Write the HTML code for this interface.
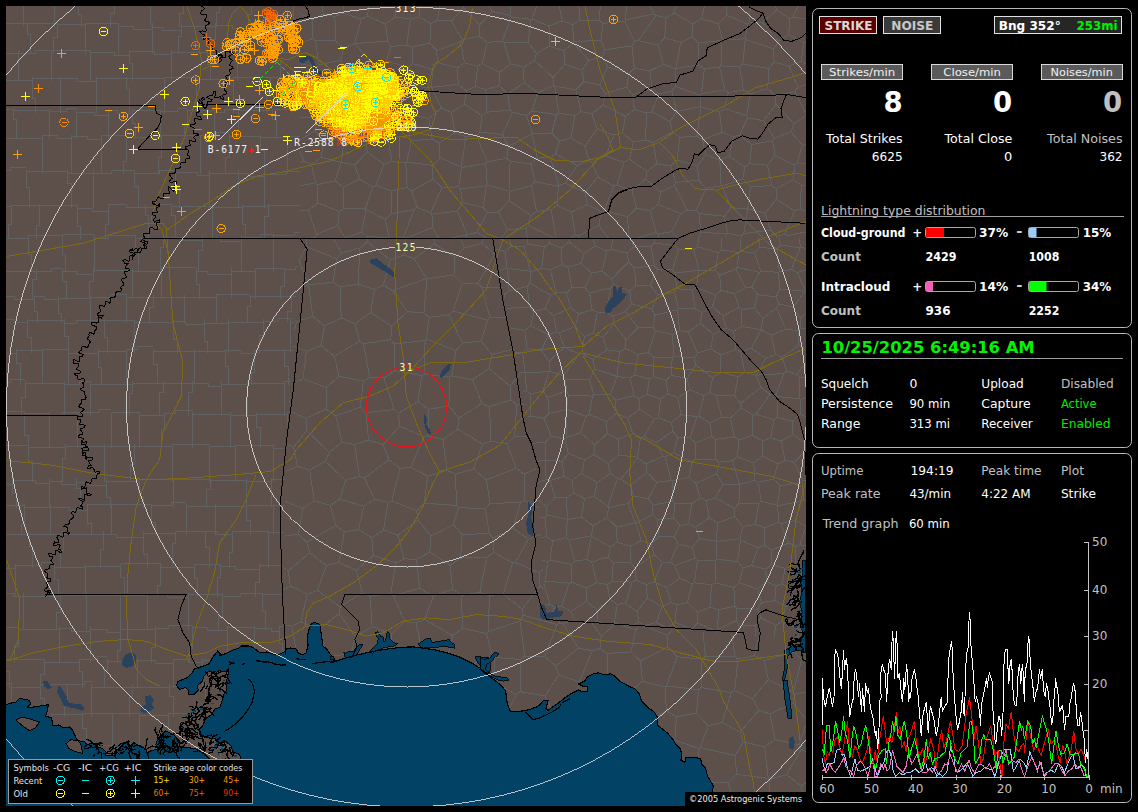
<!DOCTYPE html>
<html><head><meta charset="utf-8"><title>Lightning Detector</title>
<style>
html,body{margin:0;padding:0;background:#000;}
body{width:1138px;height:812px;position:relative;overflow:hidden;}
svg{position:absolute;left:0;top:0;display:block;}
text{font-family:"DejaVu Sans","Liberation Sans",sans-serif;}
</style></head><body>
<svg width="1138" height="812" viewBox="0 0 1138 812">
<rect width="1138" height="812" fill="#000"/>
<svg x="6" y="6" width="800" height="800" viewBox="6 6 800 800" overflow="hidden" shape-rendering="crispEdges">
<rect x="6" y="6" width="800" height="800" fill="#5d4f4a"/>
<path d="M806.0,479.9L802.5,481.0M806.0,451.8L804.8,451.3M804.8,451.3L794.4,462.4M794.4,462.4L802.5,481.0M795.2,564.7L785.2,568.4M795.2,564.7L795.9,546.7M785.2,568.4L771.7,564.7M788.9,543.1L795.9,546.7M788.9,543.1L771.5,550.0M771.7,564.7L771.5,550.0M778.5,522.0L765.0,527.8M778.5,522.0L780.7,523.6M765.0,527.8L764.9,545.5M780.7,523.6L788.9,543.1M764.9,545.5L771.5,550.0M795.2,564.7L798.7,567.7M799.8,544.8L795.9,546.7M799.8,544.8L806.0,545.6M798.7,567.7L802.4,566.6M805.9,565.5L806.0,565.5M798.7,567.7L802.3,576.4M806.0,581.1L805.9,581.1M799.2,238.0L800.6,247.6M800.6,247.6L806.0,248.3M536.1,461.3L545.2,460.5M545.4,442.1L545.6,460.0M545.4,442.1L532.8,443.3M545.2,460.5L545.6,460.0M545.2,460.5L546.2,479.5M537.4,482.6L546.2,479.5M545.6,460.0L562.1,461.2M546.2,479.5L550.0,480.7M550.0,480.7L563.9,476.3M563.9,476.3L562.1,461.2M563.9,476.3L572.0,480.5M568.4,453.5L562.1,461.2M568.4,453.5L584.5,460.0M584.5,460.0L581.6,473.5M572.0,480.5L581.6,473.5M564.6,439.0L551.0,436.1M564.6,439.0L566.8,437.4M566.8,437.4L566.1,409.6M551.0,436.1L544.2,418.3M566.1,409.6L549.0,413.3M544.2,418.3L549.0,413.3M545.4,442.1L551.0,436.1M568.4,453.5L564.6,439.0M594.3,454.5L584.5,460.0M594.3,454.5L594.5,444.8M580.5,432.6L594.5,444.8M580.5,432.6L566.8,437.4M592.6,396.1L568.4,395.1M592.6,396.1L589.3,414.5M589.3,414.5L585.9,416.4M585.9,416.4L566.6,409.2M568.4,395.1L566.6,409.2M580.5,432.6L585.9,416.4M566.1,409.6L566.6,409.2M575.1,326.6L559.0,332.7M575.1,326.6L578.7,313.9M553.7,315.7L570.7,307.7M553.7,315.7L556.7,331.8M556.7,331.8L559.0,332.7M570.7,307.7L578.7,313.9M570.7,307.7L566.5,293.1M591.9,309.7L578.7,313.9M591.9,309.7L589.7,293.2M571.9,287.9L566.5,293.1M571.9,287.9L585.1,287.3M589.7,293.2L585.1,287.3M591.9,309.7L597.4,312.1M589.7,293.2L611.1,287.7M597.4,312.1L605.7,312.0M605.7,312.0L611.1,287.7M699.4,538.6L716.4,541.3M699.4,538.6L695.7,527.4M695.7,527.4L709.2,517.8M716.4,541.3L717.6,523.0M709.2,517.8L717.6,523.0M716.6,541.5L716.4,541.3M716.6,541.5L739.8,538.7M734.7,516.5L742.8,526.7M734.7,516.5L717.6,523.0M739.8,538.7L742.8,526.7M692.5,547.5L699.4,538.6M692.5,547.5L678.3,544.2M688.6,523.9L695.7,527.4M688.6,523.9L679.9,525.6M679.9,525.6L674.1,536.9M678.3,544.2L674.1,536.9M695.1,558.3L692.5,547.5M695.1,558.3L674.6,565.4M674.6,565.4L670.0,562.1M678.3,544.2L670.0,562.1M780.7,523.6L795.2,520.6M799.8,544.8L806.0,526.1M806.0,526.1L795.2,520.6M806.0,526.1L806.0,526.0M806.0,629.5L805.9,629.5M806.0,606.6L805.9,606.7M792.8,590.4L792.1,602.9M792.8,590.4L782.1,583.7M782.1,583.7L776.1,585.8M776.1,585.8L774.8,600.6M774.8,600.6L785.6,606.5M785.6,606.5L792.1,602.9M800.4,583.5L792.8,590.4M800.4,605.8L792.1,602.9M785.2,568.4L782.1,583.7M781.6,621.7L800.2,630.0M781.6,621.7L785.6,606.5M801.9,629.3L800.2,630.0M761.5,602.6L757.8,589.2M761.5,602.6L774.8,600.6M776.1,585.8L766.4,581.3M757.8,589.2L766.4,581.3M771.7,564.7L765.8,569.2M765.8,569.2L766.4,581.3M797.3,272.5L806.0,269.6M797.3,272.5L791.4,269.5M800.6,247.6L800.2,247.8M800.2,247.8L791.4,269.5M797.3,272.5L805.5,290.9M805.5,290.9L804.9,291.2M778.6,272.3L779.6,288.9M778.6,272.3L779.3,271.6M779.3,271.6L791.4,269.5M804.9,291.2L779.6,288.9M805.5,290.9L806.0,291.0M544.2,418.3L530.4,416.0M527.7,417.0L530.4,416.0M522.8,353.0L524.8,372.3M522.8,353.0L515.1,352.2M519.2,373.2L524.8,372.3M550.1,604.3L543.7,583.5M550.1,604.3L554.4,607.5M543.7,582.7L545.3,581.0M554.4,607.5L561.7,606.3M561.7,606.3L569.2,583.2M545.3,581.0L569.2,583.2M545.3,581.0L547.7,561.8M542.3,560.3L547.7,561.8M571.5,564.3L550.0,560.2M571.5,564.3L571.2,581.9M569.2,583.2L571.2,581.9M547.7,561.8L550.0,560.2M555.1,497.7L550.0,480.7M555.1,497.7L546.5,506.6M546.5,506.6L538.5,500.2M594.1,496.1L597.2,482.6M594.1,496.1L584.6,498.6M597.2,482.6L581.6,473.5M572.0,480.5L573.7,492.8M584.6,498.6L573.7,492.8M555.1,497.7L566.9,497.8M546.5,506.6L547.1,515.0M547.1,515.0L567.1,519.2M567.1,519.2L566.9,497.8M566.9,497.8L573.7,492.8M547.8,397.4L542.9,391.0M547.8,397.4L566.3,391.0M542.9,391.0L549.2,371.7M566.3,391.0L565.7,379.0M549.2,371.7L549.8,371.4M549.8,371.4L563.3,375.8M565.7,379.0L563.3,375.8M549.0,413.3L547.8,397.4M530.4,416.0L530.6,394.2M530.6,394.2L542.9,391.0M568.4,395.1L566.3,391.0M530.6,394.2L526.3,390.7M526.3,390.7L525.5,372.8M525.5,372.8L549.2,371.7M589.5,379.7L593.7,394.5M589.5,379.7L565.7,379.0M593.7,394.5L592.6,396.1M579.3,354.1L564.4,347.2M579.3,354.1L563.3,375.8M564.4,347.2L549.1,361.2M549.1,361.2L549.8,371.4M594.5,444.8L607.3,433.6M589.3,414.5L606.2,421.4M606.2,421.4L607.3,433.6M593.7,394.5L610.6,394.2M616.2,413.5L606.2,421.4M616.2,413.5L615.6,400.4M610.6,394.2L615.6,400.4M706.1,500.6L715.4,498.1M706.1,500.6L709.2,517.8M734.7,516.5L734.7,508.3M715.4,498.1L734.7,508.3M755.3,524.3L758.8,503.0M755.3,524.3L742.8,526.7M758.8,503.0L738.9,503.3M738.9,503.3L734.7,508.3M672.0,481.1L689.2,477.1M672.0,481.1L672.9,501.1M674.9,503.0L672.9,501.1M674.9,503.0L691.8,503.5M691.8,503.5L700.2,497.8M700.2,497.8L695.9,483.5M695.9,483.5L689.2,477.1M688.6,523.9L691.8,503.5M679.9,525.6L673.6,518.0M673.6,518.0L674.9,503.0M706.1,500.6L700.2,497.8M715.4,498.1L722.9,484.2M716.7,473.9L722.9,484.2M716.7,473.9L695.9,483.5M567.8,267.1L571.9,287.9M567.8,267.1L562.2,264.6M556.2,292.0L550.2,269.8M556.2,292.0L566.5,293.1M562.2,264.6L550.2,269.8M550.7,295.3L529.7,283.1M550.7,295.3L545.0,308.6M545.0,308.6L534.0,311.4M529.7,283.1L527.4,286.4M527.4,286.4L529.1,307.0M534.0,311.4L529.1,307.0M553.7,315.7L545.0,308.6M556.2,292.0L550.7,295.3M585.1,287.3L591.8,273.0M611.6,279.2L613.5,284.7M611.6,279.2L602.1,271.1M611.1,287.7L613.5,284.7M591.8,273.0L602.1,271.1M567.8,267.1L581.1,263.4M591.8,273.0L581.1,263.4M569.1,241.9L570.3,238.0M569.1,241.9L583.9,253.6M583.9,253.6L595.3,245.9M595.3,245.9L592.7,238.0M561.2,247.9L562.2,264.6M561.2,247.9L569.1,241.9M581.1,263.4L583.9,253.6M602.1,271.1L606.8,251.1M606.8,251.1L595.3,245.9M611.6,279.2L628.6,261.9M635.8,285.7L634.6,268.0M635.8,285.7L629.8,291.0M629.8,291.0L613.5,284.7M628.6,261.9L634.6,268.0M606.8,251.1L611.2,249.4M611.2,249.4L627.0,253.1M628.6,261.9L627.0,253.1M713.4,334.2L700.3,323.3M713.4,334.2L710.6,348.7M710.6,348.7L697.5,353.2M697.5,353.2L688.2,332.0M688.2,332.0L700.3,323.3M677.5,309.8L678.4,308.3M677.5,309.8L679.6,330.7M688.2,332.0L679.6,330.7M700.3,323.3L702.0,312.8M702.0,312.8L695.0,308.7M678.4,308.3L695.0,308.7M631.3,303.7L625.6,311.6M631.3,303.7L652.0,309.1M625.6,311.6L638.0,327.6M638.0,327.6L653.4,327.6M653.4,327.6L654.7,315.2M652.0,309.1L654.7,315.2M629.8,291.0L631.3,303.7M605.7,312.0L613.5,316.3M613.5,316.3L625.6,311.6M650.2,285.3L635.8,285.7M650.2,285.3L657.5,294.8M657.5,294.8L652.0,309.1M613.5,316.3L613.9,324.0M613.9,324.0L626.0,339.8M626.0,339.8L638.0,327.6M657.5,294.8L674.5,292.3M677.5,309.8L654.7,315.2M674.5,292.3L678.4,308.3M550.1,604.3L545.1,604.8M554.4,607.5L549.6,620.3M800.2,630.0L796.3,639.3M780.2,485.7L777.4,505.4M780.2,485.7L801.9,482.4M801.9,482.4L803.9,499.6M777.7,505.8L777.4,505.4M777.7,505.8L801.3,501.3M803.9,499.6L801.3,501.3M761.2,501.3L777.4,505.4M761.2,501.3L758.3,482.2M758.3,482.2L773.4,479.2M773.4,479.2L780.2,485.7M794.4,462.4L785.1,460.5M785.1,460.5L777.9,464.0M802.5,481.0L801.9,482.4M777.9,464.0L773.4,479.2M806.0,500.9L803.9,499.6M778.5,522.0L777.7,505.8M765.0,527.8L755.3,524.3M758.8,503.0L761.2,501.3M795.2,520.6L801.3,501.3M737.6,561.5L742.7,567.9M737.6,561.5L740.5,540.3M740.5,540.3L758.1,547.7M758.1,547.7L751.5,565.5M751.5,565.5L742.7,567.9M716.6,541.5L716.8,559.2M739.8,538.7L740.5,540.3M716.8,559.2L737.6,561.5M764.9,545.5L758.1,547.7M765.8,569.2L751.5,565.5M757.8,589.2L739.4,582.8M739.4,582.8L742.7,567.9M761.5,602.6L757.6,609.2M733.9,587.6L739.4,582.8M733.9,587.6L734.7,606.2M734.7,606.2L736.5,608.2M736.5,608.2L757.6,609.2M781.6,621.7L775.8,625.3M775.8,625.3L761.1,617.8M757.6,609.2L761.1,617.8M779.6,238.0L780.2,245.1M780.2,245.1L776.9,248.8M776.9,248.8L759.4,247.4M759.4,247.4L758.9,238.0M800.2,247.8L780.2,245.1M779.3,271.6L776.9,248.8M778.6,272.3L760.8,271.2M760.8,271.2L754.6,252.6M754.6,252.6L759.4,247.4M740.1,238.0L740.3,251.7M754.6,252.6L740.3,251.7M804.9,291.2L793.2,307.2M806.0,313.4L800.3,318.1M793.2,307.2L800.3,318.1M806.0,328.3L800.3,328.3M800.3,318.1L800.3,328.3M776.4,297.1L778.6,303.8M776.4,297.1L757.8,294.5M757.8,294.5L754.1,307.8M776.6,307.8L778.6,303.8M776.6,307.8L763.1,318.5M763.1,318.5L754.1,307.8M779.6,288.9L776.4,297.1M793.2,307.2L778.6,303.8M759.6,272.3L737.2,267.4M759.6,272.3L751.7,287.0M745.2,287.7L751.7,287.0M745.2,287.7L736.1,268.9M736.1,268.9L737.2,267.4M760.8,271.2L759.6,272.3M740.3,251.7L738.9,252.6M738.9,252.6L737.2,267.4M757.8,294.5L751.7,287.0M734.7,293.8L745.2,287.7M734.7,293.8L721.1,290.4M719.7,275.3L721.1,290.4M719.7,275.3L736.1,268.9M509.2,238.0L511.2,246.4M511.2,246.4L505.3,251.4M505.3,251.4L495.2,249.2M505.3,251.4L506.9,267.8M499.3,270.6L506.9,267.8M541.1,350.4L527.1,348.8M541.1,350.4L548.8,334.6M527.1,348.8L524.8,330.4M548.8,334.6L530.8,325.8M530.8,325.8L524.8,330.4M522.8,353.0L527.1,348.8M524.8,372.3L525.5,372.8M549.1,361.2L541.1,350.4M556.7,331.8L548.8,334.6M559.0,332.7L564.4,347.2M510.4,327.9L524.8,330.4M534.0,311.4L530.8,325.8M506.6,308.4L529.1,307.0M799.1,377.2L797.1,374.6M799.1,377.2L799.5,398.7M797.1,374.6L786.5,370.9M799.5,398.7L777.7,396.6M783.9,373.4L786.5,370.9M783.9,373.4L775.8,395.0M775.8,395.0L777.7,396.6M806.0,361.7L797.1,374.6M806.0,377.3L799.1,377.2M800.2,399.4L806.0,398.3M800.2,399.4L799.5,398.7M762.8,440.9L752.3,435.2M762.8,440.9L770.5,437.8M770.5,437.8L774.1,419.5M752.3,435.2L753.0,415.2M774.1,419.5L755.8,414.3M753.0,415.2L755.8,414.3M785.1,460.5L781.2,441.0M762.3,456.2L777.9,464.0M762.3,456.2L762.8,440.9M781.2,441.0L770.5,437.8M777.6,417.4L774.1,419.5M777.6,417.4L777.7,396.6M775.8,395.0L770.0,394.3M770.0,394.3L755.8,414.3M792.2,421.4L792.6,434.6M792.2,421.4L800.3,414.0M800.3,414.0L806.0,417.0M792.6,434.6L804.4,442.4M804.4,442.4L806.0,441.1M781.2,441.0L792.6,434.6M777.6,417.4L792.2,421.4M800.2,399.4L800.3,414.0M804.8,451.3L804.4,442.4M526.3,390.7L522.8,391.8M596.7,582.6L586.2,588.0M596.7,582.6L591.8,562.0M591.8,562.0L587.0,559.5M586.2,588.0L571.2,581.9M571.5,564.3L574.5,561.2M587.0,559.5L574.5,561.2M611.9,581.4L632.1,582.1M611.9,581.4L613.2,563.1M635.1,568.0L630.3,562.3M635.1,568.0L636.2,580.2M636.2,580.2L632.1,582.1M630.3,562.3L613.2,563.1M591.8,562.0L608.4,556.8M591.4,536.0L587.0,559.5M591.4,536.0L610.5,547.2M610.5,547.2L608.4,556.8M596.7,582.6L607.3,584.7M607.3,584.7L611.9,581.4M608.4,556.8L613.2,563.1M608.7,507.6L606.7,517.7M608.7,507.6L628.1,503.6M606.7,517.7L616.8,527.1M628.1,503.6L635.2,522.8M635.2,522.8L616.8,527.1M630.3,562.3L630.8,546.3M610.5,547.2L617.1,542.4M630.8,546.3L617.1,542.4M546.4,536.6L552.8,541.2M546.4,536.6L540.9,538.0M552.8,541.2L550.0,560.2M546.4,536.6L545.4,517.1M545.4,517.1L539.6,518.0M545.4,517.1L547.1,515.0M697.3,246.8L699.1,238.0M697.3,246.8L718.2,252.7M721.2,238.0L721.6,249.9M721.6,249.9L718.2,252.7M693.8,249.7L697.3,246.8M693.8,249.7L698.9,270.2M698.9,270.2L715.6,270.5M715.6,270.5L718.2,252.7M738.9,252.6L721.6,249.9M719.7,275.3L715.6,270.5M733.6,331.2L726.3,328.2M733.6,331.2L741.8,326.4M726.3,328.2L722.9,316.0M722.9,316.0L738.9,307.3M741.8,326.4L741.6,309.8M738.9,307.3L741.6,309.8M713.4,334.2L726.3,328.2M712.4,306.4L702.0,312.8M712.4,306.4L722.9,316.0M712.4,306.4L716.0,295.1M734.7,293.8L738.9,307.3M721.1,290.4L716.0,295.1M761.0,329.7L763.1,318.5M761.0,329.7L741.8,326.4M754.1,307.8L741.6,309.8M679.6,330.7L672.4,334.5M653.4,327.6L655.4,330.7M655.4,330.7L672.4,334.5M697.5,353.2L694.5,357.8M694.5,357.8L673.8,356.5M672.4,334.5L673.8,356.5M695.8,365.1L694.5,357.8M695.8,365.1L687.0,378.6M672.1,357.9L673.8,356.5M672.1,357.9L671.6,375.3M687.0,378.6L671.6,375.3M610.6,394.2L617.0,376.5M615.6,400.4L634.1,395.8M617.0,376.5L629.9,378.1M629.9,378.1L634.1,395.8M607.9,506.4L594.1,496.1M607.9,506.4L617.4,478.5M597.2,482.6L610.3,473.4M617.4,478.5L610.3,473.4M607.9,506.4L608.7,507.6M633.8,496.2L629.9,485.4M633.8,496.2L628.1,503.6M629.9,485.4L620.8,479.2M617.4,478.5L620.8,479.2M594.3,454.5L608.3,463.7M610.3,473.4L608.3,463.7M633.8,496.2L648.4,498.6M648.4,498.6L656.9,482.2M629.9,485.4L646.8,472.6M646.8,472.6L656.9,482.2M648.4,498.6L653.0,505.2M653.0,505.2L672.9,501.1M672.0,481.1L671.1,480.6M656.9,482.2L671.1,480.6M762.3,456.2L753.8,462.9M758.3,482.2L755.0,480.2M753.8,462.9L755.0,480.2M738.9,503.3L739.7,484.6M755.0,480.2L739.7,484.6M722.9,484.2L739.2,484.2M739.7,484.6L739.2,484.2M716.7,473.9L719.0,462.2M739.2,484.2L732.4,460.8M719.0,462.2L732.4,460.8M753.8,462.9L737.4,456.9M737.4,456.9L732.4,460.8M752.3,435.2L738.9,440.1M737.4,456.9L738.9,440.1M550.2,269.8L541.8,268.3M529.7,283.1L531.1,271.7M541.8,268.3L531.1,271.7M527.4,286.4L509.0,290.9M507.7,268.3L509.0,290.9M507.7,268.3L530.5,271.2M531.1,271.7L530.5,271.2M511.2,246.4L524.1,246.8M507.7,268.3L506.9,267.8M530.5,271.2L524.1,246.8M611.2,249.4L612.7,238.0M627.0,253.1L633.3,247.1M631.8,238.0L633.3,247.1M657.7,269.3L654.2,265.5M657.7,269.3L672.4,269.8M654.2,265.5L651.1,246.6M672.4,269.8L678.5,249.9M678.5,249.9L674.9,245.6M674.9,245.6L654.5,243.1M654.5,243.1L651.1,246.6M650.2,285.3L657.7,269.3M634.6,268.0L654.2,265.5M633.3,247.1L651.1,246.6M693.8,249.7L678.5,249.9M676.2,238.0L674.9,245.6M654.2,238.0L654.5,243.1M696.4,287.5L698.7,270.4M696.4,287.5L692.4,289.8M692.4,289.8L676.8,288.8M698.7,270.4L674.9,273.0M674.9,273.0L676.8,288.8M698.9,270.2L698.7,270.4M716.0,295.1L696.4,287.5M695.0,308.7L692.4,289.8M674.5,292.3L676.8,288.8M672.4,269.8L674.9,273.0M589.5,379.7L594.9,369.0M617.0,376.5L617.0,376.5M617.0,376.5L594.9,369.0M607.3,584.7L610.1,599.3M625.6,603.5L632.1,582.1M625.6,603.5L617.3,604.2M610.1,599.3L617.3,604.2M586.2,588.0L586.1,601.4M561.7,606.3L571.1,611.4M571.1,611.4L586.1,601.4M610.1,599.3L596.9,609.7M586.1,601.4L596.9,609.7M630.6,626.1L630.4,626.5M630.6,626.1L614.2,623.4M614.2,623.4L611.0,625.0M638.9,622.3L637.1,611.5M638.9,622.3L630.6,626.1M637.1,611.5L625.6,603.5M617.3,604.2L614.2,623.4M596.9,609.7L597.5,620.5M597.5,620.5L604.1,624.5M644.7,625.6L638.9,622.3M644.7,625.6L645.0,627.6M644.7,625.6L656.2,622.4M656.2,622.4L667.0,627.7M667.4,629.3L667.0,627.7M715.5,582.9L715.9,560.1M715.5,582.9L711.6,584.8M711.6,584.8L694.4,582.8M694.4,582.8L697.4,560.5M697.4,560.5L715.9,560.1M733.9,587.6L715.5,582.9M716.8,559.2L715.9,560.1M734.7,606.2L718.3,609.8M718.3,609.8L709.9,607.0M709.9,607.0L711.6,584.8M695.1,558.3L697.4,560.5M736.5,608.2L736.1,620.7M761.1,617.8L755.5,625.2M755.5,625.2L739.3,626.4M739.3,626.4L736.1,620.7M718.3,609.8L717.7,629.7M736.1,620.7L717.7,629.7M755.5,625.2L755.5,636.1M739.3,626.4L739.3,634.9M785.9,329.3L798.2,330.7M785.9,329.3L771.1,335.1M771.1,335.1L775.6,354.3M799.0,345.2L782.3,357.4M799.0,345.2L798.2,330.7M775.6,354.3L782.3,357.4M800.3,328.3L798.2,330.7M776.6,307.8L785.9,329.3M761.1,329.8L771.1,335.1M761.1,329.8L761.0,329.7M806.0,350.7L799.0,345.2M786.5,370.9L782.3,357.4M504.7,298.2L505.0,294.4M505.0,294.4L503.7,293.4M509.0,290.9L505.0,294.4M656.2,622.4L662.1,606.6M637.1,611.5L647.2,598.2M662.1,606.6L647.2,598.2M636.2,580.2L646.4,584.8M647.2,598.2L646.4,584.8M662.4,562.3L654.1,554.5M662.4,562.3L653.7,581.9M654.1,554.5L635.1,568.0M653.7,581.9L646.4,584.8M565.9,537.7L567.3,519.4M565.9,537.7L569.3,540.1M569.3,540.1L591.3,535.7M567.3,519.4L581.2,517.1M581.2,517.1L593.0,525.9M593.0,525.9L591.3,535.7M552.8,541.2L565.9,537.7M567.1,519.2L567.3,519.4M574.5,561.2L569.3,540.1M591.4,536.0L591.3,535.7M584.6,498.6L581.2,517.1M606.7,517.7L593.0,525.9M616.8,527.1L617.1,542.4M636.0,523.2L641.2,540.6M636.0,523.2L652.5,514.6M652.5,514.6L657.3,519.5M657.3,519.5L658.9,537.0M641.2,540.6L651.1,543.9M658.9,537.0L651.1,543.9M635.2,522.8L636.0,523.2M630.8,546.3L641.2,540.6M653.0,505.2L652.5,514.6M673.6,518.0L657.3,519.5M674.1,536.9L658.9,537.0M654.1,554.5L651.1,543.9M662.4,562.3L670.0,562.1M783.9,373.4L756.4,375.2M770.0,394.3L760.8,387.4M756.4,375.2L760.8,387.4M753.0,415.2L741.5,408.0M741.5,408.0L740.6,403.4M760.8,387.4L740.6,403.4M695.8,365.1L712.7,377.7M710.6,348.7L721.0,354.8M712.7,377.7L720.9,372.1M721.0,354.8L720.9,372.1M733.6,331.2L736.0,349.3M721.0,354.8L736.0,349.3M709.8,392.5L716.0,395.4M709.8,392.5L712.7,377.7M716.0,395.4L734.7,395.9M734.7,395.9L738.0,376.9M720.9,372.1L738.0,376.9M709.8,392.5L704.0,395.6M687.0,378.6L690.2,390.0M704.0,395.6L690.2,390.0M625.4,348.6L619.6,351.6M625.4,348.6L638.1,354.4M629.9,378.1L634.7,375.1M617.0,376.5L619.6,351.6M634.7,375.1L638.1,354.4M625.4,348.6L626.0,339.8M655.4,330.7L648.1,352.6M638.1,354.4L648.1,352.6M672.1,357.9L653.2,356.9M653.2,356.9L648.1,352.6M671.6,375.3L666.1,380.3M690.2,390.0L677.8,397.7M677.8,397.7L667.9,393.8M667.9,393.8L666.1,380.3M653.2,356.9L653.6,376.6M666.1,380.3L653.6,376.6M634.7,375.1L649.3,379.1M653.6,376.6L649.3,379.1M616.2,413.5L627.6,418.1M607.3,433.6L618.0,439.2M627.6,418.1L632.7,433.6M618.0,439.2L632.7,433.6M608.3,463.7L618.3,454.9M618.0,439.2L618.3,454.9M689.2,477.1L692.0,462.2M692.0,462.2L695.2,459.4M719.0,462.2L715.8,459.4M695.2,459.4L715.8,459.4M704.0,395.6L698.8,416.0M677.8,397.7L680.9,414.8M698.8,416.0L697.1,416.6M680.9,414.8L697.1,416.6M709.9,423.1L712.1,436.5M709.9,423.1L721.8,417.3M734.2,436.9L715.3,439.4M734.2,436.9L730.4,418.0M712.1,436.5L715.3,439.4M730.4,418.0L721.8,417.3M698.8,416.0L709.9,423.1M695.7,443.0L712.1,436.5M695.7,443.0L690.0,438.0M690.0,438.0L697.1,416.6M716.0,395.4L721.8,417.3M738.9,440.1L734.2,436.9M715.8,459.4L715.3,439.4M741.5,408.0L730.4,418.0M695.2,459.4L695.7,443.0M740.6,403.4L734.7,395.9M527.2,243.7L544.3,246.8M527.2,243.7L528.0,238.0M548.9,238.0L549.5,243.4M549.5,243.4L544.3,246.8M541.8,268.3L544.3,246.8M524.1,246.8L527.2,243.7M561.2,247.9L549.5,243.4M602.9,337.3L606.9,349.9M602.9,337.3L593.4,333.2M606.9,349.9L592.8,359.5M584.4,336.6L581.9,353.5M584.4,336.6L593.4,333.2M581.9,353.5L592.8,359.5M613.9,324.0L602.9,337.3M619.6,351.6L606.9,349.9M597.4,312.1L593.4,333.2M594.9,369.0L592.8,359.5M575.1,326.6L584.4,336.6M579.3,354.1L581.9,353.5M575.0,622.0L575.5,622.3M575.0,622.0L574.8,622.2M571.1,611.4L575.0,622.0M597.5,620.5L591.3,623.5M716.7,631.2L717.1,633.2M716.7,631.2L697.3,622.9M691.9,631.2L692.3,628.8M697.3,622.9L692.3,628.8M717.7,629.7L716.7,631.2M709.9,607.0L697.9,612.4M697.9,612.4L697.3,622.9M667.0,627.7L674.9,622.5M674.9,622.5L692.3,628.8M775.8,625.3L773.7,637.5M676.9,604.8L671.0,602.7M676.9,604.8L687.3,602.7M671.0,602.7L666.6,587.5M687.3,602.7L692.3,583.9M666.6,587.5L680.0,578.4M680.0,578.4L692.3,583.9M674.9,622.5L676.9,604.8M662.1,606.6L671.0,602.7M697.9,612.4L687.3,602.7M653.7,581.9L666.6,587.5M694.4,582.8L692.3,583.9M674.6,565.4L680.0,578.4M751.5,348.2L765.6,358.4M751.5,348.2L740.8,352.1M740.8,352.1L744.8,372.6M765.6,358.4L756.4,375.2M756.4,375.2L744.8,372.6M761.1,329.8L751.5,348.2M775.6,354.3L765.6,358.4M736.0,349.3L740.8,352.1M738.0,376.9L744.8,372.6M756.4,375.2L756.4,375.2M638.9,398.6L647.0,394.3M638.9,398.6L639.5,409.2M647.0,394.3L660.4,399.1M639.5,409.2L654.5,419.1M660.4,399.1L658.5,417.8M658.5,417.8L654.5,419.1M634.1,395.8L638.9,398.6M649.3,379.1L647.0,394.3M627.6,418.1L639.5,409.2M667.9,393.8L660.4,399.1M671.2,422.4L680.9,414.8M671.2,422.4L658.5,417.8M620.8,479.2L637.7,457.9M646.8,472.6L645.9,464.2M645.9,464.2L637.7,457.9M618.3,454.9L637.3,457.2M637.7,457.9L637.3,457.2M632.7,433.6L640.6,437.4M637.3,457.2L640.6,437.4M654.5,419.1L643.9,436.2M643.9,436.2L640.6,437.4M673.0,431.2L677.8,437.7M673.0,431.2L656.1,442.6M677.8,437.7L673.9,452.6M656.1,442.6L663.0,456.0M673.9,452.6L665.3,456.6M665.3,456.6L663.0,456.0M690.0,438.0L677.8,437.7M671.2,422.4L673.0,431.2M643.9,436.2L656.1,442.6M692.0,462.2L673.9,452.6M645.9,464.2L663.0,456.0M671.1,480.6L665.3,456.6M527.2,238.0L526.1,228.0M503.2,238.0L502.5,236.9M526.1,228.0L507.3,229.9M502.5,236.9L507.3,229.9M528.2,225.5L526.1,228.0M528.2,225.5L554.0,238.0M806.0,231.9L788.6,235.4M801.4,185.1L800.0,209.2M801.4,185.1L806.0,185.2M806.0,211.0L800.0,209.2M801.4,185.1L793.4,179.8M793.4,179.8L794.5,165.1M794.5,165.1L797.1,162.8M806.0,164.0L797.1,162.8M343.0,6.0L343.0,12.9M334.9,16.7L343.0,12.9M334.9,16.7L323.2,14.0M322.2,6.0L323.2,14.0M388.3,87.2L364.1,91.5M388.3,87.2L381.6,66.9M374.9,66.4L381.6,66.9M374.9,66.4L358.9,74.9M358.9,74.9L357.9,85.1M357.9,85.1L364.1,91.5M341.2,95.2L333.1,88.4M341.2,95.2L357.9,85.1M333.1,88.4L343.5,66.5M343.5,66.5L358.9,74.9M300.0,90.9L312.4,93.0M312.4,93.0L315.6,117.0M315.6,117.0L300.0,117.5M300.0,63.7L316.6,67.3M316.6,67.3L318.4,87.8M318.4,87.8L312.4,93.0M502.5,236.9L499.6,238.0M598.8,225.6L601.5,212.0M598.8,225.6L578.2,235.9M601.5,212.0L587.3,204.6M587.3,204.6L571.5,212.0M571.5,212.0L575.3,235.3M578.2,235.9L575.3,235.3M579.6,238.0L578.2,235.9M608.3,238.0L598.8,225.6M556.2,238.0L551.1,209.6M569.7,238.0L575.3,235.3M551.1,209.6L557.0,205.3M557.0,205.3L571.5,212.0M310.6,238.0L315.0,237.9M300.0,210.8L308.4,210.0M308.4,210.0L316.6,234.4M316.6,234.4L315.0,237.9M467.0,238.0L466.9,234.9M466.9,234.9L450.8,238.0M788.6,235.4L784.9,234.2M800.0,209.2L794.4,210.8M794.4,210.8L784.9,234.2M741.7,238.0L741.1,236.1M776.4,238.0L776.9,236.5M741.1,236.1L743.7,233.7M743.7,233.7L770.5,230.0M770.5,230.0L776.9,236.5M784.9,234.2L776.9,236.5M747.7,208.7L750.6,186.6M747.7,208.7L747.8,208.9M747.8,208.9L765.2,213.0M765.2,213.0L776.3,199.3M750.6,186.6L771.8,185.7M776.3,199.3L776.0,188.7M771.8,185.7L776.0,188.7M743.7,233.7L747.8,208.9M770.5,230.0L765.2,213.0M794.4,210.8L776.3,199.3M793.4,179.8L776.0,188.7M790.8,131.8L802.3,145.1M790.8,131.8L794.0,123.9M794.0,123.9L806.0,115.5M802.3,145.1L806.0,144.8M775.9,104.3L794.0,123.9M775.9,104.3L763.6,120.7M763.6,120.7L774.2,138.2M774.2,138.2L790.8,131.8M797.1,162.8L802.3,145.1M300.0,13.4L312.9,19.8M312.9,19.8L312.4,38.7M312.4,38.7L300.0,43.2M323.2,14.0L312.9,19.8M315.7,40.8L318.7,65.0M315.7,40.8L335.4,41.0M318.7,65.0L340.7,60.3M335.4,41.0L343.9,47.9M343.9,47.9L340.7,60.3M316.6,67.3L318.7,65.0M312.4,38.7L315.7,40.8M334.9,16.7L335.4,41.0M318.4,87.8L333.1,88.4M343.5,66.5L340.7,60.3M363.7,111.2L388.4,108.8M363.7,111.2L355.7,116.7M366.5,140.4L386.1,133.8M366.5,140.4L360.6,135.3M388.4,108.8L386.1,133.8M360.6,135.3L355.7,116.7M354.6,165.1L367.1,151.8M354.6,165.1L341.3,162.2M367.1,151.8L366.5,140.4M341.3,162.2L343.9,142.6M360.6,135.3L343.9,142.6M341.2,95.2L345.2,112.8M363.7,111.2L364.1,91.5M345.2,112.8L355.7,116.7M300.0,162.8L303.7,161.3M303.7,161.3L300.0,151.1M486.3,238.0L476.8,232.5M466.9,234.9L467.2,234.6M467.2,234.6L476.8,232.5M507.3,229.9L498.6,212.0M498.6,212.0L487.5,212.4M476.8,232.5L487.5,212.4M531.5,185.7L536.6,211.5M531.5,185.7L509.3,191.6M509.2,200.7L509.3,191.6M509.2,200.7L530.9,215.6M530.9,215.6L536.6,211.5M534.9,181.6L531.5,185.7M534.9,181.6L558.4,186.4M558.4,186.4L557.0,205.3M551.1,209.6L536.6,211.5M528.2,225.5L530.9,215.6M498.6,212.0L509.2,200.7M534.9,181.6L530.9,164.0M509.0,191.1L510.1,161.3M509.0,191.1L509.3,191.6M530.9,164.0L510.1,161.3M461.5,167.5L461.1,167.1M461.5,167.5L485.7,163.5M461.1,167.1L465.9,136.6M485.7,163.5L487.2,161.7M487.2,161.7L476.4,135.5M465.9,136.6L476.4,135.5M458.8,186.9L442.1,187.4M458.8,186.9L461.5,167.5M442.1,187.4L433.0,179.2M440.1,157.6L461.1,167.1M440.1,157.6L432.7,165.4M432.7,165.4L433.0,179.2M439.2,143.0L454.7,132.8M439.2,143.0L440.1,157.6M454.7,132.8L465.9,136.6M487.2,184.9L509.0,191.1M487.2,184.9L485.7,163.5M510.1,161.3L506.7,158.3M506.7,158.3L487.2,161.7M636.9,238.0L656.3,232.5M656.3,232.5L658.7,233.8M658.7,238.0L658.7,233.8M658.7,233.8L671.5,231.7M678.0,238.0L671.5,231.7M656.3,232.5L649.9,210.8M649.9,210.8L658.5,204.4M658.5,204.4L680.6,213.6M671.5,231.7L680.6,213.6M724.9,89.9L719.5,66.9M724.9,89.9L701.4,93.5M719.5,66.9L704.4,68.8M701.4,93.5L704.4,68.8M604.2,210.6L627.6,216.6M604.2,210.6L613.9,186.0M631.9,190.5L636.6,208.0M631.9,190.5L616.8,185.3M627.6,216.6L636.6,208.0M613.9,186.0L616.8,185.3M628.8,238.0L627.6,216.6M601.5,212.0L604.2,210.6M587.3,204.6L585.3,192.7M585.3,192.7L597.7,177.0M597.7,177.0L613.9,186.0M649.9,210.8L636.6,208.0M658.5,204.4L660.6,192.1M660.6,192.1L645.9,178.9M645.9,178.9L631.9,190.5M629.6,159.4L623.8,162.3M629.6,159.4L647.0,171.6M623.8,162.3L616.8,185.3M647.0,171.6L645.9,178.9M559.0,185.6L565.4,183.1M559.0,185.6L550.2,157.6M565.4,183.1L577.2,165.5M577.2,165.5L555.6,153.9M550.2,157.6L555.6,153.9M558.4,186.4L559.0,185.6M585.3,192.7L565.4,183.1M537.2,158.1L530.9,164.0M537.2,158.1L550.2,157.6M391.8,161.6L405.7,163.0M391.8,161.6L387.3,134.7M387.3,134.7L409.3,138.2M406.7,162.1L405.7,163.0M406.7,162.1L411.4,140.8M409.3,138.2L411.4,140.8M367.1,151.8L383.9,164.4M386.1,133.8L387.3,134.7M383.9,164.4L391.8,161.6M439.2,143.0L432.2,139.1M432.7,165.4L406.7,162.1M432.2,139.1L411.4,140.8M315.0,237.9L315.0,238.0M432.2,139.1L428.7,118.4M409.3,138.2L410.8,114.8M428.7,118.4L410.8,114.8M454.7,132.8L451.5,112.3M451.5,112.3L441.2,107.9M428.7,118.4L441.2,107.9M438.3,238.0L432.8,227.5M406.6,238.0L406.5,237.9M432.8,227.5L406.5,237.9M467.2,234.6L457.5,211.1M457.5,211.1L431.9,214.3M432.8,227.5L431.9,214.3M706.1,188.2L696.2,210.1M706.1,188.2L698.7,180.1M698.7,180.1L675.9,182.5M687.3,210.1L696.2,210.1M687.3,210.1L674.4,185.5M674.4,185.5L675.9,182.5M697.6,165.8L677.0,159.9M697.6,165.8L698.7,180.1M677.0,159.9L670.6,165.8M670.6,165.8L675.9,182.5M660.6,192.1L674.4,185.5M680.6,213.6L687.3,210.1M647.0,171.6L656.9,163.9M656.9,163.9L670.6,165.8M697.6,165.8L705.8,154.6M705.8,154.6L719.8,160.3M706.1,188.2L721.1,185.8M719.8,160.3L721.1,185.8M731.0,207.8L722.1,186.2M731.0,207.8L747.7,208.7M750.6,186.6L742.6,178.9M742.6,178.9L722.1,186.2M696.9,136.3L702.4,139.8M696.9,136.3L701.0,107.0M702.4,139.8L722.0,132.3M722.0,132.3L719.5,112.0M701.0,107.0L719.5,112.0M705.8,154.6L702.4,139.8M680.1,137.3L677.0,159.9M680.1,137.3L696.9,136.3M719.8,160.3L729.2,155.9M722.0,132.3L733.4,136.9M733.4,136.9L729.2,155.9M747.7,118.0L739.4,135.0M747.7,118.0L746.6,115.4M724.4,108.7L746.6,115.4M724.4,108.7L719.5,112.0M733.4,136.9L739.4,135.0M742.6,178.9L745.0,167.2M721.1,185.8L722.1,186.2M729.2,155.9L745.0,167.2M775.1,155.7L767.3,165.1M775.1,155.7L772.7,140.9M772.7,140.9L751.7,144.5M767.3,165.1L749.5,163.7M749.5,163.7L751.7,144.5M794.5,165.1L775.1,155.7M771.8,185.7L767.3,165.1M774.2,138.2L772.7,140.9M763.6,120.7L747.7,118.0M739.4,135.0L751.7,144.5M745.0,167.2L749.5,163.7M806.0,41.9L803.6,42.4M806.0,63.9L801.3,60.9M801.3,60.9L803.6,42.4M775.9,104.3L775.7,95.6M806.0,113.5L794.5,91.6M775.7,95.6L794.5,91.6M806.0,84.7L797.9,87.3M801.3,60.9L789.0,66.2M789.0,66.2L797.9,87.3M797.9,87.3L794.5,91.6M511.2,17.1L531.0,19.4M511.2,17.1L502.3,41.2M531.0,19.4L528.3,42.9M528.3,42.9L503.8,42.6M502.3,41.2L503.8,42.6M510.0,15.5L510.9,6.0M510.0,15.5L492.3,11.3M489.4,6.0L492.3,11.3M511.2,17.1L510.0,15.5M531.0,19.4L532.1,18.9M532.1,18.9L536.7,6.0M806.0,19.0L792.4,17.1M788.6,34.7L803.6,42.4M788.6,34.7L790.0,18.8M790.0,18.8L792.4,17.1M451.5,21.0L463.4,7.9M451.5,21.0L462.2,39.7M463.4,7.9L479.7,25.1M462.2,39.7L479.3,36.3M479.3,36.3L479.7,25.1M463.7,6.0L463.4,7.9M492.3,11.3L479.7,25.1M502.3,41.2L487.1,42.3M487.1,42.3L479.3,36.3M311.5,164.3L321.3,157.3M311.5,164.3L315.6,182.7M321.3,157.3L341.2,162.3M341.2,162.3L335.1,180.9M335.1,180.9L317.2,184.7M315.6,182.7L317.2,184.7M300.0,185.7L315.6,182.7M303.7,161.3L311.5,164.3M308.4,210.0L317.9,203.0M317.9,203.0L317.2,184.7M335.6,138.9L338.2,116.2M335.6,138.9L323.6,141.9M323.6,141.9L315.1,130.5M315.1,130.5L316.1,117.5M316.1,117.5L338.2,116.2M343.9,142.6L335.6,138.9M345.2,112.8L338.2,116.2M341.3,162.2L341.2,162.3M321.3,157.3L323.6,141.9M300.0,140.1L315.1,130.5M315.6,117.0L316.1,117.5M460.6,189.2L462.5,202.5M460.6,189.2L486.4,185.7M462.5,202.5L483.3,207.5M486.4,185.7L483.3,207.5M458.8,186.9L460.6,189.2M442.1,187.4L430.6,212.9M457.5,211.1L462.5,202.5M431.9,214.3L430.6,212.9M487.2,184.9L486.4,185.7M487.5,212.4L483.3,207.5M559.5,141.2L551.8,133.3M559.5,141.2L555.6,153.9M551.8,133.3L532.4,133.3M537.2,158.1L532.2,133.7M532.4,133.3L532.2,133.7M506.7,158.3L508.5,146.5M532.2,133.7L508.5,146.5M701.0,232.3L699.0,213.4M701.0,232.3L727.0,233.8M699.0,213.4L724.3,216.3M724.3,216.3L727.7,233.3M727.7,233.3L727.0,233.8M698.6,238.0L701.0,232.3M696.2,210.1L699.0,213.4M725.2,238.0L727.0,233.8M731.0,207.8L724.3,216.3M741.1,236.1L727.7,233.3M354.6,165.1L359.7,178.9M335.1,180.9L343.7,187.3M343.7,187.3L359.7,178.9M457.4,67.7L458.3,84.5M457.4,67.7L437.4,62.5M458.3,84.5L431.5,87.3M437.4,62.5L433.1,69.8M433.1,69.8L431.0,86.9M431.5,87.3L431.0,86.9M436.7,50.4L437.4,62.5M436.7,50.4L460.4,42.3M460.4,42.3L464.5,62.8M464.5,62.8L457.4,67.7M464.2,104.1L451.5,112.3M464.2,104.1L466.7,90.8M466.7,90.8L458.3,84.5M441.2,107.9L431.5,87.3M409.4,112.7L426.6,88.0M409.4,112.7L390.7,106.5M390.7,106.5L390.4,89.7M390.4,89.7L409.8,83.1M409.8,83.1L426.6,88.0M410.8,114.8L409.4,112.7M431.0,86.9L426.6,88.0M388.4,108.8L390.7,106.5M388.3,87.2L390.4,89.7M433.0,179.2L411.6,191.0M430.6,212.9L417.1,207.4M417.1,207.4L411.6,191.0M405.7,163.0L407.2,187.6M411.6,191.0L407.2,187.6M788.6,34.7L778.7,41.4M789.0,66.2L774.1,62.1M774.1,62.1L773.6,49.0M778.7,41.4L773.6,49.0M776.7,10.0L790.0,18.8M776.7,10.0L762.4,22.7M778.7,41.4L762.4,22.7M750.4,6.0L749.2,22.9M775.0,6.0L776.7,10.0M762.4,22.7L749.2,22.9M767.7,88.7L768.9,68.5M767.7,88.7L750.3,94.0M768.9,68.5L742.8,64.0M750.3,94.0L743.4,89.9M743.4,89.9L739.6,66.5M739.6,66.5L742.8,64.0M775.7,95.6L767.7,88.7M774.1,62.1L768.9,68.5M746.6,115.4L750.3,94.0M773.6,49.0L745.3,39.3M745.3,39.3L742.8,64.0M724.4,108.7L728.3,92.8M728.3,92.8L743.4,89.9M724.9,89.9L728.3,92.8M719.5,66.9L720.9,65.9M720.9,65.9L739.6,66.5M722.4,40.0L745.0,38.8M722.4,40.0L718.4,23.7M726.5,15.3L718.4,23.7M726.5,15.3L748.0,24.2M748.0,24.2L745.0,38.8M720.9,65.9L722.0,40.5M722.0,40.5L722.4,40.0M745.3,39.3L745.0,38.8M701.7,18.6L718.4,23.7M701.7,18.6L704.4,6.0M726.3,6.0L726.5,15.3M749.2,22.9L748.0,24.2M466.7,90.8L475.1,86.4M464.5,62.8L477.8,66.1M475.1,86.4L477.8,66.1M460.4,42.3L462.2,39.7M487.1,42.3L482.2,63.4M477.8,66.1L482.2,63.4M792.4,17.1L798.3,6.0M451.5,21.0L437.5,20.5M437.5,20.5L439.7,6.0M381.6,66.9L386.5,61.0M409.8,83.1L408.1,67.4M386.5,61.0L408.1,67.4M433.1,69.8L412.8,63.5M408.1,67.4L412.8,63.5M387.8,41.0L385.6,23.9M387.8,41.0L354.9,43.6M385.6,23.9L367.5,16.1M354.7,43.5L361.2,19.2M354.7,43.5L354.9,43.6M361.2,19.2L367.5,16.1M374.9,66.4L354.9,43.6M386.5,61.0L390.8,46.6M390.8,46.6L387.8,41.0M368.7,6.0L367.5,16.1M395.4,6.0L395.5,17.0M395.5,17.0L385.6,23.9M343.0,12.9L361.2,19.2M343.9,47.9L354.7,43.5M429.9,43.0L412.7,47.1M429.9,43.0L430.7,23.8M430.7,23.8L419.4,16.8M412.7,47.1L406.7,45.1M406.7,45.1L410.4,19.1M410.4,19.1L419.4,16.8M436.7,50.4L429.9,43.0M412.8,63.5L412.7,47.1M437.5,20.5L430.7,23.8M419.3,6.0L419.4,16.8M390.8,46.6L406.7,45.1M395.5,17.0L410.4,19.1M510.1,110.2L487.0,112.2M510.1,110.2L512.3,112.4M512.3,112.4L502.6,134.6M502.6,134.6L479.7,132.0M479.7,132.0L482.0,115.6M487.0,112.2L482.0,115.6M532.4,133.3L526.5,115.3M526.5,115.3L512.3,112.4M508.5,146.5L502.6,134.6M476.4,135.5L479.7,132.0M464.2,104.1L482.0,115.6M485.9,89.7L475.1,86.4M485.9,89.7L487.0,112.2M656.9,163.9L653.0,142.5M680.1,137.3L672.5,132.1M672.5,132.1L653.0,142.5M629.6,159.4L633.2,142.0M633.2,142.0L645.4,140.0M653.0,142.5L645.4,140.0M551.8,133.3L556.5,114.6M526.5,115.3L531.9,111.0M531.9,111.0L556.5,114.6M510.5,63.8L499.7,72.5M510.5,63.8L523.6,67.2M523.6,67.2L524.1,82.8M524.1,82.8L507.8,93.9M499.7,72.5L498.9,85.8M507.8,93.9L498.9,85.8M503.8,42.6L510.5,63.8M482.2,63.4L499.7,72.5M510.1,110.2L507.8,93.9M531.9,111.0L537.9,92.8M537.9,92.8L524.1,82.8M485.9,89.7L498.9,85.8M528.3,42.9L536.5,53.4M532.1,18.9L549.0,26.2M549.0,26.2L549.0,46.2M549.0,46.2L536.5,53.4M523.6,67.2L534.6,60.6M536.5,53.4L534.6,60.6M633.2,142.0L622.4,132.6M622.4,132.6L625.6,116.5M625.6,116.5L634.4,109.5M645.4,140.0L646.7,113.0M634.4,109.5L646.7,113.0M317.9,203.0L339.2,211.4M343.7,187.3L343.8,208.6M339.2,211.4L343.8,208.6M316.6,234.4L337.8,225.3M339.2,211.4L337.8,225.3M337.8,225.3L345.1,238.0M383.9,164.4L376.0,185.8M407.2,187.6L391.5,190.7M391.5,190.7L376.0,185.8M359.7,178.9L372.7,187.2M376.0,185.8L372.7,187.2M343.8,208.6L365.3,208.5M372.7,187.2L365.3,208.5M614.0,135.1L597.2,128.8M614.0,135.1L605.9,156.0M597.2,128.8L585.0,146.3M585.0,146.3L588.9,160.6M605.9,156.0L591.6,162.0M588.9,160.6L591.6,162.0M623.8,162.3L605.9,156.0M622.4,132.6L614.0,135.1M559.5,141.2L571.0,137.8M577.2,165.5L588.9,160.6M571.0,137.8L585.0,146.3M597.7,177.0L591.6,162.0M625.6,116.5L603.0,105.1M597.2,128.8L591.8,113.8M591.8,113.8L603.0,105.1M549.0,26.2L562.1,20.9M562.1,20.9L559.1,6.0M562.1,20.9L572.5,24.8M578.9,6.0L579.7,20.1M572.5,24.8L579.7,20.1M701.7,18.6L692.9,23.9M675.6,6.0L674.4,13.0M692.9,23.9L674.4,13.0M626.8,87.1L629.0,73.3M626.8,87.1L632.5,94.8M632.5,94.8L652.2,88.6M629.0,73.3L634.3,68.2M634.3,68.2L649.8,70.9M649.8,70.9L652.2,88.6M607.4,66.8L599.6,84.9M607.4,66.8L629.0,73.3M605.4,93.5L599.6,84.9M605.4,93.5L626.8,87.1M634.4,109.5L632.5,94.8M603.0,105.1L605.4,93.5M672.5,132.1L670.1,121.5M646.7,113.0L652.0,111.9M670.1,121.5L652.0,111.9M652.2,88.6L658.7,94.0M652.0,111.9L658.7,94.0M345.4,238.0L361.6,232.1M365.3,208.5L366.1,209.5M366.1,209.5L361.6,232.1M367.0,238.0L367.3,236.8M367.3,236.8L361.6,232.1M571.0,137.8L574.7,115.4M591.8,113.8L581.2,111.7M574.7,115.4L581.2,111.7M556.5,114.6L558.7,113.2M574.7,115.4L558.7,113.2M581.8,70.2L584.0,81.7M581.8,70.2L564.8,64.2M584.0,81.7L575.8,89.9M575.8,89.9L554.7,86.2M564.8,64.2L553.1,77.4M553.1,77.4L553.6,85.2M553.6,85.2L554.7,86.2M599.6,84.9L584.0,81.7M581.2,111.7L575.8,89.9M558.7,113.2L554.7,86.2M563.9,50.6L549.0,46.2M563.9,50.6L564.8,64.2M534.6,60.6L553.1,77.4M537.9,92.8L553.6,85.2M563.9,50.6L573.3,43.3M572.5,24.8L574.0,41.5M573.3,43.3L574.0,41.5M581.8,70.2L589.0,60.5M573.3,43.3L589.0,60.5M607.4,66.8L602.3,56.8M589.0,60.5L602.3,56.8M650.2,6.0L654.1,14.0M654.1,14.0L625.5,19.9M625.5,19.9L626.6,6.0M579.7,20.1L599.6,20.3M599.6,20.3L600.2,6.0M654.1,14.0L656.1,15.5M674.4,13.0L666.1,17.6M656.1,15.5L666.1,17.6M704.4,68.8L698.4,64.9M722.0,40.5L698.1,43.0M698.4,64.9L698.1,43.0M692.9,23.9L692.9,36.9M698.1,43.0L692.9,36.9M676.7,111.5L671.8,91.1M676.7,111.5L700.6,106.5M700.6,106.5L700.1,95.5M700.1,95.5L675.6,86.2M675.6,86.2L671.8,91.1M670.1,121.5L676.7,111.5M658.7,94.0L671.8,91.1M701.0,107.0L700.6,106.5M701.4,93.5L700.1,95.5M391.3,213.8L385.1,219.4M391.3,213.8L414.2,209.6M385.1,219.4L389.4,237.4M414.2,209.6L403.7,237.0M403.7,237.0L397.9,238.0M389.9,238.0L389.4,237.4M391.5,190.7L391.3,213.8M366.1,209.5L385.1,219.4M417.1,207.4L414.2,209.6M367.3,236.8L389.4,237.4M406.5,237.9L403.7,237.0M602.9,23.4L624.8,21.2M602.9,23.4L601.0,40.4M604.8,49.8L601.0,40.4M604.8,49.8L631.9,45.9M624.8,21.2L634.7,41.2M631.9,45.9L634.7,41.2M625.5,19.9L624.8,21.2M599.6,20.3L602.9,23.4M574.0,41.5L601.0,40.4M602.3,56.8L604.8,49.8M634.3,68.2L631.9,45.9M638.2,40.7L656.1,15.5M638.2,40.7L634.7,41.2M658.0,45.0L664.7,37.7M658.0,45.0L663.3,64.2M664.7,37.7L680.8,42.3M680.8,42.3L675.7,68.6M663.3,64.2L675.4,68.8M675.4,68.8L675.7,68.6M638.2,40.7L658.0,45.0M666.1,17.6L664.7,37.7M649.8,70.9L663.3,64.2M692.9,36.9L680.8,42.3M698.4,64.9L675.7,68.6M675.6,86.2L675.4,68.8M794.3,694.3L806.0,692.1M794.3,694.3L793.6,692.0M806.0,660.0L801.5,659.7M793.6,692.0L801.5,659.7M793.9,639.1L793.9,645.1M794.0,651.3L794.0,652.0M801.5,659.7L794.0,652.0M289.0,412.4L290.5,411.6M289.8,399.9L290.5,411.6M520.2,691.6L516.1,694.6M520.2,691.6L520.8,659.4M495.0,657.5L520.8,659.4M495.0,657.5L493.8,675.2M493.6,678.0L493.5,679.4M516.1,694.6L502.3,686.8M523.2,615.3L557.0,624.5M523.2,615.3L519.9,621.2M519.9,621.2L524.8,656.0M524.8,656.0L544.8,656.6M544.8,656.6L557.0,624.5M433.5,596.2L452.5,589.0M433.5,596.2L419.7,588.2M419.7,588.2L416.4,559.4M452.5,589.0L450.1,565.3M450.1,565.3L429.8,552.2M429.8,552.2L416.4,559.4M424.6,619.4L433.5,596.2M424.6,619.4L416.3,622.8M393.3,595.7L419.7,588.2M393.3,595.7L404.5,621.5M404.5,621.5L416.3,622.8M332.2,656.3L344.2,654.4M424.6,619.4L452.8,635.7M416.3,622.8L420.0,642.8M420.8,646.8L421.0,647.9M452.8,635.7L451.2,642.4M450.0,647.3L448.5,653.3M404.5,621.5L391.8,634.1M391.8,634.1L391.9,641.2M391.9,646.4L392.0,648.4M392.0,648.4L392.0,648.4M392.0,648.4L391.7,648.5M794.3,694.3L793.2,703.3M806.0,719.3L793.2,703.3M776.8,806.0L768.8,800.8M768.8,800.8L761.8,806.0M786.4,774.7L801.3,749.4M786.4,774.7L801.0,785.8M801.0,785.8L806.0,782.7M801.3,749.4L806.0,751.6M806.0,805.8L801.0,785.8M769.5,779.4L768.8,800.8M769.5,779.4L786.4,774.7M799.2,744.6L806.0,724.7M799.2,744.6L801.3,749.4M578.3,690.1L578.6,684.0M578.6,684.0L578.7,681.7M550.9,708.3L547.7,701.6M547.2,700.5L545.1,696.1M545.1,696.1L558.6,674.8M558.6,674.8L578.7,681.7M520.2,691.6L545.1,696.1M509.3,708.7L516.1,694.6M520.8,659.4L524.8,656.0M544.8,656.6L555.8,666.1M555.8,666.1L558.6,674.8M677.1,656.7L667.9,646.8M677.1,656.7L666.6,686.0M666.6,686.0L665.0,687.0M642.4,681.2L665.0,687.0M642.4,681.2L640.5,661.0M667.9,646.8L640.5,661.0M793.6,692.0L788.4,689.5M783.7,687.2L768.4,679.7M794.0,652.0L791.1,652.8M784.0,654.8L764.0,660.6M764.0,660.6L768.4,679.7M758.9,636.4L754.4,655.7M764.0,660.6L754.4,655.7M731.9,634.3L735.0,657.0M703.0,632.1L705.3,656.4M705.3,656.4L735.0,657.0M754.4,655.7L738.0,658.9M738.0,658.9L735.0,657.0M702.1,659.2L705.3,656.4M702.1,659.2L677.1,656.7M672.2,629.7L667.6,635.4M667.6,635.4L667.9,646.8M287.0,443.7L293.5,447.5M305.9,418.4L290.5,411.6M305.9,418.4L306.6,430.5M306.6,430.5L293.5,447.5M452.8,635.7L462.2,628.2M452.5,589.0L461.8,595.5M461.8,595.5L462.2,628.2M491.8,654.5L486.6,633.6M490.5,656.3L488.0,657.4M477.3,662.2L473.3,664.0M462.2,628.2L486.6,633.6M519.9,621.2L488.9,631.4M495.0,657.5L494.8,657.4M488.9,631.4L486.6,633.6M523.2,615.3L522.1,609.0M522.1,609.0L503.4,594.2M488.9,631.4L489.1,595.5M503.4,594.2L489.1,595.5M461.8,595.5L479.9,592.1M489.1,595.5L479.9,592.1M522.1,609.0L540.1,586.3M559.9,623.3L557.0,624.5M559.9,623.3L559.9,621.1M540.1,586.3L544.0,588.4M555.8,666.1L578.6,648.2M559.9,623.3L562.9,624.0M578.6,648.2L562.9,624.0M579.3,681.5L592.4,650.7M579.3,681.5L578.7,681.7M578.6,648.2L592.4,650.7M569.1,621.8L562.9,624.0M322.0,639.8L324.0,646.8M310.5,625.7L300.9,621.8M300.9,621.8L291.7,626.1M291.7,626.1L295.9,648.9M282.6,624.8L291.7,626.1M372.2,626.7L355.3,636.6M372.2,626.7L370.0,596.2M355.3,636.6L339.2,613.6M370.0,596.2L362.3,592.6M362.3,592.6L340.2,606.9M339.2,613.6L340.2,606.9M391.8,634.1L389.1,633.1M387.0,632.3L372.2,626.7M351.8,651.2L355.3,636.6M393.3,595.7L390.7,594.0M390.7,594.0L370.0,596.2M320.5,628.1L339.2,613.6M656.8,716.2L666.4,710.7M642.4,681.2L633.8,688.5M666.4,710.7L665.0,687.0M582.5,682.0L579.3,681.5M607.9,674.4L607.0,653.5M640.5,661.0L630.9,651.9M630.9,651.9L607.0,653.5M592.4,650.7L600.3,648.5M592.3,623.6L601.1,636.4M601.1,636.4L600.3,648.5M607.0,653.5L600.3,648.5M799.2,744.6L774.8,739.6M793.2,703.3L790.5,704.5M786.1,706.5L770.1,713.8M774.8,739.6L770.1,713.8M666.4,710.7L676.4,716.8M673.7,740.7L674.8,740.2M676.4,716.8L674.8,740.2M674.8,740.2L699.4,748.7M697.9,758.1L699.4,748.7M711.9,783.4L712.7,782.2M708.8,778.3L712.7,782.2M735.2,806.0L728.0,782.9M712.7,782.2L728.0,782.9M308.5,285.1L296.7,290.2M308.5,285.1L312.7,316.5M312.7,316.5L296.7,321.5M296.7,321.5L294.8,320.1M294.2,330.3L296.7,321.5M342.1,442.4L329.4,452.4M342.1,442.4L335.8,415.9M305.9,418.4L326.0,409.0M329.4,452.4L306.6,430.5M335.8,415.9L326.0,409.0M492.9,538.3L489.3,533.3M492.9,538.3L493.9,552.3M489.3,533.3L462.2,534.9M493.9,552.3L486.8,557.2M486.8,557.2L460.5,558.1M460.5,558.1L462.2,534.9M485.3,508.7L489.3,533.3M485.3,508.7L458.5,507.7M453.4,524.7L458.5,507.7M453.4,524.7L462.2,534.9M512.5,562.9L503.4,594.2M512.5,562.9L493.9,552.3M479.9,592.1L486.8,557.2M450.1,565.3L460.5,558.1M429.8,552.2L430.8,536.1M430.8,536.1L453.4,524.7M490.0,503.5L485.3,508.7M490.0,503.5L520.6,502.4M492.9,538.3L513.0,528.4M513.0,528.4L520.6,502.4M427.7,476.2L447.1,470.3M427.7,476.2L424.1,503.2M456.9,505.5L424.1,503.2M456.9,505.5L455.1,474.2M455.1,474.2L447.1,470.3M490.0,503.5L486.4,479.8M473.5,469.0L486.4,479.8M473.5,469.0L455.1,474.2M458.5,507.7L456.9,505.5M516.2,468.3L507.1,443.7M516.2,468.3L486.4,479.8M473.5,469.0L482.6,444.3M507.1,443.7L490.8,441.2M482.6,444.3L490.8,441.2M638.8,627.1L635.8,629.8M635.8,629.8L622.3,625.9M667.6,635.4L649.0,627.9M630.9,651.9L635.8,629.8M601.1,636.4L614.2,625.2M764.6,746.9L743.2,741.8M764.6,746.9L768.3,778.4M743.2,741.8L735.2,755.6M735.2,755.6L736.5,774.3M768.3,778.4L736.5,774.3M769.5,779.4L768.3,778.4M774.8,739.6L764.6,746.9M699.4,748.7L700.4,747.7M700.4,747.7L735.2,755.6M728.0,782.9L736.5,774.3M738.0,658.9L734.6,690.8M768.4,679.7L752.5,698.5M734.6,690.8L752.5,698.5M770.1,713.8L758.9,710.3M743.2,741.8L740.1,732.2M740.1,732.2L758.9,710.3M752.5,698.5L758.9,710.3M400.2,468.4L410.9,467.3M400.2,468.4L391.8,500.7M410.9,467.3L427.7,476.2M424.1,503.2L416.6,510.8M391.8,500.7L416.6,510.8M430.8,536.1L418.2,520.2M418.2,520.2L416.6,510.8M290.8,384.5L303.1,378.8M293.2,346.0L306.4,351.3M306.4,351.3L303.1,378.8M326.0,409.0L326.3,387.5M303.1,378.8L326.3,387.5M312.7,316.5L324.5,325.8M306.4,351.3L321.0,345.6M324.5,325.8L321.0,345.6M326.3,387.5L339.1,376.1M339.1,376.1L334.3,356.4M334.3,356.4L321.0,345.6M308.5,285.1L308.7,284.9M308.7,284.9L299.0,261.1M298.5,261.1L299.0,261.1M335.8,415.9L360.4,407.1M339.1,376.1L363.3,381.1M363.3,381.1L360.4,407.1M342.1,442.4L354.7,444.4M354.7,444.4L368.5,440.1M368.5,440.1L366.0,412.8M366.0,412.8L360.4,407.1M308.7,284.9L333.1,282.3M324.5,325.8L341.2,318.0M333.1,282.3L340.1,286.8M340.1,286.8L341.2,318.0M359.8,341.0L355.1,323.7M359.8,341.0L334.3,356.4M341.2,318.0L355.1,323.7M359.8,341.0L363.6,343.7M363.3,381.1L369.7,377.6M363.6,343.7L369.7,377.6M539.0,507.9L524.2,500.5M524.2,500.5L524.0,474.1M524.0,474.1L536.5,468.6M516.2,468.3L524.0,474.1M520.6,502.4L524.2,500.5M481.8,403.6L489.6,406.5M481.8,403.6L472.5,379.7M489.6,406.5L510.8,400.1M472.5,379.7L488.9,368.6M488.9,368.6L510.0,385.9M510.8,400.1L510.0,385.9M514.5,349.0L491.9,354.4M491.9,354.4L488.9,368.6M519.6,375.5L510.0,385.9M515.4,562.5L539.2,572.6M515.4,562.5L528.4,539.1M528.4,539.1L540.6,534.2M539.2,572.6L542.9,569.7M512.5,562.9L515.4,562.5M540.1,586.3L539.2,572.6M513.0,528.4L528.4,539.1M731.1,692.8L722.2,722.5M731.1,692.8L701.1,687.4M701.1,687.4L698.7,689.8M698.7,689.8L696.4,713.1M696.4,713.1L708.1,725.8M708.1,725.8L722.2,722.5M734.6,690.8L731.1,692.8M740.1,732.2L722.2,722.5M702.1,659.2L701.1,687.4M666.6,686.0L698.7,689.8M676.4,716.8L696.4,713.1M700.4,747.7L708.1,725.8M345.5,480.4L339.6,499.2M345.5,480.4L359.3,476.3M339.6,499.2L363.6,506.3M364.3,478.0L359.3,476.3M364.3,478.0L374.7,499.4M374.7,499.4L363.6,506.3M354.7,444.4L359.3,476.3M329.4,452.4L325.4,461.2M325.4,461.2L345.5,480.4M388.9,459.9L383.1,444.7M388.9,459.9L364.3,478.0M368.5,440.1L383.1,444.7M400.2,468.4L388.9,459.9M391.8,500.7L388.2,502.2M388.2,502.2L374.7,499.4M293.5,447.5L297.6,466.4M285.6,471.3L297.6,466.4M325.4,461.2L309.8,470.2M297.6,466.4L309.8,470.2M371.9,537.8L373.3,555.4M371.9,537.8L383.6,529.9M383.6,529.9L397.9,535.1M397.9,535.1L404.1,558.8M373.3,555.4L395.8,563.0M404.1,558.8L395.8,563.0M356.4,570.4L338.8,562.6M356.4,570.4L373.3,555.4M358.7,529.6L371.9,537.8M358.7,529.6L344.3,531.9M338.8,562.6L344.3,531.9M358.7,529.6L363.6,506.3M388.2,502.2L383.6,529.9M418.2,520.2L397.9,535.1M416.4,559.4L404.1,558.8M390.7,594.0L395.8,563.0M362.3,592.6L356.4,570.4M306.8,238.0L306.4,246.6M306.4,246.6L336.6,258.7M333.0,238.0L341.6,253.1M336.6,258.7L341.6,253.1M299.0,261.1L306.4,246.6M333.1,282.3L336.6,258.7M358.3,284.2L340.1,286.8M358.3,284.2L359.7,248.1M359.7,248.1L341.6,253.1M366.0,412.8L394.2,409.5M369.7,377.6L384.1,378.0M384.1,378.0L394.2,409.5M363.6,343.7L390.8,339.5M395.0,370.7L384.1,378.0M395.0,370.7L394.2,344.0M394.2,344.0L390.8,339.5M424.1,374.4L421.9,375.5M424.1,374.4L425.1,340.5M395.0,370.7L421.9,375.5M394.2,344.0L425.1,340.5M508.3,316.8L490.0,318.0M502.5,287.3L481.9,287.3M490.0,318.0L481.9,287.3M496.2,254.4L494.9,254.3M494.9,254.3L477.9,283.9M481.9,287.3L477.9,283.9M405.6,238.0L403.9,255.1M367.2,241.7L367.1,238.0M367.2,241.7L390.3,259.9M390.3,259.9L403.9,255.1M434.9,243.8L414.1,258.6M434.9,243.8L434.7,238.0M403.9,255.1L414.1,258.6M525.3,404.6L516.8,404.8M516.8,404.8L514.6,436.6M514.6,436.6L531.5,436.9M510.8,400.1L516.8,404.8M507.1,443.7L514.6,436.6M490.8,441.2L489.6,406.5M464.3,247.6L482.2,243.3M464.3,247.6L460.1,238.0M482.2,243.3L482.7,238.0M434.9,243.8L454.8,257.4M454.8,257.4L464.3,247.6M494.9,254.3L482.2,243.3M326.2,565.4L309.8,552.7M326.2,565.4L317.5,590.3M309.8,552.7L288.4,570.7M307.4,594.2L290.3,585.9M307.4,594.2L317.5,590.3M290.3,585.9L288.4,570.7M340.2,606.9L317.5,590.3M338.8,562.6L326.2,565.4M282.1,590.5L290.3,585.9M300.9,621.8L307.4,594.2M282.4,566.8L288.4,570.7M314.2,500.7L302.8,508.4M314.2,500.7L330.3,505.5M330.3,505.5L335.9,525.5M335.9,525.5L306.7,542.2M302.8,508.4L298.3,534.3M298.3,534.3L306.7,542.2M284.6,501.3L302.8,508.4M309.8,470.2L314.2,500.7M339.6,499.2L330.3,505.5M344.3,531.9L335.9,525.5M309.8,552.7L306.7,542.2M283.5,536.2L298.3,534.3M367.2,241.7L359.7,248.1M383.1,444.7L399.6,426.3M394.2,409.5L398.5,413.2M399.6,426.3L398.5,413.2M410.9,467.3L423.9,436.8M399.6,426.3L423.9,436.8M421.9,375.5L417.9,401.5M398.5,413.2L417.9,401.5M391.6,326.1L407.4,311.7M391.6,326.1L370.7,312.5M407.4,311.7L392.6,290.6M370.7,312.5L374.4,289.4M392.6,290.6L383.3,285.1M374.4,289.4L383.3,285.1M355.1,323.7L370.7,312.5M390.8,339.5L391.6,326.1M358.3,284.2L374.4,289.4M390.3,259.9L383.3,285.1M426.5,278.6L392.6,290.6M426.5,278.6L414.1,258.6M491.9,354.4L481.2,341.1M490.0,318.0L487.6,320.2M481.2,341.1L487.6,320.2M448.9,405.6L428.8,409.5M448.9,405.6L458.6,418.3M428.8,409.5L427.9,435.7M457.8,429.0L458.6,418.3M457.8,429.0L442.9,439.4M442.9,439.4L427.9,435.7M449.9,377.1L424.1,374.4M449.9,377.1L448.9,405.6M417.9,401.5L428.8,409.5M451.9,375.9L449.9,377.1M451.9,375.9L472.5,379.7M481.8,403.6L458.6,418.3M423.9,436.8L427.9,435.7M482.6,444.3L457.8,429.0M447.1,470.3L442.9,439.4M477.9,283.9L462.1,283.4M487.6,320.2L453.0,311.0M453.0,311.0L462.1,283.4M426.5,278.6L427.0,278.9M407.4,311.7L423.9,312.9M427.0,278.9L423.9,312.9M454.8,257.4L454.0,274.8M427.0,278.9L454.0,274.8M454.0,274.8L462.1,283.4M448.9,314.8L429.2,317.4M448.9,314.8L462.6,343.2M456.0,350.7L426.4,338.8M456.0,350.7L462.6,343.2M426.4,338.8L429.2,317.4M453.0,311.0L448.9,314.8M423.9,312.9L429.2,317.4M481.2,341.1L462.6,343.2M451.9,375.9L456.0,350.7M425.1,340.5L426.4,338.8M23.9,6.0L23.9,23.4M23.9,23.4L23.9,27.1M54.1,6.0L54.1,23.3M54.1,23.3L54.1,27.1M78.8,6.0L78.8,14.9L81.8,14.9L81.8,24.5M81.8,24.5L81.8,27.1M114.8,6.0L114.8,13.3L110.8,13.3L110.8,23.3M110.8,23.3L110.8,27.1M150.3,6.0L150.3,27.1M183.1,6.0L183.1,13.8L179.1,13.8L179.1,27.1M219.2,6.0L219.2,12.4L216.2,12.4L216.2,25.7M216.2,25.7L216.2,27.1M251.5,6.0L251.5,14.5L248.5,14.5L248.5,27.1M293.2,6.0L293.2,23.6M293.2,23.6L293.2,27.1M6.0,23.4L23.9,23.4M23.9,23.4L27.0,23.4M27.0,23.3L54.1,23.3M54.1,23.3L57.4,23.3M27.0,23.1L27.0,23.3M27.0,23.3L27.0,23.4M27.0,23.4L27.0,34.0L30.0,34.0L30.0,53.6M30.0,53.6L30.0,54.0M57.4,24.5L81.8,24.5M81.8,24.5L85.0,24.5M57.4,23.1L57.4,23.3M57.4,23.3L57.4,24.5M57.4,24.5L57.4,37.6L53.4,37.6L53.4,50.3M53.4,50.3L53.4,54.0M85.0,23.3L110.8,23.3M110.8,23.3L118.8,23.3M85.0,23.1L85.0,23.3M85.0,23.3L85.0,24.5M85.0,24.5L85.0,50.3M85.0,50.3L85.0,54.0M118.8,26.5L133.3,26.5L133.3,29.5L152.2,29.5M118.8,23.1L118.8,23.3M118.8,23.3L118.8,26.5M118.8,26.5L118.8,54.0M152.2,27.0L162.7,27.0L162.7,30.0L181.6,30.0M152.2,23.1L152.2,27.0M152.2,27.0L152.2,29.5M152.2,29.5L152.2,51.2M152.2,51.2L152.2,54.0M181.6,26.3L215.9,26.3M181.6,23.1L181.6,26.3M181.6,26.3L181.6,30.0M181.6,30.0L181.6,36.2L178.6,36.2L178.6,52.7M178.6,52.7L178.6,54.0M215.9,25.7L216.2,25.7M216.2,25.7L232.3,25.7L232.3,28.7L248.7,28.7M215.9,23.1L215.9,25.7M215.9,25.7L215.9,26.3M215.9,26.3L215.9,39.6L211.9,39.6L211.9,53.3M211.9,53.3L211.9,54.0M248.7,23.5L277.4,23.5M248.7,23.1L248.7,23.5M248.7,23.5L248.7,28.7M248.7,28.7L248.7,50.3M248.7,50.3L248.7,54.0M277.4,23.6L293.2,23.6M293.2,23.6L300.0,23.6M277.4,23.1L277.4,23.5M277.4,23.5L277.4,23.6M277.4,23.6L277.4,52.7M277.4,52.7L277.4,54.0M6.0,53.2L18.4,53.2M18.4,53.6L30.0,53.6M30.0,53.6L35.3,53.6L35.3,50.6L51.7,50.6M18.4,50.0L18.4,53.2M18.4,53.2L18.4,53.6M18.4,53.6L18.4,80.5M18.4,80.5L18.4,81.1M51.7,50.3L53.4,50.3M53.4,50.3L85.0,50.3M85.0,50.3L90.9,50.3M51.7,50.0L51.7,50.3M51.7,50.3L51.7,50.6M51.7,50.6L51.7,78.0M51.7,78.0L51.7,81.1M90.9,52.9L114.8,52.9L114.8,55.9L129.6,55.9M90.9,50.0L90.9,50.3M90.9,50.3L90.9,52.9M90.9,52.9L90.9,81.1M129.6,51.2L152.2,51.2M152.2,51.2L154.1,51.2L154.1,54.2L171.0,54.2M129.6,50.0L129.6,51.2M129.6,51.2L129.6,55.9M129.6,55.9L129.6,63.4L132.6,63.4L132.6,78.5M132.6,78.5L132.6,81.1M171.0,52.7L178.6,52.7M178.6,52.7L207.9,52.7M171.0,50.0L171.0,52.7M171.0,52.7L171.0,54.2M171.0,54.2L171.0,77.7M171.0,77.7L171.0,81.1M207.9,53.3L211.9,53.3M211.9,53.3L225.0,53.3L225.0,50.3L237.3,50.3M207.9,50.0L207.9,52.7M207.9,52.7L207.9,53.3M207.9,53.3L207.9,64.6L210.9,64.6L210.9,79.8M210.9,79.8L210.9,81.1M237.3,50.3L248.7,50.3M248.7,50.3L277.3,50.3M237.3,50.0L237.3,50.3M237.3,50.3L237.3,50.3M237.3,50.3L237.3,77.7M237.3,77.7L237.3,81.1M277.3,52.7L277.4,52.7M277.4,52.7L298.1,52.7L298.1,55.7L300.0,55.7M277.3,50.0L277.3,50.3M277.3,50.3L277.3,52.7M277.3,52.7L277.3,60.2L280.3,60.2L280.3,77.9M280.3,77.9L280.3,81.1M6.0,80.5L18.4,80.5M18.4,80.5L32.9,80.5M32.9,78.0L51.7,78.0M51.7,78.0L60.5,78.0M32.9,77.1L32.9,78.0M32.9,78.0L32.9,80.5M32.9,80.5L32.9,98.2L35.9,98.2L35.9,110.0M35.9,110.0L35.9,113.2M60.5,78.7L77.4,78.7L77.4,81.7L96.8,81.7M60.5,77.1L60.5,78.0M60.5,78.0L60.5,78.7M60.5,78.7L60.5,111.0M60.5,111.0L60.5,113.2M96.8,78.9L126.6,78.9M96.8,77.1L96.8,78.9M96.8,78.9L96.8,81.7M96.8,81.7L96.8,113.2M126.6,78.5L132.6,78.5M132.6,78.5L164.7,78.5M126.6,77.1L126.6,78.5M126.6,78.5L126.6,78.9M126.6,78.9L126.6,89.3L129.6,89.3L129.6,113.2M164.7,77.7L171.0,77.7M171.0,77.7L196.7,77.7M164.7,77.1L164.7,77.7M164.7,77.7L164.7,78.5M164.7,78.5L164.7,111.4M164.7,111.4L164.7,113.2M196.7,79.8L210.9,79.8M210.9,79.8L233.2,79.8M196.7,77.1L196.7,77.7M196.7,77.7L196.7,79.8M196.7,79.8L196.7,110.1M196.7,110.1L196.7,113.2M233.2,77.7L237.3,77.7M237.3,77.7L270.0,77.7M233.2,77.1L233.2,77.7M233.2,77.7L233.2,79.8M233.2,79.8L233.2,109.9M233.2,109.9L233.2,113.2M270.0,77.9L280.3,77.9M280.3,77.9L294.6,77.9M270.0,77.1L270.0,77.7M270.0,77.7L270.0,77.9M270.0,77.9L270.0,92.3L266.0,92.3L266.0,110.3M266.0,110.3L266.0,113.2M294.6,80.6L300.0,80.6M294.6,77.1L294.6,77.9M294.6,77.9L294.6,80.6M294.6,80.6L294.6,99.2L291.6,99.2L291.6,109.7M291.6,109.7L291.6,113.2M6.0,109.3L13.1,109.3M13.1,110.0L35.9,110.0M35.9,110.0L49.8,110.0M13.1,109.2L13.1,109.3M13.1,109.3L13.1,110.0M13.1,110.0L13.1,119.8L16.1,119.8L16.1,138.9M16.1,138.9L16.1,139.3M49.8,111.0L60.5,111.0M60.5,111.0L66.4,111.0L66.4,108.0L76.3,108.0M49.8,109.2L49.8,110.0M49.8,110.0L49.8,111.0M49.8,111.0L49.8,135.4M49.8,135.4L49.8,139.3M76.3,112.9L94.1,112.9L94.1,115.9L108.1,115.9M76.3,109.2L76.3,112.9M76.3,112.9L76.3,136.1M76.3,136.1L76.3,139.3M108.1,110.3L117.2,110.3L117.2,113.3L132.2,113.3M108.1,109.2L108.1,110.3M108.1,110.3L108.1,115.9M108.1,115.9L108.1,135.5M108.1,135.5L108.1,139.3M132.2,110.6L160.9,110.6M132.2,109.2L132.2,110.6M132.2,110.6L132.2,113.3M132.2,113.3L132.2,123.3L135.2,123.3L135.2,137.1M135.2,137.1L135.2,139.3M160.9,111.4L164.7,111.4M164.7,111.4L177.3,111.4L177.3,108.4L187.3,108.4M160.9,109.2L160.9,110.6M160.9,110.6L160.9,111.4M160.9,111.4L160.9,137.1M160.9,137.1L160.9,139.3M187.3,110.1L196.7,110.1M196.7,110.1L214.5,110.1M187.3,109.2L187.3,110.1M187.3,110.1L187.3,126.3L184.3,126.3L184.3,135.4M184.3,135.4L184.3,139.3M214.5,112.9L224.5,112.9L224.5,109.9L233.2,109.9M233.2,109.9L238.5,109.9M214.5,109.2L214.5,110.1M214.5,110.1L214.5,112.9M214.5,112.9L214.5,135.7M214.5,135.7L214.5,139.3M238.5,110.3L266.0,110.3M266.0,110.3L272.0,110.3M238.5,109.2L238.5,109.9M238.5,109.9L238.5,110.3M238.5,110.3L238.5,136.5M238.5,136.5L238.5,139.3M272.0,109.7L291.6,109.7M291.6,109.7L295.9,109.7L295.9,106.7L300.0,106.7M272.0,109.2L272.0,109.7M272.0,109.7L272.0,110.3M272.0,110.3L272.0,119.3L276.0,119.3L276.0,137.7M276.0,137.7L276.0,139.3M6.0,138.9L16.1,138.9M16.1,138.9L42.1,138.9M42.1,135.4L49.8,135.4M49.8,135.4L57.5,135.4L57.5,138.4L71.7,138.4M42.1,135.3L42.1,135.4M42.1,135.4L42.1,138.9M42.1,138.9L42.1,171.2M42.1,171.2L42.1,174.3M71.7,136.1L76.3,136.1M76.3,136.1L87.1,136.1L87.1,139.1L101.9,139.1M71.7,135.3L71.7,136.1M71.7,136.1L71.7,138.4M71.7,138.4L71.7,173.2M71.7,173.2L71.7,174.3M101.9,135.5L108.1,135.5M108.1,135.5L126.5,135.5M101.9,135.3L101.9,135.5M101.9,135.5L101.9,139.1M101.9,139.1L101.9,173.7M101.9,173.7L101.9,174.3M126.5,137.1L135.2,137.1M135.2,137.1L160.9,137.1M160.9,137.1L161.1,137.1M126.5,135.3L126.5,135.5M126.5,135.5L126.5,137.1M126.5,137.1L126.5,161.0L123.5,161.0L123.5,170.7M123.5,170.7L123.5,174.3M161.1,135.4L184.3,135.4M184.3,135.4L200.0,135.4M161.1,135.3L161.1,135.4M161.1,135.4L161.1,137.1M161.1,137.1L161.1,157.4L158.1,157.4L158.1,173.8M158.1,173.8L158.1,174.3M200.0,135.7L214.5,135.7M214.5,135.7L216.1,135.7L216.1,132.7L229.2,132.7M200.0,135.3L200.0,135.4M200.0,135.4L200.0,135.7M200.0,135.7L200.0,174.3M229.2,136.5L238.5,136.5M238.5,136.5L260.5,136.5M229.2,135.3L229.2,136.5M229.2,136.5L229.2,157.7L225.2,157.7L225.2,173.6M225.2,173.6L225.2,174.3M260.5,137.7L276.0,137.7M276.0,137.7L287.0,137.7M260.5,135.3L260.5,136.5M260.5,136.5L260.5,137.7M260.5,137.7L260.5,150.1L264.5,150.1L264.5,174.3M287.0,136.5L300.0,136.5M287.0,135.3L287.0,136.5M287.0,136.5L287.0,137.7M287.0,137.7L287.0,171.0M287.0,171.0L287.0,174.3M6.0,170.7L10.3,170.7L10.3,167.7L26.0,167.7M26.0,171.2L42.1,171.2M42.1,171.2L67.5,171.2M26.0,170.3L26.0,171.2M26.0,171.2L26.0,187.1L29.0,187.1L29.0,205.7M29.0,205.7L29.0,208.4M67.5,173.2L71.7,173.2M71.7,173.2L93.7,173.2M67.5,170.3L67.5,171.2M67.5,171.2L67.5,173.2M67.5,173.2L67.5,183.1L71.5,183.1L71.5,205.8M71.5,205.8L71.5,208.4M93.7,173.7L101.9,173.7M101.9,173.7L111.8,173.7L111.8,170.7L123.5,170.7M123.5,170.7L134.1,170.7M93.7,170.3L93.7,173.2M93.7,173.2L93.7,173.7M93.7,173.7L93.7,208.4M134.1,173.8L158.1,173.8M158.1,173.8L159.9,173.8L159.9,170.8L175.1,170.8M134.1,170.3L134.1,170.7M134.1,170.7L134.1,173.8M134.1,173.8L134.1,186.4L138.1,186.4L138.1,207.8M138.1,207.8L138.1,208.4M175.1,172.9L197.1,172.9L197.1,175.9L209.1,175.9M175.1,170.3L175.1,170.8M175.1,170.8L175.1,172.9M175.1,172.9L175.1,185.7L179.1,185.7L179.1,206.0M179.1,206.0L179.1,208.4M209.1,173.6L225.2,173.6M225.2,173.6L238.2,173.6M209.1,170.3L209.1,173.6M209.1,173.6L209.1,175.9M209.1,175.9L209.1,206.0M209.1,206.0L209.1,208.4M238.2,173.3L248.2,173.3L248.2,176.3L264.9,176.3M238.2,170.3L238.2,173.3M238.2,173.3L238.2,173.6M238.2,173.6L238.2,207.0M238.2,207.0L238.2,208.4M264.9,174.0L285.3,174.0L285.3,171.0L287.0,171.0M287.0,171.0L300.0,171.0M264.9,170.3L264.9,174.0M264.9,174.0L264.9,176.3M264.9,176.3L264.9,206.4M264.9,206.4L264.9,208.4M6.0,206.8L11.4,206.8M11.4,205.7L29.0,205.7M29.0,205.7L39.0,205.7M11.4,204.4L11.4,205.7M11.4,205.7L11.4,206.8M11.4,206.8L11.4,224.0L8.4,224.0L8.4,238.3M8.4,238.3L8.4,238.7M39.0,205.8L71.5,205.8M71.5,205.8L77.3,205.8M39.0,204.4L39.0,205.7M39.0,205.7L39.0,205.8M39.0,205.8L39.0,225.0L36.0,225.0L36.0,235.2M36.0,235.2L36.0,238.7M77.3,208.0L92.3,208.0L92.3,211.0L108.4,211.0M77.3,204.4L77.3,205.8M77.3,205.8L77.3,208.0M77.3,208.0L77.3,226.2L80.3,226.2L80.3,234.8M80.3,234.8L80.3,238.7M108.4,204.8L126.7,204.8L126.7,207.8L138.1,207.8M138.1,207.8L145.7,207.8M108.4,204.4L108.4,204.8M108.4,204.8L108.4,211.0M108.4,211.0L108.4,224.3L105.4,224.3L105.4,238.3M105.4,238.3L105.4,238.7M145.7,207.9L157.6,207.9L157.6,204.9L171.5,204.9M145.7,204.4L145.7,207.8M145.7,207.8L145.7,207.9M145.7,207.9L145.7,215.7L148.7,215.7L148.7,238.7M148.7,238.7L148.7,238.7M171.5,206.0L179.1,206.0M179.1,206.0L209.1,206.0M209.1,206.0L212.4,206.0M171.5,204.4L171.5,204.9M171.5,204.9L171.5,206.0M171.5,206.0L171.5,215.9L175.5,215.9L175.5,237.7M175.5,237.7L175.5,238.7M212.4,207.0L238.2,207.0M238.2,207.0L242.3,207.0M212.4,204.4L212.4,206.0M212.4,206.0L212.4,207.0M212.4,207.0L212.4,238.5M212.4,238.5L212.4,238.7M242.3,206.4L264.9,206.4M264.9,206.4L268.5,206.4M242.3,204.4L242.3,206.4M242.3,206.4L242.3,207.0M242.3,207.0L242.3,224.1L245.3,224.1L245.3,237.9M245.3,237.9L245.3,238.7M268.5,205.7L300.0,205.7M268.5,204.4L268.5,205.7M268.5,205.7L268.5,206.4M268.5,206.4L268.5,216.1L264.5,216.1L264.5,234.9M264.5,234.9L264.5,238.7M6.0,238.3L8.4,238.3M8.4,238.3L28.9,238.3M28.9,235.2L36.0,235.2M36.0,235.2L62.8,235.2M28.9,234.7L28.9,235.2M28.9,235.2L28.9,238.3M28.9,238.3L28.9,254.3L31.9,254.3L31.9,271.5M31.9,271.5L31.9,271.5M62.8,234.8L80.3,234.8M80.3,234.8L94.3,234.8M62.8,234.7L62.8,234.8M62.8,234.8L62.8,235.2M62.8,235.2L62.8,254.1L65.8,254.1L65.8,271.3M65.8,271.3L65.8,271.5M94.3,238.3L105.4,238.3M105.4,238.3L108.5,238.3L108.5,235.3L135.3,235.3M94.3,234.7L94.3,234.8M94.3,234.8L94.3,238.3M94.3,238.3L94.3,270.7M94.3,270.7L94.3,271.5M135.3,238.7L148.7,238.7M148.7,238.7L163.8,238.7M135.3,234.7L135.3,235.3M135.3,235.3L135.3,238.7M135.3,238.7L135.3,249.2L138.3,249.2L138.3,271.2M138.3,271.2L138.3,271.5M163.8,237.7L175.5,237.7M175.5,237.7L181.3,237.7L181.3,240.7L202.5,240.7M163.8,234.7L163.8,237.7M163.8,237.7L163.8,238.7M163.8,238.7L163.8,247.9L160.8,247.9L160.8,271.2M160.8,271.2L160.8,271.5M202.5,238.5L212.4,238.5M212.4,238.5L220.1,238.5L220.1,241.5L241.8,241.5M202.5,234.7L202.5,238.5M202.5,238.5L202.5,240.7M202.5,240.7L202.5,250.0L198.5,250.0L198.5,271.2M198.5,271.2L198.5,271.5M241.8,237.9L245.3,237.9M245.3,237.9L260.9,237.9L260.9,234.9L264.5,234.9M264.5,234.9L273.5,234.9M241.8,234.7L241.8,237.9M241.8,237.9L241.8,241.5M241.8,241.5L241.8,271.5M241.8,271.5L241.8,271.5M273.5,235.4L294.4,235.4L294.4,232.4L300.0,232.4M273.5,234.7L273.5,234.9M273.5,234.9L273.5,235.4M273.5,235.4L273.5,268.9M273.5,268.9L273.5,271.5M6.0,271.5L31.9,271.5M31.9,271.5L36.3,271.5M36.3,271.3L51.4,271.3L51.4,268.3L62.6,268.3M36.3,267.5L36.3,271.3M36.3,271.3L36.3,271.5M36.3,271.5L36.3,279.1L32.3,279.1L32.3,298.8M62.6,271.3L65.8,271.3M65.8,271.3L76.4,271.3L76.4,274.3L93.6,274.3M62.6,267.5L62.6,268.3M62.6,268.3L62.6,271.3M62.6,271.3L62.6,281.0L66.6,281.0L66.6,298.1M66.6,298.1L66.6,298.8M93.6,270.7L94.3,270.7M94.3,270.7L132.7,270.7M93.6,267.5L93.6,270.7M93.6,270.7L93.6,274.3M93.6,274.3L93.6,281.0L89.6,281.0L89.6,298.1M89.6,298.1L89.6,298.8M132.7,271.2L138.3,271.2M138.3,271.2L160.8,271.2M160.8,271.2L161.0,271.2M132.7,267.5L132.7,270.7M132.7,270.7L132.7,271.2M132.7,271.2L132.7,297.2M132.7,297.2L132.7,298.8M161.0,267.6L196.1,267.6M161.0,267.5L161.0,267.6M161.0,267.6L161.0,271.2M161.0,271.2L161.0,297.8M161.0,297.8L161.0,298.8M196.1,271.2L198.5,271.2M198.5,271.2L207.3,271.2L207.3,274.2L231.4,274.2M196.1,267.5L196.1,267.6M196.1,267.6L196.1,271.2M196.1,271.2L196.1,284.5L199.1,284.5L199.1,297.3M199.1,297.3L199.1,298.8M231.4,271.5L241.8,271.5M241.8,271.5L255.5,271.5M231.4,267.5L231.4,271.5M231.4,271.5L231.4,274.2M231.4,274.2L231.4,294.8M231.4,294.8L231.4,298.8M255.5,268.9L273.5,268.9M273.5,268.9L284.8,268.9M255.5,267.5L255.5,268.9M255.5,268.9L255.5,271.5M255.5,271.5L255.5,296.7M255.5,296.7L255.5,298.8M284.8,269.9L295.6,269.9L295.6,266.9L298.2,266.9M284.8,267.5L284.8,268.9M284.8,268.9L284.8,269.9M284.8,269.9L284.8,286.5L280.8,286.5L280.8,296.7M280.8,296.7L280.8,298.8M6.0,296.3L14.8,296.3L14.8,299.3L34.6,299.3M34.6,296.7L44.3,296.7L44.3,299.7L58.7,299.7M34.6,294.8L34.6,296.7M34.6,296.7L34.6,299.3M34.6,299.3L34.6,311.4L37.6,311.4L37.6,320.4M37.6,320.4L37.6,323.3M58.7,298.1L66.6,298.1M66.6,298.1L89.6,298.1M89.6,298.1L90.5,298.1M58.7,294.8L58.7,298.1M58.7,298.1L58.7,299.7M58.7,299.7L58.7,313.9L61.7,313.9L61.7,320.4M61.7,320.4L61.7,323.3M90.5,297.9L110.5,297.9L110.5,294.9L126.5,294.9M90.5,294.8L90.5,297.9M90.5,297.9L90.5,298.1M90.5,298.1L90.5,320.3M90.5,320.3L90.5,323.3M126.5,297.2L132.7,297.2M132.7,297.2L153.8,297.2M126.5,294.8L126.5,294.9M126.5,294.9L126.5,297.2M126.5,297.2L126.5,320.6M126.5,320.6L126.5,323.3M153.8,297.8L161.0,297.8M161.0,297.8L184.7,297.8M153.8,294.8L153.8,297.2M153.8,297.2L153.8,297.8M153.8,297.8L153.8,307.7L149.8,307.7L149.8,322.7M149.8,322.7L149.8,323.3M184.7,297.3L199.1,297.3M199.1,297.3L216.4,297.3M184.7,294.8L184.7,297.3M184.7,297.3L184.7,297.8M184.7,297.8L184.7,321.4M184.7,321.4L184.7,323.3M216.4,294.8L231.4,294.8M231.4,294.8L250.1,294.8M216.4,294.8L216.4,294.8M216.4,294.8L216.4,297.3M216.4,297.3L216.4,323.0M216.4,323.0L216.4,323.3M250.1,296.7L255.5,296.7M255.5,296.7L280.8,296.7M280.8,296.7L291.9,296.7M250.1,294.8L250.1,294.8M250.1,294.8L250.1,296.7M250.1,296.7L250.1,306.2L247.1,306.2L247.1,322.7M247.1,322.7L247.1,323.3M291.9,296.8L296.3,296.8M291.9,294.8L291.9,296.7M291.9,296.7L291.9,296.8M291.9,296.8L291.9,311.8L287.9,311.8L287.9,318.0M287.9,318.0L287.9,323.3M6.0,319.6L14.1,319.6L14.1,322.6L27.2,322.6M27.2,320.4L37.6,320.4M37.6,320.4L61.7,320.4M61.7,320.4L64.0,320.4M27.2,319.3L27.2,320.4M27.2,320.4L27.2,322.6M27.2,322.6L27.2,337.5L31.2,337.5L31.2,350.3M31.2,350.3L31.2,353.2M64.0,323.3L76.1,323.3L76.1,320.3L90.5,320.3M90.5,320.3L104.1,320.3M64.0,319.3L64.0,320.4M64.0,320.4L64.0,323.3M64.0,323.3L64.0,336.3L68.0,336.3L68.0,349.5M68.0,349.5L68.0,353.2M104.1,320.6L126.5,320.6M126.5,320.6L134.4,320.6M104.1,319.3L104.1,320.3M104.1,320.3L104.1,320.6M104.1,320.6L104.1,337.0L107.1,337.0L107.1,351.2M107.1,351.2L107.1,353.2M134.4,322.7L149.8,322.7M149.8,322.7L173.2,322.7M134.4,319.3L134.4,320.6M134.4,320.6L134.4,322.7M134.4,322.7L134.4,349.5M134.4,349.5L134.4,353.2M173.2,321.4L184.7,321.4M184.7,321.4L185.9,321.4L185.9,324.4L204.6,324.4M173.2,319.3L173.2,321.4M173.2,321.4L173.2,322.7M173.2,322.7L173.2,339.3L177.2,339.3L177.2,351.5M177.2,351.5L177.2,353.2M204.6,323.0L216.4,323.0M216.4,323.0L228.9,323.0M204.6,319.3L204.6,323.0M204.6,323.0L204.6,324.4M204.6,324.4L204.6,341.5L207.6,341.5L207.6,351.9M207.6,351.9L207.6,353.2M228.9,322.7L247.1,322.7M247.1,322.7L263.3,322.7M228.9,319.3L228.9,322.7M228.9,322.7L228.9,323.0M228.9,323.0L228.9,350.5M228.9,350.5L228.9,353.2M263.3,321.0L277.4,321.0L277.4,318.0L287.9,318.0M287.9,318.0L290.7,318.0M263.3,319.3L263.3,321.0M263.3,321.0L263.3,322.7M263.3,322.7L263.3,335.2L259.3,335.2L259.3,350.6M259.3,350.6L259.3,353.2M290.7,322.1L294.7,322.1M290.7,319.3L290.7,322.1M290.7,322.1L290.7,350.6M290.7,350.6L290.7,353.2M6.0,353.0L16.9,353.0M16.9,350.3L31.2,350.3M31.2,350.3L42.5,350.3M16.9,349.2L16.9,350.3M16.9,350.3L16.9,353.0M16.9,353.0L16.9,363.2L20.9,363.2L20.9,379.6M20.9,379.6L20.9,384.9M42.5,349.5L68.0,349.5M68.0,349.5L68.2,349.5M42.5,349.2L42.5,349.5M42.5,349.5L42.5,350.3M42.5,350.3L42.5,383.7M42.5,383.7L42.5,384.9M68.2,353.1L98.5,353.1M68.2,349.2L68.2,349.5M68.2,349.5L68.2,353.1M68.2,353.1L68.2,384.2M68.2,384.2L68.2,384.9M98.5,351.2L107.1,351.2M107.1,351.2L126.8,351.2M98.5,349.2L98.5,351.2M98.5,351.2L98.5,353.1M98.5,353.1L98.5,367.6L101.5,367.6L101.5,384.1M101.5,384.1L101.5,384.9M126.8,349.5L134.4,349.5M134.4,349.5L137.9,349.5L137.9,346.5L153.1,346.5M126.8,349.2L126.8,349.5M126.8,349.5L126.8,351.2M126.8,351.2L126.8,384.1M126.8,384.1L126.8,384.9M153.1,351.5L177.2,351.5M177.2,351.5L194.1,351.5M153.1,349.2L153.1,351.5M153.1,351.5L153.1,364.0L157.1,364.0L157.1,383.7M157.1,383.7L157.1,384.9M194.1,351.9L207.6,351.9M207.6,351.9L225.2,351.9M194.1,349.2L194.1,351.5M194.1,351.5L194.1,351.9M194.1,351.9L194.1,383.5M194.1,383.5L194.1,384.9M225.2,350.5L228.9,350.5M228.9,350.5L241.3,350.5L241.3,353.5L254.8,353.5M225.2,349.2L225.2,350.5M225.2,350.5L225.2,351.9M225.2,351.9L225.2,366.0L228.2,366.0L228.2,384.3M228.2,384.3L228.2,384.9M254.8,350.6L259.3,350.6M259.3,350.6L284.3,350.6M254.8,349.2L254.8,350.6M254.8,350.6L254.8,353.5M254.8,353.5L254.8,372.7L251.8,372.7L251.8,383.2M251.8,383.2L251.8,384.9M284.3,350.6L290.7,350.6M290.7,350.6L292.9,350.6M284.3,349.2L284.3,350.6M284.3,350.6L284.3,350.6M284.3,350.6L284.3,366.5L288.3,366.5L288.3,381.9M288.3,381.9L288.3,384.9M6.0,382.6L10.4,382.6L10.4,379.6L20.9,379.6M20.9,379.6L25.1,379.6M25.1,383.7L42.5,383.7M42.5,383.7L64.3,383.7M25.1,380.9L25.1,383.7M25.1,383.7L25.1,397.3L21.1,397.3L21.1,411.8M21.1,411.8L21.1,415.7M64.3,384.2L68.2,384.2M68.2,384.2L79.7,384.2L79.7,381.2L90.7,381.2M64.3,380.9L64.3,383.7M64.3,383.7L64.3,384.2M64.3,384.2L64.3,412.4M64.3,412.4L64.3,415.7M90.7,384.1L101.5,384.1M101.5,384.1L126.8,384.1M126.8,384.1L132.7,384.1M90.7,380.9L90.7,381.2M90.7,381.2L90.7,384.1M90.7,384.1L90.7,412.9M90.7,412.9L90.7,415.7M132.7,383.7L157.1,383.7M157.1,383.7L163.6,383.7M132.7,380.9L132.7,383.7M132.7,383.7L132.7,384.1M132.7,384.1L132.7,393.2L129.7,393.2L129.7,412.9M129.7,412.9L129.7,415.7M163.6,383.1L192.0,383.1M163.6,380.9L163.6,383.1M163.6,383.1L163.6,383.7M163.6,383.7L163.6,392.4L159.6,392.4L159.6,415.2M159.6,415.2L159.6,415.7M192.0,383.5L194.1,383.5M194.1,383.5L208.2,383.5L208.2,386.5L221.1,386.5M192.0,380.9L192.0,383.1M192.0,383.1L192.0,383.5M192.0,383.5L192.0,392.2L188.0,392.2L188.0,410.0M188.0,410.0L188.0,415.7M221.1,384.3L228.2,384.3M228.2,384.3L247.7,384.3M221.1,380.9L221.1,384.3M221.1,384.3L221.1,386.5M221.1,386.5L221.1,414.4M221.1,414.4L221.1,415.7M247.7,383.2L251.8,383.2M251.8,383.2L284.0,383.2M247.7,380.9L247.7,383.2M247.7,383.2L247.7,384.3M247.7,384.3L247.7,415.2M247.7,415.2L247.7,415.7M284.0,381.9L288.3,381.9M288.3,381.9L290.9,381.9M284.0,380.9L284.0,381.9M284.0,381.9L284.0,383.2M284.0,383.2L284.0,414.1M284.0,414.1L284.0,415.7M6.0,411.8L21.1,411.8M21.1,411.8L24.6,411.8M24.6,413.8L49.2,413.8M24.6,411.7L24.6,411.8M24.6,411.8L24.6,413.8M24.6,413.8L24.6,435.0L28.6,435.0L28.6,445.4M28.6,445.4L28.6,448.0M49.2,415.4L62.3,415.4L62.3,412.4L64.3,412.4M64.3,412.4L77.1,412.4M49.2,411.7L49.2,413.8M49.2,413.8L49.2,415.4M49.2,415.4L49.2,447.4M49.2,447.4L49.2,448.0M77.1,412.9L90.7,412.9M90.7,412.9L99.5,412.9L99.5,409.9L111.0,409.9M77.1,411.7L77.1,412.4M77.1,412.4L77.1,412.9M77.1,412.9L77.1,446.6M77.1,446.6L77.1,448.0M111.0,412.9L129.7,412.9M129.7,412.9L139.0,412.9M111.0,411.7L111.0,412.9M111.0,412.9L111.0,446.1M111.0,446.1L111.0,448.0M139.0,415.2L159.6,415.2M159.6,415.2L164.9,415.2M139.0,411.7L139.0,412.9M139.0,412.9L139.0,415.2M139.0,415.2L139.0,446.8M139.0,446.8L139.0,448.0M164.9,413.0L175.0,413.0L175.0,410.0L188.0,410.0M188.0,410.0L192.8,410.0M164.9,411.7L164.9,413.0M164.9,413.0L164.9,415.2M164.9,415.2L164.9,429.0L161.9,429.0L161.9,446.8M161.9,446.8L161.9,448.0M192.8,414.4L221.1,414.4M221.1,414.4L230.3,414.4M192.8,411.7L192.8,414.4M192.8,414.4L192.8,444.9M192.8,444.9L192.8,448.0M230.3,415.2L247.7,415.2M247.7,415.2L256.4,415.2M230.3,411.7L230.3,414.4M230.3,414.4L230.3,415.2M230.3,415.2L230.3,446.3M230.3,446.3L230.3,448.0M256.4,414.1L284.0,414.1M284.0,414.1L287.4,414.1M256.4,411.7L256.4,414.1M256.4,414.1L256.4,415.2M256.4,415.2L256.4,427.0L260.4,427.0L260.4,445.7M260.4,445.7L260.4,448.0M287.4,415.4L288.8,415.4M287.4,411.7L287.4,414.1M287.4,414.1L287.4,415.4M287.4,415.4L287.4,425.3L288.2,425.3M6.0,445.4L28.6,445.4M28.6,445.4L28.8,445.4M28.8,447.4L49.2,447.4M49.2,447.4L65.4,447.4M28.8,444.0L28.8,445.4M28.8,445.4L28.8,447.4M28.8,447.4L28.8,461.7L32.8,461.7L32.8,480.7M32.8,480.7L32.8,482.3M65.4,446.6L77.1,446.6M77.1,446.6L104.0,446.6M65.4,444.0L65.4,446.6M65.4,446.6L65.4,447.4M65.4,447.4L65.4,458.1L62.4,458.1L62.4,482.3M104.0,446.1L111.0,446.1M111.0,446.1L134.9,446.1M104.0,444.0L104.0,446.1M104.0,446.1L104.0,446.6M104.0,446.6L104.0,482.3M134.9,446.8L139.0,446.8M139.0,446.8L161.9,446.8M161.9,446.8L172.6,446.8M134.9,444.0L134.9,446.1M134.9,446.1L134.9,446.8M134.9,446.8L134.9,464.3L130.9,464.3L130.9,481.0M130.9,481.0L130.9,482.3M172.6,444.9L192.8,444.9M192.8,444.9L209.1,444.9M172.6,444.0L172.6,444.9M172.6,444.9L172.6,446.8M172.6,446.8L172.6,479.4M172.6,479.4L172.6,482.3M209.1,446.3L230.3,446.3M230.3,446.3L235.5,446.3M209.1,444.0L209.1,444.9M209.1,444.9L209.1,446.3M209.1,446.3L209.1,479.4M209.1,479.4L209.1,482.3M235.5,445.7L260.4,445.7M260.4,445.7L273.2,445.7M235.5,444.0L235.5,445.7M235.5,445.7L235.5,446.3M235.5,446.3L235.5,480.2M235.5,480.2L235.5,482.3M273.2,448.0L286.8,448.0M273.2,444.0L273.2,445.7M273.2,445.7L273.2,448.0M273.2,448.0L273.2,479.3M273.2,479.3L273.2,482.3M6.0,484.5L12.5,484.5M12.5,480.7L32.8,480.7M32.8,480.7L35.3,480.7L35.3,483.7L49.9,483.7M12.5,478.3L12.5,480.7M12.5,480.7L12.5,484.5M12.5,484.5L12.5,493.6L16.5,493.6L16.5,505.5M16.5,505.5L16.5,508.1M49.9,481.2L61.6,481.2L61.6,484.2L76.6,484.2M49.9,478.3L49.9,481.2M49.9,481.2L49.9,483.7M49.9,483.7L49.9,507.4M49.9,507.4L49.9,508.1M76.6,482.0L88.3,482.0L88.3,485.0L106.0,485.0M76.6,478.3L76.6,482.0M76.6,482.0L76.6,484.2M76.6,484.2L76.6,488.9L80.6,488.9L80.6,508.1M106.0,481.0L130.9,481.0M130.9,481.0L139.4,481.0M106.0,478.3L106.0,481.0M106.0,481.0L106.0,485.0M106.0,485.0L106.0,497.4L110.0,497.4L110.0,504.1M110.0,504.1L110.0,508.1M139.4,479.4L172.6,479.4M172.6,479.4L173.6,479.4M139.4,478.3L139.4,479.4M139.4,479.4L139.4,481.0M139.4,481.0L139.4,497.3L143.4,497.3L143.4,504.1M143.4,504.1L143.4,508.1M173.6,479.4L209.1,479.4M209.1,479.4L210.3,479.4M173.6,478.3L173.6,479.4M173.6,479.4L173.6,479.4M173.6,479.4L173.6,502.0M173.6,502.0L173.6,508.1M210.3,480.2L235.5,480.2M235.5,480.2L246.7,480.2M210.3,478.3L210.3,479.4M210.3,479.4L210.3,480.2M210.3,480.2L210.3,489.8L206.3,489.8L206.3,506.0M206.3,506.0L206.3,508.1M246.7,481.2L271.0,481.2M246.7,478.3L246.7,480.2M246.7,480.2L246.7,481.2M246.7,481.2L246.7,505.9M246.7,505.9L246.7,508.1M271.0,479.3L273.2,479.3M273.2,479.3L285.4,479.3M271.0,478.3L271.0,479.3M271.0,479.3L271.0,481.2M271.0,481.2L271.0,505.9M271.0,505.9L271.0,508.1M6.0,505.5L16.5,505.5M16.5,505.5L24.5,505.5M24.5,507.4L49.9,507.4M49.9,507.4L50.8,507.4M24.5,504.1L24.5,505.5M24.5,505.5L24.5,507.4M24.5,507.4L24.5,524.7L21.5,524.7L21.5,534.7M21.5,534.7L21.5,535.3M50.8,507.6L69.8,507.6L69.8,510.6L87.2,510.6M50.8,504.1L50.8,507.4M50.8,507.4L50.8,507.6M50.8,507.6L50.8,534.4M50.8,534.4L50.8,535.3M87.2,504.1L110.0,504.1M110.0,504.1L111.5,504.1M87.2,504.1L87.2,504.1M87.2,504.1L87.2,510.6M87.2,510.6L87.2,523.7L91.2,523.7L91.2,534.4M91.2,534.4L91.2,535.3M111.5,504.1L143.4,504.1M143.4,504.1L151.2,504.1M111.5,504.1L111.5,504.1M111.5,504.1L111.5,504.1M111.5,504.1L111.5,534.2M111.5,534.2L111.5,535.3M151.2,505.0L171.9,505.0L171.9,502.0L173.6,502.0M173.6,502.0L186.1,502.0M151.2,504.1L151.2,504.1M151.2,504.1L151.2,505.0M151.2,505.0L151.2,522.8L155.2,522.8L155.2,533.1M155.2,533.1L155.2,535.3M186.1,506.0L206.3,506.0M206.3,506.0L215.5,506.0M186.1,504.1L186.1,506.0M186.1,506.0L186.1,531.6M186.1,531.6L186.1,535.3M215.5,506.9L246.4,506.9M215.5,504.1L215.5,506.0M215.5,506.0L215.5,506.9M215.5,506.9L215.5,531.5M215.5,531.5L215.5,535.3M246.4,505.9L246.7,505.9M246.7,505.9L271.0,505.9M271.0,505.9L273.5,505.9M246.4,504.1L246.4,505.9M246.4,505.9L246.4,506.9M246.4,506.9L246.4,520.6L250.4,520.6L250.4,531.8M250.4,531.8L250.4,535.3M273.5,505.7L284.5,505.7M273.5,504.1L273.5,505.7M273.5,505.7L273.5,505.9M273.5,505.9L273.5,532.5M273.5,532.5L273.5,535.3M6.0,534.7L21.5,534.7M21.5,534.7L29.4,534.7M29.4,534.4L50.8,534.4M50.8,534.4L63.7,534.4M29.4,531.3L29.4,534.4M29.4,534.4L29.4,534.7M29.4,534.7L29.4,546.1L32.4,546.1L32.4,565.2M32.4,565.2L32.4,567.6M63.7,534.4L91.2,534.4M91.2,534.4L103.9,534.4M63.7,531.3L63.7,534.4M63.7,534.4L63.7,534.4M63.7,534.4L63.7,550.7L60.7,550.7L60.7,567.2M60.7,567.2L60.7,567.6M103.9,534.2L111.5,534.2M111.5,534.2L116.3,534.2L116.3,537.2L143.1,537.2M103.9,531.3L103.9,534.2M103.9,534.2L103.9,534.4M103.9,534.4L103.9,549.8L100.9,549.8L100.9,566.9M100.9,566.9L100.9,567.6M143.1,533.1L155.2,533.1M155.2,533.1L175.6,533.1M143.1,531.3L143.1,533.1M143.1,533.1L143.1,537.2M143.1,537.2L143.1,554.5L147.1,554.5L147.1,563.9M147.1,563.9L147.1,567.6M175.6,531.6L186.1,531.6M186.1,531.6L205.6,531.6M175.6,531.3L175.6,531.6M175.6,531.6L175.6,533.1M175.6,533.1L175.6,543.4L172.6,543.4L172.6,567.0M172.6,567.0L172.6,567.6M205.6,531.5L215.5,531.5M215.5,531.5L217.8,531.5L217.8,534.5L232.9,534.5M205.6,531.3L205.6,531.5M205.6,531.5L205.6,531.6M205.6,531.6L205.6,547.1L209.6,547.1L209.6,564.8M209.6,564.8L209.6,567.6M232.9,531.8L250.4,531.8M250.4,531.8L268.1,531.8M232.9,531.3L232.9,531.8M232.9,531.8L232.9,534.5M232.9,534.5L232.9,552.4L229.9,552.4L229.9,566.8M229.9,566.8L229.9,567.6M268.1,532.5L273.5,532.5M273.5,532.5L283.6,532.5M268.1,531.3L268.1,531.8M268.1,531.8L268.1,532.5M268.1,532.5L268.1,565.0M268.1,565.0L268.1,567.6M6.0,568.9L15.3,568.9M15.3,565.2L32.4,565.2M32.4,565.2L41.8,565.2L41.8,562.2L54.0,562.2M15.3,563.6L15.3,565.2M15.3,565.2L15.3,568.9M15.3,568.9L15.3,596.4M15.3,596.4L15.3,597.2M54.0,567.2L60.7,567.2M60.7,567.2L85.5,567.2M54.0,563.6L54.0,567.2M54.0,567.2L54.0,579.0L58.0,579.0L58.0,596.6M58.0,596.6L58.0,597.2M85.5,566.9L100.9,566.9M100.9,566.9L120.6,566.9M85.5,563.6L85.5,566.9M85.5,566.9L85.5,567.2M85.5,567.2L85.5,595.2M85.5,595.2L85.5,597.2M120.6,563.9L147.1,563.9M147.1,563.9L160.7,563.9M120.6,563.6L120.6,563.9M120.6,563.9L120.6,566.9M120.6,566.9L120.6,577.5L124.6,577.5L124.6,595.0M124.6,595.0L124.6,597.2M160.7,567.0L172.6,567.0M172.6,567.0L194.4,567.0M160.7,563.6L160.7,563.9M160.7,563.9L160.7,567.0M160.7,567.0L160.7,585.9L157.7,585.9L157.7,594.6M157.7,594.6L157.7,597.2M194.4,564.8L209.6,564.8M209.6,564.8L220.9,564.8M194.4,563.6L194.4,564.8M194.4,564.8L194.4,567.0M194.4,567.0L194.4,578.7L197.4,578.7L197.4,594.7M197.4,594.7L197.4,597.2M220.9,566.8L229.9,566.8M229.9,566.8L235.6,566.8L235.6,569.8L259.9,569.8M220.9,563.6L220.9,564.8M220.9,564.8L220.9,566.8M220.9,566.8L220.9,577.6L217.9,577.6L217.9,594.7M217.9,594.7L217.9,597.2M259.9,565.0L268.1,565.0M268.1,565.0L282.5,565.0M259.9,563.6L259.9,565.0M259.9,565.0L259.9,569.8M259.9,569.8L259.9,582.4L255.9,582.4L255.9,593.6M255.9,593.6L255.9,597.2M6.0,593.4L13.7,593.4L13.7,596.4L15.3,596.4M15.3,596.4L23.4,596.4M23.4,596.6L58.0,596.6M58.0,596.6L60.1,596.6M23.4,593.2L23.4,596.4M23.4,596.4L23.4,596.6M23.4,596.6L23.4,629.9M23.4,629.9L23.4,630.3M60.1,595.2L85.5,595.2M85.5,595.2L86.4,595.2M60.1,593.2L60.1,595.2M60.1,595.2L60.1,596.6M60.1,596.6L60.1,612.0L56.1,612.0L56.1,629.9M56.1,629.9L56.1,630.3M86.4,595.3L120.4,595.3M86.4,593.2L86.4,595.2M86.4,595.2L86.4,595.3M86.4,595.3L86.4,630.3M120.4,595.0L124.6,595.0M124.6,595.0L147.5,595.0M120.4,593.2L120.4,595.0M120.4,595.0L120.4,595.3M120.4,595.3L120.4,629.2M120.4,629.2L120.4,630.3M147.5,594.6L157.7,594.6M157.7,594.6L167.4,594.6L167.4,597.6L188.9,597.6M147.5,593.2L147.5,594.6M147.5,594.6L147.5,595.0M147.5,595.0L147.5,629.2M147.5,629.2L147.5,630.3M188.9,594.7L197.4,594.7M197.4,594.7L217.9,594.7M217.9,594.7L222.1,594.7M188.9,593.2L188.9,594.7M188.9,594.7L188.9,597.6M188.9,597.6L188.9,625.2M188.9,625.2L188.9,630.3M222.1,596.6L240.7,596.6L240.7,593.6L255.9,593.6M255.9,593.6L262.3,593.6M222.1,593.2L222.1,594.7M222.1,594.7L222.1,596.6M222.1,596.6L222.1,616.4L218.1,616.4L218.1,630.3M262.3,594.4L282.2,594.4M262.3,593.2L262.3,593.6M262.3,593.6L262.3,594.4M262.3,594.4L262.3,611.5L265.3,611.5L265.3,628.3M265.3,628.3L265.3,630.3M6.0,627.6L18.3,627.6M18.3,629.9L23.4,629.9M23.4,629.9L56.1,629.9M56.1,629.9L59.8,629.9M18.3,626.3L18.3,627.6M18.3,627.6L18.3,629.9M18.3,629.9L18.3,646.7L14.3,646.7L14.3,659.8M14.3,659.8L14.3,662.8M59.8,628.6L71.0,628.6L71.0,631.6L90.0,631.6M59.8,626.3L59.8,628.6M59.8,628.6L59.8,629.9M59.8,629.9L59.8,662.1M59.8,662.1L59.8,662.8M90.0,629.3L107.8,629.3L107.8,632.3L120.2,632.3M90.0,626.3L90.0,629.3M90.0,629.3L90.0,631.6M90.0,631.6L90.0,659.2M90.0,659.2L90.0,662.8M120.2,629.2L120.4,629.2M120.4,629.2L147.5,629.2M147.5,629.2L155.6,629.2M120.2,626.3L120.2,629.2M120.2,629.2L120.2,632.3M120.2,632.3L120.2,650.0L117.2,650.0L117.2,661.9M117.2,661.9L117.2,662.8M155.6,628.2L168.0,628.2L168.0,625.2L188.9,625.2M188.9,625.2L192.4,625.2M155.6,626.3L155.6,628.2M155.6,628.2L155.6,629.2M155.6,629.2L155.6,647.2L151.6,647.2L151.6,660.5M151.6,660.5L151.6,662.8M192.4,627.3L207.5,627.3L207.5,630.3L227.3,630.3M192.4,626.3L192.4,627.3M192.4,627.3L192.4,648.8L189.4,648.8L189.4,662.6M189.4,662.6L189.4,662.8M227.3,627.1L254.7,627.1M227.3,626.3L227.3,627.1M227.3,627.1L227.3,630.3M227.3,630.3L227.3,652.9M254.7,628.3L265.3,628.3M265.3,628.3L271.4,628.3L271.4,631.3L279.0,631.3M254.7,626.3L254.7,627.1M254.7,627.1L254.7,628.3M254.7,628.3L254.7,648.7M279.0,626.5L282.6,626.5M279.0,626.3L279.0,626.5M279.0,626.5L279.0,631.3M279.0,631.3L279.0,643.9L282.0,643.9L282.0,653.1M6.0,659.8L14.3,659.8M14.3,659.8L44.3,659.8M6.0,671.3L9.4,671.3L9.4,683.8M9.4,683.8L9.4,687.6M44.3,662.1L59.8,662.1M59.8,662.1L79.2,662.1M44.3,658.8L44.3,659.8M44.3,659.8L44.3,662.1M44.3,662.1L44.3,674.6L40.3,674.6L40.3,684.8M40.3,684.8L40.3,687.6M79.2,659.2L90.0,659.2M90.0,659.2L97.6,659.2L97.6,656.2L107.4,656.2M79.2,658.8L79.2,659.2M79.2,659.2L79.2,662.1M79.2,662.1L79.2,671.5L82.2,671.5L82.2,684.1M82.2,684.1L82.2,687.6M107.4,661.9L117.2,661.9M117.2,661.9L137.2,661.9M107.4,658.8L107.4,661.9M107.4,661.9L107.4,670.4L104.4,670.4L104.4,687.5M104.4,687.5L104.4,687.6M137.2,660.5L151.6,660.5M151.6,660.5L155.6,660.5L155.6,663.5L173.0,663.5M137.2,658.8L137.2,660.5M137.2,660.5L137.2,661.9M137.2,661.9L137.2,687.4M137.2,687.4L137.2,687.6M173.0,659.6L188.2,659.6L188.2,662.6L189.4,662.6M189.4,662.6L202.8,662.6M173.0,658.8L173.0,659.6M173.0,659.6L173.0,663.5M173.0,663.5L173.0,686.5M173.0,686.5L173.0,687.6M202.8,660.8L210.8,660.8M202.8,658.8L202.8,660.8M202.8,660.8L202.8,662.6M202.8,662.6L202.8,666.2M202.8,679.9L202.8,687.6M6.0,683.8L9.4,683.8M9.4,683.8L11.8,683.8M11.8,687.0L40.0,687.0M11.8,683.6L11.8,683.8M11.8,683.8L11.8,687.0M11.8,687.0L11.8,703.0M40.0,684.8L40.3,684.8M40.3,684.8L67.7,684.8M40.0,683.6L40.0,684.8M40.0,684.8L40.0,687.0M40.0,687.0L40.0,698.2L44.0,698.2L44.0,705.4M67.7,684.1L82.2,684.1M82.2,684.1L84.2,684.1L84.2,681.1L91.7,681.1M67.7,683.6L67.7,684.1M67.7,684.1L67.7,684.8M67.7,684.8L67.7,700.2L64.7,700.2L64.7,714.9M64.7,714.9L64.7,716.9M91.7,687.5L104.4,687.5M104.4,687.5L132.0,687.5M91.7,683.6L91.7,687.5M91.7,687.5L91.7,713.7M91.7,713.7L91.7,716.9M132.0,687.4L137.2,687.4M137.2,687.4L169.3,687.4M132.0,683.6L132.0,687.4M132.0,687.4L132.0,687.5M132.0,687.5L132.0,696.6L129.0,696.6L129.0,713.8M129.0,713.8L129.0,716.9M169.3,686.5L173.0,686.5M173.0,686.5L177.3,686.5M183.5,688.1L183.5,689.5L187.5,689.5M198.1,689.5L205.4,689.5M169.3,683.6L169.3,686.5M169.3,686.5L169.3,687.4M169.3,687.4L169.3,696.6L173.3,696.6L173.3,713.9M173.3,713.9L173.3,716.9M205.4,685.3L226.2,685.3M205.4,683.6L205.4,685.3M205.4,685.3L205.4,689.5M205.4,689.5L205.4,713.9M205.4,713.9L205.4,716.9M51.7,714.9L64.7,714.9M64.7,714.9L82.8,714.9M51.7,712.9L51.7,714.9M51.7,714.9L51.7,718.4M82.8,713.7L91.7,713.7M91.7,713.7L112.4,713.7M82.8,712.9L82.8,713.7M82.8,713.7L82.8,714.9M82.8,714.9L82.8,728.5L86.8,728.5L86.8,744.6M112.4,713.8L129.0,713.8M129.0,713.8L139.1,713.8M112.4,712.9L112.4,713.7M112.4,713.7L112.4,713.8M112.4,713.8L112.4,745.1M112.4,745.1L112.4,748.3M139.1,715.1L168.3,715.1M139.1,712.9L139.1,713.8M139.1,713.8L139.1,715.1M139.1,715.1L139.1,746.1M168.3,713.9L173.3,713.9M173.3,713.9L205.4,713.9M205.4,713.9L209.5,713.9M168.3,712.9L168.3,713.9M168.3,713.9L168.3,715.1M168.3,715.1L168.3,732.1M168.8,732.3L171.3,732.3L171.3,733.6M209.5,713.9L211.9,713.9M209.5,712.9L209.5,713.9M209.5,713.9L209.5,713.9M209.5,713.9L209.5,716.2M213.5,738.5L213.5,744.2M213.5,744.2L213.5,748.3M94.9,745.1L112.4,745.1M112.4,745.1L114.0,745.1M114.0,748.0L120.5,748.0M146.4,751.0L150.5,751.0M114.0,744.3L114.0,745.1M114.0,745.1L114.0,748.0M114.0,748.0L114.0,755.4M154.2,745.4L156.2,745.4M154.2,744.3L154.2,745.4M154.2,745.4L154.2,749.9M187.4,747.2L204.3,747.2L204.3,744.2L213.5,744.2M213.5,744.2L220.0,744.2M187.4,744.3L187.4,747.2M187.4,747.2L187.4,747.6M220.0,746.7L231.2,746.7M220.0,744.3L220.0,746.7M220.0,746.7L220.0,761.8L217.0,761.8L217.0,774.2M217.0,774.2L217.0,774.2M213.8,774.2L217.0,774.2M217.0,774.2L227.3,774.2L227.3,771.2L240.6,771.2M213.8,770.8L213.8,774.2M213.8,774.2L213.8,774.2" fill="none" stroke="#606262" stroke-width="1"/>
<polygon points="0.0,705.2 5.9,705.2 8.9,703.6 15.8,702.2 19.7,698.3 24.6,699.3 29.6,700.3 30.5,704.2 27.6,707.2 32.5,707.2 45.3,705.2 48.3,704.8 47.3,711.1 45.7,716.0 51.6,718.0 52.8,725.9 59.1,724.9 63.1,727.9 70.0,726.9 72.9,730.8 75.9,737.7 77.8,740.7 84.7,741.7 86.7,744.6 92.6,743.0 96.6,746.6 102.5,748.6 106.4,752.5 105.4,755.4 114.3,755.4 115.3,749.5 120.2,748.6 122.2,744.6 128.1,741.7 130.0,746.6 134.0,742.6 137.9,745.6 145.8,748.6 146.8,752.5 151.7,750.5 160.0,748.6 157.9,750.5 161.8,740.7 157.9,738.7 165.8,730.8 173.6,734.8 179.6,740.7 175.6,746.6 179.6,746.6 195.3,748.6 205.2,754.5 209.1,758.4 209.1,774.2 240.6,774.2 240.6,758.4 239.7,754.5 232.8,751.5 230.8,745.6 225.9,741.7 219.0,742.6 215.0,738.7 207.1,737.7 201.2,734.8 199.3,729.8 203.2,724.9 205.2,719.0 211.1,715.1 215.0,709.1 220.0,707.2 221.9,701.3 223.9,694.4 226.8,689.4 225.9,683.5 227.8,675.6 228.8,668.7 224.9,671.7 219.0,670.7 215.0,673.7 209.1,670.7 204.2,675.6 202.2,681.6 197.3,685.5 198.3,690.4 194.3,694.4 188.4,694.4 188.4,690.4 185.5,687.5 179.6,689.4 176.6,685.5 177.6,681.6 182.5,679.6 187.4,677.6 192.4,672.7 194.3,668.7 201.2,666.8 209.1,663.8 213.1,656.9 217.0,652.0 217.4,650.9 220.4,653.9 219.4,655.9 227.3,652.9 233.2,650.0 239.1,648.0 241.1,646.0 249.0,646.0 253.9,648.0 258.8,651.9 262.8,652.9 266.7,651.9 272.6,653.9 278.5,654.9 284.4,651.9 286.4,649.0 290.3,648.0 296.3,649.0 298.2,652.9 302.2,654.9 306.1,652.9 308.1,645.0 307.1,637.1 309.1,629.3 311.0,624.3 314.0,622.4 319.9,624.3 320.9,631.2 321.9,639.1 322.9,646.0 326.8,649.0 329.8,653.9 333.7,657.8 335.7,660.8 340.0,659.8 330.0,663.1 341.8,659.1 355.6,655.2 369.4,652.2 385.2,649.3 400.9,647.3 412.8,646.9 424.6,648.3 436.4,650.2 448.2,653.2 460.0,657.1 471.9,663.1 479.8,668.0 485.7,672.9 490.0,674.9 480.0,669.3 487.9,675.2 495.8,681.1 501.7,686.0 505.6,690.9 506.6,698.8 507.6,704.7 510.5,711.6 513.5,711.6 522.4,711.0 529.3,709.7 537.1,706.7 540.1,704.7 543.1,700.8 548.0,700.4 547.0,704.7 546.0,708.7 548.0,710.6 552.9,706.7 558.8,702.8 564.7,697.8 570.6,693.9 578.5,690.0 582.5,691.9 587.4,691.9 587.4,687.0 582.5,686.0 578.5,684.0 584.4,681.1 587.4,677.1 592.3,674.2 598.2,672.8 604.1,674.8 610.0,674.2 610.0,673.6 613.9,675.6 619.9,681.5 627.7,685.5 635.6,689.4 639.6,694.3 641.5,701.2 647.4,707.1 654.3,712.1 657.3,717.0 657.3,724.9 662.2,728.8 668.1,733.7 673.1,739.7 676.0,744.6 680.0,748.5 681.9,754.4 680.9,760.3 684.9,762.3 685.9,757.4 692.8,757.4 700.6,758.4 701.6,764.3 705.6,768.2 707.5,776.1 710.5,781.0 713.4,786.0 712.5,790.9 713.4,799.8 714.4,807.6 715,830 -20,830 -20,705" fill="#024365" stroke="none" stroke-width="1"/>
<polygon points="330.0,657.1 333.0,656.2 334.9,659.1 331.0,660.1" fill="#024365" stroke="#000" stroke-width="0.8"/>
<polygon points="343.8,652.2 345.8,653.2 349.7,651.2 353.6,651.2 356.6,647.3 359.6,644.3 362.5,644.3 361.5,647.3 359.6,649.3 357.6,654.2 351.7,657.1 344.8,657.1" fill="#024365" stroke="#000" stroke-width="0.8"/>
<polygon points="369.4,652.2 372.4,648.3 377.3,644.3 378.3,638.4 375.3,632.5 378.3,631.5 381.2,636.5 383.2,636.5 384.2,642.4 386.2,636.5 387.1,631.5 389.1,632.5 389.1,638.4 393.1,642.4 398.0,643.7 393.1,646.3 385.2,647.3 377.3,650.2 372.4,653.2" fill="#024365" stroke="#000" stroke-width="0.8"/>
<polygon points="417.7,644.3 420.6,642.4 426.6,638.4 430.5,638.4 431.5,642.4 438.4,641.4 446.3,640.4 449.2,639.4 451.2,642.4 454.1,644.3 455.1,648.3 450.2,647.3 444.3,646.3 436.4,647.3 428.5,647.3 422.6,648.3" fill="#024365" stroke="#000" stroke-width="0.8"/>
<polygon points="474.8,657.1 479.8,656.2 482.7,658.1 487.6,657.1 490.0,659.1 490.0,670.9 485.7,671.9 482.7,667.0 477.8,663.1" fill="#024365" stroke="#000" stroke-width="0.8"/>
<polygon points="480.0,655.5 483.9,659.4 488.9,658.4 491.8,654.5 494.8,652.5 498.7,653.5 494.8,657.4 491.8,661.4 486.9,664.3 484.9,669.3 489.9,673.2 495.8,676.2 501.7,677.1 507.6,678.1 508.6,680.1 503.6,681.1 497.7,680.1 491.8,677.1 485.9,674.2 480.0,669.3" fill="#024365" stroke="#000" stroke-width="0.8"/>
<polygon points="157.9,738.7 165.8,730.8 173.6,734.8 179.6,740.7 175.6,746.6 168.7,748.6 161.8,754.5 157.9,750.5 155.9,744.6" fill="#024365" stroke="#000" stroke-width="0.8"/>
<polygon points="802.1,560.7 805.9,560.7 805.9,652.1 802.9,652.1 800.3,643.4 802.9,633.1 800.3,622.8 802.1,612.4 799.5,602.1 802.1,591.7 800.3,583.1 802.9,574.5" fill="#024365" stroke="#000" stroke-width="0.8"/>
<polygon points="784.0,650.3 789.1,647.8 793.4,645.2 800.3,644.3 803.8,650.3 796.9,650.3 791.7,652.1 787.4,657.2 787.9,664.1 786.6,671.0 784.5,680.0 782.2,680.0 784.0,671.0 784.8,664.1 784.0,658.1" fill="#024365" stroke="#000" stroke-width="0.8"/>
<polygon points="783,680 787,680 790,700 792,718 788,718 785,700" fill="#024365" stroke="#000" stroke-width="0.8"/>
<polygon points="15.8,720.0 21.7,717.0 29.6,719.0 39.4,722.0 35.5,727.9 29.6,730.8 22.7,725.9" fill="#5d4f4a" stroke="#000" stroke-width="1"/>
<polygon points="66.0,743.6 70.9,739.7 77.8,740.7 80.8,743.6 81.8,748.6 82.8,753.5 74.9,751.5 69.0,748.6" fill="#5d4f4a" stroke="#000" stroke-width="1"/>
<path d="M210.8,677.5L212.2,678.9L214.7,678.6M191.4,709.7L194.2,711.0L195.6,711.9M207.7,675.9L207.6,674.1L205.9,672.6L205.5,670.7M197.6,709.5L199.5,707.4L202.1,706.8L203.9,708.3M216.9,678.1L214.8,678.8L213.5,677.6L210.6,675.8L207.9,676.3M181.9,717.6L184.2,717.7L187.7,717.7L188.8,716.3L189.2,713.1M183.1,721.9L182.1,724.1L181.0,725.3L179.8,726.7L180.1,728.4L179.3,730.0M221.2,678.0L217.7,677.7L216.3,675.9L214.5,674.4L214.5,670.5M202.9,712.3L202.1,714.6L200.4,718.0L198.2,719.8M182.6,733.2L182.3,735.7L182.1,738.2L184.4,741.4L185.6,742.7L186.5,744.2M206.8,708.8L203.8,708.5L202.1,709.8M185.8,729.8L185.8,731.6L186.5,733.6L185.9,735.4L188.3,738.4M205.0,682.5L204.3,686.1L203.0,687.8L202.4,689.6L200.1,691.3M216.8,694.8L220.4,695.1L222.1,696.3L224.0,697.8M189.7,714.7L189.7,717.0L188.7,720.5L190.0,722.6L190.2,724.6L188.4,726.4M210.1,678.4L209.3,680.0L210.5,683.8L213.3,684.5L216.4,685.0L219.2,686.2M181.0,726.5L180.9,730.2L179.5,731.6L179.1,733.8M191.4,712.1L192.0,715.4L190.0,717.9L187.3,718.4M216.7,682.7L218.6,681.4L221.1,679.8M217.1,679.8L219.9,677.7L222.2,676.0L226.0,675.9M201.0,713.9L202.7,715.8L204.4,717.9L203.4,721.0M192.3,710.3L194.4,709.0L196.3,706.4L197.2,704.6M210.4,697.3L208.6,700.7L207.9,703.3L204.4,704.1L202.9,706.2L201.5,708.1M214.2,673.9L217.0,673.9L220.5,672.2M185.3,734.5L186.2,732.5L188.1,732.0M205.4,707.3L203.3,710.1L203.5,713.8M208.8,687.6L208.7,691.6L209.3,695.3L209.1,696.9L207.1,700.2L204.9,700.1M188.6,735.4L190.2,737.7L192.5,738.2L193.9,736.6M180.7,722.0L183.3,722.6L185.9,724.3L187.7,726.5L186.9,730.4L187.4,732.4M186.6,739.3L186.8,735.9L185.9,734.2M184.0,729.3L186.5,731.4L188.4,730.7L189.4,729.6L190.4,727.6M181.6,732.1L182.2,730.5L181.9,727.4M191.7,724.9L190.7,722.1L189.5,720.3M209.8,678.3L211.6,681.1L210.9,683.5L211.4,687.4M187.1,721.4L186.4,724.9L188.0,727.2L190.0,730.2L189.8,733.7L188.8,737.3M185.0,728.9L188.1,729.3L189.6,729.5M203.8,708.7L204.6,710.2L207.4,711.9L210.7,711.7L212.3,713.9L214.3,715.7M192.0,722.7L192.4,724.3L194.5,726.7L195.5,729.7M193.8,707.4L191.1,706.3L189.4,706.3M224.0,677.6L225.8,677.2L228.3,678.3L229.2,681.5L232.0,683.9M195.0,729.2L196.7,728.6L199.3,730.5L199.5,732.7L200.4,735.1M197.1,701.5L196.3,705.0L197.3,708.7L198.9,710.1L200.3,711.5M214.0,675.9L213.5,678.1L216.0,680.9L218.7,681.0M192.3,716.8L192.7,719.9L195.1,721.2L196.1,723.9L197.2,726.0L197.0,728.6M205.9,689.1L206.7,686.7L208.3,685.7M180.9,731.3L179.7,733.3L180.5,735.3L179.4,736.7M203.8,715.0L204.5,712.0L204.6,709.7L207.3,706.8M183.5,735.3L185.2,735.5L187.4,733.8L191.2,732.8L194.2,733.5L196.0,735.4M217.0,688.3L220.0,689.1L222.4,689.9L223.5,691.3L226.9,693.0M219.7,688.9L221.1,686.8L222.4,685.8L223.2,682.2M210.6,678.1L211.3,676.6L211.5,674.1L212.4,672.3L215.4,670.9M218.8,688.2L218.1,685.2L218.2,681.4L218.1,677.7L215.6,676.0M223.6,676.3L226.3,674.4L227.0,671.8L228.5,670.1M210.9,708.0L207.2,709.4L205.6,710.2L205.3,711.9L205.4,715.6L205.0,719.0M198.0,724.4L197.5,727.6L198.9,730.1L200.3,732.0L200.7,734.6L200.3,736.7M209.6,699.9L208.1,700.6L207.3,702.1M208.6,697.1L206.6,699.7L206.1,701.8M180.2,723.5L181.3,725.3L183.6,728.4M188.7,726.7L188.5,729.0L189.3,731.3L188.8,732.9M189.3,723.3L191.3,721.2L191.2,718.7M209.5,686.6L209.2,688.4L208.7,692.1L210.0,694.7L209.5,698.0L208.0,699.7M222.9,685.3L224.1,683.6L227.1,682.6L228.3,683.8M192.3,725.0L191.5,722.7L189.7,721.9L186.7,722.2L184.7,721.7M212.1,685.1L209.7,686.7L209.7,688.5M198.7,709.7L199.0,711.8L196.5,713.8L195.5,715.0M210.5,698.9L209.6,700.6L210.2,702.2M207.3,697.2L209.1,694.6L210.8,694.6M209.4,697.6L211.9,696.2L213.5,697.0L216.7,698.4L217.0,700.4M186.0,736.2L186.5,739.4L185.6,743.0L183.7,746.1L181.5,748.2L181.1,750.8M224.4,683.1L220.9,683.8L218.5,686.6L215.3,686.9M211.6,694.5L209.4,694.9L207.6,696.6L206.2,699.1L206.5,700.5M201.1,714.3L199.7,715.1L198.1,716.9L195.4,717.4L193.8,717.1L190.7,719.4M194.8,721.2L196.7,718.2L195.9,716.7L195.2,713.6L193.5,712.8L193.0,710.6M190.5,728.7L193.5,729.3L194.7,731.6L198.1,733.5M202.7,712.5L204.7,712.5L207.7,712.0L209.6,710.5L211.6,707.7M192.5,724.4L195.0,725.1L198.1,726.0L198.9,728.0L200.0,731.5M214.9,697.6L211.8,699.1L210.2,700.2L208.6,700.3" fill="none" stroke="#000" stroke-width="1.3" stroke-linejoin="miter"/>
<path d="M219,690h2v2h-2zM187,714h3v1h-3zM191,712h2v1h-2zM197,728h2v1h-2zM181,727h2v1h-2zM185,716h2v1h-2zM183,728h2v2h-2zM211,703h3v1h-3zM223,680h2v1h-2zM200,708h3v2h-3zM193,710h3v2h-3zM193,716h2v1h-2zM215,695h3v1h-3z" fill="#024365"/>
<path d="M99.1,747.5L98.1,750.1L99.1,751.3L98.4,753.3L95.3,754.7L92.9,756.5M98.4,744.8L99.3,743.1L102.5,742.9M87.3,744.4L86.3,745.7L84.4,747.2M103.6,753.1L105.5,753.7L106.9,752.9L110.3,753.6L113.5,755.3L115.0,756.9M88.8,743.9L90.0,745.6L93.1,747.8L96.3,746.6L99.3,748.3M99.2,748.7L97.6,748.8L95.8,748.9M98.4,751.7L98.4,750.2L96.4,747.5L97.0,746.1L98.1,743.6M103.2,745.0L101.4,745.7L97.8,744.5L95.9,745.0L93.3,742.8M98.3,743.9L94.6,744.1L92.3,742.9L90.7,741.1L88.3,740.1L86.6,739.3M99.0,751.4L101.3,753.1L101.6,755.7L101.7,758.0L102.0,761.2M92.0,745.6L90.6,747.2L87.2,748.3L83.9,748.4M106.9,751.9L110.6,750.9L113.4,748.1L115.2,748.7" fill="none" stroke="#000" stroke-width="1.3" stroke-linejoin="miter"/>
<path d="M100,745h2v1h-2zM103,752h3v1h-3zM91,751h1v1h-1zM91,748h1v1h-1zM95,753h2v2h-2z" fill="#024365"/>
<path d="M115.1,744.7L113.2,746.5L110.3,748.3L108.8,749.7M139.2,754.5L137.4,757.0L136.3,759.0L135.0,760.2M128.8,753.0L129.6,755.4L130.8,758.2L132.6,760.8M136.9,752.9L136.2,755.7L137.8,758.7M146.8,748.9L149.7,747.4L152.5,746.1L155.2,746.9L159.0,747.2L161.8,745.6M127.8,752.7L129.8,751.9L131.2,750.9L131.2,747.1L132.1,744.1M124.8,747.0L126.2,748.2L126.1,749.9L124.8,751.4L122.0,753.1L120.2,752.8M137.3,753.7L134.2,754.1L131.8,752.7L131.0,750.9L131.0,747.6M148.2,751.4L147.8,754.5L148.6,757.1L148.6,758.8L147.1,760.0M124.8,746.7L126.6,746.8L128.8,749.0L130.3,748.6L132.6,750.6M122.9,742.3L125.2,742.9L128.5,741.1L130.4,741.4M145.0,750.3L145.6,747.1L146.4,743.8L146.8,740.1L147.3,738.0M122.4,742.9L120.9,744.0L118.8,745.7L115.7,747.8L116.1,751.4L116.6,754.2M137.3,753.9L137.4,756.3L136.9,757.8M115.9,752.3L113.5,753.6L112.0,753.0M139.1,750.5L139.2,754.0L138.8,757.7L139.7,759.9L141.0,760.9M124.3,746.3L121.9,746.1L119.6,747.6L119.3,749.5L118.2,751.0M133.4,747.1L134.3,745.7L136.8,744.9L138.4,745.4L141.2,746.2M127.3,743.0L128.5,745.9L130.2,748.9M115.6,752.9L115.1,755.7L115.9,757.8L117.0,759.8M129.2,750.8L132.5,750.1L135.6,749.0M128.3,741.8L128.6,744.3L131.2,745.9L133.1,745.8M114.9,752.0L117.3,752.4L119.7,754.6L123.1,754.4M124.4,749.5L122.8,749.1L121.7,750.3L118.5,750.1L116.1,749.4" fill="none" stroke="#000" stroke-width="1.3" stroke-linejoin="miter"/>
<path d="M125,750h3v2h-3zM116,746h3v1h-3zM142,746h2v2h-2zM142,748h3v1h-3zM141,750h2v1h-2zM116,756h2v2h-2zM120,754h3v1h-3zM127,751h2v1h-2zM123,747h1v1h-1z" fill="#024365"/>
<path d="M178.1,745.4L176.8,746.5L173.9,748.5L172.8,751.7L170.8,752.3L167.6,752.5M167.8,736.1L165.2,736.4L163.3,739.4M175.7,736.8L176.8,739.3L178.1,742.0L179.9,742.8L183.0,742.0M165.2,745.2L162.9,748.3L160.7,751.2L159.8,753.7M158.0,738.9L157.3,737.0L158.5,734.4M170.9,736.3L167.6,737.4L165.9,736.0L164.0,736.7L163.1,738.1L164.4,740.8M178.2,742.5L181.2,743.8L183.2,742.7L184.0,741.1L186.7,740.7L189.1,737.9M165.4,736.8L162.8,739.7L163.6,742.5M162.5,743.9L163.8,745.2L164.8,749.0L164.4,751.2L163.3,754.4L164.4,756.4M162.5,734.0L162.0,735.8L161.2,737.0L159.4,737.9L159.1,741.7L161.0,745.0M159.5,742.2L162.4,743.1L164.7,743.5L166.5,745.6L167.2,747.3L168.6,748.2M174.2,745.0L174.9,742.5L173.9,740.6L174.6,738.4M160.2,743.4L160.8,747.3L164.2,748.8L165.6,750.3L167.3,751.8L169.2,752.2M158.4,738.2L157.3,735.3L156.0,732.8L154.9,730.5L155.6,726.7M163.2,740.0L164.3,738.4L167.1,737.8L168.4,736.4M171.3,752.0L173.1,751.7L176.1,752.3L178.1,751.2L178.1,748.0M169.2,752.3L170.4,748.9L172.8,747.7L173.1,744.0L173.1,740.3M162.7,735.6L161.2,738.9L160.8,742.7L159.2,743.4L157.7,744.8M163.4,733.6L163.1,736.4L166.3,738.6M161.6,735.5L159.6,732.3L159.4,730.1M177.3,747.1L177.0,750.8L176.2,752.1L176.9,754.8L177.5,756.9L179.8,758.0M159.4,746.0L161.1,745.0L164.8,745.8L167.4,745.7L169.5,747.5L172.9,749.3M175.8,739.5L178.5,740.6L178.7,742.9L179.7,745.6L180.9,747.0L181.6,749.3M178.2,747.8L177.1,745.4L176.5,744.0L172.9,742.5M172.1,751.5L174.9,750.2L178.3,749.6L179.0,748.0L178.3,746.6M162.0,731.8L160.9,729.0L162.6,726.8L162.9,724.1M169.6,734.6L172.5,734.7L175.5,733.2L177.7,733.3L180.9,733.1M161.6,740.7L162.0,742.9L162.9,746.4L165.1,747.0L167.8,745.9L169.8,747.4" fill="none" stroke="#000" stroke-width="1.3" stroke-linejoin="miter"/>
<path d="M164,738h2v1h-2zM157,731h1v2h-1zM178,742h1v2h-1zM166,742h1v2h-1zM162,755h2v1h-2zM165,740h2v2h-2zM172,738h1v2h-1zM172,747h2v1h-2zM176,746h3v1h-3z" fill="#024365"/>
<path d="M205.7,743.3L205.1,745.7L204.1,748.0L204.2,751.4L202.3,753.4M216.1,746.9L218.2,743.9L222.0,743.0L223.6,741.1L225.1,741.1M213.0,749.7L210.9,750.8L208.1,749.2M205.4,741.9L205.4,745.8L205.5,748.4L204.6,752.3M203.8,745.4L203.8,743.7L203.1,741.9L203.1,739.7L201.7,736.1M219.1,745.3L220.7,745.0L222.5,744.9L225.5,745.2M224.0,749.9L226.8,749.5L228.6,751.2L230.1,751.0L230.9,749.3M226.4,746.4L225.0,748.6L225.5,750.4L224.9,752.1M190.8,735.5L193.8,737.3L195.2,736.7L197.5,737.1L199.4,738.5L201.6,738.3M216.5,740.4L216.2,744.1L215.2,747.9M208.9,747.9L212.5,747.8L215.9,746.2L218.1,746.8M198.4,741.6L199.5,745.1L200.7,748.4L202.2,749.6L204.1,750.2L204.5,752.4M213.9,741.4L210.9,743.8L208.8,745.0M210.3,740.3L210.1,742.2L209.2,743.6M230.0,753.0L232.3,752.2L233.9,753.4L233.6,756.2M197.6,743.3L200.2,743.2L201.6,745.6L203.5,747.6L206.9,747.6M230.8,751.1L230.7,753.6L232.2,754.8L232.4,757.1M215.4,740.8L217.5,739.9L218.5,738.4L220.4,737.3M226.7,755.2L227.6,752.1L229.0,750.2L230.3,747.3M224.6,750.5L225.9,747.4L224.8,744.2L224.2,741.2M197.6,744.5L200.3,745.8L200.6,747.5L199.4,750.4L195.9,751.5L192.6,751.8M225.1,758.3L226.9,759.9L226.6,762.4L227.3,765.1L226.7,768.7M218.8,744.8L216.7,747.8L214.2,748.7L212.2,752.1L209.4,753.0L208.5,754.6M194.4,740.4L193.1,737.5L191.9,735.0L191.9,733.5L192.7,731.8M219.6,750.1L221.7,749.8L223.5,750.1L227.3,750.1M191.4,739.3L192.0,737.0L191.3,735.5L187.3,735.4L185.8,734.5L183.9,731.0M211.5,742.8L211.8,739.0L213.0,736.2L216.0,735.5L217.5,734.0M226.7,754.0L227.6,757.1L229.6,759.5L232.1,761.3M204.5,737.2L206.6,737.4L207.7,736.0L211.4,735.2L213.0,737.1M197.6,734.6L194.0,734.7L191.9,734.8M218.0,753.8L219.2,752.7L222.8,751.8L223.4,750.4L225.3,750.0" fill="none" stroke="#000" stroke-width="1.3" stroke-linejoin="miter"/>
<path d="M221,746h3v1h-3zM214,745h3v2h-3zM234,755h3v2h-3zM218,753h1v2h-1zM221,748h2v2h-2zM211,749h2v1h-2zM214,748h2v1h-2zM222,743h1v1h-1zM216,742h2v2h-2zM209,738h2v1h-2z" fill="#024365"/>
<path d="M799.5,581.3L797.8,582.5L795.5,584.3L794.5,587.1M796.7,568.2L795.9,570.8L794.8,574.2L791.8,575.0L789.8,573.1L787.2,571.2M796.0,650.8L796.4,647.4L794.9,646.0M796.8,580.5L796.1,584.2L794.5,587.5L792.4,590.7M801.6,576.3L800.0,577.2L797.6,579.5M802.9,627.9L803.2,625.0L804.5,623.8L807.6,624.2L809.4,623.4M794.3,638.7L795.9,639.1L797.7,638.5M802.6,642.0L802.4,644.2L799.2,645.4L797.6,647.4M795.0,605.8L795.1,602.7L796.1,599.9M801.1,650.8L802.0,654.6L802.4,656.9L802.7,659.2L805.1,661.0L808.7,661.0M799.1,591.6L798.2,593.7L797.4,595.6L798.1,599.3L797.9,602.3M799.1,574.1L798.0,576.8L797.0,578.3L793.8,580.4L792.1,579.8M796.4,569.9L792.7,568.9L791.0,567.5L789.9,564.3M795.4,619.8L793.2,622.3L789.8,623.9L787.1,623.4L785.3,620.4L786.3,618.8M790.1,643.4L791.0,646.8L789.1,649.0L789.3,652.3L791.1,654.7L792.2,658.5M802.5,615.2L800.9,618.2L799.7,621.6L801.2,623.9L800.6,626.0L801.1,627.5M798.7,581.0L795.6,580.7L792.8,582.5L790.1,581.1L786.9,582.7M801.7,592.5L803.3,589.2L805.9,586.4L806.2,584.1L808.2,581.7M793.6,623.9L792.1,624.8L788.8,625.7L787.0,623.9L787.8,620.3L786.1,618.7M797.9,589.9L797.4,591.4L798.4,594.0L797.4,596.2L797.2,598.6M798.3,641.3L799.6,638.6L802.0,637.4L802.3,634.3L803.5,631.7M798.7,612.8L798.8,614.3L799.2,617.4L798.0,619.5L796.0,619.5M799.6,569.1L799.1,566.4L799.0,564.4M799.3,646.5L801.4,646.4L802.9,648.7L803.5,651.0L802.5,653.4M792.2,644.8L791.8,641.7L790.6,638.3M793.7,646.3L794.8,647.3L795.7,649.2L797.2,650.9M793.9,586.6L791.8,589.8L788.2,591.3L787.3,593.4M801.6,584.0L801.2,585.5L798.3,587.8L796.7,588.0L794.4,586.9L792.6,586.3M802.7,624.5L801.7,622.5L800.6,620.4M799.5,603.9L797.2,606.1L795.9,608.0L792.9,608.3L790.7,610.4M796.8,614.2L800.5,615.0L801.8,613.8M797.5,611.5L799.2,611.7L800.6,615.1L799.4,616.7L800.3,619.8L802.5,620.3M794.4,587.0L792.9,588.7L791.0,592.1L790.3,594.5L790.2,596.4M797.1,646.9L793.8,645.4L792.6,644.2L791.8,642.8L791.7,640.3L792.0,637.1M794.2,622.9L791.2,623.6L788.9,624.3M796.0,596.1L796.0,597.7L794.1,598.8L790.6,599.4L789.1,602.5L786.3,605.1M799.8,585.1L797.1,585.7L795.9,587.1L793.1,586.9L790.3,586.5M800.6,582.9L799.9,579.1L801.6,576.5L803.9,576.4L807.3,575.0L809.5,573.7M798.7,595.6L797.9,597.2L796.9,601.0L795.2,603.1L793.2,605.9M799.7,574.7L800.3,576.7L801.5,578.6L802.7,579.7L805.6,579.9L806.8,578.3M799.0,586.3L797.3,586.9L793.7,587.0L791.7,588.7L788.7,588.9M794.2,594.9L793.8,597.9L794.6,599.8L794.0,601.5L791.7,604.7L788.8,605.2M801.4,568.1L798.7,570.8L797.2,571.1L794.5,571.1L790.9,571.4L788.3,572.1M801.9,601.6L799.2,603.6L798.1,604.8M798.3,612.3L797.2,615.7L796.6,617.1M795.1,639.7L797.1,639.8L800.7,638.8M796.1,630.3L799.0,632.5L801.3,632.2L802.8,632.0L804.1,633.8L806.1,634.8M791.0,640.7L792.9,641.9L795.3,642.0L798.1,641.7L799.7,640.8L800.9,637.9M802.6,621.8L800.6,623.0L797.9,624.8L794.7,625.6L794.3,627.2M803.0,637.4L802.9,634.1L804.7,631.7L806.7,628.4L808.3,625.1L806.9,622.9M797.6,565.3L798.7,561.6L800.1,558.4L801.3,555.5L802.9,553.9L803.5,550.4M789.1,646.2L789.1,642.7L791.2,641.3L793.3,640.8L795.8,642.8L797.5,642.6M798.6,564.6L795.1,564.7L792.1,563.3L789.9,563.3M796.0,580.7L793.7,580.7L792.1,582.3L789.2,583.6L788.3,585.3L788.9,587.6M792.7,621.9L794.5,620.5L797.2,620.1M794.9,641.1L797.5,640.4L800.8,641.5" fill="none" stroke="#000" stroke-width="1.3" stroke-linejoin="miter"/>
<path d="M802,615h2v1h-2zM797,570h1v1h-1zM790,575h2v1h-2zM790,593h3v1h-3zM801,628h3v1h-3zM799,571h2v2h-2zM794,626h3v2h-3zM801,568h2v1h-2zM790,648h2v1h-2zM801,642h3v1h-3zM802,572h3v1h-3zM796,572h3v1h-3zM795,595h2v1h-2zM794,580h2v1h-2zM799,610h2v1h-2zM795,634h2v2h-2zM799,569h2v1h-2zM794,619h1v1h-1zM796,572h2v1h-2z" fill="#024365"/>
<polyline points="0.0,705.2 5.9,705.2 8.9,703.6 15.8,702.2 19.7,698.3 24.6,699.3 29.6,700.3 30.5,704.2 27.6,707.2 32.5,707.2 45.3,705.2 48.3,704.8 47.3,711.1 45.7,716.0 51.6,718.0 52.8,725.9 59.1,724.9 63.1,727.9 70.0,726.9 72.9,730.8 75.9,737.7 77.8,740.7 84.7,741.7 86.7,744.6 92.6,743.0 96.6,746.6 102.5,748.6 106.4,752.5 105.4,755.4 114.3,755.4 115.3,749.5 120.2,748.6 122.2,744.6 128.1,741.7 130.0,746.6 134.0,742.6 137.9,745.6 145.8,748.6 146.8,752.5 151.7,750.5 160.0,748.6 157.9,750.5 161.8,740.7 157.9,738.7 165.8,730.8 173.6,734.8 179.6,740.7 175.6,746.6 179.6,746.6 195.3,748.6 205.2,754.5 209.1,758.4 209.1,774.2 240.6,774.2 240.6,758.4 239.7,754.5 232.8,751.5 230.8,745.6 225.9,741.7 219.0,742.6 215.0,738.7 207.1,737.7 201.2,734.8 199.3,729.8 203.2,724.9 205.2,719.0 211.1,715.1 215.0,709.1 220.0,707.2 221.9,701.3 223.9,694.4 226.8,689.4 225.9,683.5 227.8,675.6 228.8,668.7 224.9,671.7 219.0,670.7 215.0,673.7 209.1,670.7 204.2,675.6 202.2,681.6 197.3,685.5 198.3,690.4 194.3,694.4 188.4,694.4 188.4,690.4 185.5,687.5 179.6,689.4 176.6,685.5 177.6,681.6 182.5,679.6 187.4,677.6 192.4,672.7 194.3,668.7 201.2,666.8 209.1,663.8 213.1,656.9 217.0,652.0 217.4,650.9 220.4,653.9 219.4,655.9 227.3,652.9 233.2,650.0 239.1,648.0 241.1,646.0 249.0,646.0 253.9,648.0 258.8,651.9 262.8,652.9 266.7,651.9 272.6,653.9 278.5,654.9 284.4,651.9 286.4,649.0 290.3,648.0 296.3,649.0 298.2,652.9 302.2,654.9 306.1,652.9 308.1,645.0 307.1,637.1 309.1,629.3 311.0,624.3 314.0,622.4 319.9,624.3 320.9,631.2 321.9,639.1 322.9,646.0 326.8,649.0 329.8,653.9 333.7,657.8 335.7,660.8 340.0,659.8 330.0,663.1 341.8,659.1 355.6,655.2 369.4,652.2 385.2,649.3 400.9,647.3 412.8,646.9 424.6,648.3 436.4,650.2 448.2,653.2 460.0,657.1 471.9,663.1 479.8,668.0 485.7,672.9 490.0,674.9 480.0,669.3 487.9,675.2 495.8,681.1 501.7,686.0 505.6,690.9 506.6,698.8 507.6,704.7 510.5,711.6 513.5,711.6 522.4,711.0 529.3,709.7 537.1,706.7 540.1,704.7 543.1,700.8 548.0,700.4 547.0,704.7 546.0,708.7 548.0,710.6 552.9,706.7 558.8,702.8 564.7,697.8 570.6,693.9 578.5,690.0 582.5,691.9 587.4,691.9 587.4,687.0 582.5,686.0 578.5,684.0 584.4,681.1 587.4,677.1 592.3,674.2 598.2,672.8 604.1,674.8 610.0,674.2 610.0,673.6 613.9,675.6 619.9,681.5 627.7,685.5 635.6,689.4 639.6,694.3 641.5,701.2 647.4,707.1 654.3,712.1 657.3,717.0 657.3,724.9 662.2,728.8 668.1,733.7 673.1,739.7 676.0,744.6 680.0,748.5 681.9,754.4 680.9,760.3 684.9,762.3 685.9,757.4 692.8,757.4 700.6,758.4 701.6,764.3 705.6,768.2 707.5,776.1 710.5,781.0 713.4,786.0 712.5,790.9 713.4,799.8 714.4,807.6" fill="none" stroke="#000" stroke-width="1.1" stroke-linejoin="round"/>
<polyline points="248.5,678.6 252.5,683.5 254.4,691.4 252.5,701.3 248.5,709.1 242.6,717.0 236.7,722.9 228.8,728.8 223.9,731.8" fill="none" stroke="#000" stroke-width="1.2" stroke-linejoin="round"/>
<polyline points="258.8,660.8 266.7,662.8" fill="none" stroke="#000" stroke-width="1.2" stroke-linejoin="round"/>
<polyline points="272.6,663.7 284.4,665.7" fill="none" stroke="#000" stroke-width="1.2" stroke-linejoin="round"/>
<polyline points="229.3,664.3 234.2,662.8" fill="none" stroke="#000" stroke-width="1.2" stroke-linejoin="round"/>
<polyline points="242.1,664.3 245.0,663.5" fill="none" stroke="#000" stroke-width="1.2" stroke-linejoin="round"/>
<polyline points="296.3,658.8 306.1,659.8" fill="none" stroke="#000" stroke-width="1.2" stroke-linejoin="round"/>
<polyline points="312.0,663.7 317.9,662.8 325.8,661.8 335.7,660.8" fill="none" stroke="#000" stroke-width="1.2" stroke-linejoin="round"/>
<polyline points="228.8,661.9 234.7,663.8" fill="none" stroke="#000" stroke-width="1.2" stroke-linejoin="round"/>
<polyline points="256.4,660.9 268.2,661.9 276.1,663.8" fill="none" stroke="#000" stroke-width="1.2" stroke-linejoin="round"/>
<polyline points="282.0,664.2 286.0,665.0" fill="none" stroke="#000" stroke-width="1.2" stroke-linejoin="round"/>
<polyline points="505.6,690.9 506.6,698.8 507.6,704.7 510.5,711.6" fill="none" stroke="#000" stroke-width="1.2" stroke-linejoin="round"/>
<polyline points="525.3,712.2 529.3,715.6 533.2,719.5 539.1,718.1 547.0,714.6 552.9,711.6 558.8,707.7 560.8,704.7" fill="none" stroke="#000" stroke-width="1.2" stroke-linejoin="round"/>
<polyline points="561.8,702.8 569.7,698.8" fill="none" stroke="#000" stroke-width="1.2" stroke-linejoin="round"/>
<polyline points="341.8,659.1 355.6,655.2 369.4,652.2 385.2,649.3 400.9,647.3 412.8,646.9 424.6,648.3 436.4,650.2 448.2,653.2 460.0,657.1 471.9,663.1" fill="none" stroke="#000" stroke-width="1.2" stroke-linejoin="round"/>
<polygon points="42.4,681.6 47.3,680.6 51.6,687.5 48.3,689.4 44.3,686.5" fill="#2a425e" stroke="none" stroke-width="1"/>
<polygon points="59.1,685.5 63.1,690.4 67.0,697.3 68.0,702.2 74.9,704.2 80.8,704.2 84.7,708.2 82.8,710.7 77.8,709.1 69.0,707.2 63.1,705.2 61.1,699.3 57.1,692.4 58.1,687.5" fill="#2a425e" stroke="none" stroke-width="1"/>
<polygon points="126.1,654.0 132.0,652.0 136.4,655.9 136.0,661.9 132.0,666.8 126.1,667.8 121.8,664.8 122.6,658.9" fill="#2a425e" stroke="none" stroke-width="1"/>
<polygon points="144.8,696.3 150.7,695.3 153.7,700.3 151.7,704.2 154.7,708.2 149.8,711.1 144.8,713.1 140.3,711.1 140.9,707.2 146.8,704.2 144.8,700.3" fill="#2a425e" stroke="none" stroke-width="1"/>
<polygon points="369.8,259.8 376.4,258.2 384.7,264.8 391.4,269.8 396.4,275.8 393.0,277.1 384.7,271.5 376.4,266.5 369.8,262.5" fill="#2a425e" stroke="none" stroke-width="1"/>
<polygon points="439.6,376.2 442.9,369.6 447.9,364.6 451.2,363.6 449.6,369.6 444.6,374.6 441.3,377.9" fill="#2a425e" stroke="none" stroke-width="1"/>
<polygon points="424.6,413.5 427.0,419.5 426.3,424.5 429.6,429.4 431.3,434.4 428.0,434.4 425.6,427.8 423.6,421.1" fill="#2a425e" stroke="none" stroke-width="1"/>
<polygon points="604.8,308.1 608.2,301.4 613.2,296.4 612.5,286.4 615.8,285.8 617.2,291.4 619.8,286.4 622.5,288.1 621.5,293.1 627.1,293.8 623.1,299.7 618.2,304.7 613.2,308.1 609.8,313.0 605.8,313.7" fill="#2a425e" stroke="none" stroke-width="1"/>
<polygon points="527.7,501.5 532.7,506.5 531.1,518.2 534.4,526.5 532.7,536.4 527.7,533.1 526.1,523.1 528.7,513.2" fill="#2a425e" stroke="none" stroke-width="1"/>
<polygon points="540.0,603.0 545.0,606.3 546.7,612.9 555.0,611.3 556.6,604.6 558.3,611.3 563.3,611.3 561.6,616.3 551.6,617.9 543.3,619.6 540.0,616.3" fill="#2a425e" stroke="none" stroke-width="1"/>
<polygon points="299.2,59.6 304.0,57.2 308.0,55.6 312.8,58.0 314.4,62.0 315.2,67.6 318.4,70.8 322.4,71.6 323.2,74.0 319.2,74.8 316.0,72.4 312.8,68.4 311.2,62.8 308.0,59.6 305.6,61.2 304.0,63.6 300.0,62.8" fill="#2a425e" stroke="none" stroke-width="1"/>
<polygon points="789,738 793,736 795,742 793,750 789,748" fill="#2a425e" stroke="none" stroke-width="1"/>
<polyline points="398,190 396.4,239.9 394.7,273.1 398,323 403,356.3 404.7,376.2 406.3,396.2 416.3,422.8 426.3,446.1 433,460 439.6,471.6 433,483.2 423,506.5 409.7,529.8 396.4,546.4 379.7,563 353.1,583 329.9,596.3 313.2,603 306.6,612.9 304.9,626.2" fill="none" stroke="#7e6a12" stroke-width="1" stroke-linejoin="round"/>
<polyline points="400,137 399,160 398,190" fill="none" stroke="#7e6a12" stroke-width="1" stroke-linejoin="round"/>
<polyline points="409.7,371.2 393,386.2 369.8,396.2 343.2,402.8 319.9,422.8 296.6,449.4 290,460 270,471.6" fill="none" stroke="#7e6a12" stroke-width="1" stroke-linejoin="round"/>
<polyline points="6.6,460.6 49.9,464.9 93.1,473.3 146.3,479.9 186.2,478.2 232.8,474.9 270,471.6" fill="none" stroke="#7e6a12" stroke-width="1" stroke-linejoin="round"/>
<polyline points="256,474.9 246,499.9 236.1,519.8 219.5,543.1 214.5,573 206.2,599.6 196.2,626.2 189.6,652.8 186.2,659.5" fill="none" stroke="#7e6a12" stroke-width="1" stroke-linejoin="round"/>
<polyline points="166.3,226.6 169.6,273.1 172.9,323 182.9,362.9 181.2,396.2 163,432.8 159.6,460 154.6,466.6 146.3,479.9 136.3,506.5 131.4,539.8 128,573 126.4,606.3 128,639.5 133,656.2 136.3,669.5 146.3,679.4 159.6,686.1" fill="none" stroke="#7e6a12" stroke-width="1" stroke-linejoin="round"/>
<polyline points="6.6,661.1 33.3,652.8 66.5,646.2 99.8,641.2 126.4,639.5 146.3,641.2 166.3,649.5 186.2,656.2 206.2,652.8 219.5,646.2 239.4,642.9 270,642.9 290,636.2 306.6,626.2 326.5,624.6 346.5,629.6 366.4,636.2 383.1,632.9 403,621.2 426.3,617.9 449.6,619.6 476.2,614.6 502.8,616.3 522.7,619.6 540,626.2 573.3,636.2 606.5,641.2 649.7,644.5 679.7,652.8 712.9,661.1 739.5,661.1 772.8,656.2 786.1,654.5" fill="none" stroke="#7e6a12" stroke-width="1" stroke-linejoin="round"/>
<polyline points="631.5,440 629.8,473.3 633.1,506.5 646.4,539.8 653.1,573 663,606.3 676.3,629.6 696.3,649.5 709.6,672.8 717.4,685.5 724.3,703.2 736.1,720.9 744,734.7 746.9,752.5 749.9,768.2 753.8,784 754.8,806" fill="none" stroke="#7e6a12" stroke-width="1" stroke-linejoin="round"/>
<polyline points="583.2,356.3 599.9,382.9 613.2,406.2 625,425 631.5,440" fill="none" stroke="#7e6a12" stroke-width="1" stroke-linejoin="round"/>
<polyline points="583.2,346.3 606.5,326.3 633.1,313 666.4,293.1 686.3,283.1 726.2,259.8 759.5,239.9 806,221.6" fill="none" stroke="#7e6a12" stroke-width="1" stroke-linejoin="round"/>
<polyline points="583.2,353 623.1,362.9 673,367.9 712.9,372.2 752.8,372.9 772.8,362.9 802.7,349.6" fill="none" stroke="#7e6a12" stroke-width="1" stroke-linejoin="round"/>
<polyline points="409.7,371.2 429.6,362.9 462.9,362.9 502.8,356.3 540,349.6 560,348 583.2,346.3" fill="none" stroke="#7e6a12" stroke-width="1" stroke-linejoin="round"/>
<polyline points="583.2,346.3 573.3,323 560,299.7 546.7,283.1 540,273.1 520,250 502.8,239.9" fill="none" stroke="#7e6a12" stroke-width="1" stroke-linejoin="round"/>
<polyline points="502.8,239.9 486.2,289.8 456.2,323 429.6,349.6 409.7,371.2" fill="none" stroke="#7e6a12" stroke-width="1" stroke-linejoin="round"/>
<polyline points="400,130 430,160 449.6,190 469.5,213.3 486.2,233.2 502.8,239.9" fill="none" stroke="#7e6a12" stroke-width="1" stroke-linejoin="round"/>
<polyline points="163,223.3 167,230 191.6,212.7 216.2,197.9 233.4,185.6 258.1,175.8 282.7,172.1 307.3,165.9 330,161 365,145 400,129.3 425.9,134.5 451.7,139.6 485.3,138.3 516.4,137.1 534.5,150 555.2,160.3 581,161.6 600,157.7 620.7,147.4 638.8,150 659.5,142.2 677.6,129.3 703.4,116.4 729.3,103.4 755.2,87.9 781,80.2 806.9,72.4" fill="none" stroke="#7e6a12" stroke-width="1" stroke-linejoin="round"/>
<polyline points="600,124 607.8,137 612.9,150 600,157 570,190 540,215 502.8,239.9" fill="none" stroke="#7e6a12" stroke-width="1" stroke-linejoin="round"/>
<polyline points="659.5,142.2 672.4,155.2 682.8,175.9 695.7,188.8 716.4,190.1 739.7,183.6 765.5,178.4 796.6,173.3 806,175.9" fill="none" stroke="#7e6a12" stroke-width="1" stroke-linejoin="round"/>
<polyline points="472.4,7.8 469.8,25.9 462,44 446.5,56.9 433.6,64.7 428.4,85.3 431,103.4 436.2,113.8 431,129.3 415.5,134.5 400,137" fill="none" stroke="#7e6a12" stroke-width="1" stroke-linejoin="round"/>
<polyline points="400,130 340,100 300,75 280,60" fill="none" stroke="#7e6a12" stroke-width="1" stroke-linejoin="round"/>
<polyline points="201.4,60 199,89.6 189.1,121.6 183,141.3 169.4,170.8 157.1,197.9 150.9,220.1 162,230 166.9,247.2 169.4,260" fill="none" stroke="#7e6a12" stroke-width="1" stroke-linejoin="round"/>
<polyline points="187,6 195,30 201.4,60" fill="none" stroke="#7e6a12" stroke-width="1" stroke-linejoin="round"/>
<polyline points="6.6,256.5 83.1,243.2 146.3,223.3 163,223.3" fill="none" stroke="#7e6a12" stroke-width="1" stroke-linejoin="round"/>
<polyline points="583.2,350 560,372 540,395 520,420 500,445 470,462 439.6,471.6" fill="none" stroke="#7e6a12" stroke-width="1" stroke-linejoin="round"/>
<polyline points="636,436 646,440 680,460 726,468 773,476.6 803,486.6" fill="none" stroke="#7e6a12" stroke-width="1" stroke-linejoin="round"/>
<polyline points="806,480 796,520 790,570 782,610 786,654 795,700 800,740" fill="none" stroke="#7e6a12" stroke-width="1" stroke-linejoin="round"/>
<polyline points="716.4,190.1 740,215 770,245 806,265" fill="none" stroke="#7e6a12" stroke-width="1" stroke-linejoin="round"/>
<polyline points="240,6 232,14 228.6,22.9 227.7,35.2 226,45.8 221.5,56.3 212.7,65.1 202.2,69.5" fill="none" stroke="#7e6a12" stroke-width="1" stroke-linejoin="round"/>
<polyline points="240,6 246,12 250,21 253,32 262,45 276,58 288.5,59.9 299,54.6 306,52.8 316.6,58 330,68.7 345,80" fill="none" stroke="#7e6a12" stroke-width="1" stroke-linejoin="round"/>
<polyline points="6.6,560 20,600 18,640 10,661" fill="none" stroke="#7e6a12" stroke-width="1" stroke-linejoin="round"/>
<polyline points="620.7,147.4 615,110 600,70 590,30 585,6" fill="none" stroke="#7e6a12" stroke-width="1" stroke-linejoin="round"/>
<polyline points="0.0,105.4 155.2,105.4 156.4,113.3 161.3,115.8 160.1,123.2 157.6,128.1 152.7,133.0 147.8,137.9 142.9,142.9 137.9,149.0 187.2,149.0" fill="none" stroke="#000" stroke-width="1" stroke-linejoin="round"/>
<polyline points="201.2,5.8 204.2,8.0 204.0,9.6 201.6,10.7 200.4,13.1 201.2,14.5 204.0,15.0 206.7,14.9 206.8,16.8 204.8,19.7 204.8,20.8 208.6,21.9 209.8,23.3 206.6,25.2 205.1,25.2 205.6,27.5 206.7,30.5 205.0,31.3 202.2,30.9 199.7,31.9 202.3,34.0 204.4,34.9 203.3,37.1 203.7,39.5 206.2,38.4 208.3,38.5 208.4,40.7 208.2,42.7 208.9,44.2 211.2,44.8 212.2,46.1 212.0,47.9 212.0,50.0 213.8,50.5 216.0,50.5 216.7,52.1 216.7,54.8 218.6,54.8 221.0,54.3 222.4,55.8 220.3,58.5 220.9,58.4 221.2,61.1 219.3,62.5 218.6,59.8 219.6,58.8 218.0,57.4 218.7,55.1 220.9,55.6 223.1,57.6 225.5,58.0 225.7,55.0 225.4,52.2 226.2,51.4 229.7,52.1 230.4,52.6 229.7,51.5 232.6,52.3 233.3,53.8 229.9,55.5 228.7,56.6 230.2,58.8 232.3,60.3 231.3,61.7 229.9,63.9 229.7,65.4 232.4,66.7 233.1,68.4 230.1,69.6 229.2,70.4 230.4,73.1 229.8,74.6 228.2,75.3 225.9,76.0 226.1,78.0 227.7,79.4 228.0,81.2 226.1,82.3 225.0,83.5 225.9,85.8 225.9,86.8 224.1,88.7 224.4,90.2 226.6,91.8 226.9,93.7 223.9,94.4 222.4,95.2 223.6,98.0 222.9,99.8 220.4,98.2 220.0,96.3 217.4,97.9 214.5,97.6 215.4,95.3 215.9,91.9 213.8,91.6 212.6,95.0 212.3,95.5 209.6,95.5 206.8,97.2 209.0,98.8 212.3,99.9 210.5,102.0 207.4,101.8 207.7,104.0" fill="none" stroke="#000" stroke-width="1" stroke-linejoin="round"/>
<polyline points="207.4,104.7 206.3,107.1 205.0,108.5 203.0,106.4 204.1,104.6 202.2,103.8 199.5,103.3 198.5,102.0 199.7,99.8 200.5,100.9 201.7,99.1 203.0,96.9 204.8,99.2 202.6,100.4 201.7,101.8 202.6,103.7 202.4,105.5 200.5,106.2 198.9,107.1 198.7,108.9 199.2,111.1 198.4,112.4 196.1,113.1 196.2,115.4 197.5,116.4 200.4,116.2 201.5,119.2 198.8,119.5 196.3,118.4 194.7,118.9 194.8,121.9 195.7,123.5 193.5,124.4 190.3,124.8 190.5,126.9 193.5,127.2 194.6,128.4 193.3,131.9 193.9,133.6 197.1,133.0 198.3,135.1 194.8,136.0 193.4,137.4 195.4,139.6 195.1,142.1 192.4,141.3 189.7,140.3 189.5,142.8 190.8,145.3 188.4,145.9 185.7,146.5 185.8,148.3 187.8,150.0 189.0,150.9 187.9,153.4 187.9,155.3 189.2,155.9 189.7,157.3 189.1,158.9 186.4,158.5 185.6,160.0 185.4,162.1 183.8,162.8 181.9,162.8 180.2,163.4 180.0,165.5 180.1,167.6 178.9,168.8 175.9,168.4 175.0,169.3 175.2,172.2 174.4,173.8 172.2,173.4 169.5,174.0 170.2,176.0 172.2,178.5 170.6,179.2 169.8,181.0 170.4,182.9 173.2,181.9 176.2,181.6 176.0,184.3 173.0,186.7 173.5,187.4 174.7,189.6 173.3,191.1 171.3,189.1 168.6,187.0 168.9,190.5 169.5,193.0 168.1,193.9 165.5,193.9 163.1,193.3 163.5,196.5 163.2,198.8 161.1,198.9 158.4,196.9 157.2,198.2 156.5,200.7 155.6,201.3 153.0,201.6 152.4,203.1 154.2,204.8 154.4,203.9 156.4,205.6 158.0,205.4 159.4,204.0 160.0,205.7 158.1,206.7 156.7,207.9 156.8,209.5 157.3,212.1 155.6,212.6 152.9,212.4 152.5,214.7 155.5,215.9 155.1,217.6 153.4,219.7 154.4,222.1 157.1,220.6 159.2,219.9 159.1,222.7 156.7,222.5 156.4,224.2 157.3,226.9 157.0,229.7 154.8,229.8 152.0,227.1 150.3,227.2 149.6,229.8 150.0,232.6 149.0,233.9 146.2,233.3 143.3,233.0 143.2,235.3 145.4,238.5 143.8,238.5 140.6,241.2 142.9,242.3 145.7,241.3 147.7,241.3 147.0,244.1 144.2,243.7 143.9,245.7 144.6,248.6 142.5,249.0 140.1,247.7 138.8,248.8 138.1,250.9 137.0,252.4 135.3,252.3 133.7,253.1 132.7,254.4 133.1,256.4 132.9,258.3 131.8,259.6" fill="none" stroke="#000" stroke-width="1" stroke-linejoin="round"/>
<polyline points="143.4,239.8 144.6,241.0 144.2,242.9 143.8,244.8 145.4,245.8 147.2,246.9 145.9,248.8 143.8,248.0 142.1,248.1 141.2,250.2 140.3,252.2 138.4,252.9 137.4,249.8 136.3,248.4 133.7,250.0 131.5,250.7 132.4,248.8 129.8,250.5 130.1,252.1 133.2,253.1 135.1,254.4 133.0,256.4 130.4,255.1 129.4,256.6 129.8,260.3 128.5,261.3 125.7,259.7 122.6,260.2 124.5,263.1 128.2,263.4 125.8,266.0 124.8,268.1 128.7,268.3 129.5,270.7 126.3,271.3 124.4,272.1 125.2,274.3 126.7,276.8 125.2,277.9 122.7,278.4 121.2,279.9 122.7,281.9 123.9,283.7 123.2,285.2 121.2,286.5 120.8,288.1 122.0,290.1 120.7,291.5 118.9,291.8 116.9,291.7 115.8,292.9 115.3,294.9 115.2,296.7 113.5,297.4 110.9,297.4 109.9,298.7 111.0,301.7 109.5,303.1 106.8,301.2 105.3,301.9 105.1,305.0 104.4,306.2 101.8,305.7 99.3,305.8 99.8,308.2 101.1,311.1 100.5,311.8 98.5,312.5 97.2,315.0 99.9,315.4 103.1,315.6 101.4,318.2 98.5,316.7 98.2,319.3 98.4,322.7 96.7,323.1 94.3,322.1 91.0,322.6 92.0,325.3 94.5,326.0 96.8,326.8 96.6,328.6 95.1,330.8 95.0,330.4 94.7,333.5 93.2,334.1 90.8,332.4 89.2,332.6 88.9,335.1 89.3,335.9 87.7,337.8 87.9,339.4 89.9,340.7 90.1,342.3 88.8,344.0 88.6,344.5 88.0,346.8 86.6,347.5 84.2,346.4 82.4,346.4 81.5,348.1 81.5,350.7 80.3,350.5 78.3,352.6 81.3,353.6 83.1,354.8 82.2,356.7 79.7,356.7 79.3,358.2 79.3,361.7 77.2,361.2 73.9,359.5 73.4,363.3 76.2,363.5 78.8,363.8 78.6,365.8 76.6,368.9 77.5,369.8 80.1,370.9 80.2,373.1 78.6,373.8 74.7,373.0 74.2,374.6 76.4,375.3 77.8,375.3 77.9,378.5 78.9,380.2 81.4,378.7 83.4,378.3 84.6,379.5 84.3,381.8 82.5,382.7 83.8,385.0 84.0,386.8 82.2,387.8 80.4,389.2 81.9,390.9 84.1,391.2 84.6,392.8 84.8,394.7 85.2,396.1 86.1,397.1 85.7,399.0 83.7,399.3 81.2,399.1 81.3,401.4 81.8,403.4 80.6,403.8 78.7,406.1 79.8,407.4 82.7,408.1 84.3,409.3 81.7,411.8 80.6,412.3 82.3,414.5 83.0,417.0 79.0,416.1 77.2,416.7 77.7,419.4 80.8,419.5 81.0,421.3 79.0,424.8 81.7,424.8 85.2,425.1 84.3,427.9 80.2,428.2 80.8,430.1 82.5,432.4 82.9,434.2 79.5,434.7 78.1,436.9 81.0,437.7 83.2,438.4 82.9,440.3 81.4,442.9 82.0,444.4 85.1,444.6 86.1,446.8 83.2,447.6 81.9,448.7 82.9,451.0 82.8,452.4 82.1,453.6 82.6,455.3 84.7,455.5 86.2,456.3 86.5,458.2 86.7,460.2" fill="none" stroke="#000" stroke-width="1" stroke-linejoin="round"/>
<polyline points="81.8,439.7 81.1,442.7 83.7,442.3 86.6,441.7 85.9,444.6 85.5,447.3 87.7,446.8 88.5,449.2 88.0,450.9 84.8,450.5 82.1,450.4 82.6,453.3 85.9,452.2 85.1,455.8 85.2,458.2 87.6,457.8 90.2,457.1 92.0,457.4 92.0,460.4 88.5,460.7 89.4,462.9 91.1,465.6 88.1,465.9 87.9,468.7 90.2,468.1 92.4,467.5 93.7,468.4 94.3,470.6 95.1,472.3 97.3,471.8 99.3,471.5 99.4,473.4 97.7,473.8 97.0,475.4 96.6,477.3 95.9,478.8 93.7,478.9 91.9,478.9 91.3,480.9 90.8,483.2 88.9,483.1 86.3,481.8 85.5,483.6 85.1,486.2 83.9,487.4 81.0,486.3 81.3,489.2 83.8,488.7 86.6,487.7 86.8,490.0 86.1,493.4 88.4,493.1 91.4,494.8 89.2,496.0 86.0,494.1 84.0,494.0 84.5,497.7 84.2,500.1 81.1,498.3 78.0,498.3 80.8,500.8 83.3,501.3 82.6,503.4 80.6,506.2 82.3,506.2 82.5,509.3 80.2,508.4 77.9,507.5 76.5,508.1 76.0,510.7 75.1,512.5 72.3,511.4 71.3,513.1 73.0,515.1 73.5,516.8 72.3,518.2 70.9,519.4 69.8,520.2 69.5,522.2 68.9,523.8 67.3,524.5 65.3,524.7 63.8,526.5 66.6,527.0 68.1,527.8 67.4,530.7 68.0,531.9 69.5,532.9 68.3,534.2 65.5,532.1 63.9,532.6 63.4,535.2 62.8,537.5 60.2,536.0 57.3,535.8 57.0,537.6 58.6,540.8 58.3,542.5 54.7,541.9 53.3,545.1 56.0,545.3 59.2,544.3 60.1,545.7 58.4,549.7 60.5,549.6 61.5,552.3 59.9,552.5 57.0,549.9 55.5,550.4 55.4,554.3 54.0,555.0 51.8,554.0 48.8,553.0 49.2,556.2 52.5,556.7 52.2,558.5 50.8,560.7 52.1,562.0 53.9,563.5 52.5,564.9 50.2,564.8 49.1,566.0 49.2,568.3 47.7,569.1 45.5,569.2 44.5,570.8 45.8,572.3 47.6,573.1 47.9,574.8 46.8,577.3 47.9,578.5 51.0,578.9 50.6,581.5 48.1,581.8 46.1,582.5 47.9,585.4 47.9,587.3 46.5,587.9 44.2,590.0 45.1,591.4 48.1,590.8 50.6,590.8 49.8,593.5 48.0,591.4 46.9,594.9 45.6,596.8" fill="none" stroke="#000" stroke-width="1" stroke-linejoin="round"/>
<polyline points="206.4,104.8 287.6,104.8" fill="none" stroke="#000" stroke-width="1" stroke-linejoin="round"/>
<polyline points="144.8,238.5 300,238.5 493,238.5 588,238.5 678,238.5" fill="none" stroke="#000" stroke-width="1" stroke-linejoin="round"/>
<polyline points="0,415.1 78.2,415.1" fill="none" stroke="#000" stroke-width="1" stroke-linejoin="round"/>
<polyline points="44.9,594.3 186.2,594.3 181.2,606.3 177.9,619.6 182.9,632.9 189.6,642.9 191.2,656.2 196.2,666.1 199.5,669.5" fill="none" stroke="#000" stroke-width="1" stroke-linejoin="round"/>
<polyline points="300,238.5 303.3,243.2 307.2,249.2 303.3,289.8 298.3,339.7 293.3,389.5 286.6,440 283.3,473.3 280,506.5 281.6,573 283.3,612.9 285,639.5 285,655" fill="none" stroke="#000" stroke-width="1" stroke-linejoin="round"/>
<polyline points="492.8,238.5 502.8,299.7 512.8,349.6 522.7,416.1 526.1,432.8 531.1,442.7 536,460 540,470 536,486.6 534.4,506.5 532.7,526.5 536,543.1 531.1,563 532.7,579.7 537.7,594.6 541,606 546.7,619.6" fill="none" stroke="#000" stroke-width="1" stroke-linejoin="round"/>
<polyline points="537.7,594.6 344.8,594.6 341.5,604.6 349.8,612.9 358.1,621.2 359.8,629.6 354.8,639.5 357.1,646.2 353.1,655" fill="none" stroke="#000" stroke-width="1" stroke-linejoin="round"/>
<polyline points="546.7,619.6 739.5,632.2" fill="none" stroke="#000" stroke-width="1" stroke-linejoin="round"/>
<polyline points="739.1,632.1 743.4,632.2 745.2,640.0 746.9,648.6 752.1,650.3 758.1,650.3 759.0,641.7 760.3,633.1 758.1,624.5 757.2,615.9 760.7,612.4 765.9,609.8 771.0,611.6 777.9,614.1 785.7,616.7 793.4,618.4 800.3,620.2" fill="none" stroke="#000" stroke-width="1" stroke-linejoin="round"/>
<polyline points="588.2,238.5 589.9,218.3 598.2,214.9 608.2,211.6 611.5,200.0 618.2,193.3 626.5,190.0" fill="none" stroke="#000" stroke-width="1" stroke-linejoin="round"/>
<polyline points="786.2,95.2 783.6,100.9 781.0,108.6 782.3,117.7 775.8,117.7 768.1,124.1 761.6,134.5 757.7,139.1 750.0,138.4 742.2,135.8 731.9,140.9 724.1,151.3 717.7,152.6 715.1,146.1 709.9,144.8 703.4,150.0 698.3,155.2 694.4,153.9 691.8,162.9 687.9,169.4 680.2,168.1 672.4,172.0 662.1,178.4 651.7,186.2 641.4,186.2 628.4,188.8 618.1,192.7 611.6,200.4 609.1,210.0" fill="none" stroke="#000" stroke-width="1" stroke-linejoin="round"/>
<polyline points="678.0,238.5 673.0,244.9 666.4,253.2 660.4,261.5 663.0,268.2 673.0,274.8 681.3,281.5 686.3,284.8 694.6,284.1 699.6,293.1 706.3,306.4 712.9,318.0 721.2,329.7 732.9,339.7 742.9,351.3 752.8,362.9 761.2,371.2 766.1,379.6 769.5,389.5 779.4,401.2 789.4,407.8 797.7,414.5 801.1,426.1 804.4,439.4 805.4,460.0" fill="none" stroke="#000" stroke-width="1" stroke-linejoin="round"/>
<polyline points="805.4,460 806,475" fill="none" stroke="#000" stroke-width="1" stroke-linejoin="round"/>
<polyline points="678.0,238.5 689.7,233.2 706.3,228.2 721.2,223.3 731.2,220.6 739.5,219.9 772.8,221.6 805.4,223.3" fill="none" stroke="#000" stroke-width="1" stroke-linejoin="round"/>
<polyline points="401,90.9 415.5,90.5 477.6,94.4 529.3,93.6 600,97 636,97 765.5,95.7 786,94.4 806.9,97.8" fill="none" stroke="#000" stroke-width="1" stroke-linejoin="round"/>
<polyline points="636.2,97.0 646.5,89.2 662.1,84.0 676.3,82.2 680.2,75.0 693.1,71.1 698.3,60.8 706.0,55.6 707.3,47.8 724.1,40.1 739.6,33.6 750.0,25.9 759.0,18.1 762.9,12.9 755.2,10.3 748.7,6.5" fill="none" stroke="#000" stroke-width="1" stroke-linejoin="round"/>
<polyline points="762.9,12.9 765.5,20.7 770.7,28.4 778.4,33.6 783.6,40.1 791.4,41.4 801.7,37.5 806.9,32.3" fill="none" stroke="#000" stroke-width="1" stroke-linejoin="round"/>
<polyline points="287.6,104.8 290,98 294,92 300,91" fill="none" stroke="#000" stroke-width="1" stroke-linejoin="round"/>
<polyline points="300,91 401,90.9" fill="none" stroke="#000" stroke-width="1" stroke-linejoin="round"/>
<polyline points="305.0,6.0 308.4,10.3 309.3,16.4 304.1,18.1 299.0,19.0 293.8,20.7 290.3,23.3" fill="none" stroke="#000" stroke-width="1" stroke-linejoin="round"/>
<defs>
<g id="cp" fill="none"><circle r="4.2"/><path d="M-2.5,0H2.5M0,-2.5V2.5"/></g>
<g id="cm" fill="none"><circle r="4.2"/><path d="M-2.5,0H2.5"/></g>
<g id="pp" fill="none"><path d="M-4.5,0H4.5M0,-4.5V4.5"/></g>
<g id="mm" fill="none"><path d="M-3.5,0H3.5"/></g>
</defs>
<g stroke-width="1.0">
<use href="#cm" x="270.7" y="18.0" stroke="#e8500c"/>
<use href="#cp" x="271.4" y="18.3" stroke="#ea6a0c"/>
<use href="#cp" x="271.0" y="18.7" stroke="#ea6a0c"/>
<use href="#pp" x="270.7" y="12.4" stroke="#ea6a0c"/>
<use href="#cm" x="272.8" y="18.4" stroke="#e8500c"/>
<use href="#cp" x="273.0" y="18.7" stroke="#ea6a0c"/>
<use href="#cp" x="266.2" y="13.1" stroke="#ea6a0c"/>
<use href="#pp" x="270.6" y="21.7" stroke="#ea6a0c"/>
<use href="#cp" x="272.9" y="17.2" stroke="#e8500c"/>
<use href="#pp" x="273.1" y="15.9" stroke="#ea6a0c"/>
<use href="#cp" x="273.7" y="14.7" stroke="#ea6a0c"/>
<use href="#cp" x="268.9" y="11.5" stroke="#e8500c"/>
<use href="#cp" x="266.8" y="14.4" stroke="#ea6a0c"/>
<use href="#cm" x="270.9" y="23.5" stroke="#e8500c"/>
<use href="#cp" x="227.0" y="42.9" stroke="#ffa200"/>
<use href="#cp" x="250.5" y="45.7" stroke="#ffa200"/>
<use href="#cp" x="226.7" y="46.6" stroke="#ffae10"/>
<use href="#cp" x="239.8" y="38.9" stroke="#ffae10"/>
<use href="#cm" x="245.4" y="38.3" stroke="#ffa200"/>
<use href="#cp" x="235.5" y="50.8" stroke="#ffa200"/>
<use href="#mm" x="247.9" y="50.5" stroke="#ffa200"/>
<use href="#cp" x="241.0" y="41.7" stroke="#ffa200"/>
<use href="#cp" x="245.5" y="36.3" stroke="#ffa200"/>
<use href="#mm" x="240.5" y="34.4" stroke="#ffa200"/>
<use href="#mm" x="234.9" y="39.0" stroke="#ffa200"/>
<use href="#cp" x="235.3" y="42.9" stroke="#ffa200"/>
<use href="#cp" x="246.7" y="34.5" stroke="#ffa200"/>
<use href="#cp" x="244.6" y="49.7" stroke="#ffae10"/>
<use href="#mm" x="250.2" y="48.5" stroke="#ffa200"/>
<use href="#cp" x="231.4" y="44.6" stroke="#ffa200"/>
<use href="#cp" x="246.8" y="42.2" stroke="#ffae10"/>
<use href="#cp" x="229.7" y="44.9" stroke="#ffa200"/>
<use href="#cp" x="293.2" y="40.5" stroke="#ffa200"/>
<use href="#cm" x="250.6" y="28.6" stroke="#ffa200"/>
<use href="#cm" x="256.4" y="31.8" stroke="#f58a10"/>
<use href="#cp" x="279.6" y="24.2" stroke="#ffa200"/>
<use href="#cp" x="274.0" y="31.6" stroke="#ffa200"/>
<use href="#cm" x="295.7" y="49.3" stroke="#ffa200"/>
<use href="#mm" x="293.8" y="39.0" stroke="#ffae10"/>
<use href="#cm" x="255.6" y="28.2" stroke="#f58a10"/>
<use href="#cp" x="296.7" y="28.1" stroke="#f58a10"/>
<use href="#cp" x="260.1" y="25.2" stroke="#ffae10"/>
<use href="#cm" x="275.2" y="27.7" stroke="#f58a10"/>
<use href="#cp" x="259.9" y="34.2" stroke="#ffa200"/>
<use href="#cm" x="265.9" y="24.0" stroke="#f58a10"/>
<use href="#cp" x="292.5" y="48.5" stroke="#f58a10"/>
<use href="#pp" x="292.1" y="32.5" stroke="#ffae10"/>
<use href="#cp" x="292.7" y="40.8" stroke="#ffa200"/>
<use href="#mm" x="292.0" y="28.9" stroke="#ffa200"/>
<use href="#cp" x="284.3" y="29.0" stroke="#f58a10"/>
<use href="#pp" x="255.6" y="23.1" stroke="#f58a10"/>
<use href="#cp" x="298.7" y="42.9" stroke="#ffae10"/>
<use href="#cp" x="288.3" y="37.7" stroke="#ffa200"/>
<use href="#cm" x="285.4" y="27.1" stroke="#ffae10"/>
<use href="#cp" x="256.4" y="34.9" stroke="#ffae10"/>
<use href="#cp" x="267.2" y="30.6" stroke="#ffa200"/>
<use href="#cp" x="293.4" y="31.3" stroke="#ffa200"/>
<use href="#cp" x="288.9" y="36.1" stroke="#ffa200"/>
<use href="#cp" x="290.6" y="25.3" stroke="#ffa200"/>
<use href="#cm" x="295.7" y="37.2" stroke="#ffae10"/>
<use href="#pp" x="288.4" y="34.5" stroke="#f58a10"/>
<use href="#cp" x="292.2" y="38.6" stroke="#f58a10"/>
<use href="#mm" x="265.6" y="32.5" stroke="#ffa200"/>
<use href="#pp" x="265.3" y="24.2" stroke="#f58a10"/>
<use href="#pp" x="279.0" y="26.3" stroke="#ffa200"/>
<use href="#cm" x="290.6" y="38.7" stroke="#ffa200"/>
<use href="#pp" x="285.0" y="21.6" stroke="#ffae10"/>
<use href="#cm" x="296.9" y="28.6" stroke="#ffae10"/>
<use href="#cm" x="256.2" y="34.3" stroke="#f58a10"/>
<use href="#cp" x="255.3" y="33.8" stroke="#f58a10"/>
<use href="#mm" x="266.2" y="31.6" stroke="#ffae10"/>
<use href="#pp" x="262.5" y="26.2" stroke="#ffae10"/>
<use href="#pp" x="291.8" y="40.5" stroke="#ffa200"/>
<use href="#cp" x="293.8" y="37.7" stroke="#ffa200"/>
<use href="#cp" x="293.2" y="40.4" stroke="#ffa200"/>
<use href="#cp" x="296.4" y="40.9" stroke="#ffa200"/>
<use href="#cp" x="265.8" y="30.2" stroke="#ffa200"/>
<use href="#cp" x="289.5" y="26.0" stroke="#ffa200"/>
<use href="#cm" x="254.2" y="32.7" stroke="#ffae10"/>
<use href="#cp" x="278.8" y="31.6" stroke="#ffa200"/>
<use href="#cm" x="292.2" y="46.9" stroke="#ffa200"/>
<use href="#cp" x="274.3" y="25.9" stroke="#ffa200"/>
<use href="#cp" x="258.5" y="24.8" stroke="#ffa200"/>
<use href="#cm" x="279.3" y="24.0" stroke="#ffa200"/>
<use href="#cm" x="288.8" y="30.6" stroke="#ffae10"/>
<use href="#cp" x="280.4" y="19.8" stroke="#ffa200"/>
<use href="#cp" x="259.0" y="35.0" stroke="#ffae10"/>
<use href="#cp" x="296.8" y="40.1" stroke="#ffa200"/>
<use href="#cm" x="292.7" y="49.4" stroke="#ffa200"/>
<use href="#cp" x="290.8" y="28.2" stroke="#ffa200"/>
<use href="#cp" x="291.3" y="33.3" stroke="#f58a10"/>
<use href="#cm" x="253.3" y="31.1" stroke="#ffa200"/>
<use href="#cm" x="283.7" y="31.0" stroke="#ffa200"/>
<use href="#cp" x="262.8" y="33.2" stroke="#ffa200"/>
<use href="#cp" x="266.2" y="40.7" stroke="#f58a10"/>
<use href="#cp" x="274.0" y="53.5" stroke="#f58a10"/>
<use href="#cm" x="271.1" y="37.9" stroke="#ffa200"/>
<use href="#cp" x="270.1" y="46.5" stroke="#f58a10"/>
<use href="#cp" x="274.0" y="43.1" stroke="#f58a10"/>
<use href="#cp" x="275.3" y="48.3" stroke="#ffa200"/>
<use href="#cm" x="273.7" y="50.2" stroke="#f58a10"/>
<use href="#cm" x="261.5" y="41.8" stroke="#ffa200"/>
<use href="#cp" x="273.6" y="52.5" stroke="#ffa200"/>
<use href="#cm" x="278.5" y="39.4" stroke="#ffa200"/>
<use href="#cm" x="272.3" y="58.2" stroke="#f58a10"/>
<use href="#mm" x="274.1" y="36.5" stroke="#f58a10"/>
<use href="#cp" x="270.7" y="38.8" stroke="#ffa200"/>
<use href="#cm" x="272.4" y="36.7" stroke="#f58a10"/>
<use href="#cp" x="275.6" y="45.5" stroke="#f58a10"/>
<use href="#cp" x="268.6" y="53.1" stroke="#ffa200"/>
<use href="#cp" x="277.1" y="39.7" stroke="#ffa200"/>
<use href="#cp" x="278.2" y="50.0" stroke="#ffa200"/>
<use href="#mm" x="266.5" y="51.5" stroke="#f58a10"/>
<use href="#cp" x="274.8" y="53.3" stroke="#f58a10"/>
<use href="#cp" x="271.8" y="50.7" stroke="#ffa200"/>
<use href="#cp" x="266.7" y="53.4" stroke="#f58a10"/>
<use href="#cm" x="274.7" y="43.3" stroke="#ffa200"/>
<use href="#cp" x="265.1" y="42.5" stroke="#ffa200"/>
<use href="#mm" x="278.6" y="45.3" stroke="#f58a10"/>
<use href="#cm" x="270.5" y="53.2" stroke="#f58a10"/>
<use href="#mm" x="268.7" y="50.7" stroke="#ffa200"/>
<use href="#cp" x="266.9" y="53.5" stroke="#f58a10"/>
<use href="#cm" x="275.2" y="48.8" stroke="#ffa200"/>
<use href="#cm" x="273.2" y="46.3" stroke="#ffa200"/>
<use href="#cp" x="259.4" y="60.7" stroke="#ffa200"/>
<use href="#cp" x="262.0" y="61.6" stroke="#ffa200"/>
<use href="#cp" x="240.0" y="59.0" stroke="#ffa200"/>
<use href="#cp" x="246.2" y="58.1" stroke="#ffa200"/>
<use href="#cp" x="273.5" y="57.2" stroke="#ffa200"/>
<use href="#mm" x="343.4" y="140.4" stroke="#f58a10"/>
<use href="#mm" x="370.0" y="128.4" stroke="#ffe400"/>
<use href="#cp" x="344.6" y="139.6" stroke="#ea6a0c"/>
<use href="#cp" x="367.3" y="123.5" stroke="#ea6a0c"/>
<use href="#mm" x="370.9" y="130.5" stroke="#ea6a0c"/>
<use href="#cm" x="352.2" y="137.3" stroke="#ffa200"/>
<use href="#mm" x="343.9" y="125.6" stroke="#f58a10"/>
<use href="#cm" x="339.1" y="124.5" stroke="#f58a10"/>
<use href="#cm" x="347.1" y="125.5" stroke="#ffa200"/>
<use href="#cm" x="373.0" y="124.7" stroke="#f58a10"/>
<use href="#cp" x="332.7" y="131.1" stroke="#ffa200"/>
<use href="#cp" x="333.0" y="122.6" stroke="#ffe400"/>
<use href="#mm" x="380.1" y="126.3" stroke="#f58a10"/>
<use href="#cm" x="343.1" y="129.8" stroke="#f58a10"/>
<use href="#mm" x="378.3" y="126.3" stroke="#ffa200"/>
<use href="#cm" x="355.7" y="140.3" stroke="#ffa200"/>
<use href="#cm" x="349.2" y="123.8" stroke="#ffe400"/>
<use href="#mm" x="331.4" y="128.2" stroke="#f58a10"/>
<use href="#pp" x="370.9" y="140.5" stroke="#ffe400"/>
<use href="#cp" x="354.1" y="129.7" stroke="#f58a10"/>
<use href="#cp" x="385.2" y="121.2" stroke="#ffe400"/>
<use href="#cm" x="336.1" y="126.3" stroke="#ea6a0c"/>
<use href="#cm" x="388.9" y="115.8" stroke="#ffe400"/>
<use href="#cp" x="375.5" y="119.2" stroke="#ffa200"/>
<use href="#cp" x="377.2" y="123.1" stroke="#ffa200"/>
<use href="#mm" x="346.8" y="131.1" stroke="#ffe400"/>
<use href="#pp" x="354.6" y="128.8" stroke="#ffa200"/>
<use href="#mm" x="383.7" y="125.7" stroke="#ea6a0c"/>
<use href="#mm" x="365.2" y="141.3" stroke="#ffa200"/>
<use href="#cm" x="380.9" y="128.1" stroke="#ea6a0c"/>
<use href="#cp" x="367.6" y="136.4" stroke="#ffa200"/>
<use href="#cp" x="381.5" y="125.6" stroke="#ffa200"/>
<use href="#mm" x="377.3" y="125.2" stroke="#f58a10"/>
<use href="#cp" x="375.4" y="136.8" stroke="#ffe400"/>
<use href="#pp" x="351.1" y="139.4" stroke="#ffa200"/>
<use href="#mm" x="375.3" y="118.2" stroke="#ffa200"/>
<use href="#cp" x="340.4" y="129.5" stroke="#f58a10"/>
<use href="#cp" x="340.6" y="134.8" stroke="#ffa200"/>
<use href="#pp" x="373.6" y="129.8" stroke="#ea6a0c"/>
<use href="#pp" x="335.3" y="133.8" stroke="#ffa200"/>
<use href="#cm" x="356.1" y="141.4" stroke="#ea6a0c"/>
<use href="#mm" x="343.1" y="127.6" stroke="#f58a10"/>
<use href="#cp" x="346.8" y="133.9" stroke="#ffe400"/>
<use href="#cp" x="349.2" y="127.4" stroke="#ffe400"/>
<use href="#mm" x="352.7" y="139.0" stroke="#ffe400"/>
<use href="#cp" x="371.6" y="140.1" stroke="#ea6a0c"/>
<use href="#mm" x="365.3" y="141.2" stroke="#ea6a0c"/>
<use href="#cp" x="335.0" y="124.9" stroke="#ea6a0c"/>
<use href="#pp" x="354.4" y="132.6" stroke="#ffa200"/>
<use href="#cm" x="370.9" y="119.2" stroke="#f58a10"/>
<use href="#cp" x="379.7" y="131.2" stroke="#f58a10"/>
<use href="#cp" x="330.6" y="125.8" stroke="#ea6a0c"/>
<use href="#pp" x="385.5" y="126.4" stroke="#ffa200"/>
<use href="#mm" x="366.7" y="136.2" stroke="#ffa200"/>
<use href="#mm" x="355.3" y="140.7" stroke="#f58a10"/>
<use href="#cm" x="372.2" y="131.8" stroke="#ffa200"/>
<use href="#cp" x="367.6" y="131.7" stroke="#ea6a0c"/>
<use href="#mm" x="344.8" y="123.9" stroke="#ffa200"/>
<use href="#pp" x="329.3" y="125.0" stroke="#ea6a0c"/>
<use href="#mm" x="376.4" y="137.9" stroke="#ffe400"/>
<use href="#cm" x="384.3" y="129.9" stroke="#f58a10"/>
<use href="#cp" x="357.6" y="134.7" stroke="#f58a10"/>
<use href="#mm" x="338.9" y="130.7" stroke="#ea6a0c"/>
<use href="#cm" x="344.7" y="140.9" stroke="#ea6a0c"/>
<use href="#mm" x="389.2" y="118.0" stroke="#f58a10"/>
<use href="#mm" x="385.1" y="118.9" stroke="#ea6a0c"/>
<use href="#cm" x="378.9" y="122.4" stroke="#ffa200"/>
<use href="#cp" x="374.3" y="124.5" stroke="#ffa200"/>
<use href="#pp" x="363.2" y="137.5" stroke="#f58a10"/>
<use href="#mm" x="349.8" y="136.7" stroke="#ffa200"/>
<use href="#mm" x="343.2" y="133.5" stroke="#ffa200"/>
<use href="#mm" x="364.4" y="132.6" stroke="#f58a10"/>
<use href="#cp" x="333.0" y="126.0" stroke="#ffa200"/>
<use href="#cp" x="350.0" y="123.8" stroke="#ea6a0c"/>
<use href="#cm" x="371.8" y="136.8" stroke="#ffa200"/>
<use href="#pp" x="363.4" y="127.6" stroke="#f58a10"/>
<use href="#pp" x="385.0" y="130.4" stroke="#ea6a0c"/>
<use href="#mm" x="350.2" y="126.6" stroke="#f58a10"/>
<use href="#mm" x="384.5" y="129.3" stroke="#f58a10"/>
<use href="#cm" x="351.8" y="140.2" stroke="#f58a10"/>
<use href="#pp" x="342.4" y="131.9" stroke="#ffe400"/>
<use href="#cm" x="348.0" y="123.4" stroke="#f58a10"/>
<use href="#pp" x="382.5" y="121.1" stroke="#ffa200"/>
<use href="#cp" x="356.7" y="125.5" stroke="#ffa200"/>
<use href="#cp" x="369.9" y="129.3" stroke="#f58a10"/>
<use href="#cp" x="343.1" y="125.5" stroke="#f58a10"/>
<use href="#mm" x="382.1" y="124.7" stroke="#ffa200"/>
<use href="#cp" x="366.8" y="126.2" stroke="#f58a10"/>
<use href="#cm" x="338.8" y="122.7" stroke="#ffa200"/>
<use href="#cm" x="378.3" y="125.5" stroke="#ffe400"/>
<use href="#mm" x="343.3" y="128.5" stroke="#ffa200"/>
<use href="#mm" x="382.6" y="119.9" stroke="#f58a10"/>
<use href="#cp" x="346.4" y="127.7" stroke="#ffe400"/>
<use href="#cp" x="336.0" y="132.3" stroke="#f58a10"/>
<use href="#cm" x="366.9" y="122.9" stroke="#ea6a0c"/>
<use href="#cp" x="382.0" y="134.7" stroke="#ea6a0c"/>
<use href="#mm" x="337.4" y="122.9" stroke="#ffe400"/>
<use href="#cp" x="338.3" y="133.3" stroke="#ea6a0c"/>
<use href="#cp" x="377.4" y="129.2" stroke="#f58a10"/>
<use href="#cp" x="357.6" y="142.3" stroke="#ffe400"/>
<use href="#cp" x="368.1" y="127.4" stroke="#ffa200"/>
<use href="#cp" x="385.3" y="116.2" stroke="#f58a10"/>
<use href="#cp" x="363.4" y="122.3" stroke="#ffa200"/>
<use href="#cp" x="341.7" y="135.9" stroke="#ffa200"/>
<use href="#cp" x="341.3" y="129.9" stroke="#ffa200"/>
<use href="#cm" x="353.9" y="135.8" stroke="#f58a10"/>
<use href="#cp" x="386.1" y="128.5" stroke="#f58a10"/>
<use href="#cm" x="360.4" y="132.7" stroke="#ea6a0c"/>
<use href="#mm" x="367.4" y="136.7" stroke="#ea6a0c"/>
<use href="#mm" x="356.9" y="138.5" stroke="#f58a10"/>
<use href="#mm" x="373.4" y="129.4" stroke="#ffa200"/>
<use href="#mm" x="329.8" y="126.6" stroke="#ffa200"/>
<use href="#cp" x="371.4" y="134.9" stroke="#ffa200"/>
<use href="#mm" x="359.5" y="138.7" stroke="#ffa200"/>
<use href="#cm" x="352.9" y="139.5" stroke="#ffa200"/>
<use href="#pp" x="364.0" y="131.7" stroke="#f58a10"/>
<use href="#mm" x="384.6" y="130.5" stroke="#f58a10"/>
<use href="#cp" x="376.6" y="120.9" stroke="#f58a10"/>
<use href="#mm" x="343.7" y="132.0" stroke="#ea6a0c"/>
<use href="#mm" x="374.8" y="128.5" stroke="#f58a10"/>
</g>
<polygon points="304.3,83.3 304.2,83.3 304.2,83.4 304.1,83.4 304.0,83.5 304.0,83.6 303.9,83.7 303.9,83.7 303.8,83.8 302.1,89.1 302.0,89.2 302.0,89.3 302.0,89.4 302.0,89.5 302.0,89.5 302.0,89.6 302.1,89.7 304.0,95.5 304.0,95.6 304.1,95.7 304.1,95.7 304.2,95.8 304.2,95.9 316.0,107.7 316.2,107.9 322.2,115.1 322.3,115.2 327.9,120.8 328.0,120.9 328.1,120.9 328.2,121.0 328.3,121.0 337.4,124.4 337.5,124.5 349.4,128.1 349.5,128.1 349.6,128.1 361.2,129.2 361.3,129.3 361.4,129.2 361.5,129.2 373.0,126.9 373.0,126.9 373.1,126.9 373.2,126.8 382.0,122.5 382.1,122.4 382.2,122.3 382.2,122.3 382.3,122.2 382.4,122.1 386.6,115.8 386.7,115.7 386.7,115.6 386.7,115.5 389.1,107.4 389.1,107.1 389.2,106.9 389.4,106.7 395.3,98.4 395.4,98.3 395.4,98.2 398.8,90.4 398.8,90.3 398.8,90.2 398.8,90.1 398.8,90.0 398.8,83.0 398.8,82.9 398.8,82.8 398.8,82.7 398.8,82.6 398.7,82.5 398.7,82.4 393.4,75.1 393.4,75.0 393.3,74.9 393.2,74.9 393.1,74.8 385.8,70.6 385.7,70.6 385.6,70.5 385.5,70.5 385.4,70.5 385.3,70.5 376.2,70.5 376.0,70.5 375.8,70.4 363.6,68.0 363.5,68.0 354.3,66.8 354.3,66.8 354.2,66.8 354.1,66.8 354.0,66.9 345.5,69.0 345.4,69.0 345.3,69.0 345.2,69.1 345.2,69.1 345.1,69.2 345.0,69.2 338.2,76.0 338.1,76.2 337.9,76.3 337.7,76.4 337.5,76.5 327.7,80.2 327.7,80.2 321.6,82.6 321.3,82.7 321.1,82.8 320.9,82.8 320.8,82.8 320.6,82.8 320.3,82.7 310.3,80.5 310.2,80.5 310.1,80.5 310.0,80.5 309.9,80.5 309.8,80.5 309.7,80.6 309.6,80.6 304.3,83.3" fill="#f8a800"/>
<polygon points="314.6,82.0 317.1,96.8 322.0,107.9 329.4,116.5 339.3,122.7 351.6,123.9 363.9,119.0 368.8,109.1 383.6,107.9 391.0,101.7 397.1,86.9 393.4,77.1 383.6,70.9 363.9,68.5 346.7,69.7 339.3,75.9 326.9,80.8 314.6,82.0" fill="#ffd400"/>
<polygon points="368.8,110.3 366.4,117.7 370.0,123.9 378.7,125.1 384.8,120.2 384.8,111.6 378.7,107.9 368.8,110.3" fill="#f09a00"/>
<g stroke-width="1.0">
<use href="#cp" x="361.4" y="110.1" stroke="#ffa200"/>
<use href="#pp" x="334.1" y="73.7" stroke="#ffa200"/>
<use href="#mm" x="340.3" y="115.4" stroke="#f58a10"/>
<use href="#mm" x="382.2" y="118.2" stroke="#f58a10"/>
<use href="#mm" x="369.6" y="113.0" stroke="#ffa200"/>
<use href="#mm" x="378.7" y="100.3" stroke="#f58a10"/>
<use href="#pp" x="379.8" y="110.4" stroke="#ffa200"/>
<use href="#mm" x="334.4" y="78.4" stroke="#f58a10"/>
<use href="#cp" x="348.3" y="107.2" stroke="#ffa200"/>
<use href="#mm" x="336.5" y="110.3" stroke="#f58a10"/>
<use href="#mm" x="377.6" y="103.8" stroke="#ffa200"/>
<use href="#mm" x="349.3" y="80.6" stroke="#f58a10"/>
<use href="#cp" x="326.7" y="103.5" stroke="#ffa200"/>
<use href="#pp" x="346.0" y="103.3" stroke="#ffc400"/>
<use href="#cp" x="353.0" y="126.6" stroke="#ffa200"/>
<use href="#pp" x="357.2" y="110.0" stroke="#ffc400"/>
<use href="#mm" x="322.3" y="103.0" stroke="#f58a10"/>
<use href="#cm" x="363.4" y="92.3" stroke="#ffa200"/>
<use href="#cm" x="387.8" y="110.2" stroke="#ffc400"/>
<use href="#mm" x="329.2" y="87.5" stroke="#ffc400"/>
<use href="#mm" x="318.4" y="98.5" stroke="#f58a10"/>
<use href="#cp" x="349.1" y="114.1" stroke="#ffc400"/>
<use href="#cp" x="364.6" y="108.4" stroke="#ffa200"/>
<use href="#pp" x="401.7" y="99.6" stroke="#ffa200"/>
<use href="#cp" x="367.6" y="88.4" stroke="#ffa200"/>
<use href="#pp" x="340.5" y="119.4" stroke="#ffa200"/>
<use href="#cp" x="363.9" y="116.7" stroke="#ffa200"/>
<use href="#pp" x="358.9" y="114.9" stroke="#f58a10"/>
<use href="#cm" x="319.4" y="98.0" stroke="#ffa200"/>
<use href="#cp" x="344.6" y="92.7" stroke="#ffc400"/>
<use href="#cp" x="324.3" y="96.4" stroke="#ffa200"/>
<use href="#cp" x="327.8" y="98.5" stroke="#ffc400"/>
<use href="#cp" x="327.5" y="115.0" stroke="#ffa200"/>
<use href="#pp" x="376.9" y="79.7" stroke="#ffa200"/>
<use href="#cp" x="340.5" y="121.3" stroke="#ffc400"/>
<use href="#mm" x="364.9" y="91.9" stroke="#ffc400"/>
<use href="#cm" x="375.2" y="108.5" stroke="#ffa200"/>
<use href="#cm" x="375.8" y="105.4" stroke="#ffc400"/>
<use href="#cp" x="330.9" y="100.2" stroke="#ffa200"/>
<use href="#cm" x="365.2" y="124.5" stroke="#f58a10"/>
<use href="#pp" x="309.5" y="96.8" stroke="#f58a10"/>
<use href="#mm" x="332.1" y="101.6" stroke="#ffc400"/>
<use href="#cm" x="350.3" y="96.9" stroke="#ffa200"/>
<use href="#cm" x="345.8" y="104.1" stroke="#ffc400"/>
<use href="#mm" x="380.6" y="105.9" stroke="#ffc400"/>
<use href="#cp" x="329.4" y="102.6" stroke="#ffa200"/>
<use href="#cm" x="375.7" y="102.0" stroke="#ffc400"/>
<use href="#cp" x="349.1" y="122.2" stroke="#ffa200"/>
<use href="#cm" x="334.2" y="109.1" stroke="#ffa200"/>
<use href="#mm" x="296.9" y="83.5" stroke="#ffa200"/>
<use href="#pp" x="326.8" y="85.0" stroke="#ffa200"/>
<use href="#pp" x="361.0" y="102.2" stroke="#ffa200"/>
<use href="#pp" x="365.6" y="101.9" stroke="#ffc400"/>
<use href="#cp" x="343.2" y="113.2" stroke="#f58a10"/>
<use href="#cp" x="335.7" y="92.7" stroke="#f58a10"/>
<use href="#mm" x="352.1" y="100.6" stroke="#ffa200"/>
<use href="#mm" x="384.7" y="100.4" stroke="#ffa200"/>
<use href="#mm" x="328.3" y="86.4" stroke="#ffc400"/>
<use href="#cp" x="350.9" y="107.0" stroke="#ffc400"/>
<use href="#cm" x="358.1" y="90.4" stroke="#f58a10"/>
<use href="#cp" x="399.3" y="93.7" stroke="#ffc400"/>
<use href="#mm" x="330.2" y="87.9" stroke="#ffc400"/>
<use href="#mm" x="337.4" y="109.0" stroke="#ffa200"/>
<use href="#cm" x="353.6" y="111.3" stroke="#f58a10"/>
<use href="#cp" x="388.9" y="87.8" stroke="#ffa200"/>
<use href="#cm" x="374.4" y="71.6" stroke="#ffa200"/>
<use href="#mm" x="370.1" y="85.4" stroke="#ffa200"/>
<use href="#pp" x="387.1" y="105.2" stroke="#ffa200"/>
<use href="#pp" x="370.8" y="103.8" stroke="#ffa200"/>
<use href="#cm" x="351.3" y="121.3" stroke="#ffc400"/>
<use href="#cp" x="372.7" y="127.0" stroke="#f58a10"/>
<use href="#mm" x="327.2" y="93.6" stroke="#f58a10"/>
<use href="#cp" x="316.9" y="80.3" stroke="#f58a10"/>
<use href="#cm" x="363.0" y="119.9" stroke="#f58a10"/>
<use href="#cp" x="312.6" y="104.1" stroke="#ffc400"/>
<use href="#mm" x="341.6" y="85.5" stroke="#ffa200"/>
<use href="#cp" x="322.3" y="114.8" stroke="#ffa200"/>
<use href="#cm" x="363.7" y="92.9" stroke="#ffa200"/>
<use href="#cp" x="377.4" y="74.4" stroke="#ffc400"/>
<use href="#mm" x="377.5" y="106.6" stroke="#ffc400"/>
<use href="#pp" x="358.8" y="123.7" stroke="#f58a10"/>
<use href="#mm" x="377.6" y="98.2" stroke="#f58a10"/>
<use href="#cp" x="307.3" y="92.3" stroke="#ffa200"/>
<use href="#cp" x="357.6" y="106.4" stroke="#ffa200"/>
<use href="#cp" x="338.4" y="103.5" stroke="#ffc400"/>
<use href="#mm" x="338.7" y="96.6" stroke="#ffa200"/>
<use href="#pp" x="349.2" y="110.7" stroke="#f58a10"/>
<use href="#cp" x="338.6" y="108.7" stroke="#f58a10"/>
<use href="#cp" x="348.2" y="105.6" stroke="#ffc400"/>
<use href="#pp" x="367.5" y="128.8" stroke="#ffa200"/>
<use href="#mm" x="344.9" y="103.1" stroke="#ffc400"/>
<use href="#cp" x="349.5" y="90.8" stroke="#f58a10"/>
<use href="#cp" x="314.2" y="94.5" stroke="#ffc400"/>
<use href="#cp" x="384.7" y="102.9" stroke="#ffa200"/>
<use href="#cm" x="369.8" y="100.7" stroke="#ffa200"/>
<use href="#cp" x="354.2" y="88.3" stroke="#ffa200"/>
<use href="#mm" x="314.2" y="116.0" stroke="#ffa200"/>
<use href="#mm" x="379.5" y="93.3" stroke="#ffa200"/>
<use href="#cp" x="351.8" y="132.9" stroke="#ffa200"/>
<use href="#cm" x="335.5" y="95.0" stroke="#ffc400"/>
<use href="#cm" x="331.1" y="99.5" stroke="#ffa200"/>
<use href="#mm" x="339.2" y="109.6" stroke="#ffc400"/>
<use href="#cp" x="335.1" y="93.4" stroke="#f58a10"/>
<use href="#mm" x="362.3" y="124.0" stroke="#ffc400"/>
<use href="#cp" x="345.1" y="91.5" stroke="#f58a10"/>
<use href="#pp" x="367.0" y="110.9" stroke="#ffa200"/>
<use href="#cm" x="382.7" y="101.1" stroke="#ffa200"/>
<use href="#mm" x="338.0" y="116.8" stroke="#f58a10"/>
<use href="#cp" x="368.0" y="101.2" stroke="#ffa200"/>
<use href="#pp" x="331.8" y="93.7" stroke="#f58a10"/>
<use href="#cp" x="306.7" y="100.1" stroke="#ffc400"/>
<use href="#cm" x="375.4" y="106.3" stroke="#f58a10"/>
<use href="#cp" x="357.5" y="82.0" stroke="#f58a10"/>
<use href="#mm" x="347.2" y="78.1" stroke="#ffa200"/>
<use href="#pp" x="360.4" y="120.2" stroke="#ffa200"/>
<use href="#cp" x="318.3" y="99.4" stroke="#ffa200"/>
<use href="#pp" x="372.8" y="80.4" stroke="#ffa200"/>
<use href="#cm" x="338.3" y="86.5" stroke="#f58a10"/>
<use href="#cp" x="329.0" y="113.2" stroke="#ffa200"/>
<use href="#cp" x="323.9" y="97.1" stroke="#ffa200"/>
<use href="#cp" x="302.1" y="80.5" stroke="#ffa200"/>
<use href="#mm" x="342.6" y="110.2" stroke="#ffc400"/>
<use href="#mm" x="363.1" y="115.6" stroke="#ffa200"/>
<use href="#cp" x="353.0" y="68.0" stroke="#f58a10"/>
<use href="#cp" x="374.8" y="131.4" stroke="#ffa200"/>
<use href="#cp" x="361.2" y="82.8" stroke="#ffa200"/>
<use href="#cm" x="354.9" y="103.8" stroke="#ffc400"/>
<use href="#cp" x="328.1" y="98.5" stroke="#ffa200"/>
<use href="#cp" x="363.4" y="92.6" stroke="#f58a10"/>
<use href="#mm" x="381.6" y="108.5" stroke="#ffa200"/>
<use href="#pp" x="359.2" y="95.9" stroke="#ffa200"/>
<use href="#cp" x="356.3" y="81.2" stroke="#f58a10"/>
<use href="#cm" x="358.2" y="91.3" stroke="#ffa200"/>
<use href="#pp" x="356.1" y="112.2" stroke="#f58a10"/>
<use href="#mm" x="347.1" y="97.5" stroke="#ffa200"/>
<use href="#mm" x="360.2" y="96.6" stroke="#f58a10"/>
<use href="#mm" x="329.8" y="97.4" stroke="#f58a10"/>
<use href="#mm" x="317.5" y="119.1" stroke="#ffc400"/>
<use href="#mm" x="387.2" y="70.0" stroke="#f58a10"/>
<use href="#cp" x="346.4" y="91.1" stroke="#f58a10"/>
<use href="#cp" x="341.9" y="84.2" stroke="#ffc400"/>
<use href="#cp" x="333.2" y="91.0" stroke="#ffa200"/>
<use href="#mm" x="391.9" y="99.3" stroke="#ffc400"/>
<use href="#cp" x="382.6" y="81.3" stroke="#f58a10"/>
<use href="#cm" x="370.4" y="105.1" stroke="#ffa200"/>
<use href="#cp" x="349.5" y="107.9" stroke="#ffa200"/>
<use href="#cp" x="328.9" y="119.2" stroke="#ffa200"/>
<use href="#cp" x="333.3" y="94.1" stroke="#ffa200"/>
<use href="#pp" x="339.3" y="85.2" stroke="#ffa200"/>
<use href="#cp" x="360.5" y="114.7" stroke="#ffa200"/>
<use href="#cm" x="336.1" y="89.0" stroke="#ffc400"/>
<use href="#cp" x="319.1" y="88.9" stroke="#ffc400"/>
<use href="#mm" x="349.8" y="98.0" stroke="#f58a10"/>
<use href="#mm" x="377.1" y="101.4" stroke="#ffc400"/>
<use href="#cp" x="336.0" y="107.8" stroke="#ffa200"/>
<use href="#cp" x="340.6" y="98.0" stroke="#ffa200"/>
<use href="#cp" x="353.2" y="97.4" stroke="#ffc400"/>
<use href="#cp" x="399.7" y="98.2" stroke="#f58a10"/>
<use href="#pp" x="327.8" y="102.7" stroke="#ffc400"/>
<use href="#cp" x="314.5" y="102.8" stroke="#f58a10"/>
<use href="#cp" x="328.2" y="81.1" stroke="#ffa200"/>
<use href="#mm" x="390.0" y="100.0" stroke="#f58a10"/>
<use href="#pp" x="317.8" y="97.8" stroke="#ffc400"/>
<use href="#cp" x="367.1" y="84.2" stroke="#ffa200"/>
<use href="#cp" x="336.8" y="75.2" stroke="#ffa200"/>
<use href="#pp" x="354.1" y="92.5" stroke="#f58a10"/>
<use href="#cp" x="404.0" y="89.1" stroke="#ffa200"/>
<use href="#mm" x="332.9" y="115.0" stroke="#ffa200"/>
<use href="#pp" x="353.9" y="93.4" stroke="#ffa200"/>
<use href="#mm" x="369.5" y="104.6" stroke="#ffa200"/>
<use href="#cm" x="329.7" y="99.2" stroke="#f58a10"/>
<use href="#cp" x="352.5" y="115.5" stroke="#f58a10"/>
<use href="#cp" x="338.5" y="95.1" stroke="#ffa200"/>
<use href="#pp" x="388.1" y="124.4" stroke="#f58a10"/>
<use href="#cp" x="372.7" y="115.2" stroke="#ffa200"/>
<use href="#cp" x="349.0" y="92.7" stroke="#f58a10"/>
<use href="#mm" x="379.3" y="122.8" stroke="#ffa200"/>
<use href="#cp" x="369.7" y="115.4" stroke="#ffa200"/>
<use href="#mm" x="368.9" y="108.1" stroke="#ffa200"/>
<use href="#cp" x="335.1" y="108.1" stroke="#ffc400"/>
<use href="#pp" x="315.0" y="95.0" stroke="#ffc400"/>
<use href="#mm" x="365.9" y="93.8" stroke="#f58a10"/>
<use href="#cp" x="324.1" y="92.7" stroke="#ffa200"/>
<use href="#mm" x="337.6" y="91.6" stroke="#ffc400"/>
<use href="#pp" x="354.0" y="106.2" stroke="#ffa200"/>
<use href="#pp" x="334.6" y="112.4" stroke="#ffa200"/>
<use href="#mm" x="381.5" y="107.0" stroke="#ffc400"/>
<use href="#cp" x="337.1" y="106.3" stroke="#ffc400"/>
<use href="#cp" x="376.0" y="102.9" stroke="#ffa200"/>
<use href="#mm" x="349.3" y="85.6" stroke="#ffa200"/>
<use href="#cp" x="386.8" y="100.9" stroke="#ffc400"/>
<use href="#cm" x="390.9" y="94.7" stroke="#f58a10"/>
<use href="#cm" x="325.2" y="87.3" stroke="#f58a10"/>
<use href="#mm" x="320.7" y="100.3" stroke="#ffc400"/>
<use href="#cp" x="362.8" y="102.2" stroke="#ffc400"/>
<use href="#mm" x="374.1" y="66.4" stroke="#ffc400"/>
<use href="#mm" x="334.6" y="107.1" stroke="#ffa200"/>
<use href="#cm" x="363.4" y="88.3" stroke="#f58a10"/>
<use href="#mm" x="371.3" y="76.0" stroke="#ffc400"/>
<use href="#cp" x="393.4" y="108.9" stroke="#ffa200"/>
<use href="#cm" x="328.7" y="86.6" stroke="#ffa200"/>
<use href="#cp" x="322.8" y="84.8" stroke="#ffa200"/>
<use href="#cm" x="365.3" y="84.7" stroke="#ffa200"/>
<use href="#mm" x="357.1" y="105.5" stroke="#f58a10"/>
<use href="#pp" x="331.6" y="111.3" stroke="#ffa200"/>
<use href="#cm" x="345.1" y="71.8" stroke="#ffa200"/>
<use href="#mm" x="344.4" y="85.6" stroke="#ffa200"/>
<use href="#pp" x="367.8" y="95.2" stroke="#ffc400"/>
<use href="#cp" x="303.6" y="93.5" stroke="#f58a10"/>
<use href="#cp" x="372.6" y="87.9" stroke="#ffa200"/>
<use href="#mm" x="367.8" y="95.8" stroke="#ffa200"/>
<use href="#cm" x="312.3" y="100.9" stroke="#ffa200"/>
<use href="#cp" x="385.8" y="115.2" stroke="#ffc400"/>
<use href="#cp" x="359.1" y="113.2" stroke="#ffc400"/>
<use href="#mm" x="318.4" y="118.9" stroke="#ffa200"/>
<use href="#pp" x="318.9" y="105.8" stroke="#ffc400"/>
<use href="#mm" x="353.9" y="91.6" stroke="#ffa200"/>
<use href="#cp" x="333.1" y="120.5" stroke="#ffc400"/>
<use href="#cp" x="336.2" y="112.4" stroke="#ffc400"/>
<use href="#cp" x="393.3" y="87.2" stroke="#ffa200"/>
<use href="#mm" x="352.8" y="110.4" stroke="#ffa200"/>
<use href="#pp" x="376.2" y="91.1" stroke="#ffa200"/>
<use href="#cp" x="357.1" y="124.9" stroke="#ffc400"/>
<use href="#mm" x="337.2" y="100.0" stroke="#ffc400"/>
<use href="#cm" x="322.0" y="92.1" stroke="#ffa200"/>
<use href="#cp" x="356.3" y="73.0" stroke="#f58a10"/>
<use href="#cp" x="355.9" y="89.7" stroke="#ffc400"/>
<use href="#mm" x="384.1" y="117.6" stroke="#f58a10"/>
<use href="#mm" x="399.6" y="79.9" stroke="#ffc400"/>
<use href="#mm" x="347.8" y="87.8" stroke="#ffc400"/>
<use href="#cp" x="370.8" y="109.0" stroke="#ffc400"/>
<use href="#mm" x="341.4" y="89.3" stroke="#f58a10"/>
<use href="#cp" x="351.2" y="105.9" stroke="#ffc400"/>
<use href="#cp" x="368.9" y="65.4" stroke="#ffa200"/>
<use href="#cp" x="379.6" y="125.1" stroke="#ffa200"/>
<use href="#mm" x="311.3" y="93.4" stroke="#ffc400"/>
<use href="#mm" x="342.5" y="114.8" stroke="#ffc400"/>
<use href="#pp" x="333.2" y="84.7" stroke="#ffa200"/>
<use href="#cp" x="342.7" y="87.3" stroke="#ffc400"/>
<use href="#cp" x="330.0" y="94.4" stroke="#ffa200"/>
<use href="#mm" x="363.9" y="97.8" stroke="#ffa200"/>
<use href="#mm" x="351.4" y="101.0" stroke="#ffa200"/>
<use href="#cm" x="360.4" y="113.5" stroke="#f58a10"/>
<use href="#cp" x="387.7" y="108.4" stroke="#f58a10"/>
<use href="#mm" x="385.2" y="103.6" stroke="#ffa200"/>
<use href="#cp" x="315.8" y="108.8" stroke="#ffc400"/>
<use href="#mm" x="307.0" y="77.8" stroke="#ffa200"/>
<use href="#cp" x="326.0" y="108.6" stroke="#ffa200"/>
<use href="#cm" x="361.0" y="96.1" stroke="#ffc400"/>
<use href="#cp" x="331.3" y="120.0" stroke="#f58a10"/>
<use href="#cp" x="390.3" y="72.8" stroke="#ffa200"/>
<use href="#cm" x="301.9" y="86.1" stroke="#f58a10"/>
<use href="#cp" x="378.9" y="109.4" stroke="#ffa200"/>
<use href="#cp" x="392.0" y="119.5" stroke="#ffa200"/>
<use href="#mm" x="340.1" y="83.2" stroke="#ffa200"/>
<use href="#cp" x="361.8" y="100.0" stroke="#ffa200"/>
<use href="#cm" x="365.3" y="86.7" stroke="#f58a10"/>
<use href="#mm" x="349.4" y="102.1" stroke="#f58a10"/>
<use href="#mm" x="349.3" y="119.9" stroke="#ffc400"/>
<use href="#mm" x="328.0" y="98.1" stroke="#f58a10"/>
<use href="#cp" x="372.5" y="90.4" stroke="#ffc400"/>
<use href="#cp" x="356.3" y="109.8" stroke="#ffa200"/>
<use href="#mm" x="364.4" y="114.0" stroke="#ffa200"/>
<use href="#mm" x="324.1" y="86.4" stroke="#ffc400"/>
<use href="#cm" x="357.0" y="104.7" stroke="#ffa200"/>
<use href="#cp" x="348.9" y="87.2" stroke="#ffc400"/>
<use href="#mm" x="340.6" y="94.7" stroke="#ffc400"/>
<use href="#mm" x="343.2" y="97.4" stroke="#ffc400"/>
<use href="#cp" x="334.5" y="104.9" stroke="#ffe400"/>
<use href="#mm" x="375.0" y="96.0" stroke="#ffc400"/>
<use href="#cm" x="327.7" y="115.5" stroke="#ffa200"/>
<use href="#cp" x="296.7" y="84.1" stroke="#ffe400"/>
<use href="#cp" x="402.2" y="91.4" stroke="#ffe400"/>
<use href="#cp" x="337.4" y="99.5" stroke="#ffc400"/>
<use href="#cp" x="365.0" y="108.8" stroke="#ffa200"/>
<use href="#cp" x="319.7" y="121.2" stroke="#ffa200"/>
<use href="#cp" x="364.8" y="93.1" stroke="#ffc400"/>
<use href="#mm" x="378.6" y="81.9" stroke="#ffe400"/>
<use href="#cp" x="324.0" y="111.5" stroke="#ffc400"/>
<use href="#cp" x="358.6" y="94.1" stroke="#ffa200"/>
<use href="#cm" x="344.5" y="90.0" stroke="#ffc400"/>
<use href="#mm" x="333.3" y="90.8" stroke="#ffe400"/>
<use href="#cp" x="352.3" y="80.1" stroke="#ffc400"/>
<use href="#cm" x="347.5" y="94.0" stroke="#ffc400"/>
<use href="#mm" x="361.5" y="105.8" stroke="#ffc400"/>
<use href="#mm" x="338.3" y="118.2" stroke="#ffe400"/>
<use href="#cp" x="343.2" y="96.3" stroke="#ffe400"/>
<use href="#mm" x="355.3" y="95.6" stroke="#ffe400"/>
<use href="#cp" x="331.2" y="93.2" stroke="#ffc400"/>
<use href="#cp" x="313.7" y="110.1" stroke="#ffc400"/>
<use href="#pp" x="358.1" y="118.9" stroke="#ffc400"/>
<use href="#cp" x="335.1" y="97.8" stroke="#ffc400"/>
<use href="#cp" x="347.7" y="99.6" stroke="#ffa200"/>
<use href="#mm" x="343.0" y="86.9" stroke="#ffa200"/>
<use href="#mm" x="356.7" y="102.3" stroke="#ffe400"/>
<use href="#cp" x="321.2" y="103.4" stroke="#ffa200"/>
<use href="#mm" x="376.5" y="91.3" stroke="#ffc400"/>
<use href="#cp" x="319.8" y="99.3" stroke="#ffc400"/>
<use href="#mm" x="369.0" y="91.4" stroke="#ffe400"/>
<use href="#cp" x="382.0" y="122.4" stroke="#ffc400"/>
<use href="#pp" x="348.7" y="95.2" stroke="#ffc400"/>
<use href="#cp" x="326.7" y="94.9" stroke="#ffe400"/>
<use href="#mm" x="327.1" y="104.9" stroke="#ffe400"/>
<use href="#mm" x="369.8" y="100.0" stroke="#ffe400"/>
<use href="#cp" x="362.3" y="98.7" stroke="#ffa200"/>
<use href="#cp" x="342.5" y="95.0" stroke="#ffc400"/>
<use href="#cp" x="354.4" y="120.3" stroke="#ffa200"/>
<use href="#cp" x="361.5" y="113.3" stroke="#ffe400"/>
<use href="#cp" x="345.0" y="99.6" stroke="#ffe400"/>
<use href="#cm" x="358.7" y="90.2" stroke="#ffa200"/>
<use href="#mm" x="381.0" y="87.6" stroke="#ffe400"/>
<use href="#mm" x="381.6" y="86.2" stroke="#ffa200"/>
<use href="#cp" x="365.8" y="74.3" stroke="#ffc400"/>
<use href="#cp" x="358.1" y="85.8" stroke="#ffc400"/>
<use href="#pp" x="354.5" y="94.6" stroke="#ffa200"/>
<use href="#mm" x="316.1" y="99.4" stroke="#ffe400"/>
<use href="#cp" x="381.4" y="88.3" stroke="#ffc400"/>
<use href="#cp" x="364.3" y="87.9" stroke="#ffa200"/>
<use href="#cp" x="383.4" y="94.3" stroke="#ffc400"/>
<use href="#cm" x="327.4" y="101.2" stroke="#ffc400"/>
<use href="#mm" x="297.8" y="82.9" stroke="#ffe400"/>
<use href="#cp" x="355.9" y="116.2" stroke="#ffc400"/>
<use href="#cp" x="371.0" y="85.8" stroke="#ffc400"/>
<use href="#mm" x="326.4" y="77.5" stroke="#ffc400"/>
<use href="#cp" x="329.2" y="94.9" stroke="#ffc400"/>
<use href="#mm" x="368.6" y="97.7" stroke="#ffc400"/>
<use href="#cp" x="323.4" y="122.0" stroke="#ffa200"/>
<use href="#cm" x="319.0" y="92.5" stroke="#ffe400"/>
<use href="#cp" x="353.3" y="84.4" stroke="#ffc400"/>
<use href="#cp" x="322.5" y="93.9" stroke="#ffc400"/>
<use href="#pp" x="369.3" y="83.8" stroke="#ffc400"/>
<use href="#cm" x="336.7" y="125.3" stroke="#ffc400"/>
<use href="#cm" x="327.9" y="101.3" stroke="#ffc400"/>
<use href="#mm" x="369.4" y="93.2" stroke="#ffe400"/>
<use href="#pp" x="361.6" y="124.5" stroke="#ffc400"/>
<use href="#mm" x="368.4" y="105.6" stroke="#ffe400"/>
<use href="#mm" x="352.4" y="79.5" stroke="#ffa200"/>
<use href="#cp" x="328.6" y="89.0" stroke="#ffc400"/>
<use href="#cp" x="365.2" y="116.6" stroke="#ffc400"/>
<use href="#mm" x="375.6" y="127.3" stroke="#ffa200"/>
<use href="#cp" x="345.1" y="119.1" stroke="#ffc400"/>
<use href="#cp" x="325.4" y="99.7" stroke="#ffe400"/>
<use href="#cp" x="356.3" y="105.3" stroke="#ffc400"/>
<use href="#mm" x="376.8" y="96.2" stroke="#ffe400"/>
<use href="#cp" x="307.9" y="96.3" stroke="#ffe400"/>
<use href="#mm" x="357.1" y="87.2" stroke="#ffe400"/>
<use href="#cp" x="386.2" y="101.9" stroke="#ffc400"/>
<use href="#cp" x="375.6" y="101.0" stroke="#ffe400"/>
<use href="#pp" x="371.4" y="101.7" stroke="#ffc400"/>
<use href="#mm" x="354.7" y="105.4" stroke="#ffe400"/>
<use href="#mm" x="398.7" y="93.8" stroke="#ffc400"/>
<use href="#mm" x="347.4" y="98.4" stroke="#ffe400"/>
<use href="#cp" x="346.7" y="69.8" stroke="#ffa200"/>
<use href="#cp" x="360.3" y="97.2" stroke="#ffe400"/>
<use href="#cp" x="359.4" y="114.5" stroke="#ffe400"/>
<use href="#cp" x="334.8" y="99.5" stroke="#ffe400"/>
<use href="#cp" x="373.3" y="83.0" stroke="#ffe400"/>
<use href="#mm" x="346.8" y="77.9" stroke="#ffe400"/>
<use href="#pp" x="330.5" y="79.5" stroke="#ffe400"/>
<use href="#cp" x="357.1" y="92.6" stroke="#ffa200"/>
<use href="#mm" x="354.3" y="113.5" stroke="#ffe400"/>
<use href="#cp" x="317.9" y="103.5" stroke="#ffc400"/>
<use href="#cp" x="329.4" y="113.2" stroke="#ffe400"/>
<use href="#cp" x="335.8" y="107.4" stroke="#ffe400"/>
<use href="#cp" x="354.4" y="108.9" stroke="#ffe400"/>
<use href="#cp" x="379.5" y="102.3" stroke="#ffe400"/>
<use href="#cm" x="344.9" y="84.5" stroke="#ffe400"/>
<use href="#mm" x="349.6" y="116.3" stroke="#ffe400"/>
<use href="#cm" x="377.4" y="113.1" stroke="#ffc400"/>
<use href="#mm" x="345.2" y="112.6" stroke="#ffe400"/>
<use href="#pp" x="324.7" y="122.0" stroke="#ffe400"/>
<use href="#pp" x="339.4" y="118.8" stroke="#ffc400"/>
<use href="#pp" x="356.2" y="98.4" stroke="#ffe400"/>
<use href="#cp" x="325.7" y="113.5" stroke="#ffc400"/>
<use href="#mm" x="338.5" y="115.0" stroke="#ffa200"/>
<use href="#cp" x="361.1" y="84.8" stroke="#ffc400"/>
<use href="#cp" x="331.2" y="108.5" stroke="#ffa200"/>
<use href="#cm" x="330.4" y="103.9" stroke="#ffc400"/>
<use href="#cp" x="351.5" y="98.8" stroke="#ffc400"/>
<use href="#pp" x="348.7" y="85.8" stroke="#ffc400"/>
<use href="#cm" x="348.1" y="93.1" stroke="#ffa200"/>
<use href="#mm" x="359.0" y="115.7" stroke="#ffa200"/>
<use href="#cp" x="324.4" y="118.8" stroke="#ffe400"/>
<use href="#mm" x="348.3" y="93.1" stroke="#ffa200"/>
<use href="#mm" x="352.8" y="105.1" stroke="#ffa200"/>
<use href="#cm" x="386.3" y="123.2" stroke="#ffe400"/>
<use href="#cp" x="361.3" y="90.7" stroke="#ffc400"/>
<use href="#cm" x="317.8" y="99.0" stroke="#ffc400"/>
<use href="#cp" x="352.6" y="84.7" stroke="#ffe400"/>
<use href="#mm" x="338.6" y="103.1" stroke="#ffc400"/>
<use href="#mm" x="373.4" y="78.6" stroke="#ffc400"/>
<use href="#cm" x="356.0" y="98.2" stroke="#ffe400"/>
<use href="#cp" x="311.4" y="80.8" stroke="#ffc400"/>
<use href="#cp" x="327.1" y="85.1" stroke="#ffc400"/>
<use href="#pp" x="342.9" y="85.2" stroke="#ffa200"/>
<use href="#cp" x="350.9" y="98.6" stroke="#ffa200"/>
<use href="#cm" x="348.7" y="98.2" stroke="#ffa200"/>
<use href="#cp" x="337.2" y="100.0" stroke="#ffc400"/>
<use href="#mm" x="355.6" y="101.0" stroke="#ffc400"/>
<use href="#mm" x="331.0" y="121.1" stroke="#ffe400"/>
<use href="#pp" x="340.0" y="81.7" stroke="#ffe400"/>
<use href="#pp" x="337.8" y="103.8" stroke="#ffc400"/>
<use href="#cm" x="345.6" y="106.6" stroke="#ffc400"/>
<use href="#pp" x="345.9" y="93.1" stroke="#ffa200"/>
<use href="#mm" x="327.2" y="94.3" stroke="#ffe400"/>
<use href="#pp" x="335.8" y="75.9" stroke="#ffc400"/>
<use href="#mm" x="325.7" y="105.9" stroke="#ffc400"/>
<use href="#cm" x="366.1" y="100.4" stroke="#ffe400"/>
<use href="#cm" x="329.4" y="95.0" stroke="#ffa200"/>
<use href="#cp" x="359.5" y="95.7" stroke="#ffc400"/>
<use href="#mm" x="378.7" y="78.7" stroke="#ffc400"/>
<use href="#mm" x="375.5" y="85.4" stroke="#ffc400"/>
<use href="#pp" x="337.1" y="92.0" stroke="#ffc400"/>
<use href="#pp" x="342.3" y="87.9" stroke="#ffa200"/>
<use href="#mm" x="404.1" y="94.1" stroke="#ffc400"/>
<use href="#cp" x="388.3" y="97.6" stroke="#ffc400"/>
<use href="#cp" x="350.9" y="107.2" stroke="#ffc400"/>
<use href="#cp" x="365.1" y="94.8" stroke="#ffc400"/>
<use href="#cp" x="350.4" y="91.5" stroke="#ffc400"/>
<use href="#mm" x="358.7" y="78.2" stroke="#ffc400"/>
<use href="#cm" x="376.1" y="83.8" stroke="#ffa200"/>
<use href="#cm" x="382.1" y="83.6" stroke="#ffc400"/>
<use href="#cp" x="307.9" y="75.9" stroke="#ffa200"/>
<use href="#cp" x="316.9" y="112.3" stroke="#ffe400"/>
<use href="#pp" x="346.6" y="87.9" stroke="#ffc400"/>
<use href="#cp" x="351.2" y="106.5" stroke="#ffc400"/>
<use href="#cp" x="364.1" y="99.4" stroke="#ffe400"/>
<use href="#mm" x="338.5" y="120.3" stroke="#ffc400"/>
<use href="#mm" x="385.4" y="93.5" stroke="#ffe400"/>
<use href="#cp" x="369.3" y="91.5" stroke="#ffc400"/>
<use href="#cp" x="323.0" y="105.2" stroke="#ffa200"/>
<use href="#mm" x="355.4" y="96.9" stroke="#ffa200"/>
<use href="#mm" x="327.7" y="91.4" stroke="#ffc400"/>
<use href="#mm" x="351.0" y="97.9" stroke="#ffc400"/>
<use href="#cp" x="323.8" y="100.8" stroke="#ffc400"/>
<use href="#cp" x="366.2" y="105.3" stroke="#ffe400"/>
<use href="#mm" x="321.0" y="81.3" stroke="#ffa200"/>
<use href="#cp" x="348.7" y="91.8" stroke="#ffc400"/>
<use href="#cp" x="344.4" y="113.7" stroke="#ffc400"/>
<use href="#cp" x="366.8" y="87.1" stroke="#ffc400"/>
<use href="#cp" x="364.1" y="105.1" stroke="#ffc400"/>
<use href="#pp" x="351.9" y="104.1" stroke="#ffc400"/>
<use href="#mm" x="341.3" y="98.0" stroke="#ffc400"/>
<use href="#cm" x="390.6" y="106.4" stroke="#ffe400"/>
<use href="#pp" x="368.3" y="109.6" stroke="#ffc400"/>
<use href="#cp" x="329.2" y="105.5" stroke="#ffc400"/>
<use href="#cp" x="357.6" y="107.0" stroke="#ffe400"/>
<use href="#cm" x="374.3" y="84.8" stroke="#ffa200"/>
<use href="#mm" x="365.9" y="105.4" stroke="#ffa200"/>
<use href="#mm" x="360.2" y="93.2" stroke="#ffc400"/>
<use href="#cp" x="348.3" y="106.9" stroke="#ffc400"/>
<use href="#cm" x="359.4" y="108.0" stroke="#ffa200"/>
<use href="#cm" x="347.1" y="70.0" stroke="#ffa200"/>
<use href="#mm" x="395.9" y="95.8" stroke="#ffa200"/>
<use href="#cm" x="363.0" y="94.2" stroke="#ffe400"/>
<use href="#mm" x="338.3" y="93.3" stroke="#ffc400"/>
<use href="#cp" x="321.1" y="102.9" stroke="#ffa200"/>
<use href="#cp" x="372.9" y="92.4" stroke="#ffe400"/>
<use href="#cp" x="326.4" y="73.5" stroke="#ffa200"/>
<use href="#mm" x="361.0" y="110.2" stroke="#ffc400"/>
<use href="#cm" x="331.9" y="93.3" stroke="#ffa200"/>
<use href="#mm" x="348.8" y="89.6" stroke="#ffc400"/>
<use href="#pp" x="326.0" y="82.7" stroke="#ffc400"/>
<use href="#cp" x="384.9" y="104.2" stroke="#ffe400"/>
<use href="#pp" x="361.7" y="109.0" stroke="#ffe400"/>
<use href="#cp" x="346.5" y="112.6" stroke="#ffa200"/>
<use href="#mm" x="343.1" y="73.6" stroke="#ffc400"/>
<use href="#cp" x="380.1" y="86.3" stroke="#ffc400"/>
<use href="#cp" x="339.4" y="90.8" stroke="#ffe400"/>
<use href="#mm" x="336.9" y="100.3" stroke="#ffc400"/>
<use href="#mm" x="317.7" y="87.4" stroke="#ffc400"/>
<use href="#cp" x="373.1" y="111.0" stroke="#ffa200"/>
<use href="#cm" x="304.9" y="88.4" stroke="#ffc400"/>
<use href="#pp" x="382.5" y="102.6" stroke="#ffc400"/>
<use href="#cp" x="375.7" y="106.2" stroke="#ffc400"/>
<use href="#mm" x="337.7" y="94.7" stroke="#ffa200"/>
<use href="#mm" x="370.2" y="89.8" stroke="#ffa200"/>
<use href="#mm" x="372.8" y="85.0" stroke="#ffc400"/>
<use href="#cm" x="373.5" y="81.2" stroke="#ffa200"/>
<use href="#pp" x="331.5" y="99.7" stroke="#ffe400"/>
<use href="#cp" x="356.2" y="109.6" stroke="#ffe400"/>
<use href="#pp" x="327.0" y="86.8" stroke="#ffa200"/>
<use href="#mm" x="361.9" y="98.5" stroke="#ffa200"/>
<use href="#pp" x="355.3" y="85.6" stroke="#ffe400"/>
<use href="#mm" x="358.0" y="83.7" stroke="#ffe400"/>
<use href="#cm" x="382.8" y="87.6" stroke="#ffc400"/>
<use href="#cm" x="357.4" y="96.0" stroke="#ffc400"/>
<use href="#cp" x="320.8" y="101.8" stroke="#ffc400"/>
<use href="#cm" x="352.2" y="82.0" stroke="#ffa200"/>
<use href="#cp" x="316.1" y="116.1" stroke="#ffc400"/>
<use href="#cp" x="364.6" y="96.2" stroke="#ffc400"/>
<use href="#mm" x="356.2" y="101.4" stroke="#ffc400"/>
<use href="#cm" x="337.3" y="92.9" stroke="#ffe400"/>
<use href="#cp" x="377.6" y="129.4" stroke="#ffc400"/>
<use href="#mm" x="343.2" y="102.2" stroke="#ffc400"/>
<use href="#mm" x="355.1" y="98.3" stroke="#ffa200"/>
<use href="#cp" x="354.1" y="87.4" stroke="#ffc400"/>
<use href="#pp" x="330.0" y="98.0" stroke="#ffc400"/>
<use href="#pp" x="359.2" y="63.7" stroke="#ffc400"/>
<use href="#cm" x="381.6" y="90.3" stroke="#ffc400"/>
<use href="#cp" x="341.5" y="68.3" stroke="#ffc400"/>
<use href="#mm" x="369.2" y="108.6" stroke="#ffa200"/>
<use href="#cm" x="350.2" y="112.5" stroke="#ffc400"/>
<use href="#cp" x="334.5" y="90.3" stroke="#ffa200"/>
<use href="#mm" x="327.9" y="72.7" stroke="#ffc400"/>
<use href="#cp" x="338.3" y="97.5" stroke="#ffc400"/>
<use href="#pp" x="371.7" y="117.3" stroke="#ffe400"/>
<use href="#cp" x="334.8" y="105.4" stroke="#ffc400"/>
<use href="#cp" x="382.3" y="93.2" stroke="#ffc400"/>
<use href="#mm" x="340.5" y="79.2" stroke="#ffe400"/>
<use href="#cm" x="321.1" y="106.4" stroke="#ffe400"/>
<use href="#cp" x="352.4" y="89.5" stroke="#ffa200"/>
<use href="#cp" x="319.9" y="99.6" stroke="#ffc400"/>
<use href="#mm" x="363.2" y="85.3" stroke="#ffc400"/>
<use href="#cp" x="349.8" y="107.3" stroke="#ffc400"/>
<use href="#cm" x="367.9" y="90.8" stroke="#ffc400"/>
<use href="#mm" x="316.8" y="92.5" stroke="#ffa200"/>
<use href="#cp" x="354.8" y="81.1" stroke="#ffc400"/>
<use href="#cp" x="333.6" y="107.8" stroke="#ffa200"/>
<use href="#cm" x="389.6" y="86.3" stroke="#ffe400"/>
<use href="#mm" x="383.6" y="99.5" stroke="#ffa200"/>
<use href="#pp" x="346.3" y="96.0" stroke="#ffc400"/>
<use href="#mm" x="384.6" y="106.7" stroke="#ffc400"/>
<use href="#pp" x="351.3" y="110.6" stroke="#ffa200"/>
<use href="#pp" x="337.9" y="110.2" stroke="#ffa200"/>
<use href="#mm" x="349.4" y="102.9" stroke="#ffc400"/>
<use href="#cp" x="380.6" y="112.8" stroke="#ffc400"/>
<use href="#cp" x="339.8" y="93.9" stroke="#ffc400"/>
<use href="#cm" x="338.2" y="100.0" stroke="#ffa200"/>
<use href="#mm" x="398.0" y="76.4" stroke="#ffe400"/>
<use href="#mm" x="333.5" y="84.3" stroke="#ffa200"/>
<use href="#mm" x="343.2" y="89.3" stroke="#ffe400"/>
<use href="#mm" x="363.6" y="75.8" stroke="#ffe400"/>
<use href="#cp" x="361.2" y="100.0" stroke="#ffc400"/>
<use href="#cp" x="390.5" y="90.7" stroke="#ffe400"/>
<use href="#mm" x="359.3" y="102.1" stroke="#ffa200"/>
<use href="#cp" x="327.2" y="83.1" stroke="#ffa200"/>
<use href="#mm" x="350.4" y="95.4" stroke="#ffe400"/>
<use href="#cp" x="391.5" y="110.9" stroke="#ffa200"/>
<use href="#mm" x="345.6" y="118.1" stroke="#ffc400"/>
<use href="#cp" x="325.1" y="104.2" stroke="#ffe400"/>
<use href="#mm" x="332.0" y="98.3" stroke="#ffe400"/>
<use href="#cp" x="360.2" y="100.4" stroke="#ffe400"/>
<use href="#cp" x="362.0" y="85.1" stroke="#ffe400"/>
<use href="#cp" x="380.2" y="64.3" stroke="#ffe400"/>
<use href="#cp" x="365.2" y="92.6" stroke="#ffa200"/>
<use href="#cp" x="358.9" y="104.1" stroke="#ffc400"/>
<use href="#cm" x="337.6" y="97.1" stroke="#ffc400"/>
<use href="#mm" x="351.9" y="114.8" stroke="#ffa200"/>
<use href="#pp" x="325.5" y="101.5" stroke="#ffa200"/>
<use href="#mm" x="357.7" y="81.1" stroke="#ffa200"/>
<use href="#cp" x="386.5" y="92.4" stroke="#ffc400"/>
<use href="#cp" x="319.5" y="93.3" stroke="#ffc400"/>
<use href="#cp" x="378.2" y="84.2" stroke="#ffa200"/>
<use href="#cm" x="370.6" y="98.1" stroke="#ffc400"/>
<use href="#mm" x="345.1" y="102.5" stroke="#ffe400"/>
<use href="#cm" x="342.1" y="103.1" stroke="#ffc400"/>
<use href="#cp" x="311.6" y="103.6" stroke="#ffc400"/>
<use href="#pp" x="357.2" y="108.1" stroke="#ffc400"/>
<use href="#pp" x="348.3" y="85.0" stroke="#ffe400"/>
<use href="#cp" x="333.4" y="107.6" stroke="#ffc400"/>
<use href="#mm" x="378.5" y="87.5" stroke="#ffc400"/>
<use href="#cp" x="363.3" y="118.4" stroke="#ffe400"/>
<use href="#mm" x="341.6" y="109.3" stroke="#ffa200"/>
<use href="#pp" x="364.7" y="122.6" stroke="#ffc400"/>
<use href="#cm" x="368.7" y="99.3" stroke="#ffe400"/>
<use href="#pp" x="342.3" y="99.1" stroke="#ffc400"/>
<use href="#mm" x="329.2" y="103.0" stroke="#ffa200"/>
<use href="#mm" x="323.9" y="101.8" stroke="#ffc400"/>
<use href="#cm" x="343.3" y="105.7" stroke="#ffe400"/>
<use href="#cm" x="376.6" y="88.7" stroke="#ffc400"/>
<use href="#mm" x="343.0" y="97.1" stroke="#ffe400"/>
<use href="#mm" x="353.0" y="90.5" stroke="#ffc400"/>
<use href="#cp" x="390.4" y="97.0" stroke="#ffc400"/>
<use href="#mm" x="353.4" y="119.4" stroke="#ffc400"/>
<use href="#cp" x="349.4" y="92.9" stroke="#ffe400"/>
<use href="#pp" x="336.1" y="94.3" stroke="#ffc400"/>
<use href="#mm" x="312.9" y="110.3" stroke="#ffe400"/>
<use href="#cp" x="369.4" y="103.4" stroke="#ffe400"/>
<use href="#mm" x="362.0" y="72.2" stroke="#ffc400"/>
<use href="#mm" x="337.7" y="83.2" stroke="#ffc400"/>
<use href="#mm" x="372.4" y="74.9" stroke="#ffc400"/>
<use href="#cp" x="339.6" y="91.9" stroke="#ffc400"/>
<use href="#mm" x="365.2" y="89.8" stroke="#ffe400"/>
<use href="#pp" x="375.9" y="108.0" stroke="#ffc400"/>
<use href="#cm" x="326.0" y="120.3" stroke="#ffa200"/>
<use href="#pp" x="373.9" y="92.7" stroke="#ffc400"/>
<use href="#cp" x="318.3" y="85.3" stroke="#ffc400"/>
<use href="#cp" x="333.0" y="99.5" stroke="#ffc400"/>
<use href="#pp" x="329.4" y="89.9" stroke="#ffc400"/>
<use href="#mm" x="354.3" y="89.7" stroke="#ffc400"/>
<use href="#pp" x="359.8" y="107.7" stroke="#ffe400"/>
<use href="#cm" x="337.3" y="94.9" stroke="#ffc400"/>
<use href="#mm" x="397.6" y="84.2" stroke="#ffc400"/>
<use href="#mm" x="345.8" y="87.7" stroke="#ffe400"/>
<use href="#cm" x="332.5" y="88.5" stroke="#ffa200"/>
<use href="#cp" x="342.8" y="90.4" stroke="#ffc400"/>
<use href="#cp" x="344.0" y="91.0" stroke="#ffc400"/>
<use href="#cp" x="365.0" y="89.9" stroke="#ffe400"/>
<use href="#mm" x="344.3" y="81.6" stroke="#ffa200"/>
<use href="#cp" x="353.1" y="80.6" stroke="#ffa200"/>
<use href="#cp" x="349.3" y="89.0" stroke="#ffc400"/>
<use href="#cp" x="368.2" y="115.1" stroke="#ffc400"/>
<use href="#mm" x="391.1" y="84.7" stroke="#ffa200"/>
<use href="#mm" x="341.4" y="93.9" stroke="#ffc400"/>
<use href="#mm" x="358.2" y="97.2" stroke="#ffe400"/>
<use href="#mm" x="380.4" y="101.1" stroke="#ffe400"/>
<use href="#cm" x="359.8" y="89.1" stroke="#ffe400"/>
<use href="#cp" x="326.9" y="109.7" stroke="#ffe400"/>
<use href="#pp" x="342.8" y="72.9" stroke="#ffc400"/>
<use href="#mm" x="365.2" y="107.4" stroke="#ffc400"/>
<use href="#cp" x="389.8" y="84.0" stroke="#ffc400"/>
<use href="#mm" x="393.6" y="91.2" stroke="#ffc400"/>
<use href="#mm" x="347.8" y="93.6" stroke="#ffc400"/>
<use href="#cm" x="346.2" y="78.2" stroke="#ffc400"/>
<use href="#mm" x="345.1" y="100.2" stroke="#ffc400"/>
<use href="#cp" x="367.7" y="82.7" stroke="#ffe400"/>
<use href="#pp" x="315.7" y="81.4" stroke="#ffe400"/>
<use href="#mm" x="355.4" y="78.6" stroke="#ffc400"/>
<use href="#cm" x="371.5" y="82.4" stroke="#ffc400"/>
<use href="#mm" x="395.2" y="96.7" stroke="#ffe400"/>
<use href="#cp" x="382.1" y="94.4" stroke="#ffc400"/>
<use href="#cm" x="347.1" y="97.2" stroke="#ffa200"/>
<use href="#cm" x="378.9" y="102.3" stroke="#ffa200"/>
<use href="#mm" x="395.0" y="106.5" stroke="#ffa200"/>
<use href="#cp" x="348.6" y="74.6" stroke="#ffe400"/>
<use href="#mm" x="345.4" y="99.1" stroke="#ffc400"/>
<use href="#cm" x="332.0" y="90.9" stroke="#ffc400"/>
<use href="#mm" x="325.4" y="94.0" stroke="#ffa200"/>
<use href="#mm" x="325.0" y="117.7" stroke="#ffa200"/>
<use href="#pp" x="342.7" y="84.4" stroke="#ffa200"/>
<use href="#mm" x="396.5" y="76.2" stroke="#ffc400"/>
<use href="#cp" x="376.4" y="80.1" stroke="#ffa200"/>
<use href="#mm" x="377.2" y="111.8" stroke="#ffc400"/>
<use href="#pp" x="355.3" y="90.5" stroke="#ffe400"/>
<use href="#pp" x="331.1" y="95.3" stroke="#ffe400"/>
<use href="#cp" x="367.1" y="77.0" stroke="#ffa200"/>
<use href="#pp" x="362.1" y="100.5" stroke="#ffe400"/>
<use href="#mm" x="334.9" y="113.4" stroke="#ffc400"/>
<use href="#cp" x="391.5" y="77.2" stroke="#ffa200"/>
<use href="#cp" x="376.8" y="105.2" stroke="#ffe400"/>
<use href="#mm" x="376.7" y="110.8" stroke="#ffc400"/>
<use href="#mm" x="355.8" y="89.9" stroke="#ffe400"/>
<use href="#pp" x="367.5" y="84.1" stroke="#ffa200"/>
<use href="#pp" x="378.4" y="99.9" stroke="#ffc400"/>
<use href="#pp" x="342.9" y="103.1" stroke="#ffa200"/>
<use href="#cp" x="341.2" y="71.5" stroke="#ffe400"/>
<use href="#cp" x="304.7" y="93.6" stroke="#ffa200"/>
<use href="#cm" x="325.9" y="114.1" stroke="#ffc400"/>
<use href="#cp" x="350.5" y="96.6" stroke="#ffe400"/>
<use href="#cp" x="363.2" y="99.0" stroke="#ffa200"/>
<use href="#cp" x="345.0" y="105.1" stroke="#ffc400"/>
<use href="#pp" x="353.5" y="98.5" stroke="#ffe400"/>
<use href="#cm" x="324.1" y="104.4" stroke="#ffa200"/>
<use href="#cp" x="363.8" y="81.8" stroke="#ffe400"/>
<use href="#pp" x="382.3" y="99.3" stroke="#ffc400"/>
<use href="#cm" x="350.5" y="102.7" stroke="#ffc400"/>
<use href="#pp" x="350.5" y="103.6" stroke="#ffc400"/>
<use href="#cp" x="376.6" y="88.5" stroke="#ffa200"/>
<use href="#cp" x="359.9" y="88.7" stroke="#ffa200"/>
<use href="#cm" x="349.3" y="95.2" stroke="#ffc400"/>
<use href="#pp" x="355.0" y="93.0" stroke="#ffc400"/>
<use href="#cp" x="323.8" y="83.3" stroke="#ffa200"/>
<use href="#pp" x="342.0" y="95.1" stroke="#ffc400"/>
<use href="#cp" x="356.7" y="86.5" stroke="#ffc400"/>
<use href="#cp" x="310.3" y="84.8" stroke="#ffc400"/>
<use href="#cp" x="327.6" y="92.5" stroke="#ffe400"/>
<use href="#cp" x="385.0" y="89.6" stroke="#ffc400"/>
<use href="#cp" x="383.1" y="113.9" stroke="#ffc400"/>
<use href="#cp" x="328.0" y="95.3" stroke="#ffc400"/>
<use href="#pp" x="382.1" y="101.8" stroke="#ffe400"/>
<use href="#cp" x="367.5" y="94.9" stroke="#ffe400"/>
<use href="#cp" x="365.3" y="92.8" stroke="#ffc400"/>
<use href="#mm" x="357.0" y="99.9" stroke="#ffe400"/>
<use href="#cp" x="369.5" y="97.0" stroke="#ffa200"/>
<use href="#mm" x="323.3" y="77.7" stroke="#ffc400"/>
<use href="#cm" x="327.4" y="88.7" stroke="#ffe400"/>
<use href="#cp" x="316.4" y="93.5" stroke="#ffe400"/>
<use href="#pp" x="361.7" y="90.5" stroke="#ffc400"/>
<use href="#pp" x="343.4" y="104.0" stroke="#ffe400"/>
<use href="#cp" x="293.6" y="106.5" stroke="#ffc400"/>
<use href="#cp" x="292.4" y="102.8" stroke="#ffe400"/>
<use href="#cp" x="305.4" y="104.6" stroke="#ffc400"/>
<use href="#cp" x="297.8" y="78.4" stroke="#ffff00"/>
<use href="#pp" x="290.6" y="106.6" stroke="#ffa200"/>
<use href="#pp" x="303.6" y="98.9" stroke="#ffa200"/>
<use href="#cp" x="294.6" y="100.7" stroke="#ffa200"/>
<use href="#cp" x="303.7" y="97.1" stroke="#ffe400"/>
<use href="#pp" x="283.5" y="78.9" stroke="#ffff00"/>
<use href="#cp" x="284.0" y="101.6" stroke="#ffa200"/>
<use href="#cp" x="296.0" y="81.3" stroke="#ffff00"/>
<use href="#cp" x="280.6" y="87.0" stroke="#ffe400"/>
<use href="#cp" x="297.0" y="84.3" stroke="#ffe400"/>
<use href="#cp" x="296.1" y="88.9" stroke="#ffa200"/>
<use href="#pp" x="280.8" y="101.0" stroke="#ffe400"/>
<use href="#cm" x="298.6" y="87.1" stroke="#ffe400"/>
<use href="#cp" x="285.4" y="82.5" stroke="#ffc400"/>
<use href="#cp" x="287.6" y="82.4" stroke="#ffc400"/>
<use href="#cp" x="284.9" y="93.4" stroke="#ffc400"/>
<use href="#cp" x="301.2" y="99.9" stroke="#ffe400"/>
<use href="#cp" x="281.9" y="82.3" stroke="#ffa200"/>
<use href="#cp" x="287.9" y="87.5" stroke="#ffe400"/>
<use href="#cp" x="297.4" y="104.9" stroke="#ffc400"/>
<use href="#cp" x="282.9" y="94.8" stroke="#ffe400"/>
<use href="#cp" x="284.8" y="103.0" stroke="#ffe400"/>
<use href="#cp" x="290.6" y="89.7" stroke="#ffff00"/>
<use href="#cp" x="299.5" y="93.4" stroke="#ffc400"/>
<use href="#cp" x="283.6" y="89.8" stroke="#ffc400"/>
<use href="#mm" x="280.6" y="88.5" stroke="#ffa200"/>
<use href="#cp" x="285.1" y="100.5" stroke="#ffe400"/>
<use href="#cp" x="299.7" y="101.6" stroke="#ffe400"/>
<use href="#cp" x="299.1" y="81.9" stroke="#ffa200"/>
<use href="#mm" x="293.6" y="80.7" stroke="#ffe400"/>
<use href="#cp" x="288.0" y="79.5" stroke="#ffc400"/>
<use href="#cp" x="295.8" y="99.8" stroke="#ffc400"/>
<use href="#cp" x="290.7" y="89.6" stroke="#ffc400"/>
<use href="#cp" x="297.9" y="88.1" stroke="#ffff00"/>
<use href="#cp" x="280.5" y="94.4" stroke="#ffa200"/>
<use href="#cm" x="304.2" y="96.9" stroke="#ffc400"/>
<use href="#cp" x="282.6" y="97.0" stroke="#ffa200"/>
<use href="#cp" x="293.8" y="98.6" stroke="#ffa200"/>
<use href="#cp" x="294.7" y="87.3" stroke="#ffff00"/>
<use href="#cp" x="300.5" y="81.6" stroke="#ffc400"/>
<use href="#cp" x="298.4" y="90.4" stroke="#ffc400"/>
<use href="#cp" x="290.6" y="85.1" stroke="#ffa200"/>
<use href="#cp" x="296.3" y="89.4" stroke="#ffc400"/>
<use href="#cp" x="289.8" y="92.1" stroke="#ffe400"/>
<use href="#cp" x="294.1" y="85.2" stroke="#ffa200"/>
<use href="#pp" x="286.7" y="89.8" stroke="#ffc400"/>
<use href="#mm" x="297.3" y="84.7" stroke="#ffe400"/>
<use href="#cp" x="295.8" y="86.6" stroke="#ffa200"/>
<use href="#cp" x="300.5" y="89.7" stroke="#ffc400"/>
<use href="#cp" x="291.3" y="89.3" stroke="#ffa200"/>
<use href="#cp" x="296.2" y="105.4" stroke="#ffff00"/>
<use href="#cp" x="290.3" y="80.2" stroke="#ffc400"/>
<use href="#cm" x="293.3" y="105.7" stroke="#ffff00"/>
<use href="#mm" x="299.7" y="88.4" stroke="#ffa200"/>
<use href="#cp" x="303.7" y="95.2" stroke="#ffff00"/>
<use href="#cp" x="306.2" y="96.9" stroke="#ffa200"/>
<use href="#cp" x="290.7" y="91.0" stroke="#ffa200"/>
<use href="#cp" x="320.3" y="94.5" stroke="#ffa200"/>
<use href="#cp" x="310.7" y="103.6" stroke="#ffa200"/>
<use href="#cp" x="312.9" y="83.4" stroke="#ffc400"/>
<use href="#cp" x="304.0" y="95.1" stroke="#ffa200"/>
<use href="#cp" x="310.5" y="86.3" stroke="#f58a10"/>
<use href="#cp" x="301.7" y="96.2" stroke="#f58a10"/>
<use href="#cm" x="317.5" y="97.5" stroke="#ffa200"/>
<use href="#cp" x="310.1" y="105.2" stroke="#ffe400"/>
<use href="#pp" x="315.8" y="86.4" stroke="#ffa200"/>
<use href="#cp" x="318.9" y="83.1" stroke="#ffa200"/>
<use href="#cp" x="313.7" y="88.0" stroke="#f58a10"/>
<use href="#mm" x="309.5" y="103.9" stroke="#f58a10"/>
<use href="#pp" x="316.9" y="94.7" stroke="#f58a10"/>
<use href="#cm" x="302.6" y="99.4" stroke="#ffe400"/>
<use href="#cm" x="306.9" y="95.7" stroke="#ffe400"/>
<use href="#mm" x="304.7" y="90.8" stroke="#f58a10"/>
<use href="#cp" x="311.2" y="85.0" stroke="#ffe400"/>
<use href="#pp" x="311.4" y="101.0" stroke="#f58a10"/>
<use href="#mm" x="312.1" y="83.8" stroke="#f58a10"/>
<use href="#mm" x="316.6" y="92.9" stroke="#ffc400"/>
<use href="#cp" x="316.2" y="85.2" stroke="#ffe400"/>
<use href="#cp" x="304.8" y="84.4" stroke="#ffa200"/>
<use href="#cm" x="320.0" y="108.1" stroke="#ffc400"/>
<use href="#cp" x="316.8" y="94.8" stroke="#ffc400"/>
<use href="#mm" x="312.0" y="94.1" stroke="#ffa200"/>
<use href="#cp" x="300.3" y="95.1" stroke="#ffe400"/>
<use href="#cp" x="311.1" y="103.5" stroke="#ffa200"/>
<use href="#mm" x="306.2" y="103.1" stroke="#ffe400"/>
<use href="#mm" x="309.1" y="98.8" stroke="#ffe400"/>
<use href="#cm" x="310.1" y="104.3" stroke="#ffa200"/>
<use href="#cp" x="321.7" y="104.2" stroke="#ffc400"/>
<use href="#cp" x="301.4" y="88.9" stroke="#ffe400"/>
<use href="#cp" x="313.3" y="92.9" stroke="#ffa200"/>
<use href="#cp" x="306.6" y="100.5" stroke="#f58a10"/>
<use href="#cp" x="310.2" y="95.1" stroke="#ffe400"/>
<use href="#cp" x="312.6" y="106.3" stroke="#ffe400"/>
<use href="#cp" x="309.8" y="93.4" stroke="#f58a10"/>
<use href="#cp" x="304.5" y="88.4" stroke="#ffe400"/>
<use href="#cp" x="307.9" y="81.1" stroke="#ffe400"/>
<use href="#cp" x="311.8" y="103.0" stroke="#ffc400"/>
<use href="#cp" x="317.4" y="88.7" stroke="#ffa200"/>
<use href="#cp" x="301.4" y="89.2" stroke="#ffc400"/>
<use href="#cm" x="316.6" y="87.2" stroke="#f58a10"/>
<use href="#mm" x="314.6" y="107.1" stroke="#f58a10"/>
<use href="#pp" x="313.2" y="99.4" stroke="#ffe400"/>
<use href="#cp" x="320.6" y="101.3" stroke="#f58a10"/>
<use href="#cm" x="316.5" y="82.6" stroke="#ffe400"/>
<use href="#cp" x="310.2" y="86.6" stroke="#f58a10"/>
<use href="#mm" x="305.5" y="94.1" stroke="#ffc400"/>
<use href="#cp" x="307.7" y="97.2" stroke="#f58a10"/>
<use href="#mm" x="304.1" y="91.8" stroke="#ffe400"/>
<use href="#cm" x="318.0" y="84.8" stroke="#f58a10"/>
<use href="#cp" x="307.6" y="104.7" stroke="#ffa200"/>
<use href="#cp" x="321.0" y="100.1" stroke="#ffc400"/>
<use href="#pp" x="316.1" y="85.2" stroke="#f58a10"/>
<use href="#cm" x="308.2" y="90.3" stroke="#ffa200"/>
<use href="#cp" x="303.4" y="92.1" stroke="#f58a10"/>
<use href="#cp" x="317.5" y="90.8" stroke="#ffe400"/>
<use href="#cp" x="320.3" y="86.6" stroke="#ffe400"/>
<use href="#mm" x="318.5" y="106.7" stroke="#ffe400"/>
<use href="#cp" x="303.6" y="93.8" stroke="#f58a10"/>
<use href="#cm" x="312.4" y="92.1" stroke="#ffc400"/>
<use href="#pp" x="321.3" y="94.6" stroke="#ffc400"/>
<use href="#cp" x="310.6" y="104.6" stroke="#ffa200"/>
<use href="#cp" x="320.6" y="89.8" stroke="#ffe400"/>
<use href="#cp" x="312.6" y="101.9" stroke="#f58a10"/>
<use href="#cm" x="311.6" y="104.9" stroke="#f58a10"/>
<use href="#cp" x="307.0" y="82.5" stroke="#f58a10"/>
<use href="#cp" x="313.9" y="102.9" stroke="#ffc400"/>
<use href="#cp" x="313.8" y="91.5" stroke="#ffa200"/>
<use href="#cm" x="404.6" y="109.0" stroke="#ffff00"/>
<use href="#cp" x="413.3" y="112.4" stroke="#ffff00"/>
<use href="#cp" x="421.5" y="97.2" stroke="#ffff00"/>
<use href="#cm" x="407.8" y="108.6" stroke="#ffc400"/>
<use href="#cp" x="400.0" y="108.7" stroke="#ffff00"/>
<use href="#cm" x="397.0" y="124.0" stroke="#ffa200"/>
<use href="#cp" x="408.7" y="78.7" stroke="#ffff00"/>
<use href="#cm" x="424.1" y="100.6" stroke="#ffa200"/>
<use href="#cp" x="422.1" y="95.7" stroke="#ffff00"/>
<use href="#cm" x="416.2" y="96.9" stroke="#ffe400"/>
<use href="#cm" x="416.8" y="99.2" stroke="#ffc400"/>
<use href="#cp" x="403.7" y="70.1" stroke="#ffff00"/>
<use href="#cm" x="403.5" y="113.9" stroke="#ffa200"/>
<use href="#cm" x="409.9" y="114.6" stroke="#ffff00"/>
<use href="#cp" x="412.5" y="89.3" stroke="#ffff00"/>
<use href="#cp" x="407.0" y="83.1" stroke="#ffe400"/>
<use href="#mm" x="415.4" y="105.0" stroke="#ffa200"/>
<use href="#cm" x="407.7" y="111.9" stroke="#ffff00"/>
<use href="#mm" x="415.9" y="95.3" stroke="#ffe400"/>
<use href="#cp" x="407.6" y="108.8" stroke="#ffff00"/>
<use href="#mm" x="421.8" y="104.5" stroke="#ffc400"/>
<use href="#cp" x="407.7" y="93.1" stroke="#ffc400"/>
<use href="#cp" x="397.1" y="114.6" stroke="#ffa200"/>
<use href="#cp" x="414.4" y="91.9" stroke="#ffff00"/>
<use href="#cp" x="422.5" y="80.2" stroke="#ffff00"/>
<use href="#cm" x="407.1" y="118.9" stroke="#ffff00"/>
<use href="#mm" x="378.8" y="136.7" stroke="#ffe400"/>
<use href="#mm" x="374.8" y="130.7" stroke="#ffa200"/>
<use href="#cp" x="411.1" y="122.4" stroke="#ffff00"/>
<use href="#cp" x="374.7" y="137.1" stroke="#ffff00"/>
<use href="#cm" x="397.2" y="115.7" stroke="#ffff00"/>
<use href="#cp" x="396.9" y="125.5" stroke="#ffc400"/>
<use href="#cm" x="380.8" y="137.9" stroke="#ffc400"/>
<use href="#cp" x="386.6" y="128.7" stroke="#ffa200"/>
<use href="#cp" x="401.7" y="125.3" stroke="#ffe400"/>
<use href="#mm" x="373.4" y="137.0" stroke="#ffe400"/>
<use href="#mm" x="389.7" y="127.6" stroke="#ffa200"/>
<use href="#cm" x="381.4" y="142.0" stroke="#ffff00"/>
<use href="#mm" x="382.5" y="128.1" stroke="#ffc400"/>
<use href="#pp" x="377.0" y="134.6" stroke="#ffc400"/>
<use href="#cp" x="409.3" y="122.5" stroke="#ffa200"/>
<use href="#mm" x="375.8" y="140.2" stroke="#ffa200"/>
<use href="#pp" x="397.0" y="124.8" stroke="#ffff00"/>
<use href="#mm" x="378.9" y="134.0" stroke="#ffff00"/>
<use href="#cp" x="390.9" y="127.3" stroke="#ffa200"/>
<use href="#mm" x="375.2" y="131.1" stroke="#ffe400"/>
<use href="#mm" x="381.1" y="128.6" stroke="#ffa200"/>
<use href="#cm" x="378.0" y="127.2" stroke="#ffc400"/>
<use href="#mm" x="386.0" y="133.5" stroke="#ffa200"/>
<use href="#cp" x="404.0" y="124.8" stroke="#ffa200"/>
<use href="#cp" x="396.8" y="117.4" stroke="#ffff00"/>
<use href="#mm" x="402.6" y="130.3" stroke="#ffe400"/>
<use href="#cp" x="384.4" y="123.5" stroke="#ffc400"/>
<use href="#cm" x="374.5" y="141.2" stroke="#ffff00"/>
<use href="#mm" x="388.3" y="123.1" stroke="#ffc400"/>
<use href="#mm" x="409.4" y="124.1" stroke="#ffff00"/>
<use href="#mm" x="389.8" y="118.7" stroke="#ffa200"/>
<use href="#pp" x="373.6" y="138.2" stroke="#ffff00"/>
<use href="#cp" x="394.2" y="118.8" stroke="#ffff00"/>
<use href="#mm" x="386.7" y="126.1" stroke="#ffff00"/>
<use href="#cp" x="387.0" y="117.0" stroke="#ffff00"/>
<use href="#cp" x="390.2" y="126.8" stroke="#ffc400"/>
<use href="#cp" x="386.9" y="124.5" stroke="#ffa200"/>
<use href="#mm" x="401.8" y="116.0" stroke="#ffa200"/>
<use href="#cp" x="388.7" y="125.7" stroke="#ffff00"/>
<use href="#cm" x="401.4" y="124.7" stroke="#ffc400"/>
<use href="#mm" x="386.9" y="135.7" stroke="#ffc400"/>
<use href="#cm" x="391.1" y="138.1" stroke="#ffff00"/>
<use href="#cp" x="390.5" y="132.4" stroke="#ffc400"/>
<use href="#cp" x="388.3" y="135.6" stroke="#ffe400"/>
<use href="#pp" x="377.5" y="132.9" stroke="#ffc400"/>
<use href="#mm" x="409.3" y="121.4" stroke="#ffc400"/>
<use href="#mm" x="378.0" y="132.4" stroke="#ffc400"/>
<use href="#cm" x="406.7" y="120.1" stroke="#ffa200"/>
<use href="#cp" x="393.6" y="120.8" stroke="#ffe400"/>
<use href="#cp" x="394.8" y="116.0" stroke="#ffa200"/>
<use href="#cm" x="375.9" y="114.6" stroke="#f58a10"/>
<use href="#cp" x="384.3" y="116.8" stroke="#ffa200"/>
<use href="#mm" x="380.1" y="113.8" stroke="#ffa200"/>
<use href="#pp" x="385.2" y="117.1" stroke="#ffa200"/>
<use href="#cp" x="370.9" y="110.5" stroke="#ffa200"/>
<use href="#cp" x="376.7" y="113.3" stroke="#ffa200"/>
<use href="#cp" x="377.6" y="122.6" stroke="#f09a00"/>
<use href="#cm" x="378.5" y="110.1" stroke="#f09a00"/>
<use href="#mm" x="377.6" y="123.8" stroke="#f09a00"/>
<use href="#mm" x="377.2" y="114.7" stroke="#ffa200"/>
<use href="#mm" x="373.2" y="109.0" stroke="#ffa200"/>
<use href="#pp" x="372.9" y="114.6" stroke="#f58a10"/>
<use href="#cm" x="374.7" y="111.2" stroke="#ffa200"/>
<use href="#cp" x="381.4" y="116.6" stroke="#f09a00"/>
<use href="#mm" x="376.0" y="114.0" stroke="#f09a00"/>
<use href="#cp" x="377.0" y="123.2" stroke="#f09a00"/>
<use href="#mm" x="380.4" y="112.7" stroke="#ffa200"/>
<use href="#pp" x="373.6" y="123.6" stroke="#f58a10"/>
<use href="#mm" x="375.8" y="118.8" stroke="#f58a10"/>
<use href="#cp" x="379.8" y="124.5" stroke="#f09a00"/>
<use href="#mm" x="372.9" y="124.1" stroke="#f09a00"/>
<use href="#mm" x="374.2" y="119.2" stroke="#ffa200"/>
<use href="#cp" x="374.2" y="113.5" stroke="#f58a10"/>
<use href="#mm" x="380.4" y="121.5" stroke="#f09a00"/>
<use href="#cp" x="382.9" y="113.4" stroke="#ffa200"/>
<use href="#cm" x="373.6" y="118.4" stroke="#ffa200"/>
<use href="#mm" x="371.6" y="109.5" stroke="#ffa200"/>
<use href="#pp" x="383.9" y="110.2" stroke="#f58a10"/>
<use href="#cp" x="378.7" y="122.9" stroke="#f09a00"/>
<use href="#pp" x="382.4" y="114.2" stroke="#f09a00"/>
<use href="#pp" x="371.6" y="111.4" stroke="#f58a10"/>
<use href="#mm" x="383.4" y="118.3" stroke="#f09a00"/>
<use href="#cp" x="379.6" y="121.3" stroke="#f58a10"/>
<use href="#cm" x="370.0" y="111.2" stroke="#f09a00"/>
<use href="#mm" x="372.0" y="109.2" stroke="#f58a10"/>
<use href="#cp" x="386.4" y="119.6" stroke="#f09a00"/>
<use href="#mm" x="380.2" y="114.6" stroke="#f09a00"/>
<use href="#cp" x="371.7" y="120.4" stroke="#ffa200"/>
<use href="#pp" x="384.4" y="119.8" stroke="#f09a00"/>
<use href="#mm" x="371.2" y="112.8" stroke="#ffa200"/>
<use href="#mm" x="369.9" y="122.1" stroke="#f58a10"/>
<use href="#cp" x="370.2" y="117.6" stroke="#ffa200"/>
<use href="#pp" x="385.4" y="117.6" stroke="#f09a00"/>
<use href="#mm" x="384.6" y="115.3" stroke="#ffa200"/>
<use href="#cm" x="378.1" y="112.3" stroke="#f58a10"/>
<use href="#pp" x="372.7" y="111.4" stroke="#ffa200"/>
<use href="#cp" x="384.3" y="116.0" stroke="#ffa200"/>
<use href="#pp" x="372.8" y="123.8" stroke="#ffa200"/>
<use href="#pp" x="382.2" y="109.4" stroke="#f58a10"/>
<use href="#cm" x="373.5" y="113.3" stroke="#f58a10"/>
<use href="#cp" x="371.2" y="105.7" stroke="#ffff00"/>
<use href="#cp" x="363.3" y="100.6" stroke="#ffff00"/>
<use href="#cp" x="344.1" y="70.8" stroke="#ffff00"/>
<use href="#pp" x="369.3" y="100.8" stroke="#ffc400"/>
<use href="#cp" x="383.0" y="74.0" stroke="#ffff00"/>
<use href="#cm" x="370.0" y="100.9" stroke="#ffe400"/>
<use href="#mm" x="359.2" y="90.8" stroke="#ffff00"/>
<use href="#mm" x="355.5" y="94.0" stroke="#ffe400"/>
<use href="#cp" x="380.0" y="99.7" stroke="#ffff00"/>
<use href="#cm" x="371.4" y="95.2" stroke="#ffff00"/>
<use href="#mm" x="363.0" y="87.9" stroke="#ffff00"/>
<use href="#cm" x="362.9" y="78.5" stroke="#ffd200"/>
<use href="#cp" x="375.7" y="97.7" stroke="#ffff00"/>
<use href="#cp" x="368.7" y="84.5" stroke="#ffd200"/>
<use href="#mm" x="354.6" y="83.5" stroke="#ffff00"/>
<use href="#cm" x="395.2" y="91.4" stroke="#ffff00"/>
<use href="#mm" x="337.3" y="88.9" stroke="#ffff00"/>
<use href="#cp" x="373.2" y="82.5" stroke="#ffff00"/>
<use href="#mm" x="392.9" y="83.3" stroke="#ffff00"/>
<use href="#mm" x="369.2" y="76.8" stroke="#ffc400"/>
<use href="#cp" x="372.4" y="80.6" stroke="#ffe400"/>
<use href="#cp" x="366.2" y="69.9" stroke="#ffc400"/>
<use href="#cp" x="336.1" y="98.4" stroke="#ffd200"/>
<use href="#mm" x="341.9" y="101.8" stroke="#ffc400"/>
<use href="#mm" x="320.7" y="100.2" stroke="#ffd200"/>
<use href="#mm" x="349.0" y="90.1" stroke="#ffff00"/>
<use href="#pp" x="381.9" y="89.4" stroke="#ffff00"/>
<use href="#mm" x="388.5" y="86.3" stroke="#ffe400"/>
<use href="#cp" x="347.6" y="99.6" stroke="#ffff00"/>
<use href="#cm" x="373.9" y="91.6" stroke="#ffff00"/>
<use href="#cm" x="367.3" y="95.9" stroke="#ffe400"/>
<use href="#pp" x="357.4" y="82.4" stroke="#ffff00"/>
<use href="#cm" x="379.1" y="100.1" stroke="#ffc400"/>
<use href="#cp" x="362.8" y="82.4" stroke="#ffc400"/>
<use href="#cm" x="369.7" y="102.6" stroke="#ffff00"/>
<use href="#mm" x="325.1" y="92.2" stroke="#ffff00"/>
<use href="#cp" x="358.3" y="74.1" stroke="#ffff00"/>
<use href="#cp" x="340.7" y="99.0" stroke="#ffff00"/>
<use href="#cp" x="350.5" y="97.9" stroke="#ffff00"/>
<use href="#cp" x="342.6" y="89.7" stroke="#ffff00"/>
<use href="#cm" x="353.6" y="93.6" stroke="#ffd200"/>
<use href="#cp" x="366.3" y="85.4" stroke="#ffc400"/>
<use href="#mm" x="359.7" y="106.5" stroke="#ffff00"/>
<use href="#cm" x="324.3" y="97.3" stroke="#ffff00"/>
<use href="#mm" x="345.2" y="95.8" stroke="#ffff00"/>
<use href="#cm" x="360.7" y="95.6" stroke="#ffff00"/>
<use href="#mm" x="359.3" y="81.8" stroke="#ffd200"/>
<use href="#mm" x="377.4" y="97.8" stroke="#ffc400"/>
<use href="#cp" x="343.2" y="84.1" stroke="#ffc400"/>
<use href="#cp" x="319.3" y="86.6" stroke="#ffff00"/>
<use href="#mm" x="372.1" y="91.5" stroke="#ffff00"/>
<use href="#mm" x="389.9" y="79.2" stroke="#ffd200"/>
<use href="#cp" x="392.2" y="76.9" stroke="#ffd200"/>
<use href="#mm" x="318.4" y="112.2" stroke="#ffff00"/>
<use href="#cp" x="336.9" y="109.8" stroke="#ffe400"/>
<use href="#mm" x="389.5" y="97.7" stroke="#ffe400"/>
<use href="#cp" x="376.9" y="92.0" stroke="#ffff00"/>
<use href="#pp" x="328.7" y="109.8" stroke="#ffff00"/>
<use href="#cm" x="366.3" y="85.3" stroke="#ffff00"/>
<use href="#mm" x="367.5" y="83.3" stroke="#ffe400"/>
<use href="#cp" x="335.9" y="82.6" stroke="#ffff00"/>
<use href="#cm" x="321.4" y="116.5" stroke="#ffe400"/>
<use href="#mm" x="329.4" y="85.8" stroke="#ffff00"/>
<use href="#cm" x="331.4" y="93.6" stroke="#ffe400"/>
<use href="#cp" x="359.2" y="101.0" stroke="#ffff00"/>
<use href="#pp" x="349.8" y="103.3" stroke="#ffc400"/>
<use href="#mm" x="400.3" y="90.8" stroke="#ffff00"/>
<use href="#pp" x="361.2" y="84.5" stroke="#ffff00"/>
<use href="#cp" x="388.5" y="93.5" stroke="#ffff00"/>
<use href="#mm" x="355.7" y="92.9" stroke="#ffc400"/>
<use href="#cp" x="386.1" y="98.4" stroke="#ffff00"/>
<use href="#mm" x="377.7" y="92.4" stroke="#ffff00"/>
<use href="#cp" x="360.2" y="91.7" stroke="#ffff00"/>
<use href="#cm" x="361.0" y="80.0" stroke="#ffd200"/>
<use href="#mm" x="372.8" y="84.0" stroke="#ffd200"/>
<use href="#mm" x="398.7" y="88.6" stroke="#ffff00"/>
<use href="#pp" x="397.9" y="96.0" stroke="#ffd200"/>
<use href="#mm" x="377.2" y="93.8" stroke="#ffff00"/>
<use href="#pp" x="355.6" y="79.8" stroke="#ffff00"/>
<use href="#cp" x="380.2" y="84.4" stroke="#ffc400"/>
<use href="#cp" x="370.5" y="94.8" stroke="#ffe400"/>
<use href="#mm" x="352.5" y="86.2" stroke="#ffff00"/>
<use href="#cp" x="394.5" y="96.4" stroke="#ffc400"/>
<use href="#pp" x="327.2" y="86.3" stroke="#ffff00"/>
<use href="#mm" x="380.8" y="82.3" stroke="#ffd200"/>
<use href="#cm" x="359.6" y="88.0" stroke="#ffff00"/>
<use href="#cp" x="361.7" y="83.7" stroke="#ffe400"/>
<use href="#mm" x="368.5" y="97.5" stroke="#ffe400"/>
<use href="#cp" x="352.7" y="87.5" stroke="#ffc400"/>
<use href="#mm" x="386.8" y="103.8" stroke="#ffc400"/>
<use href="#pp" x="382.5" y="86.0" stroke="#ffff00"/>
<use href="#mm" x="371.4" y="89.6" stroke="#ffd200"/>
<use href="#cp" x="397.0" y="94.1" stroke="#ffe400"/>
<use href="#cp" x="336.2" y="101.5" stroke="#ffd200"/>
<use href="#cm" x="375.6" y="81.1" stroke="#ffff00"/>
<use href="#cp" x="354.0" y="93.0" stroke="#ffff00"/>
<use href="#cm" x="366.6" y="92.3" stroke="#ffff00"/>
<use href="#cp" x="329.8" y="105.9" stroke="#ffff00"/>
<use href="#pp" x="353.1" y="78.3" stroke="#ffc400"/>
<use href="#pp" x="357.5" y="88.5" stroke="#ffd200"/>
<use href="#mm" x="340.4" y="97.6" stroke="#ffc400"/>
<use href="#mm" x="353.9" y="81.6" stroke="#ffc400"/>
<use href="#cp" x="377.5" y="77.3" stroke="#ffc400"/>
<use href="#cm" x="373.3" y="98.7" stroke="#ffd200"/>
<use href="#mm" x="355.3" y="82.0" stroke="#ffc400"/>
<use href="#pp" x="307.7" y="91.7" stroke="#ffff00"/>
<use href="#cp" x="385.7" y="73.9" stroke="#ffd200"/>
<use href="#mm" x="369.3" y="105.2" stroke="#ffff00"/>
<use href="#mm" x="363.2" y="89.5" stroke="#ffc400"/>
<use href="#cp" x="360.7" y="101.2" stroke="#ffff00"/>
<use href="#cm" x="350.5" y="91.9" stroke="#ffc400"/>
<use href="#pp" x="381.2" y="97.6" stroke="#ffc400"/>
<use href="#cp" x="345.8" y="97.8" stroke="#ffff00"/>
<use href="#mm" x="343.7" y="106.8" stroke="#ffd200"/>
<use href="#pp" x="394.1" y="78.7" stroke="#ffd200"/>
<use href="#cp" x="349.1" y="78.7" stroke="#ffff00"/>
<use href="#mm" x="345.3" y="92.2" stroke="#ffff00"/>
<use href="#mm" x="325.8" y="96.3" stroke="#ffff00"/>
<use href="#cp" x="351.1" y="83.4" stroke="#ffff00"/>
<use href="#mm" x="341.7" y="85.3" stroke="#ffc400"/>
<use href="#cp" x="360.1" y="92.6" stroke="#ffd200"/>
<use href="#cp" x="305.4" y="83.5" stroke="#ffe400"/>
<use href="#mm" x="343.1" y="94.2" stroke="#ffff00"/>
<use href="#mm" x="344.4" y="80.2" stroke="#ffc400"/>
<use href="#mm" x="389.6" y="93.7" stroke="#ffd200"/>
<use href="#cp" x="341.4" y="79.5" stroke="#ffe400"/>
<use href="#cp" x="386.4" y="98.2" stroke="#ffd200"/>
<use href="#pp" x="374.2" y="78.2" stroke="#ffff00"/>
<use href="#pp" x="358.7" y="98.4" stroke="#ffe400"/>
<use href="#mm" x="375.9" y="79.9" stroke="#ffe400"/>
<use href="#mm" x="342.8" y="85.8" stroke="#ffff00"/>
<use href="#pp" x="368.1" y="70.3" stroke="#ffe400"/>
<use href="#pp" x="346.3" y="89.1" stroke="#ffff00"/>
<use href="#cm" x="388.8" y="89.8" stroke="#ffe400"/>
<use href="#cm" x="381.4" y="84.0" stroke="#ffff00"/>
<use href="#cp" x="354.9" y="76.1" stroke="#ffd200"/>
<use href="#mm" x="344.2" y="91.5" stroke="#ffff00"/>
<use href="#cp" x="371.2" y="100.0" stroke="#ffff00"/>
<use href="#cm" x="356.6" y="105.9" stroke="#ffff00"/>
<use href="#cp" x="388.4" y="95.3" stroke="#ffc400"/>
<use href="#cp" x="331.2" y="103.6" stroke="#ffff00"/>
<use href="#cp" x="392.4" y="92.9" stroke="#ffff00"/>
<use href="#mm" x="363.9" y="97.7" stroke="#ffc400"/>
<use href="#mm" x="354.1" y="97.7" stroke="#ffd200"/>
<use href="#cp" x="356.6" y="119.4" stroke="#ffd200"/>
<use href="#cm" x="310.7" y="96.4" stroke="#ffff00"/>
<use href="#cm" x="338.8" y="86.1" stroke="#ffff00"/>
<use href="#cp" x="358.5" y="104.6" stroke="#ffc400"/>
<use href="#mm" x="370.6" y="93.4" stroke="#ffe400"/>
<use href="#pp" x="302.8" y="82.7" stroke="#ffff00"/>
<use href="#mm" x="371.5" y="98.9" stroke="#ffd200"/>
<use href="#cp" x="348.9" y="99.7" stroke="#ffff00"/>
<use href="#cp" x="335.0" y="97.1" stroke="#ffff00"/>
<use href="#mm" x="371.6" y="90.0" stroke="#ffd200"/>
<use href="#cm" x="386.8" y="97.4" stroke="#ffff00"/>
<use href="#mm" x="384.5" y="88.4" stroke="#ffff00"/>
<use href="#cm" x="376.2" y="81.5" stroke="#ffe400"/>
<use href="#cp" x="365.9" y="102.1" stroke="#ffe400"/>
<use href="#cp" x="357.7" y="70.9" stroke="#ffe400"/>
<use href="#cp" x="381.4" y="95.1" stroke="#ffd200"/>
<use href="#cp" x="372.9" y="89.2" stroke="#ffc400"/>
<use href="#cp" x="387.0" y="101.8" stroke="#ffc400"/>
<use href="#pp" x="354.4" y="102.8" stroke="#ffff00"/>
<use href="#cm" x="372.6" y="113.2" stroke="#ffd200"/>
<use href="#mm" x="375.6" y="95.1" stroke="#ffd200"/>
<use href="#cp" x="356.7" y="70.6" stroke="#ffc400"/>
<use href="#mm" x="379.1" y="93.6" stroke="#ffc400"/>
<use href="#cp" x="317.6" y="92.8" stroke="#ffd200"/>
<use href="#cp" x="336.0" y="102.9" stroke="#ffc400"/>
<use href="#cp" x="363.6" y="83.2" stroke="#ffc400"/>
<use href="#mm" x="385.6" y="104.1" stroke="#ffff00"/>
<use href="#cp" x="346.7" y="101.2" stroke="#ffff00"/>
<use href="#cp" x="363.6" y="105.7" stroke="#ffc400"/>
<use href="#cp" x="382.0" y="86.2" stroke="#ffc400"/>
<use href="#mm" x="361.7" y="84.5" stroke="#ffe400"/>
<use href="#mm" x="350.1" y="102.7" stroke="#ffe400"/>
<use href="#cp" x="376.4" y="87.1" stroke="#ffd200"/>
<use href="#cm" x="379.0" y="91.0" stroke="#ffc400"/>
<use href="#mm" x="359.4" y="91.9" stroke="#ffd200"/>
<use href="#mm" x="390.7" y="95.5" stroke="#ffff00"/>
<use href="#cp" x="360.4" y="93.9" stroke="#ffff00"/>
<use href="#mm" x="364.2" y="110.0" stroke="#ffff00"/>
<use href="#cp" x="334.3" y="110.1" stroke="#ffff00"/>
<use href="#mm" x="365.8" y="106.2" stroke="#ffe400"/>
<use href="#mm" x="366.8" y="82.8" stroke="#ffff00"/>
<use href="#mm" x="326.6" y="92.9" stroke="#ffff00"/>
<use href="#cp" x="344.4" y="93.5" stroke="#ffff00"/>
<use href="#cp" x="352.9" y="100.3" stroke="#ffff00"/>
<use href="#mm" x="355.0" y="87.3" stroke="#ffff00"/>
<use href="#cp" x="367.8" y="89.2" stroke="#ffff00"/>
<use href="#pp" x="337.2" y="87.9" stroke="#ffe400"/>
<use href="#mm" x="317.6" y="82.1" stroke="#ffff00"/>
<use href="#cm" x="361.4" y="79.7" stroke="#ffd200"/>
<use href="#mm" x="351.9" y="91.6" stroke="#ffff00"/>
<use href="#mm" x="356.6" y="88.8" stroke="#ffc400"/>
<use href="#cp" x="385.5" y="92.3" stroke="#ffe400"/>
<use href="#cp" x="320.9" y="94.2" stroke="#ffc400"/>
<use href="#mm" x="383.0" y="83.0" stroke="#ffe400"/>
<use href="#mm" x="313.8" y="102.5" stroke="#ffff00"/>
<use href="#pp" x="341.6" y="89.7" stroke="#ffff00"/>
<use href="#cp" x="359.0" y="103.8" stroke="#ffff00"/>
<use href="#mm" x="359.3" y="108.4" stroke="#ffc400"/>
<use href="#mm" x="354.8" y="100.0" stroke="#ffe400"/>
<use href="#pp" x="360.7" y="94.7" stroke="#ffd200"/>
<use href="#cp" x="369.2" y="93.0" stroke="#ffff00"/>
<use href="#mm" x="365.7" y="111.2" stroke="#ffe400"/>
<use href="#mm" x="350.9" y="91.5" stroke="#ffd200"/>
<use href="#cp" x="354.7" y="98.8" stroke="#ffe400"/>
<use href="#cp" x="353.2" y="90.6" stroke="#ffff00"/>
<use href="#mm" x="318.4" y="94.7" stroke="#ffc400"/>
<use href="#mm" x="387.9" y="101.2" stroke="#ffd200"/>
<use href="#mm" x="371.9" y="77.7" stroke="#ffc400"/>
<use href="#cp" x="330.0" y="90.2" stroke="#ffff00"/>
<use href="#mm" x="359.9" y="93.0" stroke="#ffff00"/>
<use href="#mm" x="378.1" y="75.9" stroke="#ffff00"/>
<use href="#cp" x="377.1" y="98.0" stroke="#ffc400"/>
<use href="#cp" x="390.3" y="78.4" stroke="#ffd200"/>
<use href="#mm" x="371.0" y="109.3" stroke="#ffc400"/>
<use href="#cp" x="388.5" y="94.5" stroke="#ffe400"/>
<use href="#cm" x="358.5" y="91.6" stroke="#ffff00"/>
<use href="#cp" x="360.8" y="77.7" stroke="#ffff00"/>
<use href="#mm" x="386.7" y="100.5" stroke="#ffe400"/>
<use href="#cp" x="365.5" y="97.2" stroke="#ffd200"/>
<use href="#mm" x="395.1" y="86.4" stroke="#ffff00"/>
<use href="#cm" x="377.5" y="73.9" stroke="#ffc400"/>
<use href="#mm" x="384.1" y="82.4" stroke="#ffe400"/>
<use href="#cm" x="347.4" y="91.8" stroke="#ffc400"/>
<use href="#pp" x="374.1" y="104.5" stroke="#ffd200"/>
<use href="#cp" x="345.5" y="104.7" stroke="#ffe400"/>
<use href="#mm" x="357.3" y="86.7" stroke="#ffff00"/>
<use href="#cp" x="337.6" y="94.4" stroke="#ffff00"/>
<use href="#mm" x="386.6" y="109.3" stroke="#ffc400"/>
<use href="#cm" x="361.3" y="74.0" stroke="#ffd200"/>
<use href="#mm" x="344.2" y="89.1" stroke="#ffd200"/>
<use href="#cm" x="327.1" y="100.1" stroke="#ffc400"/>
<use href="#cp" x="355.3" y="95.1" stroke="#ffd200"/>
<use href="#pp" x="362.9" y="94.0" stroke="#ffc400"/>
<use href="#pp" x="391.6" y="97.4" stroke="#ffff00"/>
<use href="#cm" x="359.1" y="88.5" stroke="#ffff00"/>
<use href="#mm" x="374.0" y="100.6" stroke="#ffff00"/>
<use href="#pp" x="342.1" y="72.2" stroke="#ffff00"/>
<use href="#pp" x="357.2" y="87.5" stroke="#ffc400"/>
<use href="#cp" x="347.4" y="103.1" stroke="#ffc400"/>
<use href="#cp" x="357.7" y="70.4" stroke="#ffc400"/>
<use href="#cp" x="359.0" y="109.6" stroke="#ffd200"/>
<use href="#cp" x="339.2" y="91.8" stroke="#ffff00"/>
<use href="#pp" x="366.6" y="85.8" stroke="#ffff00"/>
<use href="#mm" x="391.3" y="88.1" stroke="#ffe400"/>
<use href="#cp" x="325.9" y="95.0" stroke="#ffff00"/>
<use href="#mm" x="377.9" y="100.5" stroke="#ffff00"/>
<use href="#cp" x="346.9" y="91.7" stroke="#ffe400"/>
<use href="#mm" x="350.9" y="92.5" stroke="#ffc400"/>
<use href="#pp" x="362.3" y="85.4" stroke="#ffff00"/>
<use href="#mm" x="363.8" y="90.5" stroke="#ffe400"/>
<use href="#mm" x="376.4" y="79.5" stroke="#ffd200"/>
<use href="#pp" x="343.0" y="77.5" stroke="#ffff00"/>
<use href="#mm" x="355.2" y="75.4" stroke="#ffff00"/>
<use href="#cp" x="373.2" y="88.6" stroke="#ffff00"/>
<use href="#mm" x="364.4" y="90.2" stroke="#ffc400"/>
<use href="#cp" x="389.4" y="84.4" stroke="#ffd200"/>
<use href="#mm" x="384.9" y="96.9" stroke="#ffff00"/>
<use href="#cp" x="333.6" y="95.0" stroke="#ffff00"/>
<use href="#cp" x="335.7" y="108.0" stroke="#ffc400"/>
<use href="#cm" x="367.2" y="98.4" stroke="#ffff00"/>
<use href="#cm" x="345.7" y="97.5" stroke="#ffff00"/>
<use href="#cm" x="357.3" y="87.0" stroke="#ffff00"/>
<use href="#mm" x="387.4" y="78.6" stroke="#ffff00"/>
<use href="#cp" x="372.9" y="77.0" stroke="#ffe400"/>
<use href="#pp" x="375.8" y="106.8" stroke="#ffff00"/>
<use href="#cm" x="379.1" y="94.6" stroke="#ffff00"/>
<use href="#cp" x="367.9" y="73.3" stroke="#ffff00"/>
<use href="#mm" x="365.0" y="122.4" stroke="#ffe400"/>
<use href="#mm" x="359.6" y="69.3" stroke="#ffff00"/>
<use href="#cm" x="368.6" y="106.2" stroke="#ffff00"/>
<use href="#mm" x="355.6" y="103.8" stroke="#ffff00"/>
<use href="#cp" x="377.6" y="104.7" stroke="#ffe400"/>
<use href="#mm" x="373.8" y="106.5" stroke="#ffe400"/>
<use href="#mm" x="357.8" y="79.1" stroke="#ffe400"/>
<use href="#mm" x="329.9" y="89.4" stroke="#ffd200"/>
<use href="#mm" x="358.1" y="86.9" stroke="#ffc400"/>
<use href="#cm" x="311.4" y="101.4" stroke="#ffd200"/>
<use href="#cm" x="387.7" y="89.5" stroke="#ffff00"/>
<use href="#mm" x="362.3" y="84.9" stroke="#ffc400"/>
<use href="#mm" x="395.4" y="77.8" stroke="#ffff00"/>
<use href="#cm" x="371.0" y="91.6" stroke="#ffe400"/>
<use href="#cp" x="355.5" y="102.5" stroke="#ffc400"/>
<use href="#cm" x="358.7" y="106.7" stroke="#ffff00"/>
<use href="#mm" x="365.8" y="94.6" stroke="#ffd200"/>
<use href="#mm" x="345.5" y="100.4" stroke="#ffe400"/>
<use href="#mm" x="358.1" y="95.0" stroke="#ffff00"/>
<use href="#mm" x="390.2" y="85.7" stroke="#ffff00"/>
<use href="#mm" x="336.0" y="88.9" stroke="#ffff00"/>
<use href="#pp" x="356.1" y="95.2" stroke="#ffff00"/>
<use href="#mm" x="359.1" y="89.2" stroke="#ffff00"/>
<use href="#cm" x="342.8" y="97.0" stroke="#ffe400"/>
<use href="#cp" x="351.7" y="97.6" stroke="#ffd200"/>
<use href="#cp" x="373.5" y="121.1" stroke="#ffff00"/>
<use href="#cm" x="368.5" y="96.0" stroke="#ffe400"/>
<use href="#pp" x="358.5" y="85.1" stroke="#ffe400"/>
<use href="#cp" x="361.7" y="96.3" stroke="#ffff00"/>
<use href="#mm" x="340.6" y="82.0" stroke="#ffc400"/>
<use href="#cm" x="392.7" y="76.9" stroke="#ffe400"/>
<use href="#mm" x="345.1" y="91.4" stroke="#ffc400"/>
<use href="#mm" x="372.1" y="86.8" stroke="#ffc400"/>
<use href="#cp" x="374.4" y="76.5" stroke="#ffff00"/>
<use href="#cp" x="372.1" y="100.8" stroke="#ffc400"/>
<use href="#cm" x="318.5" y="86.4" stroke="#ffff00"/>
<use href="#mm" x="367.8" y="107.3" stroke="#ffff00"/>
<use href="#cm" x="344.3" y="87.6" stroke="#ffd200"/>
<use href="#mm" x="346.3" y="101.9" stroke="#ffff00"/>
<use href="#cp" x="368.1" y="102.0" stroke="#ffff00"/>
<use href="#mm" x="353.9" y="80.2" stroke="#ffc400"/>
<use href="#cp" x="382.3" y="87.6" stroke="#ffe400"/>
<use href="#pp" x="372.2" y="107.3" stroke="#ffd200"/>
<use href="#pp" x="339.0" y="82.3" stroke="#ffff00"/>
<use href="#cp" x="327.7" y="95.7" stroke="#ffff00"/>
<use href="#mm" x="379.9" y="94.2" stroke="#ffe400"/>
<use href="#cp" x="339.3" y="101.8" stroke="#ffff00"/>
<use href="#cp" x="361.8" y="80.9" stroke="#ffff00"/>
<use href="#pp" x="346.6" y="100.1" stroke="#ffd200"/>
<use href="#cp" x="368.4" y="101.6" stroke="#ffff00"/>
<use href="#cp" x="367.4" y="91.6" stroke="#ffff00"/>
<use href="#cp" x="387.0" y="77.1" stroke="#ffff00"/>
<use href="#cp" x="370.1" y="88.7" stroke="#ffff00"/>
<use href="#cp" x="327.1" y="99.8" stroke="#ffff00"/>
<use href="#cp" x="341.9" y="100.9" stroke="#ffe400"/>
<use href="#cp" x="346.5" y="76.1" stroke="#ffff00"/>
<use href="#cp" x="348.0" y="86.0" stroke="#ffc400"/>
<use href="#cp" x="369.6" y="102.6" stroke="#ffff00"/>
<use href="#mm" x="350.8" y="104.0" stroke="#ffff00"/>
<use href="#mm" x="338.1" y="87.2" stroke="#ffff00"/>
<use href="#cp" x="339.7" y="87.4" stroke="#ffe400"/>
<use href="#pp" x="371.5" y="77.3" stroke="#ffff00"/>
<use href="#mm" x="386.5" y="91.1" stroke="#ffff00"/>
<use href="#mm" x="395.0" y="80.6" stroke="#ffe400"/>
<use href="#cp" x="335.4" y="94.7" stroke="#ffff00"/>
<use href="#mm" x="312.5" y="92.7" stroke="#ffc400"/>
<use href="#cm" x="359.0" y="89.5" stroke="#ffff00"/>
<use href="#mm" x="374.9" y="98.9" stroke="#ffff00"/>
<use href="#pp" x="360.5" y="98.6" stroke="#ffc400"/>
<use href="#pp" x="370.8" y="99.3" stroke="#ffc400"/>
<use href="#cp" x="357.9" y="87.2" stroke="#ffff00"/>
<use href="#cp" x="335.7" y="94.4" stroke="#ffff00"/>
<use href="#mm" x="346.8" y="80.0" stroke="#ffff00"/>
<use href="#cp" x="383.0" y="76.2" stroke="#ffe400"/>
<use href="#mm" x="365.8" y="98.6" stroke="#ffff00"/>
<use href="#cp" x="360.0" y="100.4" stroke="#ffd200"/>
<use href="#pp" x="376.7" y="99.7" stroke="#ffff00"/>
<use href="#cp" x="367.0" y="100.4" stroke="#ffe400"/>
<use href="#pp" x="388.1" y="87.2" stroke="#ffff00"/>
<use href="#mm" x="355.4" y="91.3" stroke="#ffff00"/>
<use href="#mm" x="347.6" y="95.5" stroke="#ffff00"/>
<use href="#cm" x="344.8" y="95.5" stroke="#ffff00"/>
<use href="#cm" x="357.9" y="98.2" stroke="#ffc400"/>
<use href="#cp" x="354.6" y="82.4" stroke="#ffff00"/>
<use href="#mm" x="365.2" y="105.5" stroke="#ffe400"/>
<use href="#mm" x="361.1" y="96.3" stroke="#ffd200"/>
<use href="#mm" x="362.6" y="107.8" stroke="#ffff00"/>
<use href="#cm" x="380.0" y="93.0" stroke="#ffc400"/>
<use href="#mm" x="377.7" y="90.1" stroke="#ffff00"/>
<use href="#cp" x="352.0" y="82.2" stroke="#ffc400"/>
<use href="#cp" x="360.8" y="89.9" stroke="#ffc400"/>
<use href="#cp" x="369.2" y="107.9" stroke="#ffff00"/>
<use href="#mm" x="351.9" y="84.5" stroke="#ffe400"/>
<use href="#mm" x="340.3" y="83.3" stroke="#ffd200"/>
<use href="#mm" x="349.5" y="77.4" stroke="#ffff00"/>
<use href="#mm" x="386.3" y="108.5" stroke="#ffc400"/>
<use href="#cp" x="343.2" y="79.3" stroke="#ffff00"/>
<use href="#cp" x="357.6" y="81.8" stroke="#ffc400"/>
<use href="#cp" x="370.0" y="92.0" stroke="#ffd200"/>
<use href="#cp" x="354.5" y="98.6" stroke="#ffff00"/>
<use href="#cp" x="377.6" y="95.4" stroke="#ffe400"/>
<use href="#cp" x="361.0" y="85.9" stroke="#ffc400"/>
<use href="#cp" x="371.3" y="92.8" stroke="#ffe400"/>
<use href="#mm" x="369.5" y="111.5" stroke="#ffff00"/>
<use href="#cp" x="317.4" y="98.3" stroke="#ffd200"/>
<use href="#mm" x="377.7" y="89.9" stroke="#ffff00"/>
<use href="#cp" x="364.2" y="69.9" stroke="#ffd200"/>
<use href="#mm" x="364.2" y="95.8" stroke="#ffe400"/>
<use href="#pp" x="353.6" y="98.1" stroke="#ffff00"/>
<use href="#mm" x="319.7" y="103.0" stroke="#ffd200"/>
<use href="#pp" x="369.8" y="86.2" stroke="#ffff00"/>
<use href="#cp" x="348.8" y="78.2" stroke="#ffff00"/>
<use href="#cp" x="376.0" y="81.7" stroke="#ffff00"/>
<use href="#mm" x="335.5" y="90.3" stroke="#ffff00"/>
<use href="#mm" x="340.9" y="92.3" stroke="#ffe400"/>
<use href="#cm" x="376.8" y="93.9" stroke="#ffc400"/>
<use href="#cm" x="366.1" y="111.6" stroke="#ffff00"/>
<use href="#mm" x="339.2" y="100.2" stroke="#ffc400"/>
<use href="#cm" x="357.9" y="81.2" stroke="#ffff00"/>
<use href="#cm" x="375.7" y="105.8" stroke="#ffc400"/>
<use href="#mm" x="363.5" y="88.8" stroke="#ffff00"/>
<use href="#cm" x="334.2" y="107.7" stroke="#ffc400"/>
<use href="#cp" x="374.3" y="96.4" stroke="#ffc400"/>
<use href="#mm" x="364.9" y="92.2" stroke="#ffd200"/>
<use href="#cp" x="335.2" y="95.9" stroke="#ffff00"/>
<use href="#pp" x="361.1" y="97.8" stroke="#ffff00"/>
<use href="#pp" x="358.4" y="78.2" stroke="#ffe400"/>
<use href="#cp" x="396.2" y="96.6" stroke="#ffd200"/>
<use href="#cp" x="368.4" y="94.7" stroke="#ffc400"/>
<use href="#pp" x="368.8" y="96.2" stroke="#ffff00"/>
<use href="#pp" x="379.5" y="94.4" stroke="#ffe400"/>
<use href="#mm" x="329.0" y="96.8" stroke="#ffe400"/>
<use href="#cm" x="359.6" y="88.1" stroke="#ffff00"/>
<use href="#pp" x="358.2" y="104.5" stroke="#ffff00"/>
<use href="#mm" x="316.5" y="92.7" stroke="#ffff00"/>
<use href="#mm" x="347.4" y="82.9" stroke="#ffd200"/>
<use href="#pp" x="340.2" y="106.1" stroke="#ffc400"/>
<use href="#pp" x="355.8" y="104.4" stroke="#ffe400"/>
<use href="#mm" x="369.6" y="80.6" stroke="#ffff00"/>
<use href="#cp" x="349.2" y="79.4" stroke="#ffff00"/>
<use href="#cp" x="377.0" y="95.4" stroke="#ffe400"/>
<use href="#mm" x="318.8" y="88.3" stroke="#ffc400"/>
<use href="#cm" x="371.7" y="94.2" stroke="#ffd200"/>
<use href="#pp" x="384.9" y="101.7" stroke="#ffe400"/>
<use href="#cp" x="350.1" y="112.5" stroke="#ffff00"/>
<use href="#mm" x="356.3" y="94.7" stroke="#ffff00"/>
<use href="#cp" x="374.6" y="88.8" stroke="#ffff00"/>
<use href="#cp" x="361.7" y="87.4" stroke="#ffc400"/>
<use href="#mm" x="388.5" y="105.2" stroke="#ffe400"/>
<use href="#cp" x="385.3" y="110.1" stroke="#ffff00"/>
<use href="#cm" x="375.5" y="83.2" stroke="#ffc400"/>
<use href="#mm" x="348.7" y="106.8" stroke="#ffd200"/>
<use href="#cp" x="347.4" y="81.9" stroke="#ffe400"/>
<use href="#mm" x="328.5" y="94.3" stroke="#ffe400"/>
<use href="#pp" x="368.2" y="84.8" stroke="#ffd200"/>
<use href="#cm" x="363.0" y="101.6" stroke="#ffd200"/>
<use href="#cm" x="355.5" y="115.6" stroke="#ffe400"/>
<use href="#cp" x="365.2" y="89.1" stroke="#ffe400"/>
<use href="#mm" x="387.9" y="91.8" stroke="#ffe400"/>
<use href="#cp" x="374.1" y="84.8" stroke="#ffc400"/>
<use href="#pp" x="369.5" y="93.4" stroke="#ffff00"/>
<use href="#cp" x="354.2" y="82.4" stroke="#ffc400"/>
<use href="#mm" x="318.2" y="90.0" stroke="#ffff00"/>
<use href="#cp" x="347.0" y="90.1" stroke="#ffe400"/>
<use href="#pp" x="363.4" y="101.3" stroke="#ffd200"/>
<use href="#cp" x="378.4" y="88.9" stroke="#ffff00"/>
<use href="#cp" x="359.0" y="66.1" stroke="#ffe400"/>
<use href="#cp" x="355.1" y="102.9" stroke="#ffff00"/>
<use href="#cp" x="366.5" y="94.4" stroke="#ffff00"/>
<use href="#cp" x="346.9" y="90.8" stroke="#ffd200"/>
<use href="#mm" x="389.2" y="106.2" stroke="#ffe400"/>
<use href="#mm" x="372.5" y="91.0" stroke="#ffff00"/>
<use href="#mm" x="348.5" y="74.1" stroke="#ffff00"/>
<use href="#cm" x="361.9" y="92.1" stroke="#ffe400"/>
<use href="#mm" x="367.9" y="79.4" stroke="#ffc400"/>
<use href="#cp" x="361.6" y="77.3" stroke="#ffc400"/>
<use href="#pp" x="352.5" y="101.0" stroke="#ffff00"/>
<use href="#mm" x="368.4" y="101.2" stroke="#ffff00"/>
<use href="#mm" x="342.3" y="95.9" stroke="#ffc400"/>
<use href="#mm" x="333.1" y="93.8" stroke="#ffd200"/>
<use href="#cm" x="375.8" y="106.1" stroke="#ffff00"/>
<use href="#cp" x="386.8" y="93.8" stroke="#ffff00"/>
<use href="#cm" x="355.0" y="96.8" stroke="#ffc400"/>
<use href="#mm" x="331.6" y="85.9" stroke="#ffe400"/>
<use href="#cm" x="377.4" y="91.4" stroke="#ffff00"/>
<use href="#pp" x="339.5" y="122.3" stroke="#ffff00"/>
<use href="#cp" x="383.6" y="98.6" stroke="#ffd200"/>
<use href="#cm" x="333.9" y="87.6" stroke="#ffc400"/>
<use href="#cp" x="370.8" y="80.7" stroke="#ffc400"/>
<use href="#mm" x="357.4" y="85.9" stroke="#ffff00"/>
<use href="#mm" x="360.1" y="99.3" stroke="#ffff00"/>
<use href="#mm" x="344.9" y="97.1" stroke="#ffc400"/>
<use href="#mm" x="327.6" y="87.3" stroke="#ffff00"/>
<use href="#cp" x="394.6" y="95.6" stroke="#ffff00"/>
<use href="#mm" x="336.0" y="96.3" stroke="#ffff00"/>
<use href="#mm" x="387.7" y="76.8" stroke="#ffc400"/>
<use href="#pp" x="342.7" y="80.7" stroke="#ffff00"/>
<use href="#cm" x="334.2" y="97.5" stroke="#ffff00"/>
<use href="#pp" x="370.3" y="78.8" stroke="#ffe400"/>
<use href="#cp" x="327.6" y="90.4" stroke="#ffd200"/>
<use href="#cp" x="357.8" y="84.0" stroke="#ffff00"/>
<use href="#pp" x="368.7" y="95.2" stroke="#ffe400"/>
<use href="#mm" x="384.0" y="97.8" stroke="#ffff00"/>
<use href="#cm" x="320.4" y="100.2" stroke="#ffc400"/>
<use href="#mm" x="339.1" y="92.7" stroke="#ffd200"/>
<use href="#cm" x="348.6" y="67.5" stroke="#ffe400"/>
<use href="#cm" x="372.4" y="90.5" stroke="#ffff00"/>
<use href="#mm" x="362.0" y="104.7" stroke="#ffff00"/>
<use href="#cp" x="394.3" y="91.9" stroke="#ffff00"/>
<use href="#pp" x="352.5" y="85.6" stroke="#ffc400"/>
<use href="#cm" x="349.9" y="110.0" stroke="#ffe400"/>
<use href="#mm" x="355.4" y="97.9" stroke="#ffff00"/>
<use href="#pp" x="382.5" y="102.9" stroke="#ffff00"/>
<use href="#mm" x="359.4" y="88.5" stroke="#ffff00"/>
<use href="#mm" x="354.7" y="85.4" stroke="#ffff00"/>
<use href="#mm" x="358.5" y="95.1" stroke="#ffc400"/>
<use href="#pp" x="332.8" y="84.7" stroke="#ffd200"/>
<use href="#mm" x="362.5" y="100.5" stroke="#ffff00"/>
<use href="#cp" x="376.3" y="99.1" stroke="#ffff00"/>
<use href="#cp" x="370.6" y="104.8" stroke="#ffc400"/>
<use href="#cp" x="371.6" y="79.0" stroke="#ffff00"/>
<use href="#mm" x="359.9" y="99.6" stroke="#ffff00"/>
<use href="#cp" x="367.7" y="105.7" stroke="#ffe400"/>
<use href="#cp" x="343.6" y="87.9" stroke="#ffff00"/>
<use href="#cp" x="359.0" y="88.2" stroke="#ffff00"/>
<use href="#mm" x="378.2" y="95.9" stroke="#ffe400"/>
<use href="#cp" x="371.3" y="98.2" stroke="#ffff00"/>
<use href="#mm" x="370.1" y="89.2" stroke="#ffc400"/>
<use href="#mm" x="345.5" y="77.9" stroke="#ffc400"/>
<use href="#cp" x="327.7" y="86.7" stroke="#ffff00"/>
<use href="#cp" x="357.1" y="70.1" stroke="#ffff00"/>
<use href="#mm" x="380.4" y="118.9" stroke="#ffd200"/>
<use href="#cp" x="364.5" y="88.4" stroke="#ffd200"/>
<use href="#mm" x="337.2" y="91.7" stroke="#ffc400"/>
<use href="#mm" x="328.8" y="80.5" stroke="#ffc400"/>
<use href="#pp" x="373.7" y="90.9" stroke="#ffff00"/>
<use href="#mm" x="353.7" y="78.5" stroke="#ffff00"/>
<use href="#cp" x="366.0" y="100.7" stroke="#ffff00"/>
<use href="#cp" x="367.0" y="91.7" stroke="#ffff00"/>
<use href="#cm" x="357.5" y="108.0" stroke="#ffe400"/>
<use href="#mm" x="350.9" y="119.9" stroke="#ffff00"/>
<use href="#mm" x="342.6" y="73.1" stroke="#ffd200"/>
<use href="#mm" x="344.6" y="88.8" stroke="#ffe400"/>
<use href="#mm" x="372.7" y="101.4" stroke="#ffe400"/>
<use href="#cp" x="379.3" y="72.7" stroke="#ffe400"/>
<use href="#cp" x="391.0" y="77.5" stroke="#ffff00"/>
<use href="#cp" x="381.0" y="69.4" stroke="#ffff00"/>
<use href="#mm" x="380.8" y="74.2" stroke="#ffe400"/>
<use href="#cm" x="353.8" y="92.5" stroke="#ffe400"/>
<use href="#mm" x="333.0" y="100.8" stroke="#ffff00"/>
<use href="#cp" x="352.7" y="98.7" stroke="#ffff00"/>
<use href="#cp" x="335.2" y="80.7" stroke="#ffd200"/>
<use href="#mm" x="360.9" y="77.0" stroke="#ffd200"/>
<use href="#mm" x="354.2" y="102.7" stroke="#ffd200"/>
<use href="#mm" x="385.1" y="87.4" stroke="#ffd200"/>
<use href="#pp" x="385.2" y="110.4" stroke="#ffd200"/>
<use href="#cp" x="368.1" y="93.9" stroke="#ffd200"/>
<use href="#mm" x="350.4" y="80.6" stroke="#ffe400"/>
<use href="#mm" x="359.1" y="100.3" stroke="#ffff00"/>
<use href="#mm" x="390.2" y="90.9" stroke="#ffff00"/>
<use href="#cm" x="331.8" y="104.8" stroke="#ffc400"/>
<use href="#cp" x="387.6" y="80.2" stroke="#ffc400"/>
<use href="#mm" x="378.2" y="104.1" stroke="#ffff00"/>
<use href="#mm" x="364.9" y="89.7" stroke="#ffff00"/>
<use href="#cp" x="313.7" y="104.4" stroke="#ffc400"/>
<use href="#mm" x="365.8" y="103.7" stroke="#ffe400"/>
<use href="#mm" x="362.2" y="79.0" stroke="#ffc400"/>
<use href="#mm" x="395.8" y="81.5" stroke="#ffc400"/>
<use href="#cp" x="372.5" y="91.4" stroke="#ffff00"/>
<use href="#cp" x="397.4" y="83.2" stroke="#ffd200"/>
<use href="#mm" x="358.1" y="72.9" stroke="#ffff00"/>
<use href="#cp" x="363.0" y="93.5" stroke="#ffc400"/>
<use href="#cm" x="346.3" y="104.7" stroke="#ffff00"/>
<use href="#mm" x="338.6" y="102.4" stroke="#ffd200"/>
<use href="#pp" x="345.0" y="101.6" stroke="#ffd200"/>
<use href="#cp" x="388.4" y="90.8" stroke="#ffe400"/>
<use href="#mm" x="381.7" y="100.3" stroke="#ffe400"/>
<use href="#mm" x="387.5" y="98.9" stroke="#ffe400"/>
<use href="#cm" x="372.9" y="103.1" stroke="#ffff00"/>
<use href="#mm" x="389.3" y="86.0" stroke="#ffc400"/>
<use href="#mm" x="323.5" y="86.9" stroke="#ffd200"/>
<use href="#cm" x="339.7" y="100.0" stroke="#ffff00"/>
<use href="#pp" x="380.6" y="97.1" stroke="#ffe400"/>
<use href="#cp" x="318.9" y="90.6" stroke="#ffff00"/>
<use href="#pp" x="369.8" y="91.7" stroke="#ffc400"/>
<use href="#cp" x="394.4" y="79.7" stroke="#ffc400"/>
<use href="#pp" x="368.8" y="91.8" stroke="#ffe400"/>
<use href="#mm" x="355.9" y="91.2" stroke="#ffd200"/>
<use href="#cm" x="381.9" y="90.1" stroke="#ffff00"/>
<use href="#cp" x="383.3" y="90.7" stroke="#ffff00"/>
<use href="#cp" x="337.5" y="110.0" stroke="#ffff00"/>
<use href="#cm" x="362.3" y="103.7" stroke="#ffe400"/>
<use href="#pp" x="345.3" y="94.5" stroke="#ffe400"/>
<use href="#cp" x="361.0" y="102.5" stroke="#ffc400"/>
<use href="#cp" x="367.4" y="85.4" stroke="#ffe400"/>
<use href="#cp" x="380.4" y="89.7" stroke="#ffc400"/>
<use href="#cm" x="364.5" y="80.9" stroke="#ffff00"/>
<use href="#cp" x="363.0" y="113.1" stroke="#ffc400"/>
<use href="#cp" x="379.1" y="73.1" stroke="#ffff00"/>
<use href="#cp" x="345.7" y="89.7" stroke="#ffff00"/>
<use href="#pp" x="391.4" y="104.7" stroke="#ffff00"/>
<use href="#cp" x="329.8" y="90.7" stroke="#ffc400"/>
<use href="#mm" x="370.5" y="102.4" stroke="#ffd200"/>
<use href="#mm" x="359.2" y="79.9" stroke="#ffe400"/>
<use href="#cp" x="379.7" y="87.9" stroke="#ffff00"/>
<use href="#mm" x="342.3" y="102.6" stroke="#ffd200"/>
<use href="#mm" x="371.9" y="84.3" stroke="#ffd200"/>
<use href="#cp" x="351.0" y="104.0" stroke="#ffc400"/>
<use href="#cp" x="324.3" y="105.1" stroke="#ffff00"/>
<use href="#mm" x="372.4" y="104.7" stroke="#ffe400"/>
<use href="#mm" x="349.1" y="76.5" stroke="#ffd200"/>
<use href="#mm" x="351.8" y="88.2" stroke="#ffff00"/>
<use href="#pp" x="361.6" y="93.1" stroke="#ffff00"/>
<use href="#mm" x="386.4" y="90.1" stroke="#ffff00"/>
<use href="#mm" x="357.7" y="89.9" stroke="#ffd200"/>
<use href="#cm" x="394.0" y="90.8" stroke="#ffff00"/>
<use href="#cp" x="389.1" y="82.8" stroke="#ffd200"/>
<use href="#cp" x="389.4" y="76.6" stroke="#ffff00"/>
<use href="#pp" x="386.0" y="79.7" stroke="#ffc400"/>
<use href="#mm" x="354.1" y="82.8" stroke="#ffd200"/>
<use href="#cp" x="364.1" y="99.5" stroke="#ffff00"/>
<use href="#mm" x="376.0" y="86.9" stroke="#ffd200"/>
<use href="#mm" x="362.0" y="84.9" stroke="#ffd200"/>
<use href="#cp" x="395.7" y="98.9" stroke="#ffff00"/>
<use href="#mm" x="339.1" y="86.2" stroke="#ffff00"/>
<use href="#mm" x="352.2" y="74.6" stroke="#ffff00"/>
<use href="#cm" x="374.0" y="87.0" stroke="#ffff00"/>
<use href="#pp" x="377.4" y="112.4" stroke="#ffff00"/>
<use href="#mm" x="335.3" y="88.5" stroke="#ffff00"/>
<use href="#mm" x="360.2" y="91.3" stroke="#ffff00"/>
<use href="#mm" x="390.6" y="91.4" stroke="#ffff00"/>
<use href="#cp" x="368.9" y="89.9" stroke="#ffff00"/>
<use href="#mm" x="353.2" y="94.3" stroke="#ffcc00"/>
<use href="#cp" x="371.5" y="86.4" stroke="#ffff00"/>
<use href="#pp" x="334.1" y="90.1" stroke="#ffff00"/>
<use href="#cm" x="359.0" y="91.2" stroke="#ffcc00"/>
<use href="#cm" x="363.6" y="117.8" stroke="#ffff00"/>
<use href="#pp" x="375.7" y="81.4" stroke="#ffff00"/>
<use href="#cp" x="386.2" y="94.3" stroke="#ffff00"/>
<use href="#cm" x="381.5" y="79.3" stroke="#ffff00"/>
<use href="#mm" x="364.5" y="97.5" stroke="#ffcc00"/>
<use href="#mm" x="374.7" y="105.4" stroke="#ffff00"/>
<use href="#mm" x="377.6" y="78.2" stroke="#ffcc00"/>
<use href="#mm" x="387.3" y="99.5" stroke="#ffff00"/>
<use href="#cp" x="360.1" y="93.4" stroke="#ffff00"/>
<use href="#cp" x="376.5" y="88.5" stroke="#ffff00"/>
<use href="#mm" x="370.9" y="100.3" stroke="#ffff00"/>
<use href="#cm" x="366.9" y="92.8" stroke="#ffff00"/>
<use href="#cp" x="383.5" y="88.7" stroke="#ffff00"/>
<use href="#cp" x="343.1" y="90.4" stroke="#ffff00"/>
<use href="#mm" x="382.8" y="80.2" stroke="#ffff00"/>
<use href="#mm" x="370.3" y="99.1" stroke="#ffcc00"/>
<use href="#mm" x="357.3" y="86.1" stroke="#ffff00"/>
<use href="#cm" x="358.5" y="89.3" stroke="#ffcc00"/>
<use href="#pp" x="390.4" y="89.8" stroke="#ffff00"/>
<use href="#cp" x="387.7" y="98.1" stroke="#ffcc00"/>
<use href="#cm" x="363.2" y="93.0" stroke="#ffff00"/>
<use href="#mm" x="365.9" y="82.7" stroke="#ffff00"/>
<use href="#cp" x="366.8" y="104.4" stroke="#ffff00"/>
<use href="#mm" x="361.2" y="100.4" stroke="#ffff00"/>
<use href="#cm" x="356.7" y="101.5" stroke="#ffcc00"/>
<use href="#cm" x="380.2" y="92.0" stroke="#ffff00"/>
<use href="#cm" x="373.2" y="92.8" stroke="#ffff00"/>
<use href="#mm" x="392.1" y="94.1" stroke="#ffcc00"/>
<use href="#mm" x="343.7" y="89.0" stroke="#ffff00"/>
<use href="#cp" x="364.6" y="94.2" stroke="#ffcc00"/>
<use href="#cp" x="365.0" y="114.3" stroke="#ffff00"/>
<use href="#cp" x="373.7" y="95.4" stroke="#ffcc00"/>
<use href="#mm" x="359.9" y="98.9" stroke="#ffff00"/>
<use href="#cp" x="377.6" y="97.4" stroke="#ffff00"/>
<use href="#cp" x="378.0" y="85.3" stroke="#ffff00"/>
<use href="#cp" x="394.1" y="84.4" stroke="#ffff00"/>
<use href="#cm" x="383.5" y="86.0" stroke="#ffcc00"/>
<use href="#cp" x="384.1" y="98.8" stroke="#ffff00"/>
<use href="#pp" x="372.2" y="91.4" stroke="#ffff00"/>
<use href="#cm" x="357.3" y="103.1" stroke="#ffcc00"/>
<use href="#cp" x="389.6" y="78.8" stroke="#ffff00"/>
<use href="#cm" x="382.4" y="84.3" stroke="#ffff00"/>
<use href="#cp" x="373.0" y="87.9" stroke="#ffff00"/>
<use href="#pp" x="362.9" y="82.1" stroke="#ffcc00"/>
<use href="#cp" x="376.7" y="93.2" stroke="#ffcc00"/>
<use href="#cp" x="360.8" y="90.3" stroke="#ffff00"/>
<use href="#cm" x="376.0" y="90.4" stroke="#ffff00"/>
<use href="#mm" x="368.3" y="86.9" stroke="#ffff00"/>
<use href="#cp" x="369.3" y="73.8" stroke="#ffcc00"/>
<use href="#cm" x="371.4" y="87.2" stroke="#ffcc00"/>
<use href="#pp" x="355.6" y="90.5" stroke="#ffcc00"/>
<use href="#cp" x="365.1" y="96.1" stroke="#ffcc00"/>
<use href="#cm" x="369.1" y="95.8" stroke="#ffff00"/>
<use href="#mm" x="375.6" y="96.9" stroke="#ffff00"/>
<use href="#cm" x="343.6" y="91.6" stroke="#ffff00"/>
<use href="#cp" x="366.0" y="96.2" stroke="#ffff00"/>
<use href="#cm" x="373.4" y="80.6" stroke="#ffcc00"/>
<use href="#pp" x="367.9" y="117.0" stroke="#ffff00"/>
<use href="#cp" x="367.6" y="93.2" stroke="#ffcc00"/>
<use href="#mm" x="370.5" y="73.6" stroke="#ffff00"/>
<use href="#cm" x="366.3" y="97.8" stroke="#ffcc00"/>
<use href="#cp" x="375.6" y="76.8" stroke="#ffff00"/>
<use href="#cp" x="349.6" y="91.9" stroke="#ffcc00"/>
<use href="#cp" x="372.3" y="98.4" stroke="#ffff00"/>
<use href="#pp" x="373.1" y="90.7" stroke="#ffff00"/>
<use href="#mm" x="383.8" y="91.2" stroke="#ffff00"/>
<use href="#cp" x="374.3" y="82.1" stroke="#ffff00"/>
<use href="#cp" x="385.5" y="102.6" stroke="#ffcc00"/>
<use href="#cm" x="376.2" y="91.0" stroke="#ffff00"/>
<use href="#mm" x="382.3" y="93.5" stroke="#ffff00"/>
<use href="#cp" x="370.7" y="93.2" stroke="#ffcc00"/>
<use href="#cp" x="380.5" y="91.6" stroke="#ffff00"/>
<use href="#pp" x="394.6" y="88.6" stroke="#ffcc00"/>
<use href="#cm" x="372.3" y="87.0" stroke="#ffff00"/>
<use href="#cp" x="364.7" y="90.6" stroke="#ffff00"/>
<use href="#cp" x="376.0" y="98.3" stroke="#ffff00"/>
<use href="#mm" x="358.3" y="93.5" stroke="#ffff00"/>
<use href="#mm" x="347.3" y="101.6" stroke="#ffff00"/>
<use href="#cm" x="359.6" y="84.4" stroke="#ffcc00"/>
<use href="#mm" x="372.2" y="83.4" stroke="#ffff00"/>
<use href="#cp" x="371.9" y="104.5" stroke="#ffff00"/>
<use href="#cp" x="357.0" y="87.3" stroke="#ffff00"/>
<use href="#cm" x="370.1" y="107.3" stroke="#ffff00"/>
<use href="#mm" x="367.1" y="98.6" stroke="#ffff00"/>
<use href="#mm" x="358.1" y="95.0" stroke="#ffff00"/>
<use href="#cp" x="372.4" y="87.6" stroke="#ffff00"/>
<use href="#cp" x="375.3" y="98.6" stroke="#ffff00"/>
<use href="#pp" x="378.2" y="88.4" stroke="#ffff00"/>
<use href="#mm" x="353.7" y="86.0" stroke="#ffff00"/>
<use href="#cp" x="353.7" y="107.7" stroke="#ffff00"/>
<use href="#cm" x="367.0" y="100.8" stroke="#ffff00"/>
<use href="#pp" x="370.3" y="95.6" stroke="#ffff00"/>
<use href="#cp" x="371.9" y="84.3" stroke="#ffcc00"/>
<use href="#pp" x="360.7" y="89.0" stroke="#ffff00"/>
<use href="#cp" x="349.4" y="89.0" stroke="#ffff00"/>
<use href="#mm" x="363.5" y="87.7" stroke="#ffcc00"/>
<use href="#cp" x="363.8" y="83.9" stroke="#ffff00"/>
<use href="#pp" x="374.0" y="93.1" stroke="#ffff00"/>
<use href="#cm" x="380.4" y="99.1" stroke="#ffcc00"/>
<use href="#cm" x="367.1" y="98.6" stroke="#ffff00"/>
<use href="#cp" x="347.5" y="105.6" stroke="#ffff00"/>
<use href="#mm" x="361.3" y="99.6" stroke="#ffff00"/>
<use href="#mm" x="368.4" y="77.2" stroke="#ffff00"/>
<use href="#cp" x="374.0" y="83.0" stroke="#ffcc00"/>
<use href="#cp" x="374.0" y="89.2" stroke="#ffff00"/>
<use href="#pp" x="374.1" y="84.7" stroke="#ffff00"/>
<use href="#cp" x="368.8" y="84.7" stroke="#ffcc00"/>
<use href="#mm" x="360.3" y="107.7" stroke="#ffcc00"/>
<use href="#cp" x="355.4" y="93.9" stroke="#ffcc00"/>
<use href="#mm" x="363.4" y="101.1" stroke="#ffff00"/>
<use href="#pp" x="378.0" y="96.0" stroke="#ffcc00"/>
<use href="#mm" x="363.6" y="96.5" stroke="#ffcc00"/>
<use href="#mm" x="379.8" y="82.8" stroke="#ffcc00"/>
<use href="#mm" x="363.3" y="83.6" stroke="#ffff00"/>
<use href="#mm" x="369.7" y="101.4" stroke="#ffff00"/>
<use href="#cp" x="378.9" y="102.4" stroke="#ffff00"/>
<use href="#cp" x="360.0" y="85.4" stroke="#ffff00"/>
<use href="#pp" x="383.5" y="78.7" stroke="#ffcc00"/>
<use href="#mm" x="364.1" y="106.6" stroke="#ffff00"/>
<use href="#pp" x="374.3" y="96.7" stroke="#ffff00"/>
<use href="#cp" x="365.9" y="88.7" stroke="#ffff00"/>
<use href="#cp" x="386.4" y="82.0" stroke="#ffff00"/>
<use href="#cp" x="363.3" y="99.7" stroke="#ffff00"/>
<use href="#mm" x="378.2" y="104.8" stroke="#ffff00"/>
<use href="#pp" x="352.7" y="98.2" stroke="#ffff00"/>
<use href="#pp" x="388.2" y="102.8" stroke="#ffcc00"/>
<use href="#cp" x="370.4" y="88.8" stroke="#ffff00"/>
<use href="#mm" x="391.2" y="93.4" stroke="#ffcc00"/>
<use href="#pp" x="375.1" y="77.0" stroke="#ffff00"/>
<use href="#pp" x="363.3" y="78.9" stroke="#ffcc00"/>
<use href="#mm" x="368.2" y="83.7" stroke="#ffcc00"/>
<use href="#cp" x="392.7" y="88.6" stroke="#ffcc00"/>
<use href="#cm" x="375.5" y="90.8" stroke="#ffff00"/>
<use href="#cp" x="346.4" y="86.6" stroke="#ffcc00"/>
<use href="#mm" x="380.4" y="81.2" stroke="#ffff00"/>
<use href="#mm" x="372.6" y="86.3" stroke="#ffff00"/>
<use href="#cm" x="392.0" y="87.2" stroke="#ffcc00"/>
<use href="#pp" x="363.6" y="88.7" stroke="#ffcc00"/>
<use href="#pp" x="373.4" y="98.3" stroke="#ffcc00"/>
<use href="#cp" x="380.9" y="103.8" stroke="#ffcc00"/>
<use href="#cp" x="383.9" y="103.7" stroke="#ffcc00"/>
<use href="#cm" x="372.4" y="84.2" stroke="#ffff00"/>
<use href="#mm" x="367.2" y="93.3" stroke="#ffcc00"/>
<use href="#cm" x="366.3" y="93.9" stroke="#ffff00"/>
<use href="#cp" x="368.5" y="85.9" stroke="#ffff00"/>
<use href="#mm" x="364.9" y="99.6" stroke="#ffcc00"/>
<use href="#cp" x="387.7" y="98.5" stroke="#ffcc00"/>
<use href="#mm" x="374.6" y="91.1" stroke="#ffcc00"/>
<use href="#mm" x="367.0" y="79.5" stroke="#ffff00"/>
<use href="#cp" x="380.0" y="109.8" stroke="#ffcc00"/>
<use href="#mm" x="366.6" y="91.1" stroke="#ffcc00"/>
<use href="#mm" x="375.6" y="93.7" stroke="#ffcc00"/>
<use href="#mm" x="374.3" y="86.5" stroke="#ffff00"/>
<use href="#cp" x="364.6" y="89.2" stroke="#ffe400"/>
<use href="#pp" x="347.4" y="87.7" stroke="#ffe400"/>
<use href="#pp" x="338.7" y="81.7" stroke="#ffc400"/>
<use href="#cp" x="337.0" y="90.6" stroke="#ffc400"/>
<use href="#cp" x="352.8" y="100.0" stroke="#ffff00"/>
<use href="#mm" x="344.5" y="93.2" stroke="#ffe400"/>
<use href="#mm" x="319.8" y="97.9" stroke="#ffe400"/>
<use href="#cp" x="343.1" y="100.4" stroke="#ffff00"/>
<use href="#pp" x="337.0" y="86.2" stroke="#ffc400"/>
<use href="#mm" x="340.0" y="95.7" stroke="#ffff00"/>
<use href="#cp" x="343.3" y="84.7" stroke="#ffff00"/>
<use href="#mm" x="332.4" y="84.6" stroke="#ffff00"/>
<use href="#mm" x="358.6" y="75.2" stroke="#ffc400"/>
<use href="#cp" x="331.6" y="88.3" stroke="#ffc400"/>
<use href="#cp" x="340.0" y="98.8" stroke="#ffc400"/>
<use href="#cp" x="343.9" y="97.0" stroke="#ffc400"/>
<use href="#cp" x="333.0" y="89.0" stroke="#ffc400"/>
<use href="#mm" x="338.3" y="89.2" stroke="#ffff00"/>
<use href="#cp" x="345.4" y="81.6" stroke="#ffe400"/>
<use href="#cp" x="346.6" y="93.2" stroke="#ffe400"/>
<use href="#cp" x="368.3" y="86.6" stroke="#ffe400"/>
<use href="#cp" x="350.7" y="92.1" stroke="#ffe400"/>
<use href="#mm" x="352.6" y="98.2" stroke="#ffe400"/>
<use href="#cp" x="338.1" y="89.6" stroke="#ffe400"/>
<use href="#pp" x="328.4" y="98.1" stroke="#ffc400"/>
<use href="#cm" x="344.1" y="86.4" stroke="#ffff00"/>
<use href="#mm" x="353.7" y="86.1" stroke="#ffc400"/>
<use href="#mm" x="335.3" y="87.5" stroke="#ffc400"/>
<use href="#mm" x="328.0" y="93.8" stroke="#ffe400"/>
<use href="#cp" x="344.2" y="89.3" stroke="#ffe400"/>
<use href="#mm" x="349.1" y="85.2" stroke="#ffe400"/>
<use href="#cp" x="349.1" y="88.1" stroke="#ffc400"/>
<use href="#pp" x="335.5" y="114.5" stroke="#ffe400"/>
<use href="#mm" x="338.3" y="96.8" stroke="#ffff00"/>
<use href="#mm" x="346.2" y="90.5" stroke="#ffc400"/>
<use href="#mm" x="345.5" y="104.1" stroke="#ffff00"/>
<use href="#cp" x="349.2" y="99.2" stroke="#ffff00"/>
<use href="#mm" x="353.8" y="81.0" stroke="#ffc400"/>
<use href="#mm" x="362.6" y="98.7" stroke="#ffff00"/>
<use href="#mm" x="362.3" y="89.7" stroke="#ffe400"/>
<use href="#cm" x="342.8" y="84.7" stroke="#ffff00"/>
<use href="#cm" x="342.6" y="90.6" stroke="#ffff00"/>
<use href="#pp" x="344.4" y="97.2" stroke="#ffc400"/>
<use href="#cp" x="340.7" y="105.2" stroke="#ffe400"/>
<use href="#cm" x="344.3" y="100.1" stroke="#ffc400"/>
<use href="#mm" x="344.7" y="93.5" stroke="#ffff00"/>
<use href="#mm" x="338.4" y="97.1" stroke="#ffff00"/>
<use href="#cp" x="331.4" y="97.6" stroke="#ffc400"/>
<use href="#mm" x="366.7" y="91.8" stroke="#ffe400"/>
<use href="#mm" x="354.2" y="98.8" stroke="#ffc400"/>
<use href="#cp" x="326.4" y="95.7" stroke="#ffc400"/>
<use href="#cp" x="319.4" y="94.5" stroke="#ffe400"/>
<use href="#mm" x="361.2" y="94.1" stroke="#ffe400"/>
<use href="#cm" x="343.2" y="101.6" stroke="#ffc400"/>
<use href="#cp" x="345.7" y="84.8" stroke="#ffff00"/>
<use href="#cp" x="339.4" y="93.3" stroke="#ffff00"/>
<use href="#cp" x="339.4" y="97.2" stroke="#ffe400"/>
<use href="#mm" x="339.7" y="91.7" stroke="#ffff00"/>
<use href="#mm" x="327.2" y="94.5" stroke="#ffe400"/>
<use href="#mm" x="331.3" y="98.0" stroke="#ffff00"/>
<use href="#cm" x="369.3" y="98.0" stroke="#ffe400"/>
<use href="#pp" x="356.2" y="93.5" stroke="#ffff00"/>
<use href="#cp" x="342.1" y="88.0" stroke="#ffff00"/>
<use href="#cp" x="354.8" y="88.6" stroke="#ffc400"/>
<use href="#mm" x="320.7" y="99.5" stroke="#ffe400"/>
<use href="#pp" x="360.5" y="100.4" stroke="#ffe400"/>
<use href="#cm" x="357.6" y="98.6" stroke="#ffe400"/>
<use href="#mm" x="339.7" y="100.0" stroke="#ffff00"/>
<use href="#cp" x="348.9" y="88.3" stroke="#ffff00"/>
<use href="#cm" x="335.5" y="88.2" stroke="#ffff00"/>
<use href="#cp" x="350.8" y="101.7" stroke="#ffe400"/>
<use href="#pp" x="351.7" y="78.7" stroke="#ffc400"/>
<use href="#cm" x="339.9" y="94.2" stroke="#ffc400"/>
<use href="#mm" x="336.0" y="92.1" stroke="#ffff00"/>
<use href="#cp" x="334.9" y="83.5" stroke="#ffe400"/>
<use href="#mm" x="352.7" y="99.0" stroke="#ffe400"/>
<use href="#pp" x="328.0" y="92.3" stroke="#ffff00"/>
<use href="#mm" x="345.8" y="99.9" stroke="#ffc400"/>
<use href="#mm" x="336.1" y="98.5" stroke="#ffe400"/>
<use href="#cm" x="340.0" y="85.2" stroke="#ffe400"/>
<use href="#mm" x="349.3" y="92.1" stroke="#ffe400"/>
<use href="#cm" x="349.8" y="86.0" stroke="#ffc400"/>
<use href="#pp" x="348.6" y="91.0" stroke="#ffe400"/>
<use href="#mm" x="332.0" y="102.0" stroke="#ffe400"/>
<use href="#cm" x="361.0" y="89.7" stroke="#ffc400"/>
<use href="#pp" x="343.8" y="81.8" stroke="#ffe400"/>
<use href="#cp" x="357.5" y="83.2" stroke="#ffff00"/>
<use href="#mm" x="334.8" y="82.7" stroke="#ffff00"/>
<use href="#cp" x="354.6" y="100.4" stroke="#ffc400"/>
<use href="#cm" x="334.8" y="95.4" stroke="#ffff00"/>
<use href="#cp" x="332.9" y="97.2" stroke="#ffc400"/>
<use href="#mm" x="352.1" y="84.2" stroke="#ffff00"/>
<use href="#mm" x="349.1" y="85.5" stroke="#ffc400"/>
<use href="#pp" x="360.8" y="102.0" stroke="#ffc400"/>
<use href="#pp" x="355.0" y="95.5" stroke="#ffff00"/>
<use href="#cm" x="351.2" y="99.8" stroke="#ffc400"/>
<use href="#pp" x="355.3" y="100.2" stroke="#ffe400"/>
<use href="#cp" x="355.5" y="99.0" stroke="#ffff00"/>
<use href="#mm" x="335.4" y="89.1" stroke="#ffc400"/>
<use href="#cm" x="358.6" y="107.5" stroke="#ffe400"/>
<use href="#cm" x="340.4" y="89.5" stroke="#ffe400"/>
<use href="#pp" x="345.1" y="83.6" stroke="#ffff00"/>
<use href="#cp" x="353.6" y="95.4" stroke="#ffc400"/>
<use href="#mm" x="348.7" y="81.0" stroke="#ffe400"/>
<use href="#cm" x="329.5" y="96.8" stroke="#ffff00"/>
<use href="#pp" x="338.7" y="86.8" stroke="#ffe400"/>
<use href="#mm" x="332.7" y="90.3" stroke="#ffe400"/>
<use href="#mm" x="347.1" y="89.8" stroke="#ffe400"/>
<use href="#cp" x="330.3" y="83.6" stroke="#ffff00"/>
<use href="#cp" x="347.4" y="83.8" stroke="#ffe400"/>
<use href="#cp" x="339.1" y="86.1" stroke="#ffc400"/>
<use href="#cp" x="339.5" y="90.0" stroke="#ffff00"/>
<use href="#cp" x="348.7" y="94.2" stroke="#ffe400"/>
<use href="#pp" x="350.1" y="83.8" stroke="#ffe400"/>
<use href="#cp" x="348.7" y="81.8" stroke="#ffc400"/>
<use href="#mm" x="340.6" y="94.7" stroke="#ffff00"/>
<use href="#cm" x="342.4" y="90.0" stroke="#ffff00"/>
<use href="#mm" x="342.6" y="96.4" stroke="#ffff00"/>
<use href="#cm" x="337.5" y="99.0" stroke="#ffff00"/>
<use href="#mm" x="340.5" y="99.7" stroke="#ffc400"/>
<use href="#cm" x="346.0" y="120.9" stroke="#ffff00"/>
<use href="#pp" x="348.7" y="126.3" stroke="#ffff00"/>
<use href="#mm" x="353.6" y="118.0" stroke="#ffc400"/>
<use href="#mm" x="350.5" y="129.4" stroke="#ffe400"/>
<use href="#cm" x="353.7" y="128.8" stroke="#ffc400"/>
<use href="#cp" x="350.0" y="120.4" stroke="#ffc400"/>
<use href="#cp" x="331.7" y="118.7" stroke="#ffc400"/>
<use href="#cp" x="356.4" y="120.3" stroke="#ffff00"/>
<use href="#mm" x="335.9" y="116.2" stroke="#ffff00"/>
<use href="#cp" x="340.7" y="119.1" stroke="#ffe400"/>
<use href="#cp" x="345.1" y="123.1" stroke="#ffe400"/>
<use href="#cp" x="356.3" y="121.2" stroke="#ffe400"/>
<use href="#cp" x="349.9" y="115.7" stroke="#ffc400"/>
<use href="#cp" x="351.7" y="123.1" stroke="#ffff00"/>
<use href="#cp" x="341.4" y="119.9" stroke="#ffff00"/>
<use href="#mm" x="356.3" y="117.1" stroke="#ffff00"/>
<use href="#mm" x="339.5" y="122.3" stroke="#ffff00"/>
<use href="#mm" x="335.7" y="119.1" stroke="#ffc400"/>
<use href="#pp" x="332.9" y="119.3" stroke="#ffff00"/>
<use href="#cm" x="357.3" y="117.4" stroke="#ffc400"/>
<use href="#cp" x="346.2" y="122.5" stroke="#ffff00"/>
<use href="#cp" x="336.1" y="122.8" stroke="#ffe400"/>
<use href="#cm" x="356.9" y="117.8" stroke="#ffc400"/>
<use href="#cp" x="361.9" y="120.5" stroke="#ffc400"/>
<use href="#cp" x="336.3" y="122.9" stroke="#ffff00"/>
<use href="#mm" x="360.8" y="127.6" stroke="#ffc400"/>
<use href="#cp" x="357.9" y="129.4" stroke="#ffff00"/>
<use href="#cp" x="344.5" y="122.5" stroke="#ffc400"/>
<use href="#cp" x="357.6" y="122.6" stroke="#ffff00"/>
<use href="#pp" x="344.5" y="126.9" stroke="#ffe400"/>
<use href="#mm" x="350.2" y="125.6" stroke="#ffff00"/>
<use href="#cm" x="357.0" y="117.0" stroke="#ffe400"/>
<use href="#cp" x="341.9" y="115.4" stroke="#ffe400"/>
<use href="#cm" x="355.5" y="129.8" stroke="#ffe400"/>
<use href="#mm" x="351.0" y="123.8" stroke="#ffc400"/>
<use href="#mm" x="339.0" y="117.1" stroke="#ffff00"/>
<use href="#mm" x="352.1" y="121.1" stroke="#ffff00"/>
<use href="#pp" x="351.5" y="124.6" stroke="#ffff00"/>
<use href="#mm" x="345.8" y="121.5" stroke="#ffc400"/>
<use href="#pp" x="331.2" y="118.3" stroke="#ffff00"/>
<use href="#cm" x="344.3" y="123.8" stroke="#ffff00"/>
<use href="#pp" x="339.0" y="120.8" stroke="#ffff00"/>
<use href="#cp" x="359.4" y="117.6" stroke="#ffe400"/>
<use href="#cm" x="351.6" y="126.4" stroke="#ffe400"/>
<use href="#pp" x="349.9" y="126.1" stroke="#ffc400"/>
<use href="#mm" x="357.1" y="127.1" stroke="#ffe400"/>
<use href="#pp" x="334.1" y="117.7" stroke="#ffe400"/>
<use href="#mm" x="361.0" y="118.8" stroke="#ffff00"/>
<use href="#cp" x="351.9" y="116.7" stroke="#ffff00"/>
<use href="#cp" x="348.8" y="121.4" stroke="#ffff00"/>
<use href="#pp" x="365.6" y="125.0" stroke="#ffe400"/>
<use href="#mm" x="347.7" y="127.9" stroke="#ffff00"/>
<use href="#cp" x="357.2" y="125.3" stroke="#ffe400"/>
<use href="#mm" x="342.0" y="127.2" stroke="#ffc400"/>
<use href="#cp" x="357.2" y="128.2" stroke="#ffc400"/>
<use href="#pp" x="335.4" y="116.2" stroke="#ffc400"/>
<use href="#mm" x="345.1" y="117.5" stroke="#ffc400"/>
<use href="#mm" x="360.5" y="123.7" stroke="#ffe400"/>
<use href="#cp" x="351.8" y="126.4" stroke="#ffff00"/>
<use href="#mm" x="335.1" y="122.1" stroke="#ffc400"/>
<use href="#mm" x="397.0" y="57.5" stroke="#ea6a0c"/>
<use href="#mm" x="401.0" y="69.0" stroke="#ffa200"/>
<use href="#mm" x="410.0" y="73.0" stroke="#ffa200"/>
<use href="#mm" x="302.0" y="67.0" stroke="#ffff00"/>
<use href="#mm" x="305.0" y="72.0" stroke="#ffff00"/>
<use href="#mm" x="296.0" y="79.0" stroke="#ffff00"/>
<use href="#mm" x="318.0" y="129.0" stroke="#ffa200"/>
<use href="#mm" x="322.0" y="133.0" stroke="#ffa200"/>
<use href="#mm" x="392.0" y="134.0" stroke="#ffff00"/>
<use href="#mm" x="386.0" y="137.0" stroke="#ffa200"/>
<use href="#mm" x="372.0" y="141.0" stroke="#ffa200"/>
<use href="#mm" x="350.0" y="142.0" stroke="#ffa200"/>
<use href="#mm" x="330.0" y="138.0" stroke="#ffa200"/>
<use href="#mm" x="385.0" y="62.0" stroke="#ffa200"/>
<use href="#mm" x="375.0" y="63.0" stroke="#ffa200"/>
</g>
<g stroke-width="1.0">
<use href="#cm" x="103.4" y="31.5" stroke="#ffff00"/>
<use href="#pp" x="61.6" y="53.4" stroke="#ffa200"/>
<use href="#pp" x="123.2" y="68.5" stroke="#ffff00"/>
<use href="#pp" x="38.2" y="88.2" stroke="#f58a10"/>
<use href="#pp" x="25.4" y="96.6" stroke="#ffff00"/>
<use href="#pp" x="164.5" y="94.3" stroke="#ffff00"/>
<use href="#cp" x="195.8" y="45.6" stroke="#ea6a0c"/>
<use href="#mm" x="194.6" y="54.2" stroke="#ffa200"/>
<use href="#cp" x="195.8" y="80.0" stroke="#ffa200"/>
<use href="#cp" x="185.2" y="101.5" stroke="#ffff00"/>
<use href="#pp" x="197.0" y="106.6" stroke="#ffff00"/>
<use href="#mm" x="151.0" y="106.4" stroke="#ffa200"/>
<use href="#mm" x="108.4" y="110.3" stroke="#ffa200"/>
<use href="#cp" x="123.2" y="116.3" stroke="#ffa200"/>
<use href="#cm" x="64.0" y="122.4" stroke="#f58a10"/>
<use href="#pp" x="138.4" y="127.3" stroke="#ffa200"/>
<use href="#cm" x="129.3" y="133.5" stroke="#ffc400"/>
<use href="#cm" x="155.2" y="135.5" stroke="#ffff00"/>
<use href="#pp" x="133.0" y="149.5" stroke="#ffff00"/>
<use href="#pp" x="176.1" y="147.8" stroke="#ffff00"/>
<use href="#mm" x="185.2" y="124.4" stroke="#ffff00"/>
<use href="#mm" x="197.0" y="129.3" stroke="#ea6a0c"/>
<use href="#cm" x="175.4" y="158.4" stroke="#ffe400"/>
<use href="#pp" x="175.4" y="186.0" stroke="#ffff00"/>
<use href="#pp" x="176.8" y="189.2" stroke="#ffff00"/>
<use href="#pp" x="17.2" y="154.7" stroke="#ffa200"/>
<use href="#mm" x="166.3" y="197.0" stroke="#ffa200"/>
<use href="#pp" x="181.2" y="211.2" stroke="#ffa200"/>
<use href="#cm" x="221.1" y="228.5" stroke="#ffa200"/>
<use href="#cp" x="210.7" y="44.0" stroke="#ea6a0c"/>
<use href="#pp" x="206.7" y="37.0" stroke="#ea6a0c"/>
<use href="#pp" x="210.7" y="50.0" stroke="#ffa200"/>
<use href="#cp" x="212.0" y="59.5" stroke="#ffa200"/>
<use href="#cp" x="214.5" y="59.5" stroke="#ffa200"/>
<use href="#mm" x="215.3" y="66.4" stroke="#ffa200"/>
<use href="#cp" x="223.1" y="83.6" stroke="#ffa200"/>
<use href="#pp" x="229.1" y="80.2" stroke="#ffa200"/>
<use href="#pp" x="207.2" y="114.7" stroke="#ffff00"/>
<use href="#pp" x="216.2" y="108.6" stroke="#ffa200"/>
<use href="#pp" x="228.3" y="101.7" stroke="#ffff00"/>
<use href="#cp" x="240.3" y="103.4" stroke="#ffff00"/>
<use href="#pp" x="239.5" y="99.1" stroke="#ffa200"/>
<use href="#mm" x="236.0" y="109.5" stroke="#ffa200"/>
<use href="#mm" x="236.0" y="116.0" stroke="#ffa200"/>
<use href="#pp" x="231.4" y="119.3" stroke="#ffff00"/>
<use href="#cm" x="255.3" y="118.6" stroke="#ffa200"/>
<use href="#pp" x="259.3" y="107.8" stroke="#ffa200"/>
<use href="#cm" x="268.3" y="104.3" stroke="#ffa200"/>
<use href="#mm" x="271.4" y="114.1" stroke="#ffa200"/>
<use href="#pp" x="275.3" y="115.5" stroke="#ffa200"/>
<use href="#cp" x="277.4" y="101.4" stroke="#ffff00"/>
<use href="#cm" x="257.1" y="81.4" stroke="#ffff00"/>
<use href="#mm" x="249.3" y="86.2" stroke="#ffff00"/>
<use href="#pp" x="259.8" y="90.5" stroke="#ffa200"/>
<use href="#cp" x="266.2" y="84.8" stroke="#ffff00"/>
<use href="#cp" x="269.3" y="91.4" stroke="#ffff00"/>
<use href="#mm" x="275.7" y="90.5" stroke="#ffff00"/>
<use href="#pp" x="280.9" y="91.4" stroke="#ffa200"/>
<use href="#cp" x="283.4" y="84.8" stroke="#ffa200"/>
<use href="#cp" x="292.0" y="83.6" stroke="#ea6a0c"/>
<use href="#mm" x="297.0" y="67.2" stroke="#ffff00"/>
<use href="#mm" x="297.0" y="71.0" stroke="#ffff00"/>
<use href="#pp" x="295.0" y="75.0" stroke="#ffff00"/>
<use href="#cp" x="313.6" y="71.0" stroke="#ffff00"/>
<use href="#cp" x="240.3" y="59.5" stroke="#ffa200"/>
<use href="#cp" x="246.9" y="58.3" stroke="#ffa200"/>
<use href="#cp" x="261.9" y="60.7" stroke="#ffa200"/>
<use href="#pp" x="254.5" y="50.0" stroke="#ffa200"/>
<use href="#cp" x="239.5" y="35.7" stroke="#ffa200"/>
<use href="#cp" x="240.5" y="32.0" stroke="#ffa200"/>
<use href="#pp" x="258.4" y="15.5" stroke="#ffa200"/>
<use href="#cp" x="287.2" y="15.5" stroke="#ffa200"/>
<use href="#mm" x="302.4" y="56.6" stroke="#ffff00"/>
<use href="#mm" x="341.0" y="48.0" stroke="#ffff00"/>
<use href="#cp" x="208.8" y="137.6" stroke="#ffa200"/>
<use href="#pp" x="215.0" y="135.0" stroke="#ffa200"/>
<use href="#cp" x="236.4" y="134.6" stroke="#ffa200"/>
<use href="#mm" x="185.4" y="124.5" stroke="#ffa200"/>
<use href="#pp" x="138.1" y="127.0" stroke="#ffa200"/>
<use href="#mm" x="286.4" y="136.3" stroke="#ffff00"/>
<use href="#pp" x="287.5" y="140.2" stroke="#ffff00"/>
<use href="#cm" x="323.8" y="135.1" stroke="#ffa200"/>
<use href="#mm" x="308.3" y="151.0" stroke="#ffa200"/>
<use href="#mm" x="316.7" y="150.3" stroke="#ffa200"/>
<use href="#mm" x="264.0" y="149.3" stroke="#ffff00"/>
<use href="#cp" x="209.3" y="136.2" stroke="#ffff00"/>
<use href="#mm" x="185.5" y="124.5" stroke="#ffff00"/>
<use href="#mm" x="198.0" y="129.3" stroke="#ea6a0c"/>
<use href="#pp" x="555.2" y="41.4" stroke="#ffc400"/>
<use href="#cm" x="535.3" y="119.5" stroke="#ffa200"/>
<use href="#cp" x="613.4" y="19.4" stroke="#ffa200"/>
<use href="#mm" x="688.7" y="248.2" stroke="#ffe400"/>
<use href="#mm" x="699.6" y="531.1" stroke="#ffa200"/>
<use href="#mm" x="343.0" y="47.0" stroke="#ffff00"/>
<use href="#cp" x="417.0" y="80.0" stroke="#ffff00"/>
<use href="#cp" x="420.0" y="95.5" stroke="#ffff00"/>
<use href="#cp" x="418.0" y="102.5" stroke="#ffff00"/>
<use href="#cm" x="410.0" y="75.0" stroke="#ffff00"/>
<use href="#cm" x="405.0" y="85.0" stroke="#ffa200"/>
<use href="#cp" x="408.0" y="127.0" stroke="#ffe400"/>
<use href="#cp" x="351.6" y="68.4" stroke="#00f0f0"/>
<use href="#pp" x="367.8" y="68.4" stroke="#00f0f0"/>
<use href="#cm" x="386.5" y="77.2" stroke="#00f0f0"/>
<use href="#cp" x="357.7" y="86.9" stroke="#00f0f0"/>
<use href="#mm" x="364.0" y="83.5" stroke="#00f0f0"/>
<use href="#cp" x="345.7" y="104.5" stroke="#00f0f0"/>
<use href="#cp" x="375.6" y="102.4" stroke="#00f0f0"/>
</g>
<path d="M277,62L296,81L277,100L258,81Z" fill="none" stroke="#10e020" stroke-width="1" stroke-dasharray="4,3"/>
<path d="M364,54L376,66M364,54L356,62" fill="none" stroke="#f0e000" stroke-width="1" stroke-dasharray="4,3"/>
<path d="M218.7,140L263,97M305.6,133.3L350.5,89.3" stroke="#d8d8d8" stroke-width="1" fill="none"/>
<text x="207.7" y="152.8" font-size="9.6" fill="#f4f4f4" style="font-family:'DejaVu Sans Mono','Liberation Mono',monospace" textLength="52.8" lengthAdjust="spacing">B-6177<tspan fill="#ff1818" font-weight="bold">+</tspan>1</text>
<text x="294.2" y="145.8" font-size="9.6" fill="#f4f4f4" style="font-family:'DejaVu Sans Mono','Liberation Mono',monospace" textLength="52.8" lengthAdjust="spacing">R-2588<tspan fill="#ff1818" font-weight="bold">+</tspan>8</text>
<path d="M349.5,142.5L351.5,145.5L354,142.5" fill="none" stroke="#f0e000" stroke-width="1"/>
<circle cx="406.5" cy="407" r="160" fill="none" stroke="#e4e4e4" stroke-width="0.8"/>
<circle cx="406.5" cy="407" r="280" fill="none" stroke="#e4e4e4" stroke-width="0.8"/>
<circle cx="406.5" cy="407" r="400" fill="none" stroke="#e4e4e4" stroke-width="0.8"/>
<circle cx="406.5" cy="407" r="520" fill="none" stroke="#e4e4e4" stroke-width="0.8"/>
<circle cx="406.5" cy="407" r="40" fill="none" stroke="#e8141c" stroke-width="1.3"/>
<rect x="394.6" y="5" width="21.4" height="3.6" fill="#5d4f4a"/><rect x="394.6" y="245" width="21.4" height="3" fill="#5d4f4a"/>
<text x="395.5" y="11.6" font-size="9.6" fill="#ffffb0" style="font-family:'DejaVu Sans Mono','Liberation Mono',monospace" textLength="20" lengthAdjust="spacing">313</text>
<text x="395.5" y="251.4" font-size="9.6" fill="#ffffb0" style="font-family:'DejaVu Sans Mono','Liberation Mono',monospace" textLength="20" lengthAdjust="spacing">125</text>
<text x="399.6" y="371" font-size="9.6" fill="#ffffb0" style="font-family:'DejaVu Sans Mono','Liberation Mono',monospace" textLength="13" lengthAdjust="spacing">31</text>
<text x="396.5" y="131" font-size="9.6" fill="#ffffb0" style="font-family:'DejaVu Sans Mono','Liberation Mono',monospace" textLength="20" lengthAdjust="spacing">219</text>
<rect x="8.5" y="759.5" width="244" height="44" fill="#000" stroke="#9a9a9a"/>
<text x="13.4" y="770.6" font-size="9.5" fill="#e4e4e4" textLength="35.4" lengthAdjust="spacingAndGlyphs">Symbols</text>
<text x="13.4" y="783.9" font-size="9.5" fill="#e4e4e4" textLength="29" lengthAdjust="spacingAndGlyphs">Recent</text>
<text x="13.4" y="796.7" font-size="9.5" fill="#e4e4e4" textLength="14.5" lengthAdjust="spacingAndGlyphs">Old</text>
<text x="53.1" y="770.6" font-size="9.5" fill="#e4e4e4" textLength="17" lengthAdjust="spacingAndGlyphs">-CG</text>
<text x="78" y="770.6" font-size="9.5" fill="#e4e4e4" textLength="14.2" lengthAdjust="spacingAndGlyphs">-IC</text>
<text x="99" y="770.6" font-size="9.5" fill="#e4e4e4" textLength="19.8" lengthAdjust="spacingAndGlyphs">+CG</text>
<text x="123.7" y="770.6" font-size="9.5" fill="#e4e4e4" textLength="17.8" lengthAdjust="spacingAndGlyphs">+IC</text>
<text x="153.5" y="770.8" font-size="9.5" fill="#e4e4e4" textLength="89" lengthAdjust="spacingAndGlyphs">Strike age color codes</text>
<text x="153.5" y="783.4" font-size="9.5" fill="#ffe000" textLength="16.2" lengthAdjust="spacingAndGlyphs">15+</text>
<text x="188.8" y="783.4" font-size="9.5" fill="#ffa800" textLength="16.2" lengthAdjust="spacingAndGlyphs">30+</text>
<text x="223.3" y="783.4" font-size="9.5" fill="#ff9000" textLength="16.2" lengthAdjust="spacingAndGlyphs">45+</text>
<text x="153.5" y="796.2" font-size="9.5" fill="#f07800" textLength="16.2" lengthAdjust="spacingAndGlyphs">60+</text>
<text x="188.8" y="796.2" font-size="9.5" fill="#f06000" textLength="16.2" lengthAdjust="spacingAndGlyphs">75+</text>
<text x="223.3" y="796.2" font-size="9.5" fill="#f03000" textLength="16.2" lengthAdjust="spacingAndGlyphs">90+</text>
<g stroke-width="1">
<use href="#cm" x="60.3" y="780.4" stroke="#00f0f0"/><use href="#mm" x="85.3" y="780.4" stroke="#00f0f0"/><use href="#cp" x="110.2" y="780.4" stroke="#00f0f0"/><use href="#pp" x="135.4" y="780.4" stroke="#00f0f0"/>
<use href="#cm" x="60.3" y="793.4" stroke="#ffff00"/><use href="#mm" x="85.3" y="793.4" stroke="#ffff00"/><use href="#cp" x="110.2" y="793.4" stroke="#ffff00"/><use href="#pp" x="135.4" y="793.4" stroke="#ffff00"/>
</g>
<rect x="685" y="792" width="125" height="20" fill="#000"/>
<text x="689" y="802" font-size="9.5" fill="#f0f0f0" textLength="113" lengthAdjust="spacingAndGlyphs">©2005 Astrogenic Systems</text>
</svg>
<g id="panel">
<rect x="812.5" y="8.5" width="319" height="319" fill="#000" stroke="#b8b8b8" rx="6"/>
<rect x="812.5" y="333.5" width="319" height="114" fill="#000" stroke="#b8b8b8" rx="6"/>
<rect x="812.5" y="453.5" width="319" height="349" fill="#000" stroke="#b8b8b8" rx="6"/>
<rect x="819.5" y="16.5" width="57" height="17" fill="#5c0000" stroke="#e0e0e0"/>
<text x="848.5" y="29.7" font-size="12" fill="#d8d8d8" font-weight="bold" text-anchor="middle" textLength="48" lengthAdjust="spacingAndGlyphs">STRIKE</text>
<rect x="883.5" y="16.5" width="57" height="17" fill="#3a3a3a" stroke="#e0e0e0"/>
<text x="912.3" y="29.7" font-size="12" fill="#c8c8c8" font-weight="bold" text-anchor="middle" textLength="42" lengthAdjust="spacingAndGlyphs">NOISE</text>
<rect x="994.5" y="16.5" width="127" height="17" fill="#262626" stroke="#e0e0e0"/>
<text x="998.7" y="29.5" font-size="13" fill="#fff" font-weight="bold" textLength="62" lengthAdjust="spacingAndGlyphs">Bng 352°</text>
<text x="1117.6" y="29.5" font-size="13" fill="#00f000" font-weight="bold" text-anchor="end" textLength="41" lengthAdjust="spacingAndGlyphs">253mi</text>
<rect x="821.5" y="64.5" width="81" height="15" fill="#5a5a5a" stroke="#d8d8d8"/>
<text x="829.1" y="75.7" font-size="11" fill="#f0f0f0" textLength="66.1" lengthAdjust="spacingAndGlyphs">Strikes/min</text>
<rect x="931.5" y="64.5" width="81" height="15" fill="#5a5a5a" stroke="#d8d8d8"/>
<text x="943.3" y="75.7" font-size="11" fill="#f0f0f0" textLength="57.7" lengthAdjust="spacingAndGlyphs">Close/min</text>
<rect x="1041.5" y="64.5" width="81" height="15" fill="#5a5a5a" stroke="#d8d8d8"/>
<text x="1050.6" y="75.7" font-size="11" fill="#f0f0f0" textLength="62.2" lengthAdjust="spacingAndGlyphs">Noises/min</text>
<text x="902.6" y="111.8" font-size="27.5" fill="#fff" font-weight="bold" text-anchor="end">8</text>
<text x="1012.2" y="111.8" font-size="27.5" fill="#fff" font-weight="bold" text-anchor="end">0</text>
<text x="1122.2" y="111.8" font-size="27.5" fill="#c0c0c0" font-weight="bold" text-anchor="end">0</text>
<text x="826.1" y="142.8" font-size="13" fill="#fff" textLength="76.5" lengthAdjust="spacingAndGlyphs">Total Strikes</text>
<text x="944.5" y="142.8" font-size="13" fill="#fff" textLength="67.8" lengthAdjust="spacingAndGlyphs">Total Close</text>
<text x="1047.1" y="142.8" font-size="13" fill="#c0c0c0" textLength="75.4" lengthAdjust="spacingAndGlyphs">Total Noises</text>
<text x="902.6" y="161" font-size="13" fill="#fff" text-anchor="end" textLength="30.8" lengthAdjust="spacingAndGlyphs">6625</text>
<text x="1012.3" y="161" font-size="13" fill="#fff" text-anchor="end">0</text>
<text x="1122.5" y="161" font-size="13" fill="#fff" text-anchor="end" textLength="23" lengthAdjust="spacingAndGlyphs">362</text>
<text x="821.1" y="214.9" font-size="13" fill="#c0c0c0" textLength="164.4" lengthAdjust="spacingAndGlyphs">Lightning type distribution</text>
<line x1="821" y1="216.5" x2="1124" y2="216.5" stroke="#a0a0a0"/>
<text x="821" y="236.5" font-size="12" fill="#fff" font-weight="bold" textLength="84.5" lengthAdjust="spacingAndGlyphs">Cloud-ground</text>
<text x="912.3" y="236.5" font-size="12" fill="#f4f4f4" font-weight="bold">+</text>
<rect x="925.5" y="227.5" width="50" height="10" fill="#000" stroke="#a8a8a8" rx="2"/>
<rect x="926" y="228" width="18" height="9" fill="#ff0000"/>
<text x="979.1" y="236.5" font-size="12" fill="#fff" font-weight="bold" textLength="29.3" lengthAdjust="spacingAndGlyphs">37%</text>
<text x="1016.3" y="235.6" font-size="14" fill="#d0d0d0" font-weight="bold" textLength="6.2" lengthAdjust="spacingAndGlyphs">-</text>
<rect x="1028.5" y="227.5" width="50" height="10" fill="#000" stroke="#a8a8a8" rx="2"/>
<rect x="1029" y="228" width="7.5" height="9" fill="#99ccff"/>
<text x="1082.7" y="236.5" font-size="12" fill="#fff" font-weight="bold" textLength="28.5" lengthAdjust="spacingAndGlyphs">15%</text>
<text x="821" y="260.6" font-size="12" fill="#c0c0c0" font-weight="bold">Count</text>
<text x="925.5" y="260.6" font-size="12" fill="#fff" font-weight="bold" textLength="31.1" lengthAdjust="spacingAndGlyphs">2429</text>
<text x="1028.7" y="260.6" font-size="12" fill="#fff" font-weight="bold" textLength="30.7" lengthAdjust="spacingAndGlyphs">1008</text>
<text x="821" y="290.5" font-size="12" fill="#fff" font-weight="bold">Intracloud</text>
<text x="912.3" y="290.5" font-size="12" fill="#f4f4f4" font-weight="bold">+</text>
<rect x="925.5" y="281.5" width="50" height="10" fill="#000" stroke="#a8a8a8" rx="2"/>
<rect x="926" y="282" width="7" height="9" fill="#f060b0"/>
<text x="979.1" y="290.5" font-size="12" fill="#fff" font-weight="bold" textLength="29.3" lengthAdjust="spacingAndGlyphs">14%</text>
<text x="1016.3" y="289.6" font-size="14" fill="#d0d0d0" font-weight="bold" textLength="6.2" lengthAdjust="spacingAndGlyphs">-</text>
<rect x="1028.5" y="281.5" width="50" height="10" fill="#000" stroke="#a8a8a8" rx="2"/>
<rect x="1029" y="282" width="17.5" height="9" fill="#00ff00"/>
<text x="1082.7" y="290.5" font-size="12" fill="#fff" font-weight="bold" textLength="28.5" lengthAdjust="spacingAndGlyphs">34%</text>
<text x="821" y="314.6" font-size="12" fill="#c0c0c0" font-weight="bold">Count</text>
<text x="925.5" y="314.6" font-size="12" fill="#fff" font-weight="bold">936</text>
<text x="1028.7" y="314.6" font-size="12" fill="#fff" font-weight="bold" textLength="30.7" lengthAdjust="spacingAndGlyphs">2252</text>
<text x="821.4" y="352.7" font-size="16" fill="#00f400" font-weight="bold" textLength="213.2" lengthAdjust="spacingAndGlyphs">10/25/2025 6:49:16 AM</text>
<line x1="821" y1="358.5" x2="1123" y2="358.5" stroke="#a0a0a0"/>
<text x="820.9" y="387.8" font-size="12.4" fill="#fff" textLength="47.8" lengthAdjust="spacingAndGlyphs">Squelch</text>
<text x="909.4" y="387.8" font-size="12.4" fill="#fff">0</text>
<text x="981.3" y="387.8" font-size="12.4" fill="#fff" textLength="42.5" lengthAdjust="spacingAndGlyphs">Upload</text>
<text x="1060.9" y="387.8" font-size="12.4" fill="#c0c0c0" textLength="52.9" lengthAdjust="spacingAndGlyphs">Disabled</text>
<text x="820.9" y="407.6" font-size="12.4" fill="#fff" textLength="72.2" lengthAdjust="spacingAndGlyphs">Persistence</text>
<text x="909.4" y="407.6" font-size="12.4" fill="#fff" textLength="40.7" lengthAdjust="spacingAndGlyphs">90 min</text>
<text x="981.3" y="407.6" font-size="12.4" fill="#fff" textLength="49.3" lengthAdjust="spacingAndGlyphs">Capture</text>
<text x="1060.9" y="407.6" font-size="12.4" fill="#00ec00" textLength="35.6" lengthAdjust="spacingAndGlyphs">Active</text>
<text x="820.9" y="427.5" font-size="12.4" fill="#fff" textLength="39.5" lengthAdjust="spacingAndGlyphs">Range</text>
<text x="909.4" y="427.5" font-size="12.4" fill="#fff" textLength="40.7" lengthAdjust="spacingAndGlyphs">313 mi</text>
<text x="981.3" y="427.5" font-size="12.4" fill="#fff" textLength="51.4" lengthAdjust="spacingAndGlyphs">Receiver</text>
<text x="1060.9" y="427.5" font-size="12.4" fill="#00ec00" textLength="49.6" lengthAdjust="spacingAndGlyphs">Enabled</text>
<text x="820.9" y="474.9" font-size="12.4" fill="#c0c0c0" textLength="42.5" lengthAdjust="spacingAndGlyphs">Uptime</text>
<text x="910.5" y="474.9" font-size="12.4" fill="#fff" textLength="43.1" lengthAdjust="spacingAndGlyphs">194:19</text>
<text x="981.3" y="474.9" font-size="12.4" fill="#c0c0c0" textLength="60.3" lengthAdjust="spacingAndGlyphs">Peak time</text>
<text x="1060.9" y="474.9" font-size="12.4" fill="#c0c0c0" textLength="23.2" lengthAdjust="spacingAndGlyphs">Plot</text>
<text x="820.9" y="497.9" font-size="12.4" fill="#c0c0c0" textLength="59.7" lengthAdjust="spacingAndGlyphs">Peak rate</text>
<text x="909.4" y="497.9" font-size="12.4" fill="#fff" textLength="41.6" lengthAdjust="spacingAndGlyphs">43/min</text>
<text x="981.3" y="497.9" font-size="12.4" fill="#fff" textLength="49.3" lengthAdjust="spacingAndGlyphs">4:22 AM</text>
<text x="1060.9" y="497.9" font-size="12.4" fill="#fff" textLength="35" lengthAdjust="spacingAndGlyphs">Strike</text>
<text x="822.5" y="527.6" font-size="12.4" fill="#c0c0c0" textLength="76" lengthAdjust="spacingAndGlyphs">Trend graph</text>
<text x="908.9" y="527.6" font-size="12.4" fill="#fff" textLength="40.7" lengthAdjust="spacingAndGlyphs">60 min</text>
</g>
<g id="graph">
<polyline points="822.3,757.7 823.5,766.4 825.4,770.0 827.2,763.9 830.3,763.9 834.0,762.7 836.5,750.3 840.2,749.1 842.0,755.3 843.9,754.0 845.7,759.0 847.6,768.8 850.6,776.2 852.5,768.8 854.9,759.0 857.4,770.0 860.5,771.3 863.6,770.0 866.6,768.8 869.7,766.4 872.8,759.0 874.7,768.8 877.7,776.2 880.8,767.6 883.9,762.7 886.3,751.6 889.4,750.3 891.9,759.0 893.1,771.3 895.6,776.5 899.3,772.5 903.0,775.0 906.7,772.5 911.6,771.9 915.3,768.8 919.0,772.5 922.7,770.0 925.1,760.2 927.6,770.0 931.3,767.6 933.8,768.8 936.8,776.2 939.9,773.7 942.4,776.5 946.7,772.5 948.5,762.7 950.8,744.2 950.0,749.1 953.7,754.0 955.5,771.3 959.2,771.3 962.3,768.8 967.2,762.7 970.3,770.0 972.8,776.2 975.9,772.5 980.8,771.3 984.5,767.6 988.2,768.8 991.9,770.0 995.0,776.5 998.6,762.7 1000.5,757.7 1003.6,750.3 1006.7,749.1 1010.3,749.1 1011.6,759.0 1013.4,771.3 1016.5,766.4 1020.2,759.0 1023.9,762.7 1026.4,767.6 1030.0,751.6 1032.5,759.0 1035.0,763.9 1037.4,768.8 1041.1,762.7 1043.6,775.0 1047.3,772.5 1051.0,770.0 1054.7,772.5 1058.4,763.9 1061.5,766.4 1064.5,772.5 1068.2,762.7 1071.3,756.5 1073.2,755.3 1075.6,768.8 1079.3,766.4 1082.4,765.1 1084.9,768.8 1086.1,776.5" fill="none" stroke="#99ccff" stroke-width="1.0" stroke-linejoin="miter" shape-rendering="crispEdges"/>
<polyline points="822.3,771.3 824.2,768.8 826.0,772.5 827.9,770.0 829.7,763.9 832.2,768.8 835.2,772.5 838.3,767.6 841.4,762.7 843.9,757.7 845.7,766.4 848.2,770.0 851.3,771.3 853.7,776.5 856.2,766.4 859.9,761.4 862.3,762.7 865.4,768.8 867.9,776.5 871.0,763.9 873.4,761.4 874.7,776.5 877.1,776.5 880.8,763.9 883.3,768.8 885.1,763.9 887.0,771.3 889.4,768.8 892.5,750.3 895.0,759.0 896.8,766.4 899.3,768.8 903.0,772.5 906.1,766.4 908.5,751.6 911.6,763.9 914.7,759.0 917.1,754.0 919.6,763.9 922.1,772.5 926.4,772.5 929.5,768.8 932.5,772.5 935.0,766.4 938.1,773.7 941.2,771.3 944.8,763.9 947.3,765.1 950.4,754.0 950.0,754.0 953.7,763.9 957.4,772.5 961.7,763.9 964.8,771.3 969.1,760.2 971.6,768.8 974.6,772.5 978.9,763.9 982.6,765.1 985.7,768.8 989.4,763.9 992.5,770.0 996.8,762.7 999.3,766.4 1001.7,776.5 1003.0,759.0 1006.0,750.3 1008.5,763.9 1011.6,760.2 1015.9,762.7 1019.0,759.0 1021.4,768.8 1024.5,776.2 1028.8,763.9 1031.9,756.5 1034.4,762.7 1037.4,771.3 1039.9,761.4 1042.4,770.0 1044.8,776.2 1048.5,771.3 1051.0,768.8 1054.7,763.9 1058.4,763.9 1062.1,771.3 1065.1,775.6 1068.2,771.3 1071.9,768.8 1075.0,763.9 1078.1,768.8 1080.5,766.4 1083.6,775.0 1085.5,776.5" fill="none" stroke="#f070b8" stroke-width="1.0" stroke-linejoin="miter" shape-rendering="crispEdges"/>
<polyline points="822.3,729.4 823.5,754.0 825.4,763.9 827.2,751.6 829.1,755.3 830.9,749.1 832.8,752.8 835.2,739.3 837.7,736.8 839.6,747.9 842.0,754.0 843.9,744.2 847.6,721.4 848.8,741.7 850.6,751.6 852.5,756.5 854.9,745.4 857.4,750.3 859.9,759.0 862.3,762.7 864.8,756.5 867.3,749.1 869.1,735.6 871.0,759.0 873.4,763.9 875.3,750.3 877.1,761.4 879.6,739.3 883.3,716.5 885.7,735.6 887.0,744.2 889.4,736.8 891.9,743.0 894.4,726.9 896.6,711.6 898.0,733.1 899.9,725.7 901.7,747.9 904.2,741.7 906.1,751.6 907.9,739.3 910.4,734.3 914.1,721.4 916.5,741.7 919.0,756.5 922.7,749.1 925.1,763.9 927.6,754.0 930.7,739.3 933.8,749.1 936.2,767.6 939.3,741.7 941.8,730.6 943.6,747.9 946.1,741.7 950.4,721.4 951.6,725.7 950.0,721.4 952.5,731.9 954.9,749.1 958.6,751.6 962.3,745.4 966.0,714.6 969.5,697.4 972.2,720.8 974.0,739.3 975.9,725.7 978.3,741.7 980.8,762.7 983.3,759.0 985.7,741.7 990.6,725.7 993.1,741.7 995.0,756.5 998.0,750.3 999.9,763.9 1002.3,776.2 1003.6,744.2 1006.0,724.5 1008.5,728.2 1011.3,711.6 1013.4,733.1 1016.5,749.1 1019.0,751.6 1021.4,745.4 1023.9,743.0 1024.5,752.8 1028.2,721.4 1030.7,736.8 1033.7,750.3 1036.2,744.2 1041.1,755.3 1046.1,736.8 1048.5,730.6 1051.0,744.2 1054.7,739.3 1058.4,756.5 1060.2,762.7 1062.7,745.4 1065.1,754.0 1067.0,763.9 1071.3,749.1 1073.8,730.6 1075.6,747.9 1078.1,754.0 1081.2,749.1 1084.2,756.5 1085.5,761.4" fill="none" stroke="#ff0000" stroke-width="1.0" stroke-linejoin="miter" shape-rendering="crispEdges"/>
<polyline points="822.3,749.1 824.2,752.8 826.6,725.7 829.1,725.7 830.9,751.6 833.4,739.3 835.5,721.4 837.7,730.6 839.6,743.0 842.0,730.6 843.5,716.5 845.1,731.9 847.6,741.7 850.0,757.7 851.9,739.3 853.7,725.7 856.2,734.3 858.6,747.9 861.1,744.2 863.6,731.9 865.8,725.7 867.3,733.1 869.7,751.6 871.0,762.7 874.0,763.9 875.9,768.8 878.3,756.5 882.0,750.3 885.1,749.1 886.3,763.9 888.8,743.0 890.7,735.6 892.5,721.4 894.4,731.9 896.0,716.5 898.0,735.6 900.5,739.3 903.0,725.7 904.2,721.4 906.7,733.1 909.1,759.0 911.6,747.9 914.7,739.3 917.1,749.1 919.6,761.4 921.4,768.8 923.9,759.0 926.4,739.3 928.2,759.0 930.1,752.8 932.5,763.9 935.0,758.3 939.3,757.7 942.4,754.0 944.8,752.8 948.5,735.6 951.0,743.0 950.0,743.0 952.5,751.6 954.9,759.0 958.0,763.9 961.1,752.8 963.5,750.3 967.2,746.7 969.7,722.0 971.6,721.4 973.4,736.8 975.2,763.9 979.6,756.5 982.0,739.3 983.9,734.3 985.1,739.3 990.6,739.3 993.1,749.1 996.2,768.8 998.0,751.6 1001.1,750.3 1003.0,762.7 1006.0,754.0 1009.1,763.9 1014.0,757.7 1016.5,743.0 1019.6,721.4 1021.4,729.4 1022.7,725.7 1024.5,739.3 1027.6,721.4 1030.7,725.7 1032.5,744.2 1034.4,739.3 1036.2,747.9 1038.7,734.3 1042.4,716.5 1046.1,728.2 1048.5,739.3 1051.6,763.9 1054.1,744.2 1055.9,730.6 1058.4,745.4 1060.8,754.0 1064.5,752.8 1067.0,744.2 1070.1,754.0 1073.2,755.3 1075.6,752.8 1078.7,754.0 1080.5,763.9 1084.2,768.8 1086.7,776.5 1088.5,776.5" fill="none" stroke="#00ff00" stroke-width="1.0" stroke-linejoin="miter" shape-rendering="crispEdges"/>
<polyline points="822.3,725.1 822.4,678.2 823.5,697.4 825.4,706.6 827.2,697.4 829.3,688.1 830.9,697.4 832.5,706.6 834.0,697.4 834.3,670.8 835.2,649.9 837.7,654.2 838.9,665.3 839.9,677.6 841.4,688.7 842.6,669.0 843.5,649.9 844.5,669.6 845.6,660.3 846.6,659.1 847.6,672.0 848.5,691.7 848.8,702.3 849.8,716.5 851.3,706.0 853.1,699.2 854.3,675.1 855.6,669.0 856.8,677.6 857.7,687.4 858.6,697.4 859.5,683.1 861.1,706.0 861.7,711.6 862.3,688.1 864.6,711.6 865.4,683.1 867.3,692.4 868.5,688.1 869.7,702.3 871.6,712.8 872.8,716.5 874.0,725.7 875.3,735.6 875.9,730.6 877.1,739.3 877.7,749.1 879.0,728.2 879.6,701.1 881.1,697.4 880.6,675.1 882.3,664.0 883.9,670.2 885.5,673.9 886.0,688.1 886.6,702.3 887.6,681.3 888.4,666.5 889.7,659.1 891.3,669.6 891.6,650.5 892.5,631.0 893.4,643.1 894.6,678.8 895.6,643.1 896.6,631.0 897.4,655.4 898.0,678.2 899.3,673.3 900.3,682.5 901.7,697.4 902.7,702.3 903.6,678.2 904.8,689.9 905.7,678.8 906.4,664.0 907.7,673.9 908.5,702.3 909.7,694.9 910.6,697.4 912.2,676.4 913.4,673.9 914.4,669.6 915.9,677.6 916.5,686.2 917.8,691.1 918.4,701.1 919.6,713.4 921.2,735.6 922.7,715.9 924.5,708.5 926.4,702.3 928.2,733.1 929.5,713.4 930.7,706.0 931.9,712.2 933.8,718.3 936.2,735.6 938.1,726.9 939.3,714.6 941.2,697.4 942.4,710.9 947.3,702.3 948.5,661.0 950.4,646.8 951.6,641.3 952.5,653.0 953.1,676.4 954.3,693.7 955.5,710.9 957.6,730.0 959.6,720.8 961.7,708.5 962.3,691.8 963.3,707.2 964.2,715.9 965.0,697.4 965.4,673.9 966.6,653.0 968.5,646.8 968.5,629.6 969.5,612.1 970.3,623.4 970.9,645.0 972.2,660.3 973.4,673.9 974.6,693.6 975.2,701.7 976.5,697.4 977.7,701.1 979.6,712.2 980.5,725.7 981.4,704.8 982.6,698.6 984.5,689.9 985.7,682.5 986.6,678.2 987.3,688.1 988.4,677.0 989.4,673.3 990.6,677.0 992.5,681.9 992.9,709.7 994.1,725.7 995.3,744.2 996.6,739.3 997.4,725.7 999.0,716.5 1000.5,720.8 1001.7,735.6 1003.0,713.4 1003.6,681.3 1004.2,657.3 1005.4,649.9 1007.6,649.9 1007.9,666.5 1008.9,683.7 1009.7,667.1 1011.2,659.1 1011.6,669.0 1012.6,669.6 1012.8,688.1 1014.0,701.1 1015.3,706.0 1016.7,705.4 1017.5,685.0 1018.3,671.4 1019.6,664.0 1020.2,673.9 1020.8,683.7 1021.4,675.1 1022.4,664.0 1023.3,673.9 1023.9,692.4 1024.5,702.3 1024.5,687.4 1025.4,670.2 1027.0,663.4 1027.6,648.0 1028.6,636.1 1029.4,642.5 1029.8,653.6 1030.7,666.5 1031.9,678.2 1033.1,688.1 1034.4,702.3 1035.0,697.4 1035.6,693.6 1037.7,687.4 1038.7,676.4 1039.5,669.2 1040.5,678.8 1041.4,673.9 1042.4,669.2 1043.0,681.3 1044.2,693.6 1045.4,696.8 1046.4,683.1 1047.9,689.9 1049.1,701.1 1050.4,709.7 1051.6,725.1 1052.8,719.6 1054.1,697.4 1054.7,694.8 1055.5,678.2 1056.5,686.2 1057.8,689.3 1058.4,702.3 1059.6,712.2 1061.5,707.2 1062.7,706.0 1064.5,730.0 1065.8,716.5 1068.8,716.5 1070.1,702.3 1071.3,697.4 1072.2,690.5 1073.5,683.1 1074.6,687.4 1075.6,694.8 1076.2,708.5 1077.5,725.1 1079.3,725.1 1080.5,711.6 1081.8,719.6 1082.8,730.0 1084.2,739.3 1085.5,762.7 1086.7,749.1 1087.7,759.0" fill="none" stroke="#ffffff" stroke-width="1.0" stroke-linejoin="miter" shape-rendering="crispEdges"/>
<path d="M822.5,777.5H1088.5V542.5" fill="none" stroke="#c4c4c4" shape-rendering="crispEdges"/>
<line x1="822.5" y1="775" x2="822.5" y2="780" stroke="#c4c4c4" shape-rendering="crispEdges"/>
<line x1="867.5" y1="775" x2="867.5" y2="780" stroke="#c4c4c4" shape-rendering="crispEdges"/>
<line x1="911.5" y1="775" x2="911.5" y2="780" stroke="#c4c4c4" shape-rendering="crispEdges"/>
<line x1="956.5" y1="775" x2="956.5" y2="780" stroke="#c4c4c4" shape-rendering="crispEdges"/>
<line x1="1000.5" y1="775" x2="1000.5" y2="780" stroke="#c4c4c4" shape-rendering="crispEdges"/>
<line x1="1044.5" y1="775" x2="1044.5" y2="780" stroke="#c4c4c4" shape-rendering="crispEdges"/>
<line x1="1089.5" y1="775" x2="1089.5" y2="780" stroke="#c4c4c4" shape-rendering="crispEdges"/>
<line x1="1084" y1="542.5" x2="1089" y2="542.5" stroke="#c4c4c4" shape-rendering="crispEdges"/>
<text x="1092" y="546.1" font-size="12" fill="#c0c0c0">50</text>
<line x1="1084" y1="590.5" x2="1089" y2="590.5" stroke="#c4c4c4" shape-rendering="crispEdges"/>
<text x="1092" y="594.1" font-size="12" fill="#c0c0c0">40</text>
<line x1="1084" y1="636.5" x2="1089" y2="636.5" stroke="#c4c4c4" shape-rendering="crispEdges"/>
<text x="1092" y="640.1" font-size="12" fill="#c0c0c0">30</text>
<line x1="1084" y1="684.5" x2="1089" y2="684.5" stroke="#c4c4c4" shape-rendering="crispEdges"/>
<text x="1092" y="688.1" font-size="12" fill="#c0c0c0">20</text>
<line x1="1084" y1="730.5" x2="1089" y2="730.5" stroke="#c4c4c4" shape-rendering="crispEdges"/>
<text x="827.0" y="793.3" font-size="12" fill="#c0c0c0" text-anchor="middle">60</text>
<text x="871.4" y="793.3" font-size="12" fill="#c0c0c0" text-anchor="middle">50</text>
<text x="915.7" y="793.3" font-size="12" fill="#c0c0c0" text-anchor="middle">40</text>
<text x="960.0" y="793.3" font-size="12" fill="#c0c0c0" text-anchor="middle">30</text>
<text x="1004.4" y="793.3" font-size="12" fill="#c0c0c0" text-anchor="middle">20</text>
<text x="1048.8" y="793.3" font-size="12" fill="#c0c0c0" text-anchor="middle">10</text>
<text x="1089.1" y="793.3" font-size="12" fill="#c0c0c0" text-anchor="middle">0</text>
<text x="1100" y="793.3" font-size="12" fill="#c0c0c0">min</text>
</g>
</svg>
</body></html>
